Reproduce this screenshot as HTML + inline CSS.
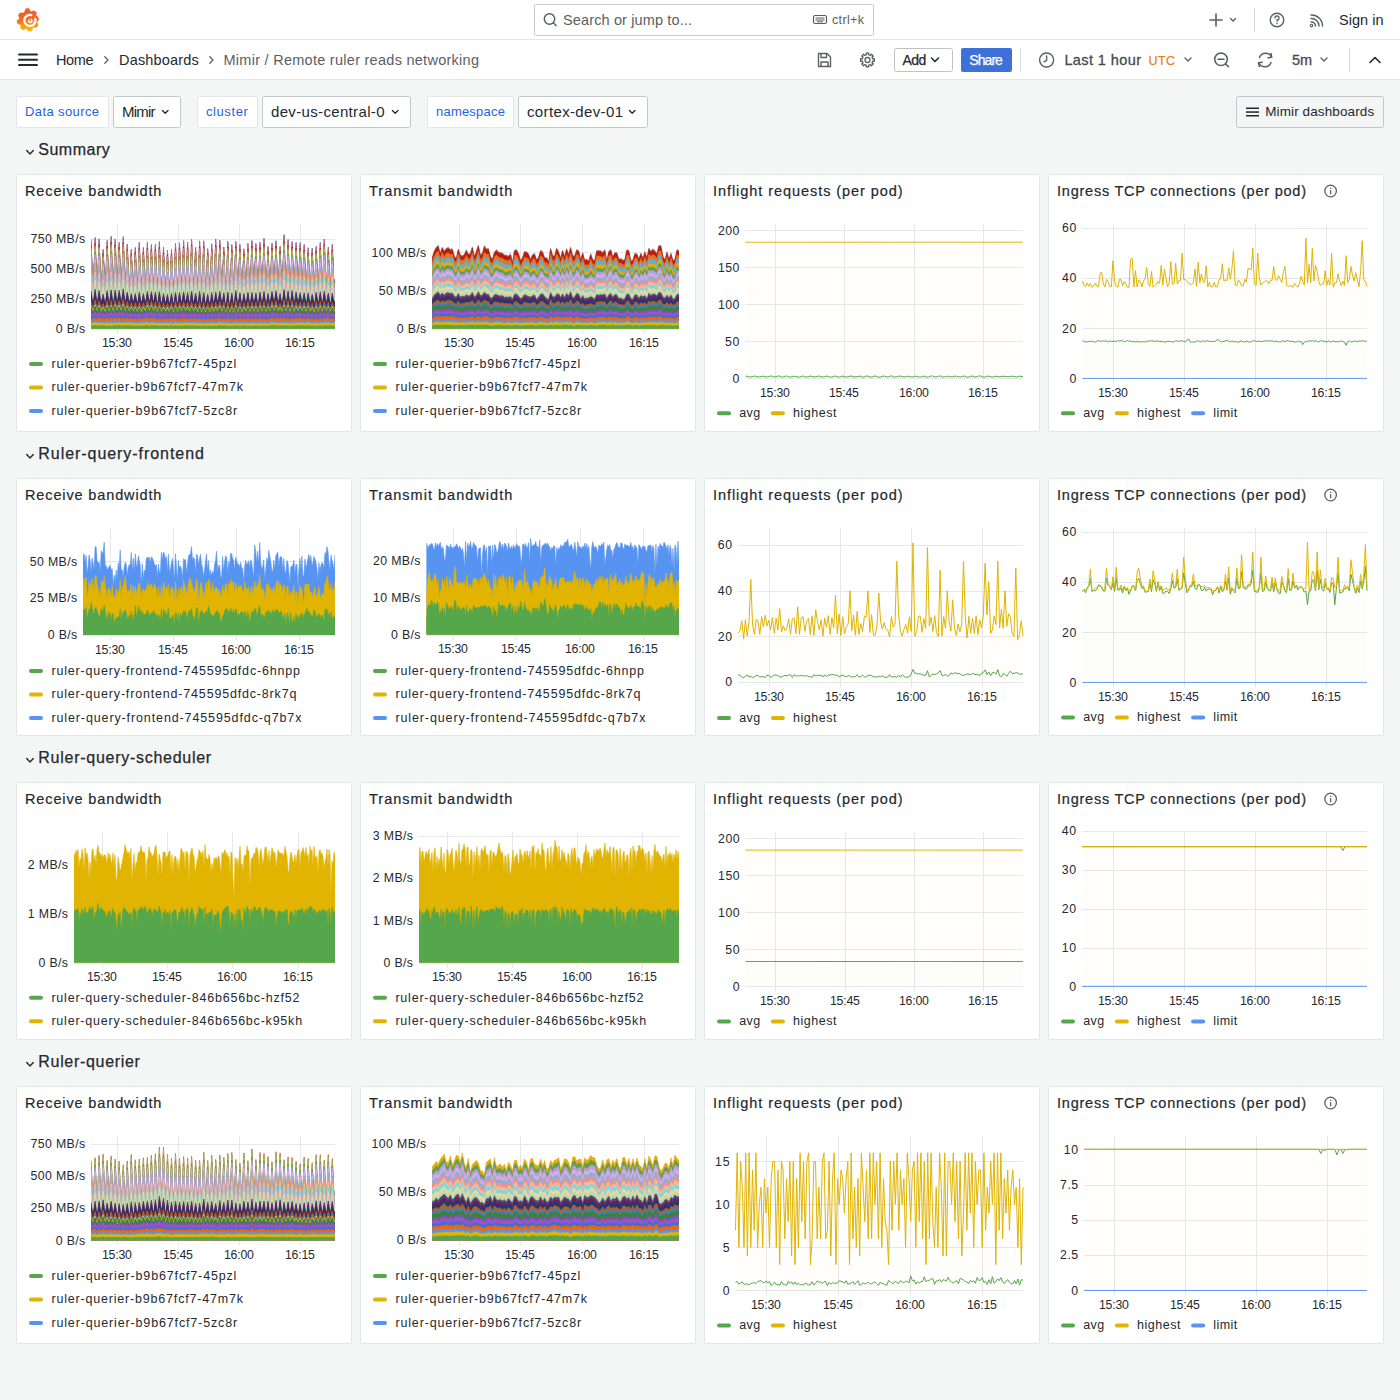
<!DOCTYPE html>
<html><head><meta charset="utf-8"><title>Mimir / Remote ruler reads networking - Dashboards - Grafana</title>
<style>html,body{margin:0;padding:0;width:1400px;height:1400px;overflow:hidden;background:#f4f5f5}
body{position:relative;font-family:"Liberation Sans",sans-serif}
svg text{font-family:"Liberation Sans",sans-serif}</style></head><body>
<svg width="1400" height="1400" viewBox="0 0 1400 1400" style="position:absolute;left:0;top:0">
<rect x="0" y="0" width="1400" height="1400" fill="#f4f5f5"/>
<rect x="0" y="0" width="1400" height="40" fill="#ffffff"/>
<rect x="0" y="39" width="1400" height="1" fill="#e4e6e7"/>
<rect x="0" y="40" width="1400" height="39" fill="#ffffff"/>
<rect x="0" y="79" width="1400" height="1" fill="#e4e6e7"/>
<defs><linearGradient id="lg" x1="0" y1="0" x2="0" y2="1"><stop offset="0" stop-color="#f05a28"/><stop offset="0.5" stop-color="#f26b21"/><stop offset="1" stop-color="#fbca0a"/></linearGradient></defs>
<path fill="url(#lg)" d="M24.21,11.98 L25.65,8.50 L28.92,8.22 L30.93,11.39 L31.08,11.44 L34.29,10.42 L36.70,12.44 L36.25,15.77 L36.09,15.50 L38.49,17.08 L38.90,20.00 L37.03,22.18 L37.07,22.02 L38.37,25.13 L36.56,27.71 L33.20,27.55 L33.07,27.63 L31.95,31.22 L28.71,31.79 L26.43,28.80 L26.28,28.77 L23.03,30.34 L20.39,28.48 L20.75,24.90 L20.84,25.03 L17.40,23.97 L16.73,20.81 L19.44,18.44 L19.44,18.44 L18.07,15.44 L19.72,12.80 L23.01,12.72 Z"/>
<path d="M35.21,18.98 L35.35,19.68 L35.40,20.40 L35.35,21.12 L35.21,21.82 L34.98,22.50 L34.66,23.15 L34.26,23.75 L33.79,24.29 L33.25,24.76 L32.65,25.16 L32.00,25.48 L31.32,25.71 L30.62,25.85 L29.90,25.90 L29.18,25.85 L28.48,25.71 L27.80,25.48 L27.15,25.16 L26.55,24.76 L26.01,24.29 L25.54,23.75 L25.14,23.15 L24.82,22.50 L24.59,21.82 L24.45,21.12 L24.40,20.40 L24.45,19.68 L24.59,18.98 L24.82,18.30 L25.14,17.65 L25.54,17.05 L26.01,16.51 L26.55,16.04 L27.15,15.64 L27.80,15.32 L28.48,15.09 L29.18,14.95 L29.90,14.90 L30.62,14.95 L31.32,15.09" fill="none" stroke="#ffffff" stroke-width="2.3" stroke-linecap="round"/>
<path d="M31.10,19.41 L31.25,19.51 L31.39,19.63 L31.52,19.76 L31.63,19.91 L31.72,20.06 L31.79,20.23 L31.85,20.40 L31.88,20.58 L31.90,20.76 L31.89,20.94 L31.87,21.12 L31.82,21.29 L31.76,21.46 L31.67,21.62 L31.57,21.77 L31.45,21.91 L31.32,22.03 L31.17,22.14 L31.01,22.23 L30.85,22.30 L30.67,22.36 L30.49,22.39 L30.31,22.40 L30.13,22.39 L29.95,22.36 L29.78,22.31 L29.61,22.24 L29.45,22.16 L29.30,22.05 L29.17,21.93 L29.05,21.80 L28.94,21.65 L28.86,21.49 L28.79,21.32 L28.74,21.15 L28.71,20.97 L28.70,20.79 L28.71,20.61 L28.74,20.43 L28.80,20.25" fill="none" stroke="#ffffff" stroke-width="1.6" stroke-linecap="round"/>
<rect x="534.5" y="4.5" width="339" height="31" fill="#ffffff" stroke="#c9cccf" stroke-width="1" rx="2"/>
<g fill="none" stroke="#5b5f63" stroke-width="1.5"><circle cx="549.5" cy="19" r="5.2"/><line x1="553.3" y1="22.8" x2="556.5" y2="26"/></g>
<text x="563.00" y="25.20" font-size="14.5" fill="#5b5f63" textLength="129.0" lengthAdjust="spacing">Search or jump to...</text>
<g fill="none" stroke="#5b5f63" stroke-width="1.2"><rect x="813.5" y="15.5" width="13" height="8" rx="1.5"/></g>
<g fill="#5b5f63"><rect x="815.5" y="17.5" width="9" height="1"/><rect x="815.5" y="19.5" width="9" height="1"/><rect x="817" y="21.3" width="6" height="1"/></g>
<text x="832.00" y="24.20" font-size="12.5" fill="#5b5f63" textLength="32.0" lengthAdjust="spacing">ctrl+k</text>
<g fill="none" stroke="#5b5f63" stroke-width="1.6" stroke-linecap="round"><line x1="1210" y1="20" x2="1222" y2="20"/><line x1="1216" y1="14" x2="1216" y2="26"/></g>
<path d="M1230.5,18.5 L1233,21 L1235.5,18.5" fill="none" stroke="#5b5f63" stroke-width="1.4" stroke-linecap="round" stroke-linejoin="round"/>
<rect x="1254" y="8" width="1" height="24" fill="#d5d7d9"/>
<g fill="none" stroke="#5b5f63" stroke-width="1.4"><circle cx="1277" cy="20" r="6.8"/></g>
<path d="M1275,18 A2,2 0 1 1 1277,20 L1277,21.3" fill="none" stroke="#5b5f63" stroke-width="1.3" stroke-linecap="round"/><circle cx="1277" cy="23.6" r="0.8" fill="#5b5f63"/>
<g fill="none" stroke="#5b5f63" stroke-width="1.4" stroke-linecap="round"><path d="M1311,15 A11,11 0 0 1 1322.5,26"/><path d="M1311,18.5 A7.5,7.5 0 0 1 1319,26"/><path d="M1311,22 A4,4 0 0 1 1315.5,26"/></g><circle cx="1311.5" cy="25.5" r="1.3" fill="none" stroke="#5b5f63" stroke-width="1.1"/>
<text x="1339.00" y="24.80" font-size="14.5" fill="#24292e" textLength="44.5" lengthAdjust="spacing">Sign in</text>
<g fill="#24292e"><rect x="18" y="53.5" width="20" height="2" rx="1"/><rect x="18" y="58.8" width="20" height="2" rx="1"/><rect x="18" y="64" width="20" height="2" rx="1"/></g>
<text x="56.00" y="64.80" font-size="14.5" fill="#24292e" textLength="37.5" lengthAdjust="spacing">Home</text>
<path d="M104.8,56.8 L108,60 L104.8,63.2" fill="none" stroke="#5b5f63" stroke-width="1.3" stroke-linecap="round" stroke-linejoin="round"/>
<text x="119.00" y="64.80" font-size="14.5" fill="#24292e" textLength="79.8" lengthAdjust="spacing">Dashboards</text>
<path d="M209.8,56.8 L213,60 L209.8,63.2" fill="none" stroke="#5b5f63" stroke-width="1.3" stroke-linecap="round" stroke-linejoin="round"/>
<text x="223.50" y="64.80" font-size="14.5" fill="#5b5f63" textLength="255.5" lengthAdjust="spacing">Mimir / Remote ruler reads networking</text>
<g fill="none" stroke="#5b5f63" stroke-width="1.4" stroke-linejoin="round"><path d="M818.5,53.5 L827,53.5 L830.5,57 L830.5,66.5 L818.5,66.5 Z"/><path d="M821,53.5 L821,57.5 L826.5,57.5 L826.5,53.5"/><path d="M821,66.5 L821,62 L828,62 L828,66.5"/></g>
<path d="M874.37,58.63 L874.37,61.37 L872.80,61.05 L871.99,63.00 L873.32,63.89 L871.39,65.82 L870.50,64.49 L868.55,65.30 L868.87,66.87 L866.13,66.87 L866.45,65.30 L864.50,64.49 L863.61,65.82 L861.68,63.89 L863.01,63.00 L862.20,61.05 L860.63,61.37 L860.63,58.63 L862.20,58.95 L863.01,57.00 L861.68,56.11 L863.61,54.18 L864.50,55.51 L866.45,54.70 L866.13,53.13 L868.87,53.13 L868.55,54.70 L870.50,55.51 L871.39,54.18 L873.32,56.11 L871.99,57.00 L872.80,58.95 Z" fill="none" stroke="#5b5f63" stroke-width="1.3" stroke-linejoin="round"/>
<circle cx="867.5" cy="60" r="2.5" fill="none" stroke="#5b5f63" stroke-width="1.3"/>
<rect x="894.5" y="48.5" width="58" height="23" fill="#ffffff" stroke="#bfc2c5" stroke-width="1" rx="2"/>
<text x="902.40" y="64.80" font-size="14" fill="#24292e" textLength="24.0" lengthAdjust="spacing" stroke="#24292e" stroke-width="0.25">Add</text>
<path d="M931.5,58 L935,61.5 L938.5,58" fill="none" stroke="#24292e" stroke-width="1.5" stroke-linecap="round" stroke-linejoin="round"/>
<rect x="961" y="48" width="51" height="24" fill="#3d71d9" rx="2"/>
<text x="969.30" y="64.80" font-size="14" fill="#ffffff" textLength="33.6" lengthAdjust="spacing" stroke="#ffffff" stroke-width="0.25">Share</text>
<rect x="1020" y="48" width="1" height="24" fill="#d5d7d9"/>
<g fill="none" stroke="#5b5f63" stroke-width="1.4" stroke-linecap="round"><circle cx="1046.6" cy="60" r="7"/><path d="M1046.6,56 L1046.6,60.3 L1044,61.8"/></g>
<text x="1064.40" y="65.20" font-size="14.5" fill="#464a50" textLength="76.6" lengthAdjust="spacing" stroke="#464a50" stroke-width="0.3">Last 1 hour</text>
<text x="1148.40" y="64.80" font-size="12.5" fill="#eb7b18" textLength="26.6" lengthAdjust="spacing" stroke="#eb7b18" stroke-width="0.2">UTC</text>
<path d="M1185,58 L1188,61 L1191,58" fill="none" stroke="#5b5f63" stroke-width="1.4" stroke-linecap="round" stroke-linejoin="round"/>
<g fill="none" stroke="#5b5f63" stroke-width="1.5" stroke-linecap="round"><circle cx="1221" cy="59.3" r="6.3"/><line x1="1218" y1="59.3" x2="1224" y2="59.3"/><line x1="1225.6" y1="63.9" x2="1228.5" y2="66.8"/></g>
<g fill="none" stroke="#5b5f63" stroke-width="1.5" stroke-linecap="round" stroke-linejoin="round"><path d="M1259.5,57.5 A6.5,6.5 0 0 1 1271.5,57"/><path d="M1271,53.5 L1271.7,57.3 L1268,57.8"/><path d="M1271,62.5 A6.5,6.5 0 0 1 1259,63"/><path d="M1259.3,66.5 L1258.5,62.7 L1262.2,62.2"/></g>
<text x="1292.00" y="65.20" font-size="14.5" fill="#464a50" textLength="20.0" lengthAdjust="spacing" stroke="#464a50" stroke-width="0.3">5m</text>
<path d="M1321,58 L1324,61 L1327,58" fill="none" stroke="#5b5f63" stroke-width="1.4" stroke-linecap="round" stroke-linejoin="round"/>
<rect x="1349" y="48" width="1" height="24" fill="#d5d7d9"/>
<path d="M1370,62.5 L1375,57.5 L1380,62.5" fill="none" stroke="#24292e" stroke-width="1.6" stroke-linecap="round" stroke-linejoin="round"/>
<rect x="16.5" y="96.5" width="92" height="31" fill="#ffffff" stroke="#e4e6e7" stroke-width="1" rx="2"/>
<text x="25.00" y="116.00" font-size="13" fill="#1f62e0" textLength="74.0" lengthAdjust="spacing">Data source</text>
<rect x="113.5" y="96.5" width="67" height="31" fill="#ffffff" stroke="#c4c7ca" stroke-width="1" rx="2"/>
<text x="122.00" y="117.00" font-size="15" fill="#24292e" textLength="33.4" lengthAdjust="spacing">Mimir</text>
<path d="M162.4,110.5 L165.2,113.3 L168.0,110.5" fill="none" stroke="#24292e" stroke-width="1.3" stroke-linecap="round" stroke-linejoin="round"/>
<rect x="197.5" y="96.5" width="60" height="31" fill="#ffffff" stroke="#e4e6e7" stroke-width="1" rx="2"/>
<text x="206.00" y="116.00" font-size="13" fill="#1f62e0" textLength="41.8" lengthAdjust="spacing">cluster</text>
<rect x="262.5" y="96.5" width="148" height="31" fill="#ffffff" stroke="#c4c7ca" stroke-width="1" rx="2"/>
<text x="271.00" y="117.00" font-size="15" fill="#24292e" textLength="113.5" lengthAdjust="spacing">dev-us-central-0</text>
<path d="M392.4,110.5 L395.2,113.3 L398.0,110.5" fill="none" stroke="#24292e" stroke-width="1.3" stroke-linecap="round" stroke-linejoin="round"/>
<rect x="427.5" y="96.5" width="86" height="31" fill="#ffffff" stroke="#e4e6e7" stroke-width="1" rx="2"/>
<text x="436.00" y="116.00" font-size="13" fill="#1f62e0" textLength="68.9" lengthAdjust="spacing">namespace</text>
<rect x="518.5" y="96.5" width="129" height="31" fill="#ffffff" stroke="#c4c7ca" stroke-width="1" rx="2"/>
<text x="527.00" y="117.00" font-size="15" fill="#24292e" textLength="96.0" lengthAdjust="spacing">cortex-dev-01</text>
<path d="M629.4,110.5 L632.2,113.3 L635.0,110.5" fill="none" stroke="#24292e" stroke-width="1.3" stroke-linecap="round" stroke-linejoin="round"/>
<rect x="1236.5" y="96.5" width="147" height="31" fill="none" stroke="#c4c7ca" stroke-width="1" rx="2"/>
<g fill="#24292e"><rect x="1246" y="107.5" width="13" height="1.5"/><rect x="1246" y="111.3" width="13" height="1.5"/><rect x="1246" y="115" width="13" height="1.5"/></g>
<text x="1265.20" y="116.20" font-size="13.5" fill="#24292e" textLength="109.0" lengthAdjust="spacing">Mimir dashboards</text>
<path d="M26.7,150.6 L30,153.9 L33.3,150.6" fill="none" stroke="#24292e" stroke-width="1.4" stroke-linecap="round" stroke-linejoin="round"/>
<text x="38.30" y="155.40" font-size="16" fill="#24292e" textLength="71.4" lengthAdjust="spacing" stroke="#24292e" stroke-width="0.25">Summary</text>
<path d="M26.7,454.6 L30,457.9 L33.3,454.6" fill="none" stroke="#24292e" stroke-width="1.4" stroke-linecap="round" stroke-linejoin="round"/>
<text x="38.30" y="459.40" font-size="16" fill="#24292e" textLength="165.6" lengthAdjust="spacing" stroke="#24292e" stroke-width="0.25">Ruler-query-frontend</text>
<path d="M26.7,758.6 L30,761.9 L33.3,758.6" fill="none" stroke="#24292e" stroke-width="1.4" stroke-linecap="round" stroke-linejoin="round"/>
<text x="38.30" y="763.40" font-size="16" fill="#24292e" textLength="172.9" lengthAdjust="spacing" stroke="#24292e" stroke-width="0.25">Ruler-query-scheduler</text>
<path d="M26.7,1062.6 L30,1065.9 L33.3,1062.6" fill="none" stroke="#24292e" stroke-width="1.4" stroke-linecap="round" stroke-linejoin="round"/>
<text x="38.30" y="1067.40" font-size="16" fill="#24292e" textLength="101.6" lengthAdjust="spacing" stroke="#24292e" stroke-width="0.25">Ruler-querier</text>
<rect x="16.5" y="174.5" width="335" height="257" fill="#ffffff" stroke="#e4e6e7" stroke-width="1" rx="2"/>
<text x="25.00" y="195.70" font-size="14.5" fill="#24292e" textLength="136.4" lengthAdjust="spacing" stroke="#24292e" stroke-width="0.2">Receive bandwidth</text>
<line x1="117.5" y1="223.6" x2="117.5" y2="333.7" stroke="#e6e7e8" stroke-width="1"/>
<text x="116.90" y="347.40" font-size="12.3" fill="#24292e" textLength="30.0" lengthAdjust="spacing" text-anchor="middle">15:30</text>
<line x1="178.5" y1="223.6" x2="178.5" y2="333.7" stroke="#e6e7e8" stroke-width="1"/>
<text x="177.90" y="347.40" font-size="12.3" fill="#24292e" textLength="30.0" lengthAdjust="spacing" text-anchor="middle">15:45</text>
<line x1="239.5" y1="223.6" x2="239.5" y2="333.7" stroke="#e6e7e8" stroke-width="1"/>
<text x="238.90" y="347.40" font-size="12.3" fill="#24292e" textLength="30.0" lengthAdjust="spacing" text-anchor="middle">16:00</text>
<line x1="300.5" y1="223.6" x2="300.5" y2="333.7" stroke="#e6e7e8" stroke-width="1"/>
<text x="299.90" y="347.40" font-size="12.3" fill="#24292e" textLength="30.0" lengthAdjust="spacing" text-anchor="middle">16:15</text>
<line x1="91.1" y1="239.5" x2="335" y2="239.5" stroke="#e6e7e8" stroke-width="1"/>
<text x="85.10" y="243.40" font-size="12.3" fill="#24292e" textLength="54.6" lengthAdjust="spacing" text-anchor="end">750 MB/s</text>
<line x1="91.1" y1="269.5" x2="335" y2="269.5" stroke="#e6e7e8" stroke-width="1"/>
<text x="85.10" y="273.23" font-size="12.3" fill="#24292e" textLength="54.6" lengthAdjust="spacing" text-anchor="end">500 MB/s</text>
<line x1="91.1" y1="299.5" x2="335" y2="299.5" stroke="#e6e7e8" stroke-width="1"/>
<text x="85.10" y="303.07" font-size="12.3" fill="#24292e" textLength="54.6" lengthAdjust="spacing" text-anchor="end">250 MB/s</text>
<line x1="91.1" y1="329.5" x2="335" y2="329.5" stroke="#e6e7e8" stroke-width="1"/>
<text x="85.10" y="332.90" font-size="12.3" fill="#24292e" textLength="29.4" lengthAdjust="spacing" text-anchor="end">0 B/s</text>
<clipPath id="c1"><rect x="91.1" y="178.7" width="243.9" height="150.0"/></clipPath><g clip-path="url(#c1)">
<path d="M91.1,239.3l1.3,40.7l1.4-2.6l1.3-40l1.4,40.4l1.3,0.5l1.3-39.5l1.4,39.7l1.3,1.5l1.4-30.7l1.3,30.4l1.3-0.1l1.4-39.3l1.3,38.2l1.4,3.5l1.3-45.8l1.3,43.6l1.4-0.2l1.3-40.6l1.4,38.5l1.3-1.9l1.3-33.4l1.4,35l1.3,0.8l1.4-41.4l1.3,42.2l1.3-0.6l1.4-34.2l1.3,36l1.4,1.4l1.3-32.1l1.3,31.8l1.4-1.2l1.3-32.5l1.4,32.8l1.3,0.6l1.3-38.5l1.4,38.3l1.3,1.1l1.4-34.3l1.3,30.8l1.3,0.5l1.4-36.3l1.3,36.6l1.4,0.2l1.3-34.7l1.3,32.8l1.4,3.4l1.3-36.5l1.4,38.1l1.3-0.2l1.3-40.5l1.4,40.7l1.3,0.5l1.4-35.5l1.3,32.8l1.3,2.2l1.4-32.3l1.3,33.6l1.4-2.3l1.3-31.9l1.3,33.2l1.4-0.4l1.3-38.9l1.4,39.6l1.3-1l1.3-39.1l1.4,38l1.3-1.6l1.4-38.6l1.3,40.1l1.3,1l1.4-39.6l1.3,38.9l1.4,0.1l1.3-41.7l1.3,41.8l1.4-2.2l1.3-31.7l1.4,34.5l1.3,2.4l1.3-43.4l1.4,42l1.3,1.1l1.4-43.1l1.3,43.7l1.3-1l1.4-35l1.3,33.2l1.4,2.7l1.3-40.7l1.3,37.1l1.4,0.3l1.3-42.1l1.4,40.5l1.3-0.3l1.4-39.1l1.3,39.2l1.3,3.7l1.4-36l1.3,38.5l1.4,0.4l1.3-44.7l1.3,44.3l1.4-0.8l1.3-40.3l1.4,40.7l1.3-3.4l1.3-40.5l1.4,40.3l1.3,1.2l1.4-38.7l1.3,39.4l1.3-0.3l1.4-34.4l1.3,30.8l1.4,2.5l1.3-38.7l1.3,38.1l1.4,0.3l1.3-41.3l1.4,39.9l1.3-0.2l1.3-36.8l1.4,39.3l1.3-1l1.4-39.5l1.3,38.9l1.3,0.8l1.4-43.7l1.3,42.9l1.4,1.3l1.3-36l1.3,35.2l1.4-3.9l1.3-34.7l1.4,35.2l1.3,0.3l1.3-37.7l1.4,38.5l1.3,1.9l1.4-35l1.3,36.2l1.3-3.4l1.4-44.4l1.3,45.3l1.4,1.7l1.3-42l1.3,40.2l1.4,4.3l1.3-42.6l1.4,39.5l1.3-0.7l1.3-37.9l1.4,35.5l1.3-0.6l1.4-34.6l1.3,36.7l1.3,0.2l1.4-35.1l1.3,36.1l1.4-0.9l1.3-31.9l1.3,32.5l1.4,2.7l1.3-34.9l1.4,33.3l1.3,1.7l1.3-36.7l1.4,34l1.3,1.3l1.4-39.3l1.3,40.4l1.3-1.9l1.4-41.8l1.3,39.7l1.4,1.6l1.3-33.2l1.3,34.7l1.4,1.8l1.3-39.5l1.4,36.9l1.3-2.1L337.0,278.9L337.0,331.7L89.1,331.7L89.1,239.3Z" fill="#8C6A9C" stroke="#8C6A9C" stroke-width="1.0"/>
<path d="M91.1,241.2l1.3,39.6l1.4-2.4l1.3-39l1.4,39.3l1.3,0.4l1.3-38.3l1.4,38.6l1.3,1.8l1.4-30.3l1.3,29.7l1.3-0.3l1.4-37.9l1.3,37l1.4,3.5l1.3-44.5l1.3,42.2l1.4,0l1.3-39.6l1.4,37.5l1.3-1.8l1.3-32.3l1.4,33.7l1.3,0.8l1.4-40.3l1.3,41.1l1.3-0.7l1.4-33.1l1.3,35l1.4,1.1l1.3-31.1l1.3,30.9l1.4-1l1.3-31.7l1.4,31.8l1.3,0.7l1.3-37.3l1.4,37.2l1.3,0.9l1.4-33l1.3,29.6l1.3,0.5l1.4-35.1l1.3,35.5l1.4,0.2l1.3-33.7l1.3,31.7l1.4,3.5l1.3-35.7l1.4,37.1l1.3,0l1.3-39.5l1.4,39.6l1.3,0.5l1.4-34.4l1.3,31.7l1.3,2.3l1.4-31.3l1.3,32.6l1.4-2.2l1.3-31.2l1.3,32.4l1.4-0.5l1.3-37.8l1.4,38.4l1.3-0.9l1.3-38.1l1.4,37.1l1.3-1.8l1.4-37.3l1.3,38.8l1.3,1l1.4-38.3l1.3,37.7l1.4,0.1l1.3-40.6l1.3,41l1.4-2.5l1.3-30.6l1.4,33.3l1.3,2.5l1.3-42.2l1.4,40.9l1.3,1.2l1.4-42.1l1.3,42.4l1.3-0.9l1.4-34.1l1.3,32.2l1.4,3.1l1.3-39.8l1.3,36.1l1.4,0.1l1.3-40.6l1.4,38.9l1.3,0l1.4-38.1l1.3,37.9l1.3,3.8l1.4-34.8l1.3,37.3l1.4,0.4l1.3-43.5l1.3,42.9l1.4-0.7l1.3-39l1.4,39.4l1.3-3.4l1.3-39.4l1.4,39.5l1.3,0.9l1.4-37.4l1.3,38.2l1.3-0.3l1.4-33.3l1.3,29.9l1.4,2.3l1.3-37.5l1.3,37.1l1.4,0.3l1.3-40.2l1.4,38.6l1.3-0.2l1.3-35.6l1.4,38l1.3-0.9l1.4-38.2l1.3,37.7l1.3,0.7l1.4-42.5l1.3,41.8l1.4,1.2l1.3-34.8l1.3,34l1.4-3.7l1.3-33.9l1.4,34.4l1.3,0.2l1.3-36.6l1.4,37.3l1.3,2l1.4-34l1.3,35l1.3-3.3l1.4-42.9l1.3,44.1l1.4,1.3l1.3-40.6l1.3,39l1.4,4.2l1.3-41.5l1.4,38.2l1.3-0.5l1.3-36.7l1.4,34.5l1.3-0.6l1.4-33.6l1.3,35.5l1.3,0.4l1.4-34.3l1.3,35.4l1.4-1l1.3-31l1.3,31.5l1.4,2.6l1.3-33.7l1.4,32l1.3,1.9l1.3-35.7l1.4,32.9l1.3,1.3l1.4-38.3l1.3,39.6l1.3-2.1l1.4-40.8l1.3,38.8l1.4,1.4l1.3-32.1l1.3,33.8l1.4,1.8l1.3-38.5l1.4,35.7l1.3-1.8L337.0,279.9L337.0,331.7L89.1,331.7L89.1,241.2Z" fill="#A0769A" stroke="#A0769A" stroke-width="1.0"/>
<path d="M91.1,245.4l1.3,36.9l1.4-2l1.3-36.6l1.4,36.8l1.3,0.5l1.3-36.3l1.4,36.5l1.3,1.7l1.4-28.9l1.3,28.2l1.3-0.3l1.4-35.7l1.3,35l1.4,3l1.3-41.8l1.3,39.4l1.4,0.2l1.3-37.1l1.4,35.1l1.3-1.3l1.3-31.1l1.4,32.3l1.3,0.6l1.4-37.8l1.3,38.7l1.3-0.7l1.4-31.3l1.3,33.1l1.4,0.9l1.3-29.1l1.3,29l1.4-0.9l1.3-29.9l1.4,30l1.3,0.8l1.3-35.4l1.4,35.1l1.3,1.2l1.4-31.4l1.3,27.8l1.3,0.7l1.4-33.1l1.3,33.2l1.4-0.3l1.3-31.3l1.3,30.3l1.4,2.9l1.3-33.4l1.4,34.9l1.3,0.1l1.3-37.2l1.4,37.1l1.3,0.2l1.4-31.9l1.3,29.3l1.3,2.7l1.4-29.6l1.3,30.6l1.4-2.1l1.3-29.6l1.3,30.4l1.4,0.5l1.3-35.9l1.4,36.1l1.3-1.1l1.3-36.1l1.4,34.9l1.3-1.4l1.4-34.8l1.3,36.3l1.3,1.1l1.4-36.4l1.3,35.6l1.4-0.1l1.3-38.4l1.3,39.1l1.4-2.6l1.3-28.8l1.4,31.2l1.3,2.7l1.3-39.7l1.4,38.7l1.3,1l1.4-39.9l1.3,40.2l1.3-1.1l1.4-32.3l1.3,30.9l1.4,2.6l1.3-37.6l1.3,34.2l1.4,0.2l1.3-37.9l1.4,35.7l1.3,0.3l1.4-36.1l1.3,35.8l1.3,3.5l1.4-32.5l1.3,35.3l1.4,0.4l1.3-41.2l1.3,40.4l1.4-0.5l1.3-36.6l1.4,37l1.3-3.3l1.3-37.2l1.4,37.1l1.3,1.1l1.4-35.5l1.3,36.3l1.3-0.2l1.4-31.5l1.3,28.1l1.4,2.2l1.3-35.3l1.3,35l1.4,0.5l1.3-38.4l1.4,36.4l1.3,0l1.3-33.9l1.4,36.5l1.3-0.8l1.4-36.7l1.3,36l1.3,0.3l1.4-39.5l1.3,39.3l1.4,1.1l1.3-32.8l1.3,31.8l1.4-3.5l1.3-32.1l1.4,32.5l1.3,0.4l1.3-34.8l1.4,35.2l1.3,1.8l1.4-31.7l1.3,33l1.3-3.4l1.4-40l1.3,41.4l1.4,0.6l1.3-37.7l1.3,36.7l1.4,4l1.3-39.1l1.4,36.1l1.3-0.3l1.3-34.7l1.4,32.2l1.3-0.5l1.4-31.6l1.3,33.4l1.3,0.6l1.4-32.2l1.3,32.9l1.4-1.3l1.3-28.5l1.3,29.4l1.4,2.7l1.3-32.1l1.4,30.1l1.3,2l1.3-33.9l1.4,31.2l1.3,1.2l1.4-35.8l1.3,37.1l1.3-1.9l1.4-38.8l1.3,36.9l1.4,1.1l1.3-29.9l1.3,31.6l1.4,2l1.3-36.5l1.4,33.3l1.3-1.4L337.0,281.5L337.0,331.7L89.1,331.7L89.1,245.4Z" fill="#BF1B00" stroke="#BF1B00" stroke-width="1.0"/>
<path d="M91.1,246.7l1.3,36.1l1.4-1.9l1.3-35.8l1.4,36l1.3,0.6l1.3-35.7l1.4,35.7l1.3,1.9l1.4-28.4l1.3,27.5l1.3-0.2l1.4-34.8l1.3,34.1l1.4,3.1l1.3-41l1.3,38.4l1.4,0.2l1.3-36.2l1.4,34.3l1.3-1.2l1.3-30.5l1.4,31.6l1.3,0.7l1.4-37.1l1.3,37.9l1.3-0.7l1.4-30.7l1.3,32.4l1.4,1.1l1.3-28.7l1.3,28.5l1.4-1l1.3-29l1.4,29.1l1.3,0.8l1.3-34.6l1.4,34.4l1.3,1l1.4-30.6l1.3,27.2l1.3,0.7l1.4-32.4l1.3,32.6l1.4-0.4l1.3-30.7l1.3,29.8l1.4,2.9l1.3-32.8l1.4,34.2l1.3,0.1l1.3-36.4l1.4,36.4l1.3-0.1l1.4-31.1l1.3,28.6l1.3,2.6l1.4-28.9l1.3,30l1.4-2.1l1.3-29.1l1.3,30l1.4,0.4l1.3-35.2l1.4,35.4l1.3-1l1.3-35.3l1.4,34l1.3-1.3l1.4-34l1.3,35.4l1.3,1.2l1.4-35.6l1.3,34.9l1.4-0.4l1.3-37.4l1.3,38.2l1.4-2.4l1.3-28.3l1.4,30.5l1.3,2.5l1.3-38.5l1.4,37.7l1.3,1l1.4-39.2l1.3,39.6l1.3-1.2l1.4-31.5l1.3,30.1l1.4,2.7l1.3-36.9l1.3,33.4l1.4,0.2l1.3-37.1l1.4,35l1.3,0.3l1.4-35.3l1.3,35.1l1.3,3.3l1.4-31.6l1.3,34.4l1.4,0.5l1.3-40.4l1.3,39.4l1.4-0.3l1.3-35.9l1.4,36.2l1.3-3.2l1.3-36.5l1.4,36.4l1.3,1l1.4-34.6l1.3,35.4l1.3-0.2l1.4-30.8l1.3,27.6l1.4,1.9l1.3-34.4l1.3,34.1l1.4,0.7l1.3-37.5l1.4,35.5l1.3-0.2l1.3-32.9l1.4,35.6l1.3-0.8l1.4-35.8l1.3,35.1l1.3,0.3l1.4-38.5l1.3,38.4l1.4,1.1l1.3-32l1.3,31l1.4-3.5l1.3-31.5l1.4,32l1.3,0.3l1.3-34l1.4,34.5l1.3,1.7l1.4-31.1l1.3,32.5l1.3-3.6l1.4-39l1.3,40.5l1.4,0.6l1.3-37l1.3,36.1l1.4,3.9l1.3-38.4l1.4,35.5l1.3-0.5l1.3-33.9l1.4,31.5l1.3-0.5l1.4-30.7l1.3,32.4l1.3,0.7l1.4-31.6l1.3,32.3l1.4-1.3l1.3-28l1.3,28.8l1.4,2.7l1.3-31.3l1.4,29.3l1.3,2.2l1.3-33.3l1.4,30.5l1.3,1.3l1.4-35.2l1.3,36.4l1.3-1.9l1.4-38.1l1.3,36.3l1.4,0.9l1.3-29.1l1.3,30.8l1.4,2l1.3-35.8l1.4,32.7l1.3-1.3L337.0,282.2L337.0,331.7L89.1,331.7L89.1,246.7Z" fill="#E0752D" stroke="#E0752D" stroke-width="1.0"/>
<path d="M91.1,248.7l1.3,35.1l1.4-1.9l1.3-34.7l1.4,34.9l1.3,0.4l1.3-34.5l1.4,34.7l1.3,1.7l1.4-27.5l1.3,26.8l1.3-0.4l1.4-33.7l1.3,33.1l1.4,3l1.3-39.5l1.3,37l1.4,0.3l1.3-35.2l1.4,33.3l1.3-1.4l1.3-29.4l1.4,30.6l1.3,0.8l1.4-35.8l1.3,36.5l1.3-0.8l1.4-29.4l1.3,31.2l1.4,0.9l1.3-27.6l1.3,27.3l1.4-0.6l1.3-28.1l1.4,28l1.3,0.9l1.3-33.5l1.4,33.1l1.3,1.2l1.4-29.8l1.3,26.5l1.3,0.4l1.4-31.1l1.3,31.7l1.4-0.7l1.3-29.8l1.3,28.9l1.4,2.9l1.3-31.9l1.4,33.4l1.3,0.1l1.3-35.2l1.4,35.2l1.3-0.1l1.4-30l1.3,27.4l1.3,2.8l1.4-28.2l1.3,28.9l1.4-2l1.3-28.1l1.3,29.1l1.4,0.3l1.3-34.1l1.4,34.5l1.3-1.1l1.3-33.9l1.4,32.9l1.3-1.7l1.4-32.4l1.3,34l1.3,1.2l1.4-34.4l1.3,33.6l1.4-0.4l1.3-36.1l1.3,37.1l1.4-2.7l1.3-27.2l1.4,29.4l1.3,2.6l1.3-37.2l1.4,36.2l1.3,1.1l1.4-38l1.3,38.3l1.3-0.9l1.4-30.5l1.3,29l1.4,2.5l1.3-35.6l1.3,32.4l1.4,0.4l1.3-36.1l1.4,33.9l1.3-0.2l1.4-33.6l1.3,33.8l1.3,3.3l1.4-30.7l1.3,33.3l1.4,0.5l1.3-39l1.3,38.2l1.4-0.5l1.3-34.7l1.4,35l1.3-3l1.3-35.4l1.4,35.2l1.3,1l1.4-33.6l1.3,34.4l1.3-0.1l1.4-30l1.3,26.8l1.4,1.8l1.3-33.2l1.3,33.3l1.4,0.3l1.3-36.2l1.4,34.2l1.3,0l1.3-32l1.4,34.5l1.3-0.8l1.4-34.5l1.3,33.7l1.3,0.4l1.4-37.3l1.3,37.2l1.4,1l1.3-30.9l1.3,30l1.4-3.4l1.3-30.4l1.4,30.9l1.3,0.2l1.3-32.7l1.4,33.2l1.3,1.7l1.4-29.9l1.3,31.2l1.3-3.6l1.4-37.6l1.3,39.4l1.4,0.5l1.3-35.8l1.3,34.9l1.4,3.8l1.3-37.4l1.4,34.6l1.3-0.5l1.3-33l1.4,30.6l1.3-0.7l1.4-29.3l1.3,31l1.3,0.9l1.4-30.4l1.3,31.1l1.4-1.4l1.3-27.1l1.3,27.8l1.4,2.8l1.3-30.2l1.4,28.2l1.3,2.2l1.3-32.4l1.4,29.8l1.3,1.3l1.4-34.2l1.3,35l1.3-1.7l1.4-36.7l1.3,35.1l1.4,0.7l1.3-28.1l1.3,29.9l1.4,1.8l1.3-34.4l1.4,31.2l1.3-1L337.0,283.1L337.0,331.7L89.1,331.7L89.1,248.7Z" fill="#64B0C8" stroke="#64B0C8" stroke-width="1.0"/>
<path d="M91.1,250.9l1.3,33.8l1.4-2.1l1.3-33.6l1.4,34.2l1.3,0.1l1.3-33.2l1.4,33.6l1.3,1.8l1.4-26.9l1.3,26.1l1.3-0.6l1.4-32.4l1.3,31.7l1.4,3l1.3-38l1.3,35.8l1.4,0.1l1.3-33.9l1.4,32.1l1.3-1.2l1.3-28.7l1.4,29.5l1.3,1l1.4-34.6l1.3,35.3l1.3-0.9l1.4-28.5l1.3,30.6l1.4,0.6l1.3-26.8l1.3,26.6l1.4-0.5l1.3-27.3l1.4,27l1.3,1.1l1.3-32.6l1.4,31.9l1.3,1.2l1.4-28.8l1.3,25.7l1.3,0.5l1.4-30.3l1.3,30.9l1.4-0.8l1.3-29.1l1.3,28.3l1.4,2.7l1.3-30.8l1.4,32.2l1.3,0l1.3-33.8l1.4,34.2l1.3-0.5l1.4-28.7l1.3,26.4l1.3,2.6l1.4-27.3l1.3,28.2l1.4-1.9l1.3-27.3l1.3,28l1.4,0.5l1.3-32.9l1.4,33.1l1.3-1l1.3-32.6l1.4,31.6l1.3-1.5l1.4-31.6l1.3,33.1l1.3,1.2l1.4-33.4l1.3,32.5l1.4-0.4l1.3-34.7l1.3,35.7l1.4-2.4l1.3-26.6l1.4,28.7l1.3,2.6l1.3-36.1l1.4,35.1l1.3,0.9l1.4-36.7l1.3,36.9l1.3-0.9l1.4-29.5l1.3,28.3l1.4,2.4l1.3-34.7l1.3,31.4l1.4,0.5l1.3-34.9l1.4,32.7l1.3,0l1.4-32.6l1.3,32.6l1.3,3.1l1.4-29.5l1.3,32.2l1.4,0.3l1.3-37.6l1.3,37.1l1.4-0.7l1.3-33.3l1.4,33.7l1.3-3l1.3-34.3l1.4,34.1l1.3,0.9l1.4-32.3l1.3,33.1l1.3-0.1l1.4-29.1l1.3,26l1.4,1.8l1.3-32.1l1.3,32.3l1.4,0.3l1.3-34.9l1.4,32.8l1.3,0.2l1.3-31.2l1.4,33.5l1.3-0.9l1.4-33.2l1.3,32.5l1.3,0.6l1.4-36.2l1.3,35.9l1.4,0.9l1.3-29.8l1.3,29l1.4-3.4l1.3-29.4l1.4,29.9l1.3,0.1l1.3-31.3l1.4,32.1l1.3,1.5l1.4-28.5l1.3,29.7l1.3-3.5l1.4-36l1.3,37.8l1.4,0.6l1.3-34.7l1.3,33.8l1.4,3.8l1.3-36.2l1.4,33.4l1.3-0.7l1.3-31.6l1.4,29.5l1.3-0.8l1.4-28.2l1.3,30l1.3,0.7l1.4-29.4l1.3,30.1l1.4-1.3l1.3-26.3l1.3,27l1.4,2.6l1.3-29l1.4,27l1.3,2.3l1.3-31.5l1.4,28.9l1.3,1.4l1.4-33.4l1.3,34.1l1.3-1.8l1.4-35.4l1.3,33.9l1.4,0.7l1.3-27.2l1.3,28.9l1.4,1.9l1.3-33.2l1.4,30.2l1.3-1.4L337.0,283.7L337.0,331.7L89.1,331.7L89.1,250.9Z" fill="#E5AC0E" stroke="#E5AC0E" stroke-width="1.0"/>
<path d="M91.1,253.6l1.3,32.4l1.4-2.1l1.3-32.2l1.4,32.6l1.3,0.1l1.3-31.4l1.4,31.9l1.3,1.5l1.4-25.3l1.3,24.8l1.3-0.6l1.4-31l1.3,30.4l1.4,2.7l1.3-35.9l1.3,34.1l1.4-0.1l1.3-32.4l1.4,30.9l1.3-1.7l1.3-27.2l1.4,28.4l1.3,0.8l1.4-33.1l1.3,33.7l1.3-0.7l1.4-27.2l1.3,28.9l1.4,0.9l1.3-25.6l1.3,25.1l1.4-0.4l1.3-25.9l1.4,25.8l1.3,1.2l1.3-31.3l1.4,30.3l1.3,1.2l1.4-27.5l1.3,24.6l1.3,0.6l1.4-28.8l1.3,29.2l1.4-0.8l1.3-27.5l1.3,26.7l1.4,2.8l1.3-29.6l1.4,30.8l1.3,0.1l1.3-32.4l1.4,32.7l1.3-0.1l1.4-27.7l1.3,25.3l1.3,2.1l1.4-25.6l1.3,26.5l1.4-1.5l1.3-26l1.3,26.6l1.4,0.5l1.3-31.2l1.4,31.2l1.3-0.8l1.3-30.9l1.4,29.7l1.3-1.3l1.4-29.7l1.3,31.1l1.3,1.3l1.4-31.7l1.3,31l1.4-0.5l1.3-33.3l1.3,34.1l1.4-2.4l1.3-25.1l1.4,27.3l1.3,2.4l1.3-34.3l1.4,33.7l1.3,0.6l1.4-34.9l1.3,35l1.3-0.7l1.4-28.2l1.3,27l1.4,2.1l1.3-33l1.3,29.9l1.4,0.8l1.3-33.5l1.4,31.3l1.3,0l1.4-31l1.3,30.6l1.3,3.2l1.4-28.1l1.3,30.9l1.4-0.1l1.3-35.7l1.3,35.4l1.4-0.5l1.3-31.9l1.4,32.2l1.3-2.9l1.3-32.7l1.4,32.3l1.3,0.9l1.4-30.5l1.3,31.3l1.3,0.2l1.4-28.1l1.3,25l1.4,1.9l1.3-30.4l1.3,30.3l1.4,0.3l1.3-33.3l1.4,31.3l1.3,0.3l1.3-29.9l1.4,32.2l1.3-1.1l1.4-31.7l1.3,30.9l1.3,0.6l1.4-34.1l1.3,34l1.4,1l1.3-28.4l1.3,27.6l1.4-3.5l1.3-27.8l1.4,28.3l1.3,0.1l1.3-29.5l1.4,30.3l1.3,1.8l1.4-27.5l1.3,28.3l1.3-3.2l1.4-34.3l1.3,36.1l1.4,0.3l1.3-33l1.3,32.8l1.4,3l1.3-34.5l1.4,31.8l1.3-0.6l1.3-30.2l1.4,28.3l1.3-1l1.4-26.6l1.3,28.4l1.3,0.7l1.4-27.8l1.3,28.6l1.4-1.1l1.3-25.3l1.3,25.6l1.4,2.5l1.3-27.3l1.4,25.7l1.3,2.3l1.3-30.3l1.4,27.6l1.3,1.3l1.4-31.8l1.3,32.6l1.3-2l1.4-33.6l1.3,32.3l1.4,0.7l1.3-25.5l1.3,27l1.4,2l1.3-31.7l1.4,28.8l1.3-1.2L337.0,285.1L337.0,331.7L89.1,331.7L89.1,253.6Z" fill="#629E51" stroke="#629E51" stroke-width="1.0"/>
<path d="M91.1,256.4l1.3,30.5l1.4-1.7l1.3-30.8l1.4,31.2l1.3,0.1l1.3-29.8l1.4,30.3l1.3,1.4l1.4-24l1.3,23.6l1.3-0.7l1.4-29.5l1.3,28.8l1.4,2.4l1.3-33.9l1.3,32.3l1.4,0.2l1.3-30.9l1.4,29.3l1.3-1.5l1.3-26.2l1.4,27.2l1.3,0.7l1.4-31.7l1.3,32.4l1.3-0.7l1.4-25.8l1.3,27.2l1.4,0.9l1.3-24.1l1.3,23.9l1.4-0.6l1.3-24.4l1.4,24.3l1.3,1.3l1.3-29.6l1.4,28.7l1.3,0.9l1.4-26l1.3,23.4l1.3,0.6l1.4-27.5l1.3,28.1l1.4-1.1l1.3-26l1.3,25.5l1.4,2.6l1.3-28.1l1.4,29.2l1.3,0.2l1.3-30.9l1.4,31l1.3-0.1l1.4-26.1l1.3,23.6l1.3,2.1l1.4-24.3l1.3,25.4l1.4-1.6l1.3-24.7l1.3,25.4l1.4,0.4l1.3-29.7l1.4,29.7l1.3-0.9l1.3-28.8l1.4,27.9l1.3-1.3l1.4-28.1l1.3,29.4l1.3,1.3l1.4-30l1.3,29l1.4,0l1.3-31.7l1.3,32.5l1.4-2.5l1.3-23.7l1.4,25.9l1.3,2.1l1.3-32.4l1.4,31.8l1.3,0.5l1.4-33.1l1.3,33.5l1.3-0.7l1.4-26.6l1.3,25.3l1.4,2.3l1.3-31.6l1.3,28.5l1.4,0.8l1.3-32l1.4,29.8l1.3-0.2l1.4-29.3l1.3,29l1.3,3l1.4-26.4l1.3,29.4l1.4-0.1l1.3-34.1l1.3,33.8l1.4-0.6l1.3-30.2l1.4,30.5l1.3-2.9l1.3-31l1.4,30.8l1.3,0.8l1.4-28.7l1.3,29.3l1.3,0.1l1.4-26.4l1.3,23.7l1.4,1.7l1.3-28.6l1.3,28.8l1.4-0.1l1.3-31.4l1.4,29.7l1.3,0.3l1.3-28.4l1.4,30.6l1.3-1.1l1.4-30.2l1.3,29.4l1.3,0.7l1.4-32.5l1.3,32.3l1.4,1.1l1.3-27l1.3,26.1l1.4-3.5l1.3-26.3l1.4,27l1.3,0.4l1.3-28.4l1.4,28.5l1.3,1.7l1.4-25.5l1.3,26.9l1.3-3.5l1.4-32.5l1.3,34.4l1.4,0.1l1.3-31.2l1.3,31.4l1.4,2.3l1.3-32.5l1.4,30.1l1.3-0.2l1.3-28.9l1.4,26.8l1.3-1l1.4-24.9l1.3,26.7l1.3,0.7l1.4-26.7l1.3,27.8l1.4-1.4l1.3-24.2l1.3,24.7l1.4,2l1.3-25.7l1.4,23.9l1.3,2.6l1.3-28.7l1.4,26l1.3,1.6l1.4-30.6l1.3,31.2l1.3-1.9l1.4-31.9l1.3,30.6l1.4,0.9l1.3-24.5l1.3,25.7l1.4,1.8l1.3-29.8l1.4,27.2l1.3-1.2L337.0,286.3L337.0,331.7L89.1,331.7L89.1,256.4Z" fill="#AEA2E0" stroke="#AEA2E0" stroke-width="1.0"/>
<path d="M91.1,260.8l1.3,28l1.4-2.2l1.3-27.6l1.4,28.3l1.3,0.6l1.3-27.4l1.4,27.1l1.3,1.7l1.4-22.2l1.3,21.6l1.3-0.4l1.4-27l1.3,26.6l1.4,2.2l1.3-31.4l1.3,30.2l1.4,0.1l1.3-28.8l1.4,26.9l1.3-1.4l1.3-24l1.4,24.9l1.3,0.4l1.4-29l1.3,29.8l1.3-0.4l1.4-23.6l1.3,25l1.4,0.4l1.3-21.6l1.3,21.7l1.4-0.7l1.3-22.4l1.4,22.5l1.3,1.4l1.3-27.5l1.4,26.4l1.3,1l1.4-23.7l1.3,21l1.3,0.7l1.4-25.2l1.3,25.5l1.4-0.8l1.3-24l1.3,23.7l1.4,2.1l1.3-25.4l1.4,27l1.3-0.2l1.3-28.4l1.4,28.5l1.3-0.2l1.4-23.5l1.3,21.6l1.3,1.9l1.4-22.4l1.3,23.3l1.4-1.5l1.3-22.7l1.3,23.3l1.4,0.3l1.3-27.1l1.4,27.3l1.3-1.2l1.3-26.3l1.4,25.6l1.3-1.1l1.4-25.8l1.3,26.8l1.3,1.2l1.4-27.6l1.3,26.9l1.4-0.6l1.3-28.5l1.3,29.9l1.4-2.8l1.3-21.7l1.4,23.8l1.3,2l1.3-29.5l1.4,29.4l1.3,0.3l1.4-30.6l1.3,30.8l1.3-0.6l1.4-24l1.3,22.4l1.4,3l1.3-29.1l1.3,25.7l1.4,0.8l1.3-29.5l1.4,27.5l1.3-0.4l1.4-26.6l1.3,26.4l1.3,2.9l1.4-24.5l1.3,27.5l1.4-0.2l1.3-30.9l1.3,30.7l1.4-0.9l1.3-27.4l1.4,27.8l1.3-2.7l1.3-28.9l1.4,28.5l1.3,1.3l1.4-26.7l1.3,27.1l1.3-0.1l1.4-24.2l1.3,21.7l1.4,1.5l1.3-26.4l1.3,26.8l1.4-0.6l1.3-28.6l1.4,27.3l1.3,0l1.3-25.8l1.4,28l1.3-0.6l1.4-28l1.3,26.9l1.3,0.6l1.4-30.1l1.3,30.1l1.4,1.1l1.3-24.6l1.3,23.5l1.4-3.1l1.3-24.3l1.4,24.6l1.3,0.9l1.3-26.2l1.4,26l1.3,1.6l1.4-23.2l1.3,24.5l1.3-2.9l1.4-29.8l1.3,31.5l1.4-0.2l1.3-28.7l1.3,28.9l1.4,2.2l1.3-30.1l1.4,27.4l1.3,0.3l1.3-26.3l1.4,24.2l1.3-0.7l1.4-23.2l1.3,25.1l1.3-0.3l1.4-23.6l1.3,25.4l1.4-1.3l1.3-21.9l1.3,22.5l1.4,1.5l1.3-23.7l1.4,22.2l1.3,2.4l1.3-26.7l1.4,24.5l1.3,0.9l1.4-27.5l1.3,28.7l1.3-2.3l1.4-28.9l1.3,27.8l1.4,0.7l1.3-22.4l1.3,24.1l1.4,1.5l1.3-28.1l1.4,25.6l1.3-1.1L337.0,288.3L337.0,331.7L89.1,331.7L89.1,260.8Z" fill="#E5A8E2" stroke="#E5A8E2" stroke-width="1.0"/>
<path d="M91.1,264.8l1.3,25.8l1.4-1.8l1.3-25.3l1.4,26l1.3,0.1l1.3-24.9l1.4,24.7l1.3,1.6l1.4-20l1.3,19.6l1.3-0.1l1.4-25.1l1.3,24.3l1.4,1.8l1.3-28.5l1.3,27.6l1.4,0.1l1.3-26l1.4,24.3l1.3-1.6l1.3-21.6l1.4,22.8l1.3,0.5l1.4-26.6l1.3,27.3l1.3-0.2l1.4-21.8l1.3,22.7l1.4,0.4l1.3-19.4l1.3,19.5l1.4-1.1l1.3-19.8l1.4,20.3l1.3,1.3l1.3-24.8l1.4,23.5l1.3,1.3l1.4-21.4l1.3,18.7l1.3,0.5l1.4-22.7l1.3,23.3l1.4-0.7l1.3-22.1l1.3,21.9l1.4,1.6l1.3-23l1.4,24.8l1.3-0.5l1.3-25.3l1.4,25.8l1.3-0.3l1.4-21.6l1.3,19.9l1.3,1.6l1.4-20.2l1.3,21.5l1.4-1.6l1.3-20.7l1.3,20.8l1.4,0.7l1.3-24.5l1.4,24.6l1.3-1.2l1.3-24l1.4,23.8l1.3-1.4l1.4-23.4l1.3,24.2l1.3,0.9l1.4-24.7l1.3,24.4l1.4-0.2l1.3-26.9l1.3,28l1.4-3.1l1.3-19.1l1.4,21.5l1.3,1.4l1.3-26.8l1.4,27.1l1.3,0l1.4-27.6l1.3,28l1.3-0.8l1.4-21.6l1.3,20.3l1.4,2.7l1.3-26.3l1.3,23.1l1.4,1.3l1.3-27.4l1.4,25.1l1.3-0.3l1.4-24.4l1.3,23.9l1.3,3.3l1.4-22.7l1.3,25.2l1.4-0.5l1.3-27.7l1.3,28.1l1.4-1.3l1.3-24.6l1.4,25.2l1.3-2.4l1.3-26.7l1.4,25.8l1.3,1.6l1.4-24.2l1.3,24.6l1.3-0.5l1.4-21.5l1.3,19.2l1.4,2l1.3-24.2l1.3,24.1l1.4-0.3l1.3-26l1.4,24.5l1.3,0.4l1.3-23.7l1.4,25.7l1.3-0.7l1.4-25.8l1.3,24.6l1.3,0.7l1.4-27.3l1.3,27.1l1.4,1.2l1.3-22.4l1.3,21.6l1.4-3l1.3-22l1.4,22l1.3,1.3l1.3-24.1l1.4,23.5l1.3,1.5l1.4-21l1.3,22.4l1.3-3l1.4-27.1l1.3,28.8l1.4,0l1.3-26.4l1.3,27.1l1.4,1.2l1.3-27.2l1.4,24.8l1.3,0.4l1.3-23.5l1.4,21.6l1.3-0.7l1.4-20.7l1.3,22.7l1.3-0.9l1.4-20.6l1.3,22.9l1.4-1.6l1.3-19.8l1.3,20.7l1.4,1.4l1.3-21.5l1.4,20.1l1.3,2.1l1.3-23.9l1.4,21.9l1.3,0.7l1.4-24.8l1.3,25.6l1.3-1.6l1.4-26.3l1.3,25.2l1.4,0.5l1.3-20.4l1.3,22.3l1.4,1.2l1.3-25.6l1.4,23.1l1.3-0.8L337.0,290.2L337.0,331.7L89.1,331.7L89.1,264.8Z" fill="#82B5D8" stroke="#82B5D8" stroke-width="1.0"/>
<path d="M91.1,269.1l1.3,23l1.4-1.6l1.3-22.6l1.4,23.6l1.3-0.3l1.3-22.2l1.4,22.6l1.3,1.1l1.4-17.4l1.3,17.3l1.3-0.5l1.4-22.5l1.3,22l1.4,1.4l1.3-25.3l1.3,24.5l1.4,0.3l1.3-23.3l1.4,21.5l1.3-1.3l1.3-19.6l1.4,20.6l1.3,0.6l1.4-24l1.3,25l1.3-0.5l1.4-19.8l1.3,20.3l1.4,0.9l1.3-17.8l1.3,17.5l1.4-1l1.3-17.5l1.4,18l1.3,1.5l1.3-22.6l1.4,21.5l1.3,0.9l1.4-19l1.3,16.7l1.3,0.3l1.4-20.3l1.3,20.7l1.4-0.4l1.3-20.3l1.3,20l1.4,1.4l1.3-20.7l1.4,22.7l1.3-0.9l1.3-22.6l1.4,23l1.3,0.4l1.4-19.9l1.3,17.7l1.3,1.3l1.4-17.2l1.3,18.5l1.4-1.5l1.3-18.2l1.3,18.8l1.4,0.6l1.3-22.3l1.4,22.5l1.3-1.1l1.3-21.8l1.4,21.6l1.3-1.6l1.4-21.3l1.3,22.1l1.3,0.8l1.4-22.2l1.3,21.9l1.4-0.3l1.3-24.3l1.3,25.4l1.4-2.7l1.3-17.4l1.4,19.5l1.3,1.5l1.3-24.1l1.4,24.2l1.3,0.1l1.4-24.8l1.3,24.8l1.3-0.9l1.4-18.8l1.3,18.1l1.4,2.5l1.3-24.1l1.3,20.9l1.4,1.1l1.3-24.4l1.4,22.5l1.3-0.2l1.4-21.7l1.3,21.2l1.3,3.2l1.4-20.6l1.3,22.9l1.4-1l1.3-24.6l1.3,25.5l1.4-1.2l1.3-22.2l1.4,22.7l1.3-2.2l1.3-24.1l1.4,23l1.3,2l1.4-22.4l1.3,22.5l1.3-0.6l1.4-19.3l1.3,17.3l1.4,1.6l1.3-21.6l1.3,21.7l1.4-0.6l1.3-23l1.4,22l1.3,0.4l1.3-21l1.4,22.6l1.3-0.2l1.4-23.6l1.3,22.1l1.3,0.5l1.4-24.5l1.3,24.6l1.4,1l1.3-20.2l1.3,19.5l1.4-2.9l1.3-19.8l1.4,20l1.3,1.2l1.3-22.1l1.4,21.4l1.3,1.8l1.4-19.3l1.3,20.3l1.3-2.9l1.4-24.3l1.3,26.1l1.4-0.2l1.3-23.3l1.3,23.9l1.4,0.8l1.3-24.4l1.4,22.2l1.3,0.7l1.3-20.9l1.4,19.3l1.3-1.1l1.4-18.4l1.3,20.6l1.3-1l1.4-18.4l1.3,20.6l1.4-1.6l1.3-17.6l1.3,18.6l1.4,1.3l1.3-19.1l1.4,18.1l1.3,1.9l1.3-21.6l1.4,19.8l1.3,0.4l1.4-22.5l1.3,22.9l1.3-1l1.4-23.9l1.3,22.4l1.4,0.9l1.3-18.2l1.3,19.9l1.4,1l1.3-22.7l1.4,20.4l1.3-1.2L337.0,291.5L337.0,331.7L89.1,331.7L89.1,269.1Z" fill="#F29191" stroke="#F29191" stroke-width="1.0"/>
<path d="M91.1,273.5l1.3,20.6l1.4-1.7l1.3-20.3l1.4,21.2l1.3-0.5l1.3-19.4l1.4,19.2l1.3,1.5l1.4-14.4l1.3,14.4l1.3-0.1l1.4-20.1l1.3,19.6l1.4,1.2l1.3-22.6l1.3,21.9l1.4,0.3l1.3-21l1.4,19.2l1.3-1.1l1.3-17.2l1.4,18l1.3,0.7l1.4-21.7l1.3,22l1.3,0l1.4-17.7l1.3,17.9l1.4,1.2l1.3-15.5l1.3,15l1.4-0.7l1.3-15.1l1.4,15.7l1.3,1.5l1.3-20.4l1.4,19.1l1.3,0.7l1.4-16.7l1.3,14.9l1.3,0.1l1.4-17.8l1.3,17.8l1.4-0.3l1.3-17.7l1.3,17.5l1.4,1.6l1.3-18.4l1.4,20.6l1.3-1l1.3-20.3l1.4,20.4l1.3,0.7l1.4-18.1l1.3,15.9l1.3,1.2l1.4-15.2l1.3,16l1.4-1.1l1.3-15.9l1.3,16.8l1.4,0.3l1.3-19.7l1.4,19.8l1.3-0.7l1.3-19.9l1.4,19.6l1.3-2.1l1.4-18.2l1.3,19.2l1.3,0.9l1.4-19.7l1.3,19.4l1.4-0.3l1.3-21.1l1.3,21.9l1.4-2.2l1.3-15.2l1.4,17.4l1.3,1.2l1.3-21.4l1.4,21.5l1.3,0.1l1.4-21.8l1.3,21.3l1.3-0.5l1.4-16.6l1.3,16l1.4,2.2l1.3-21.1l1.3,18.3l1.4,1.1l1.3-21.7l1.4,19.8l1.3-0.6l1.4-18.7l1.3,18.9l1.3,2.9l1.4-18.8l1.3,20.7l1.4-0.9l1.3-21.8l1.3,22.7l1.4-1.4l1.3-19.5l1.4,20.1l1.3-1.9l1.3-21.9l1.4,20.7l1.3,1.8l1.4-19.5l1.3,19.4l1.3-0.2l1.4-16.8l1.3,14.9l1.4,1.7l1.3-19.6l1.3,19.5l1.4-0.5l1.3-20.1l1.4,19.4l1.3,0.1l1.3-18.3l1.4,19.7l1.3-0.1l1.4-21.2l1.3,19.9l1.3,0.4l1.4-21.4l1.3,21.7l1.4,0.7l1.3-18l1.3,17.7l1.4-3.3l1.3-17.2l1.4,17.7l1.3,0.8l1.3-19.2l1.4,18.5l1.3,2.2l1.4-17.3l1.3,17.9l1.3-2.5l1.4-21.8l1.3,23.9l1.4-0.9l1.3-20.3l1.3,21l1.4,0.9l1.3-21.7l1.4,19.6l1.3,0.1l1.3-17.8l1.4,17.1l1.3-1l1.4-16.1l1.3,17.9l1.3-1l1.4-16.1l1.3,18.4l1.4-1.8l1.3-15.6l1.3,17.2l1.4,0.5l1.3-17l1.4,16.3l1.3,1.7l1.3-19.4l1.4,17.8l1.3,0.3l1.4-20l1.3,20.5l1.3-1.3l1.4-21.2l1.3,19.8l1.4,1l1.3-16l1.3,17.4l1.4,1.1l1.3-20.1l1.4,17.8l1.3-0.5L337.0,293.7L337.0,331.7L89.1,331.7L89.1,273.5Z" fill="#F9BA8F" stroke="#F9BA8F" stroke-width="1.0"/>
<path d="M91.1,278.2l1.3,18l1.4-2.2l1.3-17.6l1.4,18.8l1.3-0.7l1.3-16.5l1.4,16.6l1.3,1l1.4-12.5l1.3,12.7l1.3-0.3l1.4-17.6l1.3,17.2l1.4,1.2l1.3-19.6l1.3,19.2l1.4-0.3l1.3-17.8l1.4,16.8l1.3-1.3l1.3-15.3l1.4,16l1.3,0.7l1.4-19l1.3,19.4l1.3-0.1l1.4-15.5l1.3,15.8l1.4,1.1l1.3-13.4l1.3,13l1.4-0.7l1.3-13l1.4,13.8l1.3,0.9l1.3-17.9l1.4,16.5l1.3,1.1l1.4-14.6l1.3,13l1.3-0.2l1.4-15.5l1.3,15.7l1.4-0.6l1.3-15.1l1.3,15.1l1.4,1.2l1.3-16l1.4,18.5l1.3-0.8l1.3-18.3l1.4,18.3l1.3,0.5l1.4-15.9l1.3,14.4l1.3,0.4l1.4-13.6l1.3,14.6l1.4-1.3l1.3-13.8l1.3,14.9l1.4,0.4l1.3-17.7l1.4,17.4l1.3-0.7l1.3-17.4l1.4,17.1l1.3-1.6l1.4-16l1.3,16.6l1.3,0.9l1.4-16.9l1.3,16.7l1.4-0.2l1.3-18.6l1.3,19.1l1.4-2.4l1.3-12.3l1.4,14.9l1.3,1.2l1.3-18.9l1.4,19.1l1.3,0.3l1.4-19.2l1.3,18.6l1.3-0.3l1.4-14.7l1.3,14l1.4,2l1.3-18.8l1.3,16l1.4,1.1l1.3-18.5l1.4,16.7l1.3-0.9l1.4-15.8l1.3,16.2l1.3,2.9l1.4-16.8l1.3,18.8l1.4-1l1.3-19.3l1.3,19.8l1.4-1.2l1.3-17.3l1.4,17.9l1.3-1.9l1.3-19.4l1.4,18.6l1.3,1.5l1.4-17l1.3,17.2l1.3-0.4l1.4-14.8l1.3,12.9l1.4,1.6l1.3-17.1l1.3,17.2l1.4-0.5l1.3-17.3l1.4,16.3l1.3,0.5l1.3-16.2l1.4,17.7l1.3-0.8l1.4-18.2l1.3,17.4l1.3,0.2l1.4-18.2l1.3,18.7l1.4,0.5l1.3-15.5l1.3,15.3l1.4-3.4l1.3-14.9l1.4,15.5l1.3,1.1l1.3-17.1l1.4,16.4l1.3,1.8l1.4-15.2l1.3,16.1l1.3-2.8l1.4-18.8l1.3,20.6l1.4-0.7l1.3-17.5l1.3,18.3l1.4,1l1.3-19.3l1.4,17.7l1.3-0.2l1.3-15.6l1.4,14.9l1.3-0.9l1.4-13.8l1.3,15.5l1.3-1.1l1.4-13.9l1.3,16.2l1.4-1.6l1.3-13.8l1.3,14.6l1.4,0.9l1.3-14.8l1.4,13.9l1.3,1.6l1.3-17.1l1.4,15.8l1.3,0.3l1.4-17.7l1.3,18.5l1.3-1.1l1.4-18.7l1.3,16.9l1.4,1.1l1.3-14.4l1.3,15.7l1.4,1l1.3-17.2l1.4,15.1l1.3-0.4L337.0,295.6L337.0,331.7L89.1,331.7L89.1,278.2Z" fill="#70DBED" stroke="#70DBED" stroke-width="1.0"/>
<path d="M91.1,282.6l1.3,15.5l1.4-2l1.3-15.5l1.4,16.6l1.3-0.7l1.3-14l1.4,14.1l1.3,0.6l1.4-10.5l1.3,11.1l1.3-0.4l1.4-15.1l1.3,14.7l1.4,1.2l1.3-17.2l1.3,16.8l1.4-0.5l1.3-15.6l1.4,15l1.3-1.2l1.3-13.4l1.4,13.5l1.3,0.9l1.4-16.1l1.3,16.5l1.3,0l1.4-13.3l1.3,13.3l1.4,1.3l1.3-11.6l1.3,11.2l1.4-0.7l1.3-11.2l1.4,12.1l1.3,0.8l1.3-15l1.4,13.4l1.3,1.4l1.4-12.7l1.3,11.1l1.3-0.3l1.4-13.3l1.3,13l1.4,0l1.3-13.1l1.3,13.1l1.4,1.2l1.3-13.8l1.4,15.9l1.3-0.8l1.3-15.5l1.4,15.7l1.3,0.4l1.4-13.4l1.3,12.2l1.3,0l1.4-11.6l1.3,12.7l1.4-1.3l1.3-11.8l1.3,13.1l1.4,0.2l1.3-15.2l1.4,15.2l1.3-1.2l1.3-14.4l1.4,14.2l1.3-1l1.4-14l1.3,14.4l1.3,0.4l1.4-13.9l1.3,14.3l1.4,0l1.3-16.3l1.3,15.7l1.4-1.6l1.3-10.5l1.4,13.1l1.3,1.3l1.3-17.1l1.4,17l1.3-0.2l1.4-16l1.3,15.6l1.3-0.1l1.4-12.6l1.3,11.7l1.4,1.8l1.3-16.1l1.3,13.8l1.4,1.1l1.3-15.9l1.4,14.1l1.3-0.8l1.4-13.6l1.3,14.2l1.3,2.6l1.4-15.1l1.3,16.7l1.4-0.7l1.3-16.3l1.3,16.8l1.4-1.4l1.3-14.7l1.4,15.7l1.3-1.8l1.3-17l1.4,16.1l1.3,1.5l1.4-14.6l1.3,14.9l1.3-0.3l1.4-13.4l1.3,11l1.4,1.7l1.3-14.6l1.3,14.8l1.4-0.1l1.3-15.3l1.4,13.8l1.3,0.6l1.3-13.9l1.4,15.5l1.3-0.6l1.4-15.8l1.3,14.3l1.3,0.5l1.4-15.4l1.3,16.3l1.4,0.4l1.3-13.9l1.3,13.8l1.4-3.4l1.3-12.7l1.4,13.3l1.3,0.9l1.3-14.5l1.4,13.4l1.3,2.1l1.4-12.9l1.3,13.7l1.3-2.7l1.4-16.3l1.3,17.9l1.4-0.6l1.3-14.9l1.3,15.8l1.4,0.9l1.3-16.7l1.4,15.1l1.3,0.2l1.3-13.7l1.4,12.9l1.3-1.1l1.4-11.1l1.3,12.9l1.3-1.1l1.4-11.4l1.3,13.6l1.4-1.3l1.3-11.7l1.3,12.4l1.4,0.7l1.3-12.5l1.4,11.6l1.3,1.5l1.3-14.8l1.4,13.5l1.3,0.2l1.4-14.8l1.3,16l1.3-1.7l1.4-15.4l1.3,14l1.4,1.4l1.3-12.7l1.3,13.5l1.4,1l1.3-14.8l1.4,13.1l1.3-0.5L337.0,297.4L337.0,331.7L89.1,331.7L89.1,282.6Z" fill="#F4D598" stroke="#F4D598" stroke-width="1.0"/>
<path d="M91.1,286.5l1.3,13.4l1.4-1.9l1.3-12.8l1.4,13.7l1.3-0.5l1.3-11.7l1.4,11.6l1.3,0.8l1.4-8.4l1.3,9l1.3-0.2l1.4-12.9l1.3,12.5l1.4,0.6l1.3-14.4l1.3,14l1.4,0.2l1.3-13.6l1.4,12.9l1.3-1.3l1.3-11l1.4,11l1.3,0.6l1.4-13.6l1.3,14.1l1.3,0l1.4-10.6l1.3,10.7l1.4,0.8l1.3-9.6l1.3,9.2l1.4-0.5l1.3-8.8l1.4,9.4l1.3,1l1.3-12.1l1.4,10.8l1.3,1.4l1.4-10.6l1.3,9.3l1.3-0.2l1.4-11.3l1.3,10.8l1.4,0.3l1.3-11.2l1.3,10.9l1.4,1l1.3-11.5l1.4,13.4l1.3-0.8l1.3-12.6l1.4,12.7l1.3,0.8l1.4-11.3l1.3,9.9l1.3,0.1l1.4-9.2l1.3,10.2l1.4-1.1l1.3-9.9l1.3,10.8l1.4,0.6l1.3-13l1.4,13.1l1.3-1.3l1.3-12l1.4,11.6l1.3-0.5l1.4-11.8l1.3,11.5l1.3,0.4l1.4-11.2l1.3,11.9l1.4,0l1.3-13.4l1.3,13.1l1.4-1.4l1.3-9.4l1.4,11.6l1.3,0.9l1.3-14.5l1.4,14.6l1.3-0.3l1.4-13.4l1.3,13.4l1.3-0.4l1.4-10.5l1.3,10.4l1.4,1l1.3-13.6l1.3,11.3l1.4,1.1l1.3-13l1.4,11.5l1.3-1l1.4-11l1.3,11.4l1.3,2.3l1.4-12l1.3,14l1.4-0.6l1.3-13.9l1.3,14.3l1.4-1.5l1.3-12.1l1.4,13.2l1.3-1.3l1.3-14.6l1.4,13.5l1.3,1.6l1.4-12.5l1.3,12.5l1.3-0.3l1.4-11.4l1.3,9.5l1.4,1l1.3-12.2l1.3,12.7l1.4,0.2l1.3-13l1.4,11.4l1.3,0.4l1.3-11.3l1.4,12.7l1.3-0.3l1.4-13.2l1.3,11.5l1.3,0.4l1.4-12.5l1.3,13.3l1.4,0.4l1.3-11.3l1.3,11.4l1.4-3.1l1.3-10.5l1.4,10.8l1.3,1.1l1.3-12.4l1.4,11.2l1.3,2l1.4-10.2l1.3,10.9l1.3-2.2l1.4-13.9l1.3,15.3l1.4-0.7l1.3-12.1l1.3,13l1.4,0.4l1.3-14.2l1.4,13.1l1.3,0.3l1.3-11.4l1.4,10.7l1.3-1l1.4-9.1l1.3,10.4l1.3-0.7l1.4-9.2l1.3,11.1l1.4-1.1l1.3-10l1.3,10.6l1.4,0.6l1.3-10.5l1.4,9.3l1.3,2.1l1.3-12.9l1.4,11.4l1.3,0.5l1.4-12.7l1.3,13.2l1.3-1.4l1.4-12.6l1.3,11.8l1.4,0.7l1.3-10.2l1.3,10.9l1.4,1.4l1.3-12.5l1.4,10.7l1.3-0.6L337.0,299.1L337.0,331.7L89.1,331.7L89.1,286.5Z" fill="#B7DBAB" stroke="#B7DBAB" stroke-width="1.0"/>
<path d="M91.1,291.2l1.3,10.3l1.4-1.7l1.3-10.3l1.4,11.2l1.3-0.3l1.3-9.8l1.4,9.8l1.3,0.2l1.4-6.3l1.3,7.4l1.3-0.4l1.4-10.5l1.3,9.9l1.4,0.8l1.3-11.6l1.3,11.4l1.4,0l1.3-11.3l1.4,10.6l1.3-1.3l1.3-8.8l1.4,9.3l1.3,0.3l1.4-11.2l1.3,11.8l1.3-0.3l1.4-8.3l1.3,8.5l1.4,0.7l1.3-7.7l1.3,7.4l1.4-0.3l1.3-7.1l1.4,7.8l1.3,0.6l1.3-9.8l1.4,8.7l1.3,1.1l1.4-8.4l1.3,7.5l1.3-0.3l1.4-9.4l1.3,8.7l1.4,0.2l1.3-8.7l1.3,8.2l1.4,1.2l1.3-9l1.4,10.6l1.3-0.6l1.3-10.3l1.4,10.3l1.3,1.1l1.4-9.5l1.3,7.8l1.3,0.5l1.4-7.7l1.3,8.8l1.4-1.3l1.3-8.2l1.3,8.8l1.4,0.8l1.3-10.6l1.4,10.4l1.3-1l1.3-9.3l1.4,8.9l1.3-0.5l1.4-9.2l1.3,8.9l1.3,0.2l1.4-8.4l1.3,9.1l1.4,0.3l1.3-10.8l1.3,10.5l1.4-1.1l1.3-7.4l1.4,8.9l1.3,1.1l1.3-11.7l1.4,11.8l1.3-0.6l1.4-10l1.3,10.4l1.3-0.5l1.4-8.3l1.3,8l1.4,1.3l1.3-10.9l1.3,8.8l1.4,1l1.3-10.5l1.4,8.9l1.3-0.9l1.4-8.5l1.3,8.8l1.3,2.2l1.4-9.5l1.3,11.2l1.4-0.3l1.3-11.7l1.3,11.7l1.4-0.6l1.3-10.3l1.4,11.1l1.3-1.6l1.3-11.9l1.4,11.3l1.3,1.1l1.4-10.1l1.3,9.8l1.3,0.7l1.4-9.8l1.3,7.5l1.4,1.1l1.3-9.8l1.3,10.1l1.4-0.2l1.3-9.8l1.4,8.8l1.3,0.3l1.3-8.6l1.4,10.1l1.3-0.6l1.4-10.2l1.3,9l1.3,0.4l1.4-10.2l1.3,10.3l1.4,0.8l1.3-9.1l1.3,8.9l1.4-2.8l1.3-8l1.4,8.3l1.3,1l1.3-9.9l1.4,8.8l1.3,2.1l1.4-8.2l1.3,8.9l1.3-1.8l1.4-11.1l1.3,11.9l1.4-0.5l1.3-10l1.3,10.9l1.4,0l1.3-11.3l1.4,10.7l1.3,0.3l1.3-9.6l1.4,8.8l1.3-1.1l1.4-6.9l1.3,8.1l1.3-0.1l1.4-7.9l1.3,8.9l1.4-0.5l1.3-8.4l1.3,8.5l1.4,0.5l1.3-7.7l1.4,7.3l1.3,1.8l1.3-11l1.4,8.9l1.3,0.9l1.4-10.3l1.3,10.5l1.3-1l1.4-10.2l1.3,9.3l1.4,0.9l1.3-8.3l1.3,8.8l1.4,1.5l1.3-10.1l1.4,8.4l1.3-0.8L337.0,300.8L337.0,331.7L89.1,331.7L89.1,291.2Z" fill="#584477" stroke="#584477" stroke-width="1.0"/>
<path d="M91.1,293.4l1.3,9.5l1.4-1.5l1.3-9.4l1.4,10.1l1.3-0.4l1.3-8.8l1.4,8.9l1.3,0.2l1.4-5.5l1.3,6.4l1.3-0.1l1.4-9.7l1.3,8.9l1.4,0.9l1.3-10.5l1.3,10.4l1.4-0.1l1.3-10.1l1.4,9.7l1.3-1.5l1.3-7.9l1.4,8.2l1.3,0.4l1.4-10l1.3,10.9l1.3-0.5l1.4-7.6l1.3,7.7l1.4,0.5l1.3-6.6l1.3,6.4l1.4-0.2l1.3-6.4l1.4,7.2l1.3,0.6l1.3-8.9l1.4,7.8l1.3,0.8l1.4-7.4l1.3,6.6l1.3-0.2l1.4-8.5l1.3,7.7l1.4,0.3l1.3-7.7l1.3,7.3l1.4,1.4l1.3-8.1l1.4,9.1l1.3-0.5l1.3-8.8l1.4,8.8l1.3,1.1l1.4-8.6l1.3,7.1l1.3,0.2l1.4-6.4l1.3,7.8l1.4-1.6l1.3-7l1.3,7.8l1.4,0.6l1.3-9.6l1.4,9.4l1.3-0.7l1.3-8.4l1.4,8l1.3-0.6l1.4-7.9l1.3,7.9l1.3-0.1l1.4-7.1l1.3,7.7l1.4,0.5l1.3-9.8l1.3,9.6l1.4-1.4l1.3-6.1l1.4,7.7l1.3,1l1.3-10.5l1.4,10.7l1.3-0.6l1.4-9l1.3,9.3l1.3-0.2l1.4-7.8l1.3,7.2l1.4,1.2l1.3-9.7l1.3,7.9l1.4,1.1l1.3-9.5l1.4,7.9l1.3-0.9l1.4-7.5l1.3,7.7l1.3,2.3l1.4-8.8l1.3,10.2l1.4-0.1l1.3-10.7l1.3,10.4l1.4-0.4l1.3-9.1l1.4,9.5l1.3-1.1l1.3-10.7l1.4,10.1l1.3,0.7l1.4-8.7l1.3,8.8l1.3,0.7l1.4-9l1.3,6.9l1.4,0.7l1.3-8.8l1.3,9.2l1.4-0.3l1.3-8.5l1.4,7.5l1.3,0.2l1.3-7.4l1.4,9l1.3-0.6l1.4-9l1.3,7.9l1.3,0.6l1.4-9.2l1.3,9l1.4,0.8l1.3-7.9l1.3,7.9l1.4-2.7l1.3-7.2l1.4,7.5l1.3,1l1.3-9l1.4,7.5l1.3,2.5l1.4-7.4l1.3,7.9l1.3-1.7l1.4-9.8l1.3,10.6l1.4-0.5l1.3-9.2l1.3,9.9l1.4,0l1.3-10l1.4,9.5l1.3,0.4l1.3-8.6l1.4,7.7l1.3-1.1l1.4-6.1l1.3,7.5l1.3-0.1l1.4-7.1l1.3,8.2l1.4-0.8l1.3-7.6l1.3,7.6l1.4,0.6l1.3-7l1.4,6.7l1.3,1.7l1.3-9.8l1.4,7.9l1.3,0.7l1.4-9l1.3,9.2l1.3-0.7l1.4-9l1.3,7.9l1.4,1.1l1.3-7.6l1.3,7.8l1.4,1.2l1.3-8.7l1.4,7.3l1.3-0.8L337.0,302.1L337.0,331.7L89.1,331.7L89.1,293.4Z" fill="#6D1F62" stroke="#6D1F62" stroke-width="1.0"/>
<path d="M91.1,296.7l1.3,8.3l1.4-1.7l1.3-7.6l1.4,8.1l1.3-0.1l1.3-7.2l1.4,7.5l1.3,0l1.4-4.5l1.3,5.2l1.3-0.1l1.4-8l1.3,7.4l1.4,0.9l1.3-8.8l1.3,8.3l1.4,0l1.3-8.4l1.4,8.2l1.3-1.4l1.3-6.6l1.4,6.5l1.3,0.9l1.4-8.8l1.3,9.3l1.3-0.1l1.4-6.7l1.3,6.7l1.4,0.5l1.3-5.5l1.3,5.2l1.4-0.1l1.3-5.3l1.4,6.2l1.3,0.5l1.3-7.4l1.4,6.4l1.3,0.6l1.4-6.3l1.3,5.7l1.3-0.2l1.4-7.3l1.3,6l1.4,0.4l1.3-6.4l1.3,6.4l1.4,0.9l1.3-6.4l1.4,7.6l1.3-0.5l1.3-7.6l1.4,7.6l1.3,1l1.4-7.3l1.3,5.9l1.3,0.1l1.4-5.2l1.3,6.5l1.4-1.4l1.3-5.6l1.3,6.6l1.4,0.2l1.3-8.6l1.4,8.6l1.3-0.9l1.3-6.9l1.4,6.8l1.3-0.6l1.4-6.6l1.3,6.7l1.3-0.4l1.4-5.6l1.3,6.4l1.4,0l1.3-7.2l1.3,7.7l1.4-1.5l1.3-4.8l1.4,6.4l1.3,0.8l1.3-8.9l1.4,8.8l1.3-0.2l1.4-7.6l1.3,7.5l1.3,0l1.4-6.3l1.3,5.9l1.4,1l1.3-7.8l1.3,6.1l1.4,1l1.3-7.8l1.4,6.7l1.3-0.9l1.4-6.3l1.3,6.2l1.3,2.1l1.4-7.5l1.3,8.7l1.4,0.2l1.3-8.9l1.3,8.6l1.4-0.6l1.3-7.4l1.4,8l1.3-1.2l1.3-8.9l1.4,8.5l1.3,0.1l1.4-6.8l1.3,7.4l1.3,0.5l1.4-7.3l1.3,5.6l1.4,0.3l1.3-7.1l1.3,7.9l1.4-0.5l1.3-7l1.4,6l1.3,0.7l1.3-6.7l1.4,7.7l1.3-0.6l1.4-7.5l1.3,6.1l1.3,1.1l1.4-7.7l1.3,7.3l1.4,0.9l1.3-7l1.3,6.9l1.4-2.4l1.3-6.1l1.4,6.2l1.3,1.1l1.3-7.4l1.4,6.2l1.3,2.1l1.4-6.2l1.3,6.5l1.3-1.3l1.4-8.3l1.3,8.7l1.4-0.2l1.3-7.6l1.3,8.4l1.4,0.1l1.3-9.2l1.4,8.5l1.3,0.2l1.3-6.9l1.4,6.4l1.3-0.8l1.4-5.3l1.3,6.1l1.3-0.1l1.4-6l1.3,6.9l1.4-0.7l1.3-6.6l1.3,6.6l1.4,0.8l1.3-5.8l1.4,5.3l1.3,1.7l1.3-8.6l1.4,7l1.3,0.4l1.4-7.6l1.3,7.7l1.3-0.2l1.4-7.7l1.3,6.1l1.4,1.4l1.3-6.6l1.3,6.6l1.4,1.1l1.3-7.1l1.4,6l1.3-0.7L337.0,304.1L337.0,331.7L89.1,331.7L89.1,296.7Z" fill="#0A437C" stroke="#0A437C" stroke-width="1.0"/>
<path d="M91.1,300l1.3,6.7l1.4-1.3l1.3-6.7l1.4,6.6l1.3,0.2l1.3-5.8l1.4,6.1l1.3-0.2l1.4-3.4l1.3,4.2l1.3,0l1.4-6.6l1.3,6.1l1.4,0.6l1.3-7.2l1.3,7.2l1.4-0.3l1.3-6.9l1.4,6.4l1.3-1.3l1.3-5l1.4,5.2l1.3,0.5l1.4-6.9l1.3,7.7l1.3,0.1l1.4-5.7l1.3,5.6l1.4,0.4l1.3-4.6l1.3,4.1l1.4,0.5l1.3-4.7l1.4,5.1l1.3,0.5l1.3-6l1.4,4.9l1.3,1l1.4-5.7l1.3,4.3l1.3,0.2l1.4-6.2l1.3,4.9l1.4,0.8l1.3-5.6l1.3,5.3l1.4,0.7l1.3-5.1l1.4,6.4l1.3-0.5l1.3-5.7l1.4,5.8l1.3,0.8l1.4-5.9l1.3,4.8l1.3,0.1l1.4-4.2l1.3,5.2l1.4-1.5l1.3-4.3l1.3,5.5l1.4,0l1.3-7.1l1.4,7.3l1.3-0.9l1.3-5.6l1.4,5.6l1.3-0.6l1.4-5.2l1.3,5.4l1.3-0.4l1.4-4.6l1.3,5.3l1.4-0.3l1.3-5.5l1.3,6.2l1.4-1.4l1.3-3.8l1.4,5.4l1.3,0.7l1.3-7.1l1.4,7.1l1.3-0.3l1.4-6.2l1.3,6.4l1.3-0.2l1.4-5.6l1.3,4.9l1.4,1.3l1.3-6.6l1.3,4.8l1.4,1.1l1.3-6.3l1.4,5.3l1.3-1.1l1.4-4.8l1.3,4.9l1.3,2.1l1.4-6.6l1.3,7.6l1.4-0.1l1.3-7.3l1.3,7l1.4-0.2l1.3-6l1.4,6.6l1.3-1.2l1.3-7.5l1.4,7.4l1.3-0.2l1.4-5.7l1.3,6.1l1.3,0.2l1.4-5.8l1.3,4.8l1.4,0.3l1.3-6l1.3,6.4l1.4-0.4l1.3-5.9l1.4,5.2l1.3,0.5l1.3-5.5l1.4,6.7l1.3-0.8l1.4-6.5l1.3,5.2l1.3,0.9l1.4-6.5l1.3,6.5l1.4,0.6l1.3-5.9l1.3,6.1l1.4-2.6l1.3-4.9l1.4,4.9l1.3,0.8l1.3-6l1.4,5.3l1.3,1.7l1.4-4.4l1.3,4.4l1.3-0.7l1.4-7.1l1.3,7.6l1.4-0.5l1.3-6.4l1.3,7.4l1.4,0.2l1.3-7.9l1.4,7.3l1.3,0l1.3-5.8l1.4,5.4l1.3-1l1.4-4.1l1.3,4.7l1.3,0.3l1.4-4.9l1.3,5.6l1.4-0.8l1.3-5.2l1.3,5.4l1.4,1l1.3-4.9l1.4,4.2l1.3,1.5l1.3-7.4l1.4,5.9l1.3,0.5l1.4-6.6l1.3,6.7l1.3-0.1l1.4-6.6l1.3,5.1l1.4,1.2l1.3-5.6l1.3,5.6l1.4,0.8l1.3-6l1.4,5.2l1.3-0.9L337.0,305.7L337.0,331.7L89.1,331.7L89.1,300.0Z" fill="#890F02" stroke="#890F02" stroke-width="1.0"/>
<path d="M91.1,301l1.3,6.5l1.4-1.2l1.3-6.5l1.4,6.3l1.3,0.2l1.3-5.5l1.4,5.7l1.3-0.2l1.4-2.9l1.3,3.8l1.3-0.1l1.4-6.3l1.3,5.9l1.4,0.6l1.3-6.8l1.3,6.8l1.4-0.3l1.3-6.6l1.4,6.1l1.3-1.3l1.3-4.6l1.4,4.9l1.3,0.4l1.4-6.5l1.3,7.3l1.3,0.3l1.4-5.6l1.3,5.3l1.4,0.4l1.3-4.5l1.3,4l1.4,0.6l1.3-4.5l1.4,4.8l1.3,0.5l1.3-5.8l1.4,4.5l1.3,1.1l1.4-5.2l1.3,3.9l1.3,0.3l1.4-6l1.3,4.6l1.4,0.9l1.3-5.5l1.3,5l1.4,0.7l1.3-4.7l1.4,6.2l1.3-0.7l1.3-5.4l1.4,5.6l1.3,0.8l1.4-5.7l1.3,4.6l1.3,0.1l1.4-4.1l1.3,5l1.4-1.5l1.3-4.1l1.3,5.5l1.4-0.1l1.3-6.7l1.4,6.9l1.3-1l1.3-5.3l1.4,5.4l1.3-0.7l1.4-4.9l1.3,5.2l1.3-0.4l1.4-4.3l1.3,4.8l1.4-0.2l1.3-5.2l1.3,6l1.4-1.4l1.3-3.4l1.4,4.9l1.3,0.7l1.3-6.8l1.4,6.9l1.3-0.4l1.4-5.9l1.3,6.1l1.3-0.2l1.4-5.2l1.3,4.6l1.4,1.2l1.3-6.3l1.3,4.6l1.4,1l1.3-6l1.4,5l1.3-0.9l1.4-4.7l1.3,4.7l1.3,2.1l1.4-6.4l1.3,7.3l1.4-0.1l1.3-6.9l1.3,6.7l1.4-0.4l1.3-5.6l1.4,6.3l1.3-1l1.3-7.3l1.4,7l1.3-0.2l1.4-5.4l1.3,5.7l1.3,0.4l1.4-5.7l1.3,4.7l1.4,0.1l1.3-5.6l1.3,6l1.4-0.3l1.3-5.5l1.4,4.8l1.3,0.7l1.3-5.4l1.4,6.6l1.3-0.9l1.4-6.3l1.3,4.9l1.3,1.1l1.4-6.1l1.3,6l1.4,0.5l1.3-5.6l1.3,5.7l1.4-2.5l1.3-4.5l1.4,4.5l1.3,0.9l1.3-5.6l1.4,4.9l1.3,1.7l1.4-4.2l1.3,4.2l1.3-0.5l1.4-7l1.3,7.2l1.4-0.5l1.3-5.8l1.3,6.7l1.4,0.3l1.3-7.3l1.4,6.9l1.3-0.1l1.3-5.5l1.4,5l1.3-0.9l1.4-3.8l1.3,4.4l1.3,0.3l1.4-4.7l1.3,5.4l1.4-0.9l1.3-4.9l1.3,5.2l1.4,0.7l1.3-4.4l1.4,4l1.3,1.4l1.3-7.1l1.4,5.7l1.3,0.4l1.4-6.2l1.3,6.3l1.3-0.1l1.4-6.2l1.3,4.9l1.4,1.1l1.3-5.4l1.3,5.4l1.4,0.7l1.3-5.6l1.4,4.8l1.3-0.7L337.0,306.6L337.0,331.7L89.1,331.7L89.1,301.0Z" fill="#C15C17" stroke="#C15C17" stroke-width="1.0"/>
<path d="M91.1,303.5l1.3,5.7l1.4-1.2l1.3-5.6l1.4,5.5l1.3,0.6l1.3-5.4l1.4,5.1l1.3,0.3l1.4-3.2l1.3,3.3l1.3,0.2l1.4-5.7l1.3,5.4l1.4,0.7l1.3-6.3l1.3,6.2l1.4-0.2l1.3-6.3l1.4,5.4l1.3-0.9l1.3-4.1l1.4,4.4l1.3,0.3l1.4-5.9l1.3,6.8l1.3,0.2l1.4-4.9l1.3,4.6l1.4-0.1l1.3-3.6l1.3,3.4l1.4,0.6l1.3-3.9l1.4,4.5l1.3-0.1l1.3-4.6l1.4,3.9l1.3,1l1.4-4.8l1.3,3.2l1.3,0.4l1.4-5.3l1.3,4.5l1.4,0.4l1.3-4.9l1.3,4.7l1.4,0.6l1.3-4.3l1.4,5.7l1.3-0.6l1.3-4.8l1.4,4.8l1.3,0.6l1.4-5l1.3,4l1.3,0l1.4-3.5l1.3,4.8l1.4-1.8l1.3-3.6l1.3,4.9l1.4,0.2l1.3-6l1.4,6.2l1.3-0.8l1.3-5l1.4,4.9l1.3-0.7l1.4-4.3l1.3,4.7l1.3-0.6l1.4-3.5l1.3,3.9l1.4,0.1l1.3-4.6l1.3,5.1l1.4-1.4l1.3-3l1.4,4.6l1.3,0.6l1.3-6l1.4,6.1l1.3-0.2l1.4-5.3l1.3,5.3l1.3-0.1l1.4-4.8l1.3,4.3l1.4,1.4l1.3-5.8l1.3,3.9l1.4,0.8l1.3-5.2l1.4,4.3l1.3-0.8l1.4-4l1.3,4l1.3,2.1l1.4-5.8l1.3,6.3l1.4,0l1.3-6l1.3,5.9l1.4-0.4l1.3-4.8l1.4,5.3l1.3-0.9l1.3-6.4l1.4,6.1l1.3,0l1.4-4.9l1.3,5.4l1.3,0l1.4-4.8l1.3,4.1l1.4-0.1l1.3-5.1l1.3,5.7l1.4-0.5l1.3-4.7l1.4,4.5l1.3,0l1.3-4.4l1.4,5.8l1.3-0.9l1.4-5.7l1.3,4.4l1.3,1.4l1.4-5.4l1.3,5l1.4,0.4l1.3-5.1l1.3,5.3l1.4-2.5l1.3-3.7l1.4,3.6l1.3,1.2l1.3-5l1.4,4.2l1.3,1.6l1.4-3.8l1.3,3.9l1.3-0.5l1.4-6.1l1.3,6.3l1.4-0.5l1.3-5.1l1.3,5.9l1.4,0.4l1.3-6.8l1.4,6.1l1.3,0l1.3-4.7l1.4,4.3l1.3-1l1.4-3.1l1.3,4l1.3-0.1l1.4-3.9l1.3,4.8l1.4-0.9l1.3-4.5l1.3,4.4l1.4,1l1.3-3.5l1.4,3.4l1.3,1.1l1.3-6.2l1.4,5l1.3,0.3l1.4-5.7l1.3,5.7l1.3-0.1l1.4-5.4l1.3,4l1.4,1l1.3-4.6l1.3,4.7l1.4,0.9l1.3-5.1l1.4,4.5l1.3-0.6L337.0,308.6L337.0,331.7L89.1,331.7L89.1,303.5Z" fill="#447EBC" stroke="#447EBC" stroke-width="1.0"/>
<path d="M91.1,305.9l1.3,4.7l1.4-0.9l1.3-4.8l1.4,4.9l1.3,0.6l1.3-4.7l1.4,4.2l1.3,0.4l1.4-2.6l1.3,2.8l1.3,0.1l1.4-5.1l1.3,4.8l1.4,0.4l1.3-5.4l1.3,5.3l1.4,0l1.3-5.9l1.4,5.1l1.3-0.7l1.3-3.6l1.4,3.9l1.3,0.2l1.4-5.2l1.3,5.6l1.3,0.6l1.4-4.4l1.3,3.9l1.4,0.3l1.3-3.5l1.3,3.3l1.4,0.6l1.3-3.7l1.4,3.8l1.3,0l1.3-3.9l1.4,3.3l1.3,1.4l1.4-4.7l1.3,3l1.3,0.2l1.4-4.7l1.3,4l1.4,0.4l1.3-4.4l1.3,4l1.4,0.6l1.3-3.6l1.4,5.1l1.3-0.7l1.3-4.3l1.4,4.2l1.3,0.5l1.4-4.2l1.3,3.5l1.3-0.1l1.4-2.9l1.3,4.1l1.4-1.5l1.3-3.4l1.3,4.6l1.4,0l1.3-5.4l1.4,5.4l1.3-0.3l1.3-4.7l1.4,4.3l1.3-0.8l1.4-3.4l1.3,3.9l1.3-0.2l1.4-3.1l1.3,3.6l1.4,0l1.3-4.5l1.3,4.8l1.4-1.2l1.3-2.5l1.4,3.8l1.3,0.6l1.3-5.1l1.4,5.2l1.3,0l1.4-4.6l1.3,4.7l1.3-0.4l1.4-4.2l1.3,3.6l1.4,1.3l1.3-5.2l1.3,3.4l1.4,1.1l1.3-4.8l1.4,3.8l1.3-0.8l1.4-3.5l1.3,3.4l1.3,1.9l1.4-5.2l1.3,5.8l1.4,0l1.3-5.5l1.3,5.4l1.4-0.7l1.3-4.1l1.4,4.9l1.3-0.7l1.3-5.6l1.4,5.4l1.3-0.1l1.4-4.1l1.3,4.5l1.3-0.1l1.4-4l1.3,3.4l1.4-0.2l1.3-4.2l1.3,5.1l1.4-0.8l1.3-4l1.4,4l1.3,0.1l1.3-4.1l1.4,5.2l1.3-0.8l1.4-5l1.3,4l1.3,1.3l1.4-5.3l1.3,4.9l1.4,0.1l1.3-4.3l1.3,4.4l1.4-2l1.3-3.6l1.4,3.5l1.3,1.3l1.3-4.7l1.4,3.7l1.3,1.4l1.4-3.2l1.3,3.2l1.3-0.4l1.4-5.2l1.3,5.3l1.4-0.1l1.3-4.9l1.3,5.4l1.4,0.3l1.3-6l1.4,5.4l1.3,0.4l1.3-4.4l1.4,3.6l1.3-0.8l1.4-2.7l1.3,3.3l1.3,0.4l1.4-3.7l1.3,4.4l1.4-0.8l1.3-3.9l1.3,3.7l1.4,0.8l1.3-3.2l1.4,3.2l1.3,0.8l1.3-5.2l1.4,4.2l1.3,0.2l1.4-5l1.3,5.1l1.3-0.1l1.4-4.6l1.3,3.5l1.4,0.8l1.3-3.9l1.3,4l1.4,0.5l1.3-4.3l1.4,4l1.3-0.6L337.0,310.3L337.0,331.7L89.1,331.7L89.1,305.9Z" fill="#F2CC0C" stroke="#F2CC0C" stroke-width="1.0"/>
<path d="M91.1,307.3l1.3,4.3l1.4-0.8l1.3-4.5l1.4,4.6l1.3,0.4l1.3-4.2l1.4,3.8l1.3,0.5l1.4-2.6l1.3,2.7l1.3,0.2l1.4-4.7l1.3,4.4l1.4,0.2l1.3-5l1.3,4.9l1.4,0l1.3-5.5l1.4,5l1.3-0.9l1.3-3.2l1.4,3.6l1.3,0.2l1.4-4.9l1.3,5.3l1.3,0.4l1.4-4l1.3,3.6l1.4,0.2l1.3-3.3l1.3,3l1.4,0.8l1.3-3.4l1.4,3.6l1.3-0.1l1.3-3.6l1.4,3.1l1.3,1.2l1.4-4.2l1.3,2.7l1.3,0.2l1.4-4.4l1.3,3.8l1.4,0.4l1.3-4.4l1.3,4l1.4,0.5l1.3-3.4l1.4,4.8l1.3-0.8l1.3-4.2l1.4,4l1.3,0.6l1.4-3.9l1.3,3.2l1.3-0.1l1.4-2.4l1.3,3.7l1.4-1.6l1.3-2.9l1.3,4.1l1.4,0.1l1.3-5.1l1.4,5.1l1.3-0.4l1.3-4.2l1.4,4l1.3-0.9l1.4-3.3l1.3,3.6l1.3-0.1l1.4-2.6l1.3,3.1l1.4,0.1l1.3-4.2l1.3,4.2l1.4-0.7l1.3-2.5l1.4,3.7l1.3,0.4l1.3-4.6l1.4,4.7l1.3-0.1l1.4-4.1l1.3,4.2l1.3-0.4l1.4-3.9l1.3,3.3l1.4,1.6l1.3-4.9l1.3,3l1.4,1l1.3-4.2l1.4,3.4l1.3-0.9l1.4-3.1l1.3,3.2l1.3,1.7l1.4-4.9l1.3,5.3l1.4-0.1l1.3-5l1.3,5.1l1.4-0.7l1.3-3.6l1.4,4.5l1.3-0.6l1.3-5.4l1.4,4.9l1.3,0l1.4-3.7l1.3,4.1l1.3-0.1l1.4-3.7l1.3,3.1l1.4-0.2l1.3-3.9l1.3,5l1.4-1l1.3-3.5l1.4,3.6l1.3,0l1.3-3.7l1.4,4.9l1.3-1l1.4-4.4l1.3,3.5l1.3,1.4l1.4-5l1.3,4.6l1.4,0l1.3-3.9l1.3,4.1l1.4-2.1l1.3-3.2l1.4,3.3l1.3,1.1l1.3-4.1l1.4,3.1l1.3,1.3l1.4-2.7l1.3,2.9l1.3-0.4l1.4-4.9l1.3,5l1.4,0l1.3-4.6l1.3,5l1.4,0.1l1.3-5.4l1.4,5.1l1.3,0.2l1.3-3.9l1.4,3.3l1.3-0.9l1.4-2.5l1.3,3.1l1.3,0.3l1.4-3.3l1.3,4.2l1.4-0.9l1.3-3.8l1.3,3.5l1.4,0.8l1.3-3l1.4,3.1l1.3,1l1.3-5.1l1.4,3.9l1.3,0.3l1.4-4.6l1.3,4.4l1.3,0.2l1.4-4.4l1.3,3.2l1.4,0.7l1.3-3.6l1.3,3.5l1.4,0.7l1.3-3.9l1.4,3.5l1.3-0.6L337.0,311.1L337.0,331.7L89.1,331.7L89.1,307.3Z" fill="#37872D" stroke="#37872D" stroke-width="1.0"/>
<path d="M91.1,310.4l1.3,3.3l1.4-0.7l1.3-3.4l1.4,3.5l1.3,0.7l1.3-3.9l1.4,3.3l1.3,0.2l1.4-1.7l1.3,1.9l1.3,0.3l1.4-3.9l1.3,3.5l1.4,0l1.3-4l1.3,4l1.4,0.2l1.3-4.6l1.4,4.2l1.3-1l1.3-2.2l1.4,2.7l1.3,0.5l1.4-4.5l1.3,4.5l1.3,0l1.4-2.7l1.3,2.9l1.4-0.1l1.3-2.5l1.3,2.2l1.4,0.7l1.3-2.7l1.4,3l1.3,0.3l1.3-3.4l1.4,2.5l1.3,1l1.4-3.3l1.3,2l1.3,0.2l1.4-3.4l1.3,3l1.4,0.3l1.3-3.4l1.3,2.7l1.4,0.9l1.3-3l1.4,4.3l1.3-1l1.3-3.3l1.4,3.6l1.3,0.1l1.4-3.2l1.3,2.8l1.3-0.2l1.4-2.2l1.3,3.2l1.4-1.5l1.3-2.2l1.3,3.4l1.4,0l1.3-4.4l1.4,4.8l1.3-0.8l1.3-2.8l1.4,2.8l1.3-0.8l1.4-2.8l1.3,3.3l1.3-0.3l1.4-2.1l1.3,2.6l1.4,0.5l1.3-3.9l1.3,3.7l1.4-0.8l1.3-2.3l1.4,3.4l1.3,0l1.3-3.4l1.4,3.7l1.3,0l1.4-3.5l1.3,3.8l1.3-0.6l1.4-3.2l1.3,2.7l1.4,1.2l1.3-4l1.3,2.3l1.4,1.2l1.3-3.3l1.4,2.7l1.3-1.2l1.4-2.1l1.3,2.2l1.3,1.4l1.4-3.8l1.3,4.4l1.4-0.2l1.3-4l1.3,3.9l1.4-0.2l1.3-2.9l1.4,3.4l1.3-0.1l1.3-4.6l1.4,3.8l1.3,0l1.4-3l1.3,3.5l1.3-0.2l1.4-2.9l1.3,2.3l1.4-0.2l1.3-3l1.3,4.2l1.4-0.9l1.3-3l1.4,3.3l1.3-0.5l1.3-2.7l1.4,3.8l1.3-0.9l1.4-3.6l1.3,3.1l1.3,0.7l1.4-3.5l1.3,3.5l1.4,0.4l1.3-3.4l1.3,3.5l1.4-2.2l1.3-2.7l1.4,2.8l1.3,1.2l1.3-3.3l1.4,2.1l1.3,1.3l1.4-2.2l1.3,2.2l1.3-0.3l1.4-3.3l1.3,3.5l1.4-0.3l1.3-3.4l1.3,4.1l1.4,0.5l1.3-4.8l1.4,4.2l1.3,0.2l1.3-3.2l1.4,2.5l1.3-1l1.4-1.7l1.3,2.5l1.3,0.5l1.4-2.4l1.3,3.1l1.4-1.3l1.3-2.5l1.3,2.8l1.4,0.4l1.3-2.1l1.4,2l1.3,1.2l1.3-4.1l1.4,3.2l1.3-0.2l1.4-3.7l1.3,4.1l1.3-0.3l1.4-3.7l1.3,3.1l1.4,0.3l1.3-3.1l1.3,3.1l1.4,0.3l1.3-2.9l1.4,3l1.3-0.4L337.0,313.6L337.0,331.7L89.1,331.7L89.1,310.4Z" fill="#705DA0" stroke="#705DA0" stroke-width="1.0"/>
<path d="M91.1,312.8l1.3,2.4l1.4-0.6l1.3-2.6l1.4,2.8l1.3,0.7l1.3-3.2l1.4,2.8l1.3,0.1l1.4-1.3l1.3,1.6l1.3,0.1l1.4-3l1.3,2.7l1.4-0.1l1.3-3l1.3,3.3l1.4-0.1l1.3-3.8l1.4,3.8l1.3-0.9l1.3-2.1l1.4,2.1l1.3,0.8l1.4-3.5l1.3,3.2l1.3-0.1l1.4-2l1.3,2.4l1.4-0.2l1.3-1.9l1.3,1.5l1.4,0.8l1.3-2l1.4,2.2l1.3,0.2l1.3-2.4l1.4,1.8l1.3,0.9l1.4-2.7l1.3,1.4l1.3,0.1l1.4-2.6l1.3,2.5l1.4,0.1l1.3-2.6l1.3,1.8l1.4,0.7l1.3-2l1.4,3.4l1.3-0.6l1.3-3l1.4,2.9l1.3,0.4l1.4-2.6l1.3,2.1l1.3,0l1.4-1.7l1.3,2.4l1.4-1.5l1.3-1.8l1.3,3.1l1.4,0.2l1.3-3.7l1.4,4.1l1.3-1l1.3-1.9l1.4,1.8l1.3-0.5l1.4-2.2l1.3,2.4l1.3-0.2l1.4-1.4l1.3,2l1.4,0.4l1.3-3.2l1.3,3.2l1.4-1l1.3-2l1.4,2.9l1.3,0.4l1.3-2.8l1.4,2.9l1.3-0.2l1.4-2.8l1.3,3.1l1.3-0.3l1.4-2.9l1.3,2.5l1.4,0.6l1.3-3.3l1.3,2.5l1.4,0.7l1.3-2.8l1.4,2.4l1.3-1.5l1.4-1.4l1.3,1.7l1.3,1.3l1.4-3.4l1.3,3.9l1.4-0.3l1.3-3.3l1.3,3.4l1.4-0.3l1.3-2.3l1.4,3l1.3-0.5l1.3-3.5l1.4,3.1l1.3,0l1.4-2.6l1.3,2.8l1.3,0l1.4-2.5l1.3,2.1l1.4-0.6l1.3-2.2l1.3,3.5l1.4-0.8l1.3-2.3l1.4,2.9l1.3-1l1.3-1.9l1.4,3.2l1.3-1l1.4-2.7l1.3,2.3l1.3,0.7l1.4-2.7l1.3,2.6l1.4,0.4l1.3-2.7l1.3,2.8l1.4-2l1.3-1.9l1.4,2.2l1.3,1l1.3-2.4l1.4,1.2l1.3,1.4l1.4-1.7l1.3,1.6l1.3-0.5l1.4-2.3l1.3,2.4l1.4,0l1.3-2.5l1.3,3.4l1.4,0.4l1.3-4l1.4,3.1l1.3,0.3l1.3-2.8l1.4,2l1.3-0.7l1.4-1.3l1.3,2.1l1.3,0.4l1.4-1.8l1.3,2.2l1.4-1l1.3-2.1l1.3,2.3l1.4,0.4l1.3-1.4l1.4,1.4l1.3,1.3l1.3-3.7l1.4,2.7l1.3-0.3l1.4-3.2l1.3,3.7l1.3-0.4l1.4-2.9l1.3,2.5l1.4,0l1.3-2.7l1.3,2.8l1.4,0.5l1.3-2.7l1.4,2.4l1.3-0.2L337.0,315.3L337.0,331.7L89.1,331.7L89.1,312.8Z" fill="#A352CC" stroke="#A352CC" stroke-width="1.0"/>
<path d="M91.1,316.2l1.3,1.7l1.4-0.7l1.3-1.9l1.4,2.1l1.3,0.4l1.3-2.5l1.4,2.3l1.3-0.2l1.4-0.4l1.3,0.6l1.3,0.2l1.4-2.1l1.3,1.9l1.4,0.3l1.3-2.6l1.3,2.7l1.4-0.3l1.3-2.7l1.4,2.6l1.3-0.6l1.3-1.4l1.4,1.5l1.3,0.7l1.4-2.4l1.3,2.2l1.3-0.3l1.4-1.5l1.3,1.8l1.4-0.2l1.3-1.1l1.3,1.3l1.4,0.5l1.3-1.5l1.4,1.6l1.3-0.3l1.3-1.3l1.4,0.8l1.3,1.2l1.4-2.4l1.3,1.1l1.3-0.5l1.4-0.8l1.3,1.7l1.4-0.5l1.3-1.5l1.3,0.9l1.4,1.1l1.3-1.5l1.4,2.5l1.3-0.8l1.3-1.9l1.4,1.7l1.3,0.8l1.4-2l1.3,1l1.3,0.2l1.4-1.1l1.3,1.7l1.4-0.9l1.3-1.5l1.3,2.5l1.4-0.1l1.3-2.4l1.4,2.9l1.3-0.7l1.3-1.6l1.4,1.2l1.3-0.3l1.4-1.3l1.3,1.5l1.3-0.2l1.4-0.6l1.3,1.1l1.4,0.3l1.3-2.2l1.3,2.2l1.4-0.6l1.3-1.4l1.4,2l1.3,0.4l1.3-2.1l1.4,2.2l1.3-0.3l1.4-1.6l1.3,1.8l1.3,0l1.4-2.3l1.3,1.5l1.4,1l1.3-2.5l1.3,1.7l1.4,0.3l1.3-2l1.4,1.9l1.3-1.3l1.4-1l1.3,1.7l1.3,0.8l1.4-2.6l1.3,2.6l1.4,0.1l1.3-2.4l1.3,2.6l1.4-0.2l1.3-2l1.4,2.2l1.3-0.4l1.3-2.6l1.4,2.3l1.3,0.2l1.4-2.2l1.3,1.9l1.3,0.4l1.4-1.9l1.3,1.7l1.4-0.7l1.3-1.1l1.3,2.1l1.4-0.7l1.3-0.9l1.4,1.7l1.3-1.4l1.3-0.7l1.4,1.9l1.3-0.9l1.4-1.4l1.3,1.5l1.3,0.9l1.4-2.1l1.3,1.5l1.4,0.8l1.3-1.9l1.3,1.7l1.4-1.8l1.3-1.3l1.4,1.8l1.3,0.7l1.3-1.5l1.4,0.7l1.3,0.5l1.4-0.9l1.3,1.4l1.3-1l1.4-1.6l1.3,2l1.4,0.3l1.3-1.7l1.3,2.3l1.4,0.2l1.3-2.9l1.4,2.1l1.3,0l1.3-1.6l1.4,1.3l1.3-0.5l1.4-0.7l1.3,1.2l1.3,0.2l1.4-0.9l1.3,1.4l1.4-0.8l1.3-1.4l1.3,1.2l1.4,0.6l1.3-0.8l1.4,1.2l1.3,0.8l1.3-2.7l1.4,2l1.3-0.3l1.4-2.4l1.3,2.5l1.3,0.2l1.4-2.3l1.3,1.5l1.4,0.2l1.3-1.9l1.3,2l1.4,0.1l1.3-1.5l1.4,1.4l1.3,0.1L337.0,317.8L337.0,331.7L89.1,331.7L89.1,316.2Z" fill="#3274D9" stroke="#3274D9" stroke-width="1.0"/>
<path d="M91.1,318.4l1.3,1l1.4-0.6l1.3-1.2l1.4,1.5l1.3,0.2l1.3-1.8l1.4,1.5l1.3-0.1l1.4-0.1l1.3,0.3l1.3,0.5l1.4-1.7l1.3,1.2l1.4,0.4l1.3-2l1.3,2.1l1.4-0.5l1.3-1.9l1.4,1.9l1.3-0.4l1.3-0.9l1.4,0.9l1.3,0.6l1.4-1.4l1.3,1.2l1.3-0.2l1.4-1l1.3,1.2l1.4-0.3l1.3-0.4l1.3,0.8l1.4,0.5l1.3-1.4l1.4,1.3l1.3-0.1l1.3-0.9l1.4,0.2l1.3,1.2l1.4-1.8l1.3,0.7l1.3-0.4l1.4-0.6l1.3,1.2l1.4-0.1l1.3-1.1l1.3,0.3l1.4,0.9l1.3-0.8l1.4,1.7l1.3-0.3l1.3-1.5l1.4,1.1l1.3,0.7l1.4-1.3l1.3,0.4l1.3,0.1l1.4-0.7l1.3,1.2l1.4-0.8l1.3-0.8l1.3,1.7l1.4-0.1l1.3-1.9l1.4,2.3l1.3-0.3l1.3-1.5l1.4,0.9l1.3-0.2l1.4-0.7l1.3,0.7l1.3-0.1l1.4-0.2l1.3,0.6l1.4,0.1l1.3-1.2l1.3,1.4l1.4-0.6l1.3-0.9l1.4,1.5l1.3,0.4l1.3-1.4l1.4,1.8l1.3-0.7l1.4-0.9l1.3,1.2l1.3,0.2l1.4-1.9l1.3,1.2l1.4,0.9l1.3-2l1.3,1.2l1.4,0.3l1.3-1.5l1.4,1.3l1.3-1.5l1.4,0l1.3,0.9l1.3,0.9l1.4-2l1.3,1.7l1.4,0.3l1.3-1.9l1.3,1.7l1.4,0.2l1.3-1.6l1.4,2l1.3-0.6l1.3-1.8l1.4,1.5l1.3,0.3l1.4-1.7l1.3,1l1.3,0.8l1.4-1.7l1.3,1.3l1.4-0.5l1.3-0.8l1.3,1.6l1.4-0.6l1.3-0.4l1.4,1.1l1.3-1.1l1.3-0.3l1.4,1.4l1.3-0.8l1.4-0.9l1.3,1.2l1.3,0.4l1.4-1.1l1.3,0.8l1.4,0.5l1.3-1.2l1.3,0.9l1.4-1.3l1.3-0.9l1.4,1.2l1.3,0.7l1.3-1l1.4,0.3l1.3,0.4l1.4-0.5l1.3,0.5l1.3-0.4l1.4-1l1.3,1.5l1.4,0.1l1.3-1.3l1.3,1.8l1.4,0.1l1.3-1.9l1.4,1.3l1.3-0.1l1.3-1.2l1.4,1.1l1.3-0.6l1.4-0.6l1.3,1l1.3,0.4l1.4-0.7l1.3,1l1.4-0.7l1.3-0.9l1.3,0.9l1.4,0.5l1.3-0.5l1.4,0.9l1.3,0.7l1.3-2.2l1.4,1.7l1.3-0.5l1.4-1.8l1.3,2l1.3,0l1.4-1.6l1.3,0.7l1.4,0.3l1.3-1.4l1.3,1.6l1.4,0.2l1.3-1l1.4,0.7l1.3,0.2L337.0,319.4L337.0,331.7L89.1,331.7L89.1,318.4Z" fill="#FA6400" stroke="#FA6400" stroke-width="1.0"/>
<path d="M91.1,321.1l1.3,0.5l1.4-0.5l1.3-0.7l1.4,0.9l1.3,0.3l1.3-1l1.4,0.8l1.3-0.2l1.4,0l1.3,0.3l1.3,0.3l1.4-1.2l1.3,0.9l1.4,0.1l1.3-1.4l1.3,1.6l1.4-0.3l1.3-1.6l1.4,1.5l1.3,0l1.3-1l1.4,0.4l1.3,0.8l1.4-0.9l1.3,0.9l1.3-0.3l1.4-0.7l1.3,0.7l1.4,0.1l1.3-0.6l1.3,0.7l1.4,0.4l1.3-1l1.4,1.2l1.3-0.4l1.3-0.5l1.4,0.1l1.3,0.9l1.4-1.8l1.3,0.8l1.3-0.4l1.4-0.3l1.3,1.1l1.4-0.1l1.3-0.5l1.3-0.2l1.4,0.7l1.3-0.6l1.4,0.9l1.3,0.2l1.3-1l1.4,0.5l1.3,0.7l1.4-0.8l1.3,0.3l1.3-0.1l1.4-0.4l1.3,0.6l1.4-0.4l1.3-0.7l1.3,1.3l1.4,0.3l1.3-1.9l1.4,1.9l1.3-0.4l1.3-1l1.4,0.8l1.3-0.4l1.4-0.1l1.3,0.2l1.3-0.2l1.4-0.1l1.3,0.9l1.4-0.3l1.3-0.8l1.3,0.8l1.4-0.2l1.3-0.6l1.4,1l1.3,0.1l1.3-1.1l1.4,1.4l1.3-0.6l1.4-0.4l1.3,0.9l1.3,0.3l1.4-1.8l1.3,1.1l1.4,0.7l1.3-1.6l1.3,1.1l1.4,0l1.3-0.9l1.4,1l1.3-1.4l1.4,0l1.3,0.8l1.3,0.1l1.4-0.8l1.3,0.8l1.4,0.2l1.3-1.1l1.3,1.4l1.4,0.3l1.3-1.3l1.4,1.4l1.3-0.4l1.3-1.3l1.4,1l1.3,0.2l1.4-1.1l1.3,0.7l1.3,0.4l1.4-1.2l1.3,1.2l1.4-0.4l1.3-0.3l1.3,0.5l1.4,0l1.3-0.4l1.4,0.4l1.3-0.5l1.3-0.1l1.4,1l1.3-0.8l1.4-0.5l1.3,0.7l1.3,0.6l1.4-1.1l1.3,0.9l1.4,0.4l1.3-0.9l1.3,0.5l1.4-1l1.3-0.6l1.4,0.9l1.3,0.5l1.3-0.8l1.4,0.2l1.3,0.4l1.4-0.1l1.3-0.2l1.3,0.1l1.4-1l1.3,1.1l1.4,0.1l1.3-0.8l1.3,1.3l1.4-0.1l1.3-1.6l1.4,1.5l1.3-0.4l1.3-0.6l1.4,0.5l1.3-0.4l1.4-0.3l1.3,0.6l1.3,0.2l1.4-0.5l1.3,1.1l1.4-1.3l1.3-0.3l1.3,1l1.4,0.2l1.3-0.3l1.4,0.6l1.3,0.5l1.3-1.2l1.4,0.8l1.3-0.2l1.4-1.3l1.3,1.5l1.3,0l1.4-1.4l1.3,0.5l1.4,0.1l1.3-0.9l1.3,0.9l1.4,0.4l1.3-0.5l1.4,0.4l1.3,0L337.0,321.6L337.0,331.7L89.1,331.7L89.1,321.1Z" fill="#5794F2" stroke="#5794F2" stroke-width="1.0"/>
<path d="M91.1,323.2l1.3,0.2l1.4-0.4l1.3-0.3l1.4,0.6l1.3,0.3l1.3-0.8l1.4,0.4l1.3,0l1.4,0.2l1.3,0.2l1.3,0.1l1.4-0.7l1.3,0.4l1.4,0.3l1.3-1.1l1.3,1.2l1.4-0.1l1.3-1.3l1.4,0.9l1.3,0.1l1.3-0.9l1.4,0.5l1.3,0.6l1.4-0.8l1.3,0.8l1.3-0.5l1.4,0l1.3,0.1l1.4,0.2l1.3-0.7l1.3,0.5l1.4,0.8l1.3-0.8l1.4,0.7l1.3-0.4l1.3-0.2l1.4,0l1.3,0.7l1.4-1.2l1.3,0.4l1.3-0.2l1.4-0.4l1.3,0.8l1.4,0l1.3-0.3l1.3-0.1l1.4,0.5l1.3-0.4l1.4,0.4l1.3,0.4l1.3-0.9l1.4,0.4l1.3,0.6l1.4-0.7l1.3,0.3l1.3,0l1.4-0.5l1.3,0.6l1.4-0.1l1.3-0.7l1.3,1.2l1.4,0l1.3-1.6l1.4,1.5l1.3-0.2l1.3-0.8l1.4,0.6l1.3-0.6l1.4,0.4l1.3-0.1l1.3-0.2l1.4,0.1l1.3,0.4l1.4-0.1l1.3-0.3l1.3,0.4l1.4-0.2l1.3-0.3l1.4,1l1.3-0.2l1.3-0.8l1.4,0.9l1.3-0.6l1.4,0.1l1.3,0.5l1.3,0.4l1.4-1.5l1.3,0.6l1.4,0.4l1.3-0.9l1.3,1l1.4-0.1l1.3-0.6l1.4,0.8l1.3-1.1l1.4-0.2l1.3,0.7l1.3,0.3l1.4-1l1.3,0.8l1.4,0.1l1.3-0.7l1.3,0.9l1.4,0.3l1.3-1.1l1.4,1.2l1.3-0.3l1.3-1.1l1.4,0.9l1.3,0.3l1.4-1.2l1.3,0.9l1.3,0.2l1.4-1.2l1.3,1.3l1.4-0.4l1.3-0.1l1.3,0.1l1.4,0.1l1.3-0.2l1.4,0.1l1.3-0.3l1.3,0l1.4,0.8l1.3-0.9l1.4,0l1.3,0.2l1.3,0.5l1.4-0.8l1.3,0.5l1.4,0.5l1.3-0.6l1.3,0.2l1.4-0.4l1.3-0.8l1.4,0.6l1.3,0.6l1.3-0.7l1.4,0.3l1.3,0l1.4,0l1.3-0.2l1.3,0.3l1.4-0.8l1.3,0.7l1.4,0.2l1.3-0.6l1.3,0.9l1.4-0.1l1.3-1l1.4,1l1.3-0.2l1.3-0.7l1.4,0.5l1.3-0.1l1.4-0.7l1.3,0.9l1.3,0l1.4-0.3l1.3,0.7l1.4-1l1.3-0.3l1.3,0.9l1.4,0.2l1.3-0.4l1.4,0.4l1.3,0.5l1.3-1l1.4,0.7l1.3-0.1l1.4-0.9l1.3,0.9l1.3-0.2l1.4-0.8l1.3,0.5l1.4,0.1l1.3-0.8l1.3,0.8l1.4,0.2l1.3-0.2l1.4,0.2l1.3-0.3L337.0,323.3L337.0,331.7L89.1,331.7L89.1,323.2Z" fill="#E0B400" stroke="#E0B400" stroke-width="1.0"/>
<path d="M91.1,325.9l1.3,0.1l1.4,0l1.3-0.4l1.4,0.3l1.3,0.4l1.3-0.7l1.4,0.3l1.3,0l1.4-0.1l1.3,0.3l1.3,0.1l1.4-0.1l1.3,0.1l1.4,0.1l1.3-0.3l1.3,0.1l1.4,0.2l1.3-0.8l1.4,0.4l1.3,0.1l1.3-0.5l1.4,0.2l1.3,0.5l1.4-0.2l1.3-0.1l1.3-0.1l1.4,0.1l1.3-0.2l1.4,0.6l1.3-0.6l1.3,0.2l1.4,0.2l1.3,0.1l1.4,0l1.3-0.3l1.3,0.1l1.4,0.2l1.3-0.1l1.4-0.2l1.3,0.3l1.3-0.4l1.4-0.2l1.3,0.7l1.4-0.3l1.3,0l1.3-0.3l1.4,0.3l1.3-0.1l1.4,0.2l1.3,0.2l1.3-0.2l1.4-0.2l1.3,0.4l1.4-0.2l1.3-0.1l1.3,0l1.4,0l1.3,0.5l1.4-0.6l1.3-0.2l1.3,0.9l1.4-0.2l1.3-0.9l1.4,0.9l1.3,0.2l1.3-0.8l1.4,0.4l1.3-0.2l1.4,0.3l1.3-0.4l1.3,0.1l1.4,0l1.3,0.3l1.4-0.4l1.3,0.1l1.3,0l1.4,0.2l1.3-0.4l1.4,0.7l1.3-0.1l1.3-0.1l1.4,0l1.3,0l1.4-0.3l1.3,0.3l1.3,0.4l1.4-0.7l1.3,0.1l1.4,0.4l1.3-0.5l1.3,0.7l1.4-0.3l1.3-0.3l1.4,0.3l1.3-0.6l1.4-0.1l1.3,0.4l1.3,0.2l1.4-0.6l1.3,0.4l1.4,0.1l1.3-0.1l1.3,0.3l1.4,0l1.3-0.4l1.4,0.5l1.3-0.3l1.3-0.4l1.4,0.3l1.3,0.3l1.4-0.5l1.3,0.5l1.3,0.1l1.4-1.1l1.3,0.8l1.4,0.1l1.3-0.1l1.3,0l1.4,0.1l1.3,0.1l1.4,0l1.3-0.5l1.3,0.2l1.4,0.4l1.3-0.5l1.4,0.3l1.3-0.6l1.3,0.7l1.4-0.4l1.3,0.3l1.4-0.1l1.3,0l1.3,0.1l1.4-0.4l1.3-0.3l1.4,0.1l1.3,0.1l1.3,0l1.4,0.2l1.3,0l1.4,0.1l1.3-0.1l1.3,0l1.4-0.2l1.3,0.3l1.4,0l1.3,0l1.3,0.3l1.4-0.3l1.3-0.3l1.4,0.6l1.3-0.4l1.3-0.2l1.4,0.3l1.3-0.2l1.4-0.2l1.3,0.3l1.3-0.1l1.4,0l1.3,0.5l1.4-0.4l1.3-0.2l1.3,0.3l1.4,0l1.3-0.1l1.4,0.3l1.3,0.2l1.3-0.4l1.4,0.2l1.3-0.3l1.4-0.5l1.3,1l1.3-0.2l1.4-0.6l1.3,0.2l1.4,0.3l1.3-0.3l1.3,0.2l1.4-0.2l1.3,0.2l1.4,0.3l1.3-0.5L337.0,325.9L337.0,331.7L89.1,331.7L89.1,325.9Z" fill="#56A64B" stroke="#56A64B" stroke-width="1.0"/>
</g>
<rect x="29" y="362.0" width="14" height="4" rx="2" fill="#56a64b"/>
<text x="51.40" y="367.70" font-size="12.5" fill="#24292e" textLength="185.0" lengthAdjust="spacing">ruler-querier-b9b67fcf7-45pzl</text>
<rect x="29" y="385.5" width="14" height="4" rx="2" fill="#e0b400"/>
<text x="51.40" y="391.20" font-size="12.5" fill="#24292e" textLength="191.6" lengthAdjust="spacing">ruler-querier-b9b67fcf7-47m7k</text>
<rect x="29" y="409.0" width="14" height="4" rx="2" fill="#5794f2"/>
<text x="51.40" y="414.70" font-size="12.5" fill="#24292e" textLength="185.7" lengthAdjust="spacing">ruler-querier-b9b67fcf7-5zc8r</text>
<rect x="360.5" y="174.5" width="335" height="257" fill="#ffffff" stroke="#e4e6e7" stroke-width="1" rx="2"/>
<text x="369.00" y="195.70" font-size="14.5" fill="#24292e" textLength="143.3" lengthAdjust="spacing" stroke="#24292e" stroke-width="0.2">Transmit bandwidth</text>
<line x1="459.5" y1="223.6" x2="459.5" y2="333.7" stroke="#e6e7e8" stroke-width="1"/>
<text x="458.90" y="347.40" font-size="12.3" fill="#24292e" textLength="30.0" lengthAdjust="spacing" text-anchor="middle">15:30</text>
<line x1="520.5" y1="223.6" x2="520.5" y2="333.7" stroke="#e6e7e8" stroke-width="1"/>
<text x="519.90" y="347.40" font-size="12.3" fill="#24292e" textLength="30.0" lengthAdjust="spacing" text-anchor="middle">15:45</text>
<line x1="582.5" y1="223.6" x2="582.5" y2="333.7" stroke="#e6e7e8" stroke-width="1"/>
<text x="581.90" y="347.40" font-size="12.3" fill="#24292e" textLength="30.0" lengthAdjust="spacing" text-anchor="middle">16:00</text>
<line x1="644.5" y1="223.6" x2="644.5" y2="333.7" stroke="#e6e7e8" stroke-width="1"/>
<text x="643.90" y="347.40" font-size="12.3" fill="#24292e" textLength="30.0" lengthAdjust="spacing" text-anchor="middle">16:15</text>
<line x1="432.2" y1="252.5" x2="679" y2="252.5" stroke="#e6e7e8" stroke-width="1"/>
<text x="426.20" y="256.50" font-size="12.3" fill="#24292e" textLength="54.6" lengthAdjust="spacing" text-anchor="end">100 MB/s</text>
<line x1="432.2" y1="290.5" x2="679" y2="290.5" stroke="#e6e7e8" stroke-width="1"/>
<text x="426.20" y="294.70" font-size="12.3" fill="#24292e" textLength="47.4" lengthAdjust="spacing" text-anchor="end">50 MB/s</text>
<line x1="432.2" y1="329.5" x2="679" y2="329.5" stroke="#e6e7e8" stroke-width="1"/>
<text x="426.20" y="332.90" font-size="12.3" fill="#24292e" textLength="29.4" lengthAdjust="spacing" text-anchor="end">0 B/s</text>
<clipPath id="c2"><rect x="432.2" y="178.7" width="246.8" height="150.0"/></clipPath><g clip-path="url(#c2)">
<path d="M432.2,257.3l2-6.1l2-4.1l2-1.9l2,8.1l2-6.2l2,3.8l2-2.7l2.1-0.9l2,1.9l2-0.6l2,7.2l2,2.4l2-9.4l2,5.9l2,0.9l2-1.1l2-4.9l2,4.4l2-0.5l2-6.7l2,9.5l2-4.8l2-6.4l2.1,9.5l2-1.3l2-7.7l2,3.1l2-0.4l2,8.1l2,2.7l2-7.2l2-2.3l2,2.2l2,0.6l2,0.4l2,2l2,0.1l2,1.1l2.1-2.3l2,8.6l2-12.2l2-0.6l2,3.8l2,6.9l2-2.8l2-6.1l2,0.4l2,1.9l2,5.8l2-4.9l2-1l2,5.9l2-2.1l2.1-7.1l2,1.4l2,5.9l2-0.1l2,4.4l2-13.6l2,7.1l2,0.8l2-8.3l2,3.8l2,6.7l2-8.2l2,6.6l2-8.1l2,6l2-7.6l2.1,8.6l2,0.1l2-6.3l2,1.2l2,8.9l2-6.9l2,7.5l2-1.3l2,2.3l2-7.5l2,5.9l2,0.8l2-9.8l2-0.2l2,0.3l2.1,1.6l2-2.8l2,11.6l2-10l2-1.6l2,7.7l2-4.7l2-0.1l2,6.8l2-0.8l2,1.6l2-0.3l2-10l2,0.6l2,10.6l2.1-0.9l2-6.8l2,0.6l2,5.3l2-6l2,5.3l2-6.8l2,6.2l2-9.7l2,3l2-2.2l2,1.6l2,3.1l2-8.3l2,0.3l2,10.7l2.1,3.4l2-7.8l2,7.3l2-6.1l2,7.3l2-1.3l2-9.6l2,1.2L681.0,250.6L681.0,331.7L430.2,331.7L430.2,257.3Z" fill="#A0769A" stroke="#A0769A" stroke-width="0.6"/>
<path d="M432.2,258.3l2-6.2l2-3.8l2-1.8l2,7.9l2-6l2,3.5l2-2.5l2.1-1l2,2l2-0.4l2,6.9l2,2.4l2-9.3l2,5.8l2,0.9l2-1.2l2-4.6l2,4.1l2-0.3l2-6.7l2,9.2l2-4.6l2-6.1l2.1,9.4l2-1.6l2-7.5l2,3.1l2-0.3l2,7.9l2,2.5l2-7l2-2.2l2,2l2,0.7l2,0.4l2,2l2,0.1l2,1.1l2.1-2.3l2,8.6l2-12.3l2-0.4l2,3.8l2,6.9l2-2.9l2-6.1l2,0.2l2,2.1l2,5.8l2-5l2-1l2,5.9l2-2.1l2.1-6.9l2,1.4l2,5.7l2-0.2l2,4.6l2-13.6l2,7.2l2,0.5l2-7.9l2,3.6l2,6.5l2-7.9l2,6.4l2-8.1l2,6l2-7.3l2.1,8.4l2,0.1l2-6.3l2,1.2l2,8.9l2-7l2,7.5l2-1.1l2,2.1l2-7.5l2,5.9l2,0.8l2-9.8l2,0.1l2,0.2l2.1,1.6l2-2.8l2,11.3l2-9.7l2-1.6l2,7.4l2-4.6l2,0.2l2,6.5l2-0.7l2,1.6l2-0.2l2-10.1l2,0.6l2,10.4l2.1-0.8l2-6.7l2,0.6l2,5.2l2-5.9l2,5.2l2-6.7l2,6.2l2-9.6l2,3.2l2-2.4l2,1.7l2,2.9l2-8.2l2,0.2l2,10.7l2.1,3.4l2-7.8l2,7.2l2-5.8l2,7.2l2-1.4l2-9.6l2,1.2L681.0,251.7L681.0,331.7L430.2,331.7L430.2,258.3Z" fill="#BF1B00" stroke="#BF1B00" stroke-width="0.6"/>
<path d="M432.2,262.6l2-6l2-3.7l2-1.8l2,7.2l2-5.9l2,4.3l2-3.1l2.1-0.9l2,2.1l2-0.9l2,6.6l2,2.2l2-8.6l2,5.7l2,0.6l2-1l2-4l2,3.4l2,0.1l2-6.2l2,8.6l2-3.8l2-6.6l2.1,9.2l2-1.6l2-6.4l2,2.3l2-0.5l2,8.2l2,1.5l2-6.6l2-2l2,1.8l2,1.2l2,0.3l2,1.5l2,0.5l2,0.6l2.1-1.8l2,8.5l2-12.1l2-0.2l2,3.7l2,6.9l2-3.8l2-4.9l2,0.7l2,0.9l2,5.4l2-4.6l2-1l2,5.7l2-1.7l2.1-6.6l2,1l2,5.6l2-0.2l2,3.7l2-12.2l2,6.3l2,0.8l2-7l2,2.9l2,5.8l2-6.7l2,5.4l2-6.9l2,5.3l2-6.7l2.1,8.1l2-0.4l2-6.6l2,1.7l2,8.4l2-6.6l2,7.3l2-0.3l2,0.7l2-6.2l2,4.9l2,1.1l2-9.4l2,0.2l2,0.4l2.1,1.4l2-2.8l2,10.4l2-9.2l2-1.2l2,7.1l2-4.3l2,0.3l2,5.3l2-0.3l2,1.8l2-0.5l2-9.2l2,0.3l2,10l2.1-1.2l2-6.2l2-0.2l2,6.1l2-5.7l2,4.6l2-6.1l2,5.9l2-8.5l2,2.1l2-1.7l2,1.1l2,3l2-7.6l2,0l2,10.1l2.1,2.9l2-7.4l2,7.5l2-6l2,6.7l2-0.8l2-9.3l2,1.3L681.0,256.1L681.0,331.7L430.2,331.7L430.2,262.6Z" fill="#E0752D" stroke="#E0752D" stroke-width="0.6"/>
<path d="M432.2,266.2l2-5.3l2-3.8l2-1.3l2,6.9l2-5.8l2,3.9l2-2.9l2.1-0.3l2,1.7l2-1.2l2,6.8l2,2l2-8.8l2,6.2l2,0.4l2-0.5l2-4.5l2,3.2l2,0.5l2-6.7l2,8.6l2-3.7l2-6.5l2.1,9.7l2-2.3l2-5.8l2,2.2l2-0.6l2,7.8l2,1.7l2-6.7l2-1.5l2,1.5l2,1.2l2,0.4l2,1.6l2,0.7l2,0l2.1-1.7l2,8.2l2-11.5l2-0.8l2,3.5l2,6.7l2-3.2l2-5l2,0.7l2,0.6l2,4.9l2-3.4l2-1.1l2,5.6l2-1.9l2.1-6.3l2,0.8l2,5.5l2,0.3l2,2.5l2-11l2,6.5l2,0.9l2-7.3l2,2.4l2,5.8l2-6.4l2,5.3l2-6.3l2,4.6l2-6.5l2.1,8l2-0.5l2-5.7l2,1.1l2,7.7l2-6.2l2,6.9l2-0.7l2,0.9l2-5.4l2,5.1l2,0.6l2-8.7l2-0.1l2,0.5l2.1,1.2l2-2.5l2,9.5l2-8.2l2-1.9l2,7l2-4.5l2,0.2l2,5.6l2,0.1l2,1.2l2-0.6l2-8.6l2,0l2,9.5l2.1-0.7l2-5.8l2-0.9l2,6.7l2-6l2,4.5l2-5.7l2,5.8l2-8.7l2,2.6l2-1l2,0.3l2,2.9l2-7.3l2-0.1l2,10l2.1,2.3l2-7.5l2,7.3l2-5.1l2,6.5l2-1.2l2-9.1l2,1.6L681.0,260.3L681.0,331.7L430.2,331.7L430.2,266.2Z" fill="#64B0C8" stroke="#64B0C8" stroke-width="0.6"/>
<path d="M432.2,270.1l2-5l2-3.2l2-1.3l2,6.3l2-5.1l2,3.4l2-3l2.1-0.2l2,1.5l2-0.7l2,5.8l2,1.8l2-8l2,6.2l2-0.2l2-0.1l2-3.6l2,2.5l2-0.1l2-5.9l2,8l2-3.1l2-6.4l2.1,8.7l2-1.4l2-5.6l2,1.4l2,0.7l2,6.6l2,1.3l2-6l2-1.5l2,1.5l2,1.5l2-0.4l2,2.3l2,0.5l2-0.6l2.1-1.4l2,7.3l2-9.8l2-1.1l2,3l2,6.2l2-3.1l2-4.6l2,1.5l2-0.2l2,4.7l2-3.3l2-0.5l2,5l2-1.7l2.1-5.7l2,0.3l2,5.6l2-0.1l2,2.6l2-10.7l2,6.3l2,0.7l2-6.9l2,2.3l2,5.8l2-6.5l2,5.4l2-6.3l2,5.3l2-7.2l2.1,8.4l2-1.6l2-5.4l2,1.2l2,7.7l2-6l2,6.5l2-0.5l2,0.4l2-4.7l2,4l2,1.1l2-8.2l2,0.6l2-0.5l2.1,2l2-2.5l2,8.6l2-7.5l2-2.6l2,7.2l2-4.4l2,0.2l2,5.6l2,0.4l2,1l2-0.7l2-7.8l2,0l2,8.6l2.1,0.1l2-6.2l2-0.7l2,6.8l2-6l2,3.9l2-5.2l2,5.2l2-7.6l2,1.7l2-0.8l2,0.7l2,3l2-7.3l2-0.4l2,9.8l2.1,2.1l2-7l2,6.3l2-4.7l2,6.1l2-0.8l2-8.7l2,1.7L681.0,264.7L681.0,331.7L430.2,331.7L430.2,270.1Z" fill="#E5AC0E" stroke="#E5AC0E" stroke-width="0.6"/>
<path d="M432.2,273.5l2-4.7l2-3.4l2-0.8l2,5.6l2-4.8l2,3.1l2-2.8l2.1-0.2l2,1.1l2-0.3l2,5.3l2,1.9l2-7.5l2,5.9l2-0.2l2,0.4l2-3.9l2,1.7l2,0.4l2-5.6l2,7.8l2-3l2-6.3l2.1,8.2l2-1l2-5.7l2,1.5l2,0.8l2,5.9l2,1.4l2-5.5l2-1.4l2,1.2l2,1.3l2-0.5l2,2.8l2,0l2-0.4l2.1-1.4l2,6.6l2-8.8l2-1.4l2,3.5l2,5.3l2-2.9l2-4.4l2,1.4l2,0.1l2,4.3l2-2.7l2-0.6l2,4.9l2-1.8l2.1-5.9l2,0.9l2,4.7l2-0.1l2,2.6l2-10.2l2,6.1l2,0.7l2-6.5l2,1.9l2,5.7l2-6l2,5.3l2-6.3l2,5.2l2-6.9l2.1,8.2l2-1.8l2-5l2,1.5l2,6.8l2-5.8l2,6.3l2-0.2l2-0.2l2-4.2l2,3.4l2,1.9l2-7.8l2,0.3l2,0l2.1,1.1l2-2.3l2,8.4l2-7.3l2-2.5l2,7.1l2-4.2l2,0.3l2,5.1l2,0.3l2,0.9l2-0.8l2-7.3l2,0.4l2,7.9l2.1,0.1l2-5.9l2-0.9l2,7l2-5.9l2,3.1l2-4.5l2,4.8l2-6.6l2,1.1l2-1l2,1.3l2,2.2l2-6.6l2,0l2,9.3l2.1,1.6l2-6.9l2,6.3l2-4.5l2,6.1l2-0.7l2-8.6l2,2L681.0,268.4L681.0,331.7L430.2,331.7L430.2,273.5Z" fill="#629E51" stroke="#629E51" stroke-width="0.6"/>
<path d="M432.2,276.8l2-4.7l2-3l2-1l2,5.7l2-4.4l2,2.5l2-2.6l2.1-0.4l2,1.1l2-0.1l2,5l2,1.9l2-7.2l2,5.6l2-0.6l2,0.6l2-3.7l2,1.5l2,0.6l2-5.3l2,7.3l2-2.7l2-6.4l2.1,7.6l2-0.7l2-5.3l2,1.7l2,0.7l2,5.5l2,1.3l2-4.9l2-1.9l2,1.6l2,1l2-0.3l2,2.7l2,0.3l2-0.6l2.1-1.6l2,6.2l2-8.5l2-0.8l2,3.1l2,4.4l2-2.8l2-3.7l2,1l2,0.4l2,4.4l2-2.9l2-0.7l2,4.5l2-1.3l2.1-5.6l2,0.7l2,4.8l2-0.2l2,2.7l2-9.9l2,5.7l2,1l2-6.6l2,1.4l2,5.8l2-5.4l2,5.2l2-6.5l2,5.3l2-7.3l2.1,8.5l2-1.4l2-5.2l2,1.5l2,6.5l2-5.2l2,5.7l2-0.3l2-0.1l2-3.5l2,2.6l2,1.8l2-7.4l2,0.6l2-0.1l2.1,0.8l2-2.4l2,8.3l2-6.9l2-3.1l2,7.2l2-3.3l2-0.3l2,5l2,0.3l2,0.8l2-1l2-7.1l2,0.8l2,7.4l2.1,0.1l2-5.4l2-1.2l2,6.3l2-5.3l2,3.1l2-4.1l2,4.6l2-6.9l2,1.6l2-1l2,1.4l2,1.9l2-6.2l2,0.4l2,8.3l2.1,1.5l2-5.9l2,5.3l2-4.1l2,6.1l2-1.2l2-7.3l2,1L681.0,271.5L681.0,331.7L430.2,331.7L430.2,276.8Z" fill="#AEA2E0" stroke="#AEA2E0" stroke-width="0.6"/>
<path d="M432.2,279.5l2-4.7l2-2.7l2-1.3l2,5.5l2-3.7l2,1.9l2-2.1l2.1-1.1l2,1.5l2,0.1l2,4.3l2,1.7l2-6.6l2,5.6l2-0.4l2,0.8l2-4.1l2,1.9l2,0.3l2-5.2l2,6.9l2-2.5l2-5.9l2.1,7.2l2-0.8l2-4.9l2,1.6l2,0.6l2,5.3l2,1l2-4.7l2-2l2,2l2,1.4l2-0.8l2,2.8l2,0.5l2-1.2l2.1-1.1l2,5.9l2-8.4l2-0.6l2,3.1l2,3.9l2-2.5l2-3.1l2,0.1l2,0.6l2,3.9l2-2.2l2-0.8l2,4.5l2-1.1l2.1-5.5l2,0.1l2,4.8l2,0l2,2.7l2-9.7l2,5.4l2,1l2-5.9l2,1.1l2,5.2l2-5.1l2,5l2-6.2l2,5.1l2-6.8l2.1,8.1l2-1.1l2-5.3l2,1.4l2,6.2l2-4.9l2,5.4l2-0.5l2-0.1l2-2.7l2,1.9l2,2.2l2-7.3l2,0.9l2-0.5l2.1,0.7l2-2.3l2,7.9l2-6.6l2-2.5l2,7.1l2-3.7l2-0.2l2,4.7l2,0.3l2,0.8l2-0.9l2-6.7l2,0.6l2,6.8l2.1,0.5l2-5.5l2-0.8l2,5.9l2-4.9l2,2.6l2-4.1l2,4.6l2-6.4l2,1.3l2-0.7l2,1.6l2,1.3l2-5.7l2,0.3l2,7.9l2.1,1.5l2-5.5l2,4.7l2-3.7l2,5.7l2-1.4l2-6.3l2,0.4L681.0,274.1L681.0,331.7L430.2,331.7L430.2,279.5Z" fill="#E5A8E2" stroke="#E5A8E2" stroke-width="0.6"/>
<path d="M432.2,281.8l2-3.7l2-3l2-1.4l2,5.4l2-3.5l2,1.8l2-1.9l2.1-1l2,1.2l2,0.3l2,4.1l2,1.3l2-6.3l2,5.6l2-0.5l2,0.7l2-3.8l2,1.7l2,0.5l2-5l2,6.5l2-2.3l2-5.4l2.1,6.4l2-1l2-4.3l2,2l2,0.5l2,4.7l2,0.9l2-4.3l2-1.7l2,2l2,0.5l2,0l2,2.6l2,0.1l2-1l2.1-1.3l2,5.2l2-7.6l2-0.5l2,2.7l2,4.1l2-2.6l2-2.7l2,0l2,0.3l2,4l2-2.1l2-1l2,4.7l2-1.3l2.1-4.8l2-0.1l2,3.9l2,0.8l2,2.2l2-9.2l2,5.1l2,1l2-5.4l2,0.7l2,5l2-4.7l2,4.9l2-6.2l2,5l2-6.4l2.1,8.1l2-1.7l2-4.9l2,1.5l2,5.8l2-4.3l2,4.9l2-0.5l2,0.1l2-2.7l2,1.7l2,2.2l2-6.9l2,0.5l2-0.3l2.1,1.1l2-2.5l2,7l2-5.7l2-2.8l2,6.7l2-3.4l2,0.1l2,4.2l2,0.8l2,0.3l2-0.8l2-6.2l2,0.1l2,6.7l2.1,0.4l2-5l2-0.6l2,5.2l2-4.2l2,1.9l2-3.6l2,4.5l2-6.1l2,1.3l2-0.9l2,2l2,0.8l2-5.2l2,0l2,7.2l2.1,1.4l2-4.7l2,4.1l2-3l2,5.3l2-2l2-6l2,0.8L681.0,276.9L681.0,331.7L430.2,331.7L430.2,281.8Z" fill="#82B5D8" stroke="#82B5D8" stroke-width="0.6"/>
<path d="M432.2,284.9l2-3.9l2-3.1l2-1l2,4.6l2-2.7l2,1.7l2-2.1l2.1-0.8l2,0.8l2,0.5l2,3.9l2,1.3l2-5.5l2,4.9l2-0.7l2,0.8l2-3.7l2,1.8l2,0l2-4.2l2,5.9l2-1.9l2-5l2.1,6l2-1.5l2-3.9l2,1.8l2,0.7l2,4.4l2,1.1l2-4.2l2-1.6l2,1.7l2,0.4l2,0.1l2,2.4l2,0.3l2-1.1l2.1-0.9l2,4.6l2-6.6l2-0.8l2,2.3l2,4l2-2.3l2-3.1l2,0.5l2,0.6l2,3.3l2-2.3l2-0.8l2,4.7l2-1.4l2.1-4.2l2-0.6l2,4l2,0.9l2,2.1l2-9.2l2,5.1l2,0.9l2-4.6l2,0.6l2,4.3l2-4.4l2,4.6l2-5.7l2,4.5l2-6.1l2.1,7.7l2-1.4l2-4.6l2,1.3l2,5.4l2-3.7l2,4.4l2-1.1l2,0.5l2-2.4l2,1.6l2,2.1l2-6.7l2,0.7l2-0.3l2.1,0.9l2-2.3l2,6.6l2-5.4l2-2l2,5.7l2-3.2l2-0.1l2,4l2,1l2,0.4l2-1l2-5.9l2,0l2,6.6l2.1,0.5l2-5.2l2-0.2l2,4.7l2-4l2,2l2-3.2l2,4.6l2-6.3l2,1.6l2-1.3l2,1.9l2,1l2-5.4l2,0.2l2,7l2.1,0.8l2-3.9l2,3.8l2-3.3l2,5.3l2-1.7l2-5.9l2,0.7L681.0,279.6L681.0,331.7L430.2,331.7L430.2,284.9Z" fill="#F29191" stroke="#F29191" stroke-width="0.6"/>
<path d="M432.2,287.7l2-3.9l2-2.6l2-1.4l2,4.5l2-2.9l2,1.9l2-2.1l2.1-0.6l2,1l2,0.1l2,4l2,1l2-4.7l2,4.2l2-0.6l2,0.1l2-2.7l2,1.3l2,0l2-3.7l2,5.6l2-1.6l2-4.8l2.1,5.2l2-1.5l2-3.1l2,1.5l2,0.7l2,4.4l2,0.6l2-3.7l2-1.6l2,1.5l2,0.7l2,0l2,2.4l2,0l2-1.1l2.1-0.7l2,3.9l2-5.9l2-0.9l2,2.3l2,3.6l2-1.8l2-3.2l2,0.8l2,0.6l2,2.7l2-2l2-0.8l2,4.4l2-1.3l2.1-3.9l2-0.8l2,3.9l2,1l2,2l2-8.9l2,4.9l2,0.9l2-4.1l2,0.1l2,4.1l2-3.9l2,4.4l2-5.6l2,4.2l2-6l2.1,7.5l2-1.2l2-4.3l2,0.9l2,5.5l2-3.9l2,4.5l2-1.1l2,0.3l2-2.4l2,1.6l2,2.1l2-6.3l2,0.8l2-0.5l2.1,0.7l2-1.8l2,6l2-4.7l2-2.4l2,5.8l2-3.5l2,0l2,4.1l2,0.4l2,0.7l2-0.6l2-5.8l2,0.4l2,5.8l2.1,0.9l2-5.3l2,0.1l2,4.1l2-3.5l2,1.8l2-2.7l2,3.8l2-6.2l2,1.5l2-0.8l2,1.8l2,1l2-4.7l2-0.1l2,6.4l2.1,1.1l2-3.9l2,2.8l2-2.3l2,4.9l2-1.8l2-5.8l2,0.9L681.0,282.4L681.0,331.7L430.2,331.7L430.2,287.7Z" fill="#F9BA8F" stroke="#F9BA8F" stroke-width="0.6"/>
<path d="M432.2,290.2l2-3.8l2-2.4l2-1.3l2,4.5l2-3.1l2,2l2-2.2l2.1-0.3l2,0.8l2,0.4l2,3.3l2,1.4l2-4.7l2,4.2l2-0.7l2-0.1l2-2.2l2,1.4l2-0.5l2-3.3l2,5.4l2-1.8l2-4.3l2.1,4.8l2-1.3l2-3.2l2,1.5l2,0.9l2,4.2l2,0.3l2-3.6l2-1.3l2,1.4l2,1l2-0.5l2,2.2l2,0l2-0.6l2.1-0.6l2,3.5l2-5.7l2-0.8l2,2.6l2,3l2-1.5l2-3.1l2,0.7l2,0.4l2,2.4l2-1.6l2-1.1l2,4.3l2-1.2l2.1-3.6l2-0.6l2,3.3l2,1.3l2,1.9l2-8.4l2,4.6l2,0.7l2-3.8l2,0l2,3.9l2-3.8l2,4.2l2-5.1l2,3.7l2-5.6l2.1,7.1l2-0.9l2-4.3l2,1l2,5.3l2-3.4l2,3.6l2-1.1l2,0.5l2-2.3l2,1.8l2,1.7l2-5.5l2,0.4l2-0.4l2.1,0.6l2-1.8l2,5.6l2-4.2l2-2.2l2,5.2l2-3.6l2,0.7l2,3.5l2,0.8l2,0.7l2-1.2l2-5.1l2,0l2,5.6l2.1,0.8l2-5l2,0.6l2,3.5l2-3.4l2,2l2-2.4l2,3.3l2-5.7l2,1.4l2-0.6l2,1l2,1.3l2-4.3l2-0.2l2,6.4l2.1,0.7l2-3.9l2,3.1l2-3l2,5.1l2-1.4l2-5.2l2,0.7L681.0,285.6L681.0,331.7L430.2,331.7L430.2,290.2Z" fill="#70DBED" stroke="#70DBED" stroke-width="0.6"/>
<path d="M432.2,292.7l2-3.3l2-2.3l2-1.6l2,4.3l2-3.2l2,2.6l2-2.6l2.1,0.5l2,0.2l2,0.3l2,3.2l2,1.4l2-4.3l2,3.7l2-0.8l2,0.1l2-2l2,1.2l2-0.3l2-3l2,5.1l2-1.9l2-3.8l2.1,4l2-1l2-2.9l2,1.8l2,0.8l2,3.4l2,0.8l2-3.9l2-0.8l2,1.1l2,1.1l2-0.7l2,2.1l2-0.2l2-0.1l2.1-0.8l2,3.3l2-5.7l2-0.3l2,2.4l2,2.6l2-1.4l2-2.9l2,0.8l2,0.7l2,1.5l2-1.6l2-0.7l2,3.9l2-0.8l2.1-3.7l2-0.9l2,3.6l2,1l2,1.8l2-7.7l2,4.5l2,0.5l2-3.2l2-0.4l2,3.9l2-4.2l2,4.5l2-5l2,3.5l2-5.1l2.1,6.7l2-0.9l2-4.1l2,1.1l2,4.7l2-3.4l2,3.7l2-1.4l2,0.7l2-2.1l2,1.7l2,1.8l2-5.3l2,0.4l2-0.2l2.1,0.4l2-2l2,5.6l2-4.1l2-1.9l2,5.2l2-3.8l2,0.9l2,3.4l2,0.4l2,0.6l2-0.7l2-5l2-0.4l2,5.7l2.1,0.6l2-4.8l2,0.3l2,3.4l2-2.8l2,1.3l2-1.7l2,3.2l2-5.8l2,2.1l2-0.9l2,0.6l2,1.4l2-3.8l2,0l2,5.3l2.1,1l2-3.8l2,3.2l2-3.1l2,4.9l2-1.5l2-4.4l2,0.1L681.0,288.3L681.0,331.7L430.2,331.7L430.2,292.7Z" fill="#F4D598" stroke="#F4D598" stroke-width="0.6"/>
<path d="M432.2,295.5l2-3l2-2.3l2-1.5l2,3.7l2-2.4l2,2.4l2-2.4l2.1,0l2,0.4l2-0.2l2,3.3l2,1.2l2-3.9l2,3.6l2-0.9l2,0.3l2-2.2l2,1.8l2-1l2-2.8l2,4.8l2-1.4l2-4.1l2.1,3.9l2-0.5l2-3.3l2,1.9l2,0.8l2,3.5l2,0.3l2-3.4l2-0.9l2,1.1l2,0.7l2-0.1l2,1.8l2-0.2l2,0l2.1-0.9l2,3.1l2-5.3l2-0.2l2,2l2,2.7l2-1.4l2-2.8l2,0.7l2,1.1l2,1l2-1.7l2-0.7l2,4.4l2-1.5l2.1-3.4l2-0.6l2,3.1l2,1.6l2,1.2l2-7.4l2,4.5l2,0.3l2-3l2-0.1l2,3.8l2-3.8l2,3.8l2-4.8l2,3.2l2-4.8l2.1,6.6l2-0.8l2-4l2,1.3l2,4.3l2-3.5l2,3.9l2-1.7l2,0.7l2-1.6l2,1.4l2,1.6l2-4.8l2,0.3l2-0.4l2.1,0.1l2-1.2l2,4.7l2-3.6l2-1.3l2,4.2l2-3.2l2,0.5l2,3.8l2-0.2l2,1.1l2-1l2-4.3l2-0.7l2,5.1l2.1,0.5l2-4.7l2,0.7l2,3.5l2-3l2,1.3l2-1.2l2,2.8l2-5.5l2,2.1l2-1.2l2,0.5l2,1.4l2-3.6l2,0.2l2,4.6l2.1,1.3l2-3.4l2,3l2-3.2l2,4.9l2-1.2l2-4.3l2-0.2L681.0,291.2L681.0,331.7L430.2,331.7L430.2,295.5Z" fill="#B7DBAB" stroke="#B7DBAB" stroke-width="0.6"/>
<path d="M432.2,297.7l2-2.5l2-2l2-1.3l2,3.4l2-2.2l2,2.2l2-2.4l2.1-0.1l2,0.6l2-0.3l2,3.1l2,1l2-3.7l2,3.7l2-1.1l2,0.6l2-1.9l2,1.1l2-0.3l2-3.2l2,4.4l2-1.3l2-3.8l2.1,3.8l2-0.2l2-3.1l2,2.1l2-0.1l2,3.9l2-0.3l2-3l2-0.2l2,1l2,0.3l2-0.4l2,1.8l2-0.3l2,0.2l2.1-0.7l2,2.8l2-5l2-0.3l2,2.1l2,2.5l2-1.1l2-2.9l2,0.8l2,1.1l2,0.6l2-1.4l2-0.7l2,4.2l2-1.9l2.1-3l2-0.6l2,2.9l2,1.6l2,1.6l2-7.3l2,4.3l2,0.3l2-2.7l2-0.6l2,3.8l2-3.7l2,3.8l2-4.2l2,2.6l2-4.3l2.1,6.3l2-1.2l2-3.5l2,0.8l2,4.5l2-3.2l2,3.5l2-1.1l2,0.1l2-1.5l2,1.1l2,1.7l2-4.8l2,0.8l2-0.7l2.1,0.3l2-1l2,4.5l2-3.7l2-1.2l2,3.9l2-2.9l2,0.4l2,3.6l2-0.4l2,1.3l2-0.6l2-4.5l2-0.3l2,4.5l2.1,0.8l2-4.5l2,0.1l2,3.4l2-2.9l2,1.4l2-1.2l2,3.1l2-5.5l2,2.2l2-1.4l2,0.2l2,1.6l2-3.3l2,0.3l2,4.3l2.1,0.9l2-2.8l2,2.5l2-2.6l2,4.2l2-0.9l2-3.8l2-0.3L681.0,294.3L681.0,331.7L430.2,331.7L430.2,297.7Z" fill="#584477" stroke="#584477" stroke-width="0.6"/>
<path d="M432.2,299.8l2-2.2l2-1.9l2-1.2l2,3.1l2-1.9l2,2.2l2-2.1l2.1-0.3l2,0.4l2-0.1l2,2.8l2,0.9l2-3.6l2,3.3l2-0.6l2,0.1l2-1.6l2,1.1l2-0.5l2-2.7l2,4.1l2-1.2l2-3.3l2.1,3.3l2-0.4l2-3l2,2.2l2-0.2l2,3.8l2,0l2-3.2l2-0.1l2,0.6l2,1l2-0.9l2,2l2-0.7l2,0.6l2.1-0.7l2,2.3l2-4.3l2-0.2l2,1.8l2,2.1l2-0.9l2-2.8l2,1l2,0.9l2,0.3l2-1.1l2-0.4l2,3.4l2-1.4l2.1-2.8l2-0.6l2,2.7l2,1.5l2,1.2l2-6.6l2,3.6l2,0.8l2-2.6l2-0.6l2,3.7l2-3.6l2,3.5l2-3.6l2,2.3l2-4.1l2.1,5.8l2-1l2-3.2l2,0.7l2,4.1l2-2.7l2,3.1l2-1l2-0.1l2-1.3l2,1l2,1.5l2-4.5l2,0.6l2-0.5l2.1,0.2l2-0.7l2,4.3l2-3.7l2-1l2,3.8l2-3.3l2,1l2,2.8l2-0.3l2,1.4l2-0.7l2-4.3l2,0l2,4.3l2.1,0.8l2-4.2l2,0.1l2,3l2-2.7l2,1.5l2-1.3l2,3.2l2-5.4l2,1.8l2-1.2l2,0.2l2,1.6l2-3l2,0.3l2,4.1l2.1,0.9l2-3.1l2,2.6l2-2.2l2,3.6l2-0.6l2-3.6l2-0.6L681.0,296.5L681.0,331.7L430.2,331.7L430.2,299.8Z" fill="#6D1F62" stroke="#6D1F62" stroke-width="0.6"/>
<path d="M432.2,301.8l2-1.9l2-1.6l2-1l2,2.7l2-1.7l2,1.7l2-2l2.1-0.2l2,0.2l2,0.4l2,2.2l2,1.5l2-4l2,3.5l2-0.8l2,0.2l2-1.3l2,0.7l2-0.4l2-2.2l2,3.5l2-0.5l2-3.9l2.1,3.4l2-0.5l2-2.7l2,2.1l2-0.3l2,3.7l2-0.3l2-2.9l2,0.3l2,0l2,1.3l2-1.1l2,1.7l2-0.7l2,0.8l2.1-0.4l2,2.2l2-4.2l2,0.1l2,1.5l2,1.9l2-0.9l2-2.4l2,0.5l2,0.8l2,0.7l2-1.2l2-0.3l2,3.3l2-1.5l2.1-2.6l2-0.3l2,2.3l2,1.3l2,1.3l2-6.5l2,3.6l2,0.6l2-2.2l2-0.8l2,3.5l2-3.2l2,3.2l2-3.1l2,1.7l2-3.7l2.1,5.5l2-0.8l2-3.2l2,0.8l2,3.5l2-2.3l2,3.2l2-1.2l2-0.1l2-1l2,0.7l2,1.3l2-4.1l2,0.5l2-0.4l2.1,0.2l2-0.5l2,4.1l2-3.4l2-1.4l2,3.7l2-2.9l2,0.7l2,2.6l2,0l2,1.3l2-0.7l2-4.3l2,0.3l2,4l2.1,0.7l2-4l2,0.2l2,2.6l2-2.5l2,1.6l2-1.4l2,2.9l2-4.7l2,1.9l2-1.7l2,0.4l2,1.4l2-2.9l2,0.3l2,4l2.1,0.5l2-2.5l2,2.8l2-2l2,2.5l2-0.2l2-3.5l2-0.4L681.0,299.0L681.0,331.7L430.2,331.7L430.2,301.8Z" fill="#0A437C" stroke="#0A437C" stroke-width="0.6"/>
<path d="M432.2,303.9l2-1.6l2-1.5l2-0.9l2,2.5l2-1.9l2,1.6l2-1.4l2.1-0.3l2-0.1l2,0.9l2,1.7l2,1.4l2-3.5l2,3.3l2-0.8l2,0.1l2-1.3l2,0.6l2-0.5l2-1.8l2,3.3l2-0.6l2-3.4l2.1,2.7l2-0.1l2-2.6l2,1.6l2,0.1l2,3.6l2-0.5l2-2.9l2,0.7l2-0.1l2,1.2l2-0.9l2,1.3l2-0.5l2,0.7l2.1-0.8l2,2.4l2-3.9l2-0.1l2,1.6l2,1.9l2-1.1l2-2l2,0.4l2,0.9l2,0.4l2-1.3l2-0.2l2,3l2-1.2l2.1-2.3l2-0.4l2,1.9l2,1.7l2,0.9l2-6.2l2,3.6l2,0.5l2-1.8l2-1l2,3.1l2-2.4l2,2.6l2-2.7l2,1.5l2-3.4l2.1,4.6l2-0.4l2-2.9l2,0.8l2,3.2l2-1.8l2,2.3l2-0.8l2,0l2-1l2,0.8l2,1.2l2-3.8l2,0.1l2-0.5l2.1,0.5l2-0.5l2,3.8l2-2.9l2-1.7l2,3.3l2-2.1l2,0.5l2,2.1l2,0.1l2,0.6l2-0.1l2-3.9l2,0.3l2,3.7l2.1,0.6l2-3.8l2,0.1l2,2.9l2-2.2l2,1.2l2-1.4l2,2.4l2-3.9l2,1.5l2-1.5l2,0.5l2,1.5l2-3.1l2,0.4l2,3.9l2.1,0.4l2-2.5l2,2.7l2-1.8l2,2.1l2-0.4l2-3l2,0L681.0,301.7L681.0,331.7L430.2,331.7L430.2,303.9Z" fill="#C15C17" stroke="#C15C17" stroke-width="0.6"/>
<path d="M432.2,306.2l2-1.8l2-1l2-1l2,2.4l2-1.9l2,1.4l2-1.4l2.1-0.1l2,0.2l2,0.5l2,1.7l2,1.3l2-3.5l2,3.3l2-0.8l2,0.3l2-1.5l2,0.9l2-0.7l2-1.4l2,2.9l2-0.7l2-3.1l2.1,2.5l2,0.1l2-2.7l2,1.6l2,0l2,3.5l2-0.5l2-2.4l2,0.4l2-0.1l2,1.2l2-0.7l2,1l2-0.6l2,0.8l2.1-0.8l2,2.2l2-3.6l2-0.1l2,1.7l2,1.5l2-1.2l2-1.5l2,0.6l2,0.6l2,0.1l2-1l2-0.2l2,2.6l2-0.8l2.1-2l2-0.8l2,1.7l2,1.9l2,0.9l2-6l2,3.6l2,0l2-1.5l2-0.8l2,2.9l2-2.4l2,2.1l2-1.9l2,1.3l2-3.2l2.1,4.2l2-0.2l2-2.5l2,0.3l2,3l2-1.8l2,2.1l2-0.3l2-0.3l2-1.2l2,0.8l2,1.7l2-3.7l2,0.2l2-0.4l2.1,0.1l2-0.4l2,3.5l2-2.8l2-1.3l2,2.9l2-2.1l2,0.4l2,2.1l2,0.1l2,0.5l2,0.2l2-3.7l2,0.2l2,3.6l2.1,0.4l2-3.6l2,0.5l2,2.2l2-1.8l2,1.1l2-1.3l2,2.2l2-3.6l2,1.6l2-1.6l2,0.4l2,1.1l2-2.6l2,0.3l2,3.6l2.1,0.3l2-2.3l2,2.5l2-1.4l2,1.6l2-0.4l2-2.2l2-0.2L681.0,304.2L681.0,331.7L430.2,331.7L430.2,306.2Z" fill="#447EBC" stroke="#447EBC" stroke-width="0.6"/>
<path d="M432.2,308.5l2-1.9l2-0.7l2-0.9l2,2.4l2-2l2,1.3l2-1.4l2.1-0.3l2,0.6l2,0.3l2,1.4l2,1.2l2-2.8l2,3.1l2-0.9l2,0.1l2-1.5l2,0.6l2-0.5l2-1.1l2,3l2-0.9l2-3.1l2.1,2.7l2,0l2-2.6l2,1.7l2,0l2,3l2-0.6l2-2l2,0.5l2-0.1l2,0.8l2-0.7l2,1.2l2-0.7l2,0.9l2.1-0.5l2,1.4l2-3.1l2-0.2l2,1.8l2,1.7l2-1.4l2-1.1l2,0.1l2,0.8l2,0.1l2-1.2l2-0.2l2,2.2l2-0.3l2.1-2l2-0.4l2,1.2l2,1.8l2,1.1l2-5.9l2,3.7l2-0.3l2-1.4l2-0.7l2,2.6l2-2.1l2,2l2-1.7l2,1l2-2.6l2.1,3.4l2-0.1l2-2.1l2,0.4l2,2.7l2-1.6l2,2l2-0.5l2-0.5l2-0.7l2,0.7l2,1.3l2-3.4l2,0.3l2-0.4l2.1,0.2l2-0.3l2,2.7l2-2.3l2-1.5l2,3.1l2-1.9l2,0.4l2,1.8l2,0l2,0.6l2,0l2-3.3l2,0.3l2,3.1l2.1,0.6l2-3.2l2,0.5l2,2.1l2-1.4l2,0l2-0.7l2,1.9l2-3.1l2,1.7l2-2.1l2,0.8l2,0.9l2-2.3l2,0.2l2,3.1l2.1,0.4l2-2.2l2,2.3l2-1.2l2,1.5l2-0.3l2-2.1l2,0L681.0,306.8L681.0,331.7L430.2,331.7L430.2,308.5Z" fill="#37872D" stroke="#37872D" stroke-width="0.6"/>
<path d="M432.2,311.6l2-2.3l2-0.4l2-0.6l2,2l2-2l2,1.3l2-1.3l2.1-0.1l2,0.6l2-0.3l2,1.5l2,0.9l2-2.2l2,2.7l2-0.7l2-0.3l2-0.8l2,0.4l2-0.4l2-0.8l2,2.5l2-1l2-2.4l2.1,2.2l2-0.2l2-2.2l2,1.3l2,0.1l2,2.7l2-0.8l2-1.1l2-0.2l2,0.3l2,0.7l2-0.8l2,1.3l2-0.9l2,0.7l2.1-0.4l2,1.6l2-3.1l2,0l2,1.9l2,1.3l2-1.6l2-0.5l2,0.2l2,0.3l2,0.2l2-1l2,0l2,1.7l2-0.4l2.1-1.8l2-0.1l2,0.9l2,1.8l2,0.9l2-5.2l2,3.4l2-0.3l2-1.5l2-0.5l2,2.5l2-2.3l2,1.8l2-1.2l2,0.3l2-1.9l2.1,3.1l2-0.4l2-1.5l2,0.3l2,2.6l2-1.5l2,1.5l2-0.3l2-0.5l2-0.9l2,0.8l2,1.5l2-3.1l2,0.2l2-0.7l2.1,0.4l2-0.1l2,2.3l2-2l2-1.1l2,2.8l2-2.1l2,0.2l2,1.8l2,0.3l2,0l2,0.1l2-3.1l2,0.8l2,2.4l2.1,0.7l2-2.5l2,0.3l2,1.6l2-1.4l2,0.3l2-0.7l2,1.7l2-2.7l2,1.5l2-1.9l2,0.7l2,0.5l2-1.7l2,0.3l2,3l2.1,0.1l2-1.6l2,1.7l2-1.2l2,1.3l2-0.3l2-2l2,0.2L681.0,309.7L681.0,331.7L430.2,331.7L430.2,311.6Z" fill="#705DA0" stroke="#705DA0" stroke-width="0.6"/>
<path d="M432.2,313.7l2-2l2-0.4l2-0.5l2,1.7l2-1.5l2,0.9l2-1.1l2.1-0.1l2,0.5l2-0.5l2,1.7l2,0.5l2-1.8l2,2.6l2-0.8l2-0.3l2-0.6l2,0.2l2-0.4l2-0.7l2,2.2l2-0.9l2-2l2.1,1.9l2-0.1l2-1.8l2,1l2-0.2l2,2.8l2-0.5l2-1.8l2,0.3l2,0.1l2,0.7l2-0.5l2,1.2l2-0.9l2,0.4l2.1-0.2l2,1.3l2-2.3l2-0.3l2,1.4l2,1.5l2-1.3l2-0.6l2,0.2l2,0.3l2,0.1l2-0.8l2-0.2l2,1.6l2-0.3l2.1-1.8l2,0.1l2,0.8l2,1.6l2,0.7l2-4.3l2,2.8l2-0.3l2-1.8l2,0.2l2,2.3l2-2.3l2,1.5l2-1l2,0.5l2-1.7l2.1,3l2-0.4l2-2l2,0.7l2,1.8l2-0.7l2,1.1l2-0.3l2-0.3l2-0.9l2,0.6l2,1.5l2-2.6l2,0.1l2-0.6l2.1,0.3l2-0.3l2,2l2-1.5l2-1.3l2,2.5l2-1.6l2,0.1l2,1.5l2,0.3l2,0l2,0.4l2-3.1l2,0.7l2,2l2.1,0.8l2-2.4l2,0.6l2,1.4l2-1.2l2,0l2-0.4l2,1.6l2-2.6l2,1.2l2-1.2l2,0.5l2,0.3l2-1.4l2,0l2,2.8l2.1,0l2-1.1l2,1.2l2-1.1l2,1.3l2,0.2l2-2.3l2,0.3L681.0,312.2L681.0,331.7L430.2,331.7L430.2,313.7Z" fill="#A352CC" stroke="#A352CC" stroke-width="0.6"/>
<path d="M432.2,316.1l2-1.7l2-0.2l2-0.3l2,1.2l2-1.3l2,0.9l2-0.7l2.1-0.1l2,0.5l2-0.7l2,1.2l2,0.9l2-1.3l2,1.8l2-0.8l2,0.1l2-0.5l2-0.1l2,0l2-0.9l2,1.8l2-0.8l2-1.5l2.1,1.5l2,0.1l2-1.6l2,0.7l2,0l2,2.3l2-0.2l2-1.5l2-0.1l2,0.3l2,0.2l2,0l2,1l2-0.8l2,0l2.1-0.1l2,1l2-1.9l2,0.1l2,0.9l2,1l2-1l2,0l2,0.2l2-0.1l2,0.2l2-0.7l2,0l2,1.1l2,0l2.1-1.9l2,0.7l2,0.3l2,1.1l2,0.7l2-3.5l2,2.1l2-0.1l2-1.4l2,0l2,2.1l2-2.4l2,1.5l2-0.4l2,0.5l2-1.6l2.1,2.5l2-0.4l2-1.5l2,0.6l2,1.1l2-0.7l2,1.2l2-0.2l2,0l2-1.2l2,0.7l2,0.9l2-1.7l2-0.3l2-0.3l2.1,0.3l2-0.3l2,1.6l2-1.4l2-0.9l2,1.9l2-1.2l2,0l2,1.4l2,0.2l2,0l2,0.4l2-2.5l2,0.4l2,1.7l2.1,0.3l2-1.4l2,0l2,1.5l2-1.3l2,0.6l2-0.9l2,1.7l2-2.5l2,1.1l2-1.3l2,1.2l2,0.4l2-1.7l2,0.2l2,2.2l2.1-0.3l2-0.1l2,0.7l2-1.3l2,1.3l2,0.2l2-2.1l2,0.3L681.0,315.0L681.0,331.7L430.2,331.7L430.2,316.1Z" fill="#3274D9" stroke="#3274D9" stroke-width="0.6"/>
<path d="M432.2,318.4l2-1.5l2-0.2l2-0.5l2,1.1l2-1.1l2,0.9l2-0.5l2.1-0.3l2,0.6l2-0.5l2,0.7l2,1l2-1.1l2,1.3l2-0.5l2,0.1l2-0.4l2,0.2l2-0.5l2-0.9l2,1.9l2-0.8l2-1.2l2.1,1.6l2-0.3l2-1.2l2,0.4l2,0l2,2l2-0.2l2-1.3l2,0l2,0.2l2,0.1l2,0l2,1.2l2-1.1l2,0.3l2.1,0.1l2,0.3l2-1.2l2,0l2,0.3l2,1.3l2-0.9l2,0l2,0.6l2-0.8l2,0.5l2-0.6l2-0.3l2,1.1l2-0.2l2.1-1.3l2,0.8l2,0.2l2,1l2,0.3l2-2.9l2,1.6l2-0.4l2-0.6l2,0l2,1.8l2-2l2,0.9l2-0.4l2,0.5l2-1.3l2.1,2.4l2-0.5l2-1.6l2,0.7l2,1l2-0.2l2,0.6l2-0.3l2,0.1l2-0.7l2,0.5l2,0.5l2-1.1l2-0.2l2-0.4l2.1,0l2,0.1l2,1.1l2-1.2l2-0.4l2,1.3l2-1l2,0.2l2,1.3l2-0.1l2-0.1l2,0.5l2-2.4l2,0.4l2,1.5l2.1,0l2-1l2-0.2l2,1.6l2-0.9l2,0.3l2-0.7l2,1.4l2-2.1l2,0.8l2-0.9l2,0.8l2,0.4l2-1l2-0.1l2,1.7l2.1-0.2l2-0.1l2,0.5l2-1.1l2,1l2,0.5l2-1.7l2,0L681.0,317.3L681.0,331.7L430.2,331.7L430.2,318.4Z" fill="#FA6400" stroke="#FA6400" stroke-width="0.6"/>
<path d="M432.2,321.1l2-1.5l2,0l2-0.4l2,1l2-0.8l2,0.5l2-0.2l2.1-0.3l2,0.7l2-0.7l2,0.4l2,0.8l2-0.6l2,1l2-0.8l2,0.3l2-0.5l2,0.6l2-0.4l2-0.9l2,1.7l2-0.8l2-0.9l2.1,1.6l2-0.8l2-0.7l2,0.3l2,0.4l2,1l2,0l2-1.3l2,0.1l2,0.2l2,0.4l2-0.4l2,1.2l2-0.9l2,0.1l2.1,0l2,0.7l2-1.5l2,0.1l2,0.7l2,0.8l2-0.7l2-0.3l2,0.8l2-0.5l2,0.1l2-0.4l2,0l2,0.7l2-0.2l2.1-1l2,0.5l2,0.1l2,1.2l2-0.1l2-2.3l2,1.5l2-0.3l2-1l2,0.8l2,0.7l2-1.3l2,1.1l2-1l2,1.1l2-1.4l2.1,2.3l2-0.5l2-1.7l2,0.5l2,0.7l2,0l2,0.3l2,0.1l2-0.3l2-0.2l2,0.3l2,0.5l2-1l2-0.3l2,0l2.1-0.3l2,0.1l2,0.9l2-0.7l2-0.1l2,1l2-1l2,0.2l2,1l2-0.3l2-0.1l2,0.2l2-1.7l2,0.2l2,1.4l2.1,0.5l2-1.1l2-0.1l2,1.3l2-1.1l2,0.2l2-0.6l2,1.3l2-1.6l2,0.8l2-0.8l2,0.5l2,0.1l2-0.4l2-0.1l2,0.8l2.1,0.2l2-0.1l2,0.3l2-0.7l2,0.6l2,0.6l2-1.3l2-0.3L681.0,319.9L681.0,331.7L430.2,331.7L430.2,321.1Z" fill="#5794F2" stroke="#5794F2" stroke-width="0.6"/>
<path d="M432.2,323.3l2-0.9l2-0.3l2-0.3l2,0.8l2-0.6l2,0.7l2-0.6l2.1-0.3l2,0.6l2-0.2l2,0l2,0.7l2-0.4l2,0.4l2-0.3l2,0.3l2-0.4l2,0.5l2-0.6l2-0.6l2,1.4l2-0.7l2-0.5l2.1,0.8l2-0.2l2-0.5l2-0.1l2,0.6l2,0.7l2-0.1l2-0.7l2-0.2l2,0.1l2,0.2l2,0.2l2,0.8l2-0.9l2,0l2.1,0.5l2,0l2-0.8l2,0l2,0.6l2,0.6l2-0.6l2-0.3l2,0.4l2-0.6l2,0.5l2-0.7l2,0.6l2,0.8l2-1.1l2.1-0.3l2,0.5l2-0.3l2,0.9l2,0.2l2-1.6l2,0.9l2-0.2l2-0.9l2,0.8l2,0.6l2-0.8l2,0.3l2-0.8l2,1.2l2-1.2l2.1,2l2-0.7l2-1.2l2,0.4l2,0.5l2,0.2l2-0.3l2,0.6l2-0.5l2-0.3l2,0.3l2,0.7l2-0.8l2-0.4l2,0.2l2.1-0.5l2,0.1l2,0.8l2-0.5l2-0.2l2,0.9l2-0.8l2,0.4l2,0.7l2-0.4l2-0.1l2,0l2-1.2l2,0l2,1.3l2.1,0.5l2-0.9l2-0.2l2,1.2l2-0.6l2-0.1l2-0.7l2,0.7l2-0.7l2,0.4l2-0.6l2,0.6l2,0.1l2-0.4l2-0.1l2,0.5l2.1,0.2l2-0.1l2,0.4l2-0.6l2,0.6l2,0.3l2-0.9l2-0.3L681.0,322.4L681.0,331.7L430.2,331.7L430.2,323.3Z" fill="#E0B400" stroke="#E0B400" stroke-width="0.6"/>
<path d="M432.2,325.9l2-0.6l2-0.2l2-0.2l2,0.5l2-0.4l2,0.5l2-0.5l2.1,0l2,0.3l2,0.1l2-0.2l2,0.7l2-0.9l2,0.6l2,0l2-0.1l2-0.2l2,0.1l2-0.4l2-0.2l2,0.7l2-0.2l2-0.4l2.1,0.7l2-0.6l2,0.1l2-0.1l2,0.5l2,0.4l2,0.1l2-0.5l2-0.4l2,0.3l2-0.2l2,0.3l2,0.2l2-0.3l2,0.2l2.1,0.3l2-0.1l2-0.7l2,0.3l2,0.3l2,0.2l2,0.1l2-0.6l2,0.2l2-0.2l2,0.3l2-0.6l2,0.6l2,0.6l2-1l2.1,0l2,0.1l2,0.1l2,0.4l2-0.1l2-0.7l2,0.5l2-0.1l2-0.3l2,0.1l2,0.4l2-0.6l2,0.2l2-0.4l2,0.9l2-0.8l2.1,1.1l2-0.2l2-0.7l2,0l2,0.2l2,0.4l2-0.4l2,0.3l2,0.1l2-0.5l2,0.1l2,0.5l2-0.1l2-0.3l2-0.1l2.1-0.4l2,0.2l2,0.6l2-0.3l2-0.1l2,0l2,0.4l2-0.3l2,0.4l2-0.5l2,0.2l2,0.2l2-0.6l2-0.3l2,0.6l2.1,0.6l2-0.6l2-0.3l2,1l2-0.5l2,0.1l2-0.6l2,0.6l2-0.6l2,0.1l2-0.1l2,0.4l2,0.4l2-0.3l2-0.6l2,0.2l2.1,0.2l2,0.2l2,0.4l2-0.6l2,0.4l2,0.2l2-0.6l2,0L681.0,325.5L681.0,331.7L430.2,331.7L430.2,325.9Z" fill="#56A64B" stroke="#56A64B" stroke-width="0.6"/>
</g>
<rect x="373" y="362.0" width="14" height="4" rx="2" fill="#56a64b"/>
<text x="395.40" y="367.70" font-size="12.5" fill="#24292e" textLength="185.0" lengthAdjust="spacing">ruler-querier-b9b67fcf7-45pzl</text>
<rect x="373" y="385.5" width="14" height="4" rx="2" fill="#e0b400"/>
<text x="395.40" y="391.20" font-size="12.5" fill="#24292e" textLength="191.6" lengthAdjust="spacing">ruler-querier-b9b67fcf7-47m7k</text>
<rect x="373" y="409.0" width="14" height="4" rx="2" fill="#5794f2"/>
<text x="395.40" y="414.70" font-size="12.5" fill="#24292e" textLength="185.7" lengthAdjust="spacing">ruler-querier-b9b67fcf7-5zc8r</text>
<rect x="704.5" y="174.5" width="335" height="257" fill="#ffffff" stroke="#e4e6e7" stroke-width="1" rx="2"/>
<text x="713.00" y="195.70" font-size="14.5" fill="#24292e" textLength="189.7" lengthAdjust="spacing" stroke="#24292e" stroke-width="0.2">Inflight requests (per pod)</text>
<line x1="775.5" y1="223.6" x2="775.5" y2="383.4" stroke="#e6e7e8" stroke-width="1"/>
<text x="774.90" y="397.10" font-size="12.3" fill="#24292e" textLength="30.0" lengthAdjust="spacing" text-anchor="middle">15:30</text>
<line x1="844.5" y1="223.6" x2="844.5" y2="383.4" stroke="#e6e7e8" stroke-width="1"/>
<text x="843.90" y="397.10" font-size="12.3" fill="#24292e" textLength="30.0" lengthAdjust="spacing" text-anchor="middle">15:45</text>
<line x1="914.5" y1="223.6" x2="914.5" y2="383.4" stroke="#e6e7e8" stroke-width="1"/>
<text x="913.90" y="397.10" font-size="12.3" fill="#24292e" textLength="30.0" lengthAdjust="spacing" text-anchor="middle">16:00</text>
<line x1="983.5" y1="223.6" x2="983.5" y2="383.4" stroke="#e6e7e8" stroke-width="1"/>
<text x="982.90" y="397.10" font-size="12.3" fill="#24292e" textLength="30.0" lengthAdjust="spacing" text-anchor="middle">16:15</text>
<line x1="745.4" y1="230.5" x2="1023" y2="230.5" stroke="#e6e7e8" stroke-width="1"/>
<text x="739.40" y="234.60" font-size="12.3" fill="#24292e" textLength="21.5" lengthAdjust="spacing" text-anchor="end">200</text>
<line x1="745.4" y1="267.5" x2="1023" y2="267.5" stroke="#e6e7e8" stroke-width="1"/>
<text x="739.40" y="271.60" font-size="12.3" fill="#24292e" textLength="21.5" lengthAdjust="spacing" text-anchor="end">150</text>
<line x1="745.4" y1="304.5" x2="1023" y2="304.5" stroke="#e6e7e8" stroke-width="1"/>
<text x="739.40" y="308.60" font-size="12.3" fill="#24292e" textLength="21.5" lengthAdjust="spacing" text-anchor="end">100</text>
<line x1="745.4" y1="341.5" x2="1023" y2="341.5" stroke="#e6e7e8" stroke-width="1"/>
<text x="739.40" y="345.60" font-size="12.3" fill="#24292e" textLength="14.4" lengthAdjust="spacing" text-anchor="end">50</text>
<line x1="745.4" y1="378.5" x2="1023" y2="378.5" stroke="#e6e7e8" stroke-width="1"/>
<text x="739.40" y="382.60" font-size="12.3" fill="#24292e" textLength="7.2" lengthAdjust="spacing" text-anchor="end">0</text>
<path d="M745.4,242.2l2,0l2,0l2,0l2,0l2.1,0l2,0l2,0l2,0l2,0l2,0l2,0l2,0l2.1,0l2,0l2,0l2,0l2,0l2,0l2,0l2,0l2,0l2.1,0l2,0l2,0l2,0l2,0l2,0l2,0l2,0l2,0l2.1,0l2,0l2,0l2,0l2,0l2,0l2,0l2,0l2.1,0l2,0l2,0l2,0l2,0l2,0l2,0l2,0l2,0l2.1,0l2,0l2,0l2,0l2,0l2,0l2,0l2,0l2,0l2.1,0l2,0l2,0l2,0l2,0l2,0l2,0l2,0l2.1,0l2,0l2,0l2,0l2,0l2,0l2,0l2,0l2,0l2.1,0l2,0l2,0l2,0l2,0l2,0l2,0l2,0l2.1,0l2,0l2,0l2,0l2,0l2,0l2,0l2,0l2,0l2.1,0l2,0l2,0l2,0l2,0l2,0l2,0l2,0l2,0l2.1,0l2,0l2,0l2,0l2,0l2,0l2,0l2,0l2.1,0l2,0l2,0l2,0l2,0l2,0l2,0l2,0l2,0l2.1,0l2,0l2,0l2,0l2,0l2,0l2,0l2,0l2,0l2.1,0l2,0l2,0l2,0l2,0l2,0l2,0l2,0l2.1,0l2,0l2,0l2,0l2,0 L1023.0,378.4 L745.4,378.4 Z" fill="#e0b400" fill-opacity="0.01"/>
<path d="M745.4,242.2l2,0l2,0l2,0l2,0l2.1,0l2,0l2,0l2,0l2,0l2,0l2,0l2,0l2.1,0l2,0l2,0l2,0l2,0l2,0l2,0l2,0l2,0l2.1,0l2,0l2,0l2,0l2,0l2,0l2,0l2,0l2,0l2.1,0l2,0l2,0l2,0l2,0l2,0l2,0l2,0l2.1,0l2,0l2,0l2,0l2,0l2,0l2,0l2,0l2,0l2.1,0l2,0l2,0l2,0l2,0l2,0l2,0l2,0l2,0l2.1,0l2,0l2,0l2,0l2,0l2,0l2,0l2,0l2.1,0l2,0l2,0l2,0l2,0l2,0l2,0l2,0l2,0l2.1,0l2,0l2,0l2,0l2,0l2,0l2,0l2,0l2.1,0l2,0l2,0l2,0l2,0l2,0l2,0l2,0l2,0l2.1,0l2,0l2,0l2,0l2,0l2,0l2,0l2,0l2,0l2.1,0l2,0l2,0l2,0l2,0l2,0l2,0l2,0l2.1,0l2,0l2,0l2,0l2,0l2,0l2,0l2,0l2,0l2.1,0l2,0l2,0l2,0l2,0l2,0l2,0l2,0l2,0l2.1,0l2,0l2,0l2,0l2,0l2,0l2,0l2,0l2.1,0l2,0l2,0l2,0l2,0" fill="none" stroke="#e0b400" stroke-width="1" stroke-linejoin="round"/>
<path d="M745.4,376.2l2,0.1l2,0.7l2-0.2l2-0.6l2.1,0l2,0.6l2,0.1l2-0.5l2-0.2l2,0.6l2,0l2-0.6l2.1-0.2l2,0.8l2,0l2-0.7l2-0.1l2,1l2-0.1l2-0.9l2,0.4l2.1,0.7l2-0.3l2-0.5l2,0l2,0.6l2,0.2l2-0.8l2-0.2l2,0.9l2.1-0.1l2-0.8l2,0.2l2,0.5l2,0l2-0.7l2,0.1l2,0.7l2.1,0.1l2-0.8l2,0l2,0.9l2-0.1l2-0.7l2-0.2l2,0.8l2,0.2l2.1-1l2,0.2l2,0.8l2-0.3l2-0.6l2-0.1l2,0.7l2,0.1l2-0.5l2.1-0.3l2,0.9l2,0l2-1l2,0.2l2,0.8l2,0l2-0.9l2.1,0.1l2,0.9l2,0l2-0.9l2-0.1l2,0.7l2,0.2l2-0.9l2-0.1l2.1,1.1l2-0.3l2-0.6l2-0.1l2,0.6l2,0.2l2-0.6l2,0l2.1,0.5l2,0.2l2-0.7l2,0l2,0.6l2,0.2l2-0.8l2-0.1l2,0.8l2.1,0.1l2-1.1l2,0l2,0.8l2,0.1l2-0.7l2-0.2l2,1.1l2-0.3l2.1-0.5l2,0l2,0.5l2,0.1l2-0.8l2,0.2l2,0.4l2,0.2l2.1-0.7l2-0.1l2,1l2-0.1l2-0.8l2-0.1l2,0.9l2-0.3l2-0.7l2.1,0l2,1.1l2,0l2-0.9l2,0l2,0.6l2,0.2l2-0.7l2,0l2.1,0.5l2,0l2-0.6l2,0.2l2,0.3l2,0.1l2-0.5l2-0.1l2.1,0.5l2,0.4l2-1l2,0.2l2,0.5 L1023.0,378.4 L745.4,378.4 Z" fill="#56a64b" fill-opacity="0.01"/>
<path d="M745.4,376.2l2,0.1l2,0.7l2-0.2l2-0.6l2.1,0l2,0.6l2,0.1l2-0.5l2-0.2l2,0.6l2,0l2-0.6l2.1-0.2l2,0.8l2,0l2-0.7l2-0.1l2,1l2-0.1l2-0.9l2,0.4l2.1,0.7l2-0.3l2-0.5l2,0l2,0.6l2,0.2l2-0.8l2-0.2l2,0.9l2.1-0.1l2-0.8l2,0.2l2,0.5l2,0l2-0.7l2,0.1l2,0.7l2.1,0.1l2-0.8l2,0l2,0.9l2-0.1l2-0.7l2-0.2l2,0.8l2,0.2l2.1-1l2,0.2l2,0.8l2-0.3l2-0.6l2-0.1l2,0.7l2,0.1l2-0.5l2.1-0.3l2,0.9l2,0l2-1l2,0.2l2,0.8l2,0l2-0.9l2.1,0.1l2,0.9l2,0l2-0.9l2-0.1l2,0.7l2,0.2l2-0.9l2-0.1l2.1,1.1l2-0.3l2-0.6l2-0.1l2,0.6l2,0.2l2-0.6l2,0l2.1,0.5l2,0.2l2-0.7l2,0l2,0.6l2,0.2l2-0.8l2-0.1l2,0.8l2.1,0.1l2-1.1l2,0l2,0.8l2,0.1l2-0.7l2-0.2l2,1.1l2-0.3l2.1-0.5l2,0l2,0.5l2,0.1l2-0.8l2,0.2l2,0.4l2,0.2l2.1-0.7l2-0.1l2,1l2-0.1l2-0.8l2-0.1l2,0.9l2-0.3l2-0.7l2.1,0l2,1.1l2,0l2-0.9l2,0l2,0.6l2,0.2l2-0.7l2,0l2.1,0.5l2,0l2-0.6l2,0.2l2,0.3l2,0.1l2-0.5l2-0.1l2.1,0.5l2,0.4l2-1l2,0.2l2,0.5" fill="none" stroke="#56a64b" stroke-width="1" stroke-linejoin="round"/>
<rect x="717.0" y="411.3" width="14" height="4" rx="2" fill="#56a64b"/>
<text x="739.20" y="417.00" font-size="12.5" fill="#24292e" textLength="21.0" lengthAdjust="spacing">avg</text>
<rect x="770.9" y="411.3" width="14" height="4" rx="2" fill="#e0b400"/>
<text x="793.10" y="417.00" font-size="12.5" fill="#24292e" textLength="43.3" lengthAdjust="spacing">highest</text>
<rect x="1048.5" y="174.5" width="335" height="257" fill="#ffffff" stroke="#e4e6e7" stroke-width="1" rx="2"/>
<text x="1057.00" y="195.70" font-size="14.5" fill="#24292e" textLength="249.0" lengthAdjust="spacing" stroke="#24292e" stroke-width="0.2">Ingress TCP connections (per pod)</text>
<circle cx="1330.6" cy="191" r="5.8" fill="none" stroke="#5b5f63" stroke-width="1.3"/>
<rect x="1329.9499999999998" y="190.2" width="1.3" height="4" fill="#5b5f63"/><circle cx="1330.6" cy="188.2" r="0.8" fill="#5b5f63"/>
<line x1="1113.5" y1="223.6" x2="1113.5" y2="383.4" stroke="#e6e7e8" stroke-width="1"/>
<text x="1112.90" y="397.10" font-size="12.3" fill="#24292e" textLength="30.0" lengthAdjust="spacing" text-anchor="middle">15:30</text>
<line x1="1184.5" y1="223.6" x2="1184.5" y2="383.4" stroke="#e6e7e8" stroke-width="1"/>
<text x="1183.90" y="397.10" font-size="12.3" fill="#24292e" textLength="30.0" lengthAdjust="spacing" text-anchor="middle">15:45</text>
<line x1="1255.5" y1="223.6" x2="1255.5" y2="383.4" stroke="#e6e7e8" stroke-width="1"/>
<text x="1254.90" y="397.10" font-size="12.3" fill="#24292e" textLength="30.0" lengthAdjust="spacing" text-anchor="middle">16:00</text>
<line x1="1326.5" y1="223.6" x2="1326.5" y2="383.4" stroke="#e6e7e8" stroke-width="1"/>
<text x="1325.90" y="397.10" font-size="12.3" fill="#24292e" textLength="30.0" lengthAdjust="spacing" text-anchor="middle">16:15</text>
<line x1="1082.4" y1="228.5" x2="1367" y2="228.5" stroke="#e6e7e8" stroke-width="1"/>
<text x="1076.40" y="232.39" font-size="12.3" fill="#24292e" textLength="14.4" lengthAdjust="spacing" text-anchor="end">60</text>
<line x1="1082.4" y1="278.5" x2="1367" y2="278.5" stroke="#e6e7e8" stroke-width="1"/>
<text x="1076.40" y="282.46" font-size="12.3" fill="#24292e" textLength="14.4" lengthAdjust="spacing" text-anchor="end">40</text>
<line x1="1082.4" y1="328.5" x2="1367" y2="328.5" stroke="#e6e7e8" stroke-width="1"/>
<text x="1076.40" y="332.53" font-size="12.3" fill="#24292e" textLength="14.4" lengthAdjust="spacing" text-anchor="end">20</text>
<line x1="1082.4" y1="378.5" x2="1367" y2="378.5" stroke="#e6e7e8" stroke-width="1"/>
<text x="1076.40" y="382.60" font-size="12.3" fill="#24292e" textLength="7.2" lengthAdjust="spacing" text-anchor="end">0</text>
<path d="M1082.4,340.7l1.6,0.6l1.6,0.8l1.6-0.4l1.6-0.3l1.6,0.1l1.6-0.5l1.7,0.8l1.6,0.3l1.6-1l1.6-0.5l1.6,0.8l1.6-0.3l1.6-0.1l1.6,0.1l1.6-0.2l1.6,1.2l1.6-1.1l1.6,0.4l1.7,0.1l1.6-0.6l1.6,1l1.6-1.2l1.6,0.2l1.6-0.1l1.6-0.1l1.6,1.1l1.6-0.6l1.6-0.5l1.6,0.6l1.6-0.2l1.6,0.8l1.7-0.8l1.6,1l1.6-0.8l1.6,0.8l1.6-0.5l1.6,0.3l1.6-0.2l1.6,0.2l1.6-0.8l1.6,0.2l1.6-0.4l1.6,0l1.6,0.1l1.7,0.2l1.6,0.1l1.6-0.4l1.6,0.6l1.6,0l1.6,0l1.6,0.6l1.6-0.3l1.6-0.6l1.6,0.3l1.6,0l1.6,0.5l1.7-0.1l1.6-1.1l1.6,0.1l1.6,0.7l1.6-0.9l1.6,0.5l1.6-0.2l1.6,0.9l1.6-1.2l1.6-1.9l1.6,3.1l1.6,0.1l1.6,0l1.7,0.1l1.6-1.2l1.6,0l1.6,0.8l1.6,0l1.6-1l1.6,1.1l1.6-1.1l1.6,0.2l1.6,0.6l1.6-0.1l1.6,0.1l1.6,0.1l1.7-0.6l1.6-1.7l1.6,1.3l1.6,1.3l1.6-0.3l1.6-0.3l1.6-0.4l1.6-0.3l1.6,0.3l1.6,1.1l1.6-1l1.6,0.8l1.7-0.3l1.6,0.5l1.6,0.1l1.6-0.6l1.6-0.7l1.6,0.9l1.6,0.4l1.6-1l1.6,0.6l1.6,0.3l1.6-0.2l1.6-1l1.6-0.1l1.7,0.7l1.6,0l1.6-0.3l1.6,0.5l1.6-0.1l1.6-0.6l1.6,0.2l1.6-0.3l1.6,0.4l1.6-0.3l1.6-0.1l1.6,0.9l1.6-0.6l1.7,0.2l1.6,0.6l1.6-0.1l1.6-0.3l1.6-0.8l1.6,1.3l1.6-1.3l1.6,0l1.6,0.8l1.6-0.3l1.6,0.4l1.6,0.4l1.7,0.1l1.6-1.1l1.6,0.8l1.6-0.5l1.6,3.3l1.6-2.5l1.6-0.6l1.6-0.1l1.6-0.7l1.6,0.6l1.6-0.7l1.6,0.9l1.6-0.7l1.7,0.5l1.6,0.8l1.6-1.4l1.6,0.4l1.6,0.1l1.6,0.2l1.6,0.7l1.6-1.3l1.6,1.2l1.6-0.1l1.6-1l1.6,0.8l1.6-0.1l1.7,0.1l1.6-0.3l1.6-0.5l1.6,0.7l1.6,0.3l1.6,3.5l1.6-3.8l1.6-0.8l1.6,1.2l1.6-0.5l1.6,0l1.6-0.6l1.7,0.9l1.6-0.9l1.6,0.4l1.6-0.4l1.6,0l1.6,0.4l1.6-0.3 L1367.0,378.4 L1082.4,378.4 Z" fill="#56a64b" fill-opacity="0.01"/>
<path d="M1082.4,340.7l1.6,0.6l1.6,0.8l1.6-0.4l1.6-0.3l1.6,0.1l1.6-0.5l1.7,0.8l1.6,0.3l1.6-1l1.6-0.5l1.6,0.8l1.6-0.3l1.6-0.1l1.6,0.1l1.6-0.2l1.6,1.2l1.6-1.1l1.6,0.4l1.7,0.1l1.6-0.6l1.6,1l1.6-1.2l1.6,0.2l1.6-0.1l1.6-0.1l1.6,1.1l1.6-0.6l1.6-0.5l1.6,0.6l1.6-0.2l1.6,0.8l1.7-0.8l1.6,1l1.6-0.8l1.6,0.8l1.6-0.5l1.6,0.3l1.6-0.2l1.6,0.2l1.6-0.8l1.6,0.2l1.6-0.4l1.6,0l1.6,0.1l1.7,0.2l1.6,0.1l1.6-0.4l1.6,0.6l1.6,0l1.6,0l1.6,0.6l1.6-0.3l1.6-0.6l1.6,0.3l1.6,0l1.6,0.5l1.7-0.1l1.6-1.1l1.6,0.1l1.6,0.7l1.6-0.9l1.6,0.5l1.6-0.2l1.6,0.9l1.6-1.2l1.6-1.9l1.6,3.1l1.6,0.1l1.6,0l1.7,0.1l1.6-1.2l1.6,0l1.6,0.8l1.6,0l1.6-1l1.6,1.1l1.6-1.1l1.6,0.2l1.6,0.6l1.6-0.1l1.6,0.1l1.6,0.1l1.7-0.6l1.6-1.7l1.6,1.3l1.6,1.3l1.6-0.3l1.6-0.3l1.6-0.4l1.6-0.3l1.6,0.3l1.6,1.1l1.6-1l1.6,0.8l1.7-0.3l1.6,0.5l1.6,0.1l1.6-0.6l1.6-0.7l1.6,0.9l1.6,0.4l1.6-1l1.6,0.6l1.6,0.3l1.6-0.2l1.6-1l1.6-0.1l1.7,0.7l1.6,0l1.6-0.3l1.6,0.5l1.6-0.1l1.6-0.6l1.6,0.2l1.6-0.3l1.6,0.4l1.6-0.3l1.6-0.1l1.6,0.9l1.6-0.6l1.7,0.2l1.6,0.6l1.6-0.1l1.6-0.3l1.6-0.8l1.6,1.3l1.6-1.3l1.6,0l1.6,0.8l1.6-0.3l1.6,0.4l1.6,0.4l1.7,0.1l1.6-1.1l1.6,0.8l1.6-0.5l1.6,3.3l1.6-2.5l1.6-0.6l1.6-0.1l1.6-0.7l1.6,0.6l1.6-0.7l1.6,0.9l1.6-0.7l1.7,0.5l1.6,0.8l1.6-1.4l1.6,0.4l1.6,0.1l1.6,0.2l1.6,0.7l1.6-1.3l1.6,1.2l1.6-0.1l1.6-1l1.6,0.8l1.6-0.1l1.7,0.1l1.6-0.3l1.6-0.5l1.6,0.7l1.6,0.3l1.6,3.5l1.6-3.8l1.6-0.8l1.6,1.2l1.6-0.5l1.6,0l1.6-0.6l1.7,0.9l1.6-0.9l1.6,0.4l1.6-0.4l1.6,0l1.6,0.4l1.6-0.3" fill="none" stroke="#56a64b" stroke-width="1" stroke-linejoin="round"/>
<path d="M1082.4,280.9l1.6,4.6l1.6,1.1l1.6-3.7l1.6,3.4l1.6-2.9l1.6,3.9l1.7-1.2l1.6-2.8l1.6,2.7l1.6,0.8l1.6-13.6l1.6-0.9l1.6,11.6l1.6,3l1.6-7.5l1.6,2l1.6,5.3l1.6,0.2l1.7-26.2l1.6,20.4l1.6,5.4l1.6,0.6l1.6-7.6l1.6,0.2l1.6,6l1.6-4.3l1.6,2.9l1.6,2.9l1.6,0l1.6-27.7l1.6-1.3l1.7,28.9l1.6-16.5l1.6,16.2l1.6-6.8l1.6,1.3l1.6,5.7l1.6-5.8l1.6-2.5l1.6-11.2l1.6,16.1l1.6,2.8l1.6-14.8l1.6,15.7l1.7-1.7l1.6-1.2l1.6-2.8l1.6,1.9l1.6-18.2l1.6,19.8l1.6-16.2l1.6,8.8l1.6,9.1l1.6-3.5l1.6-21.6l1.6,22.6l1.7-0.8l1.6-20.2l1.6,20.7l1.6-3.6l1.6,0l1.6-27.2l1.6,26.3l1.6-0.2l1.6,2l1.6,1.9l1.6,1l1.6,0.2l1.6-1.5l1.7-13.9l1.6,17.3l1.6-24.1l1.6,20.5l1.6-8.6l1.6,7.5l1.6,0.6l1.6-16.6l1.6,21.4l1.6-4.6l1.6,4.4l1.6,0.1l1.6-4.5l1.7,4.7l1.6-0.8l1.6-6.9l1.6-0.4l1.6-15.3l1.6,17.2l1.6-1.1l1.6,0.9l1.6-13.1l1.6,11.7l1.6-11.2l1.6-17.4l1.7,34.2l1.6,1.1l1.6-6.2l1.6,2.3l1.6,3.8l1.6-0.1l1.6-6.5l1.6,2.7l1.6-13.6l1.6,0.7l1.6,0.7l1.6-21.6l1.6,35.6l1.7,1.7l1.6-32.3l1.6,24.4l1.6,7.5l1.6-1.9l1.6-1.4l1.6-0.9l1.6,0l1.6,2.7l1.6-3.5l1.6,0.3l1.6-14l1.6,13.3l1.7,0.6l1.6-4.6l1.6,3.8l1.6,3.1l1.6-11.1l1.6-5.2l1.6,18.8l1.6,1.7l1.6-1.4l1.6,0.7l1.6,1.2l1.6-4l1.7,2.6l1.6,1.3l1.6-3.7l1.6-7.4l1.6,5.4l1.6,3.7l1.6-47l1.6,45l1.6-18.7l1.6,18.3l1.6-34.6l1.6,32.8l1.6-15.6l1.7,5.9l1.6,10.4l1.6,3.8l1.6-1.7l1.6,0.3l1.6-13.4l1.6,14.5l1.6-5.6l1.6,5.2l1.6-31.6l1.6,34l1.6-4.3l1.6-0.3l1.7-8.7l1.6,7.5l1.6,4.2l1.6-4.5l1.6,4.5l1.6-29.9l1.6,26.9l1.6-2.9l1.6-13.3l1.6,8.6l1.6,5.9l1.6-8.3l1.7,7.2l1.6,6.9l1.6-15.2l1.6-30.8l1.6,39.1l1.6,1.5l1.6,5.3 L1367.0,378.4 L1082.4,378.4 Z" fill="#e0b400" fill-opacity="0.01"/>
<path d="M1082.4,280.9l1.6,4.6l1.6,1.1l1.6-3.7l1.6,3.4l1.6-2.9l1.6,3.9l1.7-1.2l1.6-2.8l1.6,2.7l1.6,0.8l1.6-13.6l1.6-0.9l1.6,11.6l1.6,3l1.6-7.5l1.6,2l1.6,5.3l1.6,0.2l1.7-26.2l1.6,20.4l1.6,5.4l1.6,0.6l1.6-7.6l1.6,0.2l1.6,6l1.6-4.3l1.6,2.9l1.6,2.9l1.6,0l1.6-27.7l1.6-1.3l1.7,28.9l1.6-16.5l1.6,16.2l1.6-6.8l1.6,1.3l1.6,5.7l1.6-5.8l1.6-2.5l1.6-11.2l1.6,16.1l1.6,2.8l1.6-14.8l1.6,15.7l1.7-1.7l1.6-1.2l1.6-2.8l1.6,1.9l1.6-18.2l1.6,19.8l1.6-16.2l1.6,8.8l1.6,9.1l1.6-3.5l1.6-21.6l1.6,22.6l1.7-0.8l1.6-20.2l1.6,20.7l1.6-3.6l1.6,0l1.6-27.2l1.6,26.3l1.6-0.2l1.6,2l1.6,1.9l1.6,1l1.6,0.2l1.6-1.5l1.7-13.9l1.6,17.3l1.6-24.1l1.6,20.5l1.6-8.6l1.6,7.5l1.6,0.6l1.6-16.6l1.6,21.4l1.6-4.6l1.6,4.4l1.6,0.1l1.6-4.5l1.7,4.7l1.6-0.8l1.6-6.9l1.6-0.4l1.6-15.3l1.6,17.2l1.6-1.1l1.6,0.9l1.6-13.1l1.6,11.7l1.6-11.2l1.6-17.4l1.7,34.2l1.6,1.1l1.6-6.2l1.6,2.3l1.6,3.8l1.6-0.1l1.6-6.5l1.6,2.7l1.6-13.6l1.6,0.7l1.6,0.7l1.6-21.6l1.6,35.6l1.7,1.7l1.6-32.3l1.6,24.4l1.6,7.5l1.6-1.9l1.6-1.4l1.6-0.9l1.6,0l1.6,2.7l1.6-3.5l1.6,0.3l1.6-14l1.6,13.3l1.7,0.6l1.6-4.6l1.6,3.8l1.6,3.1l1.6-11.1l1.6-5.2l1.6,18.8l1.6,1.7l1.6-1.4l1.6,0.7l1.6,1.2l1.6-4l1.7,2.6l1.6,1.3l1.6-3.7l1.6-7.4l1.6,5.4l1.6,3.7l1.6-47l1.6,45l1.6-18.7l1.6,18.3l1.6-34.6l1.6,32.8l1.6-15.6l1.7,5.9l1.6,10.4l1.6,3.8l1.6-1.7l1.6,0.3l1.6-13.4l1.6,14.5l1.6-5.6l1.6,5.2l1.6-31.6l1.6,34l1.6-4.3l1.6-0.3l1.7-8.7l1.6,7.5l1.6,4.2l1.6-4.5l1.6,4.5l1.6-29.9l1.6,26.9l1.6-2.9l1.6-13.3l1.6,8.6l1.6,5.9l1.6-8.3l1.7,7.2l1.6,6.9l1.6-15.2l1.6-30.8l1.6,39.1l1.6,1.5l1.6,5.3" fill="none" stroke="#e0b400" stroke-width="1" stroke-linejoin="round"/>
<path d="M1082.4,378.4l1.6,0l1.6,0l1.6,0l1.6,0l1.6,0l1.6,0l1.7,0l1.6,0l1.6,0l1.6,0l1.6,0l1.6,0l1.6,0l1.6,0l1.6,0l1.6,0l1.6,0l1.6,0l1.7,0l1.6,0l1.6,0l1.6,0l1.6,0l1.6,0l1.6,0l1.6,0l1.6,0l1.6,0l1.6,0l1.6,0l1.6,0l1.7,0l1.6,0l1.6,0l1.6,0l1.6,0l1.6,0l1.6,0l1.6,0l1.6,0l1.6,0l1.6,0l1.6,0l1.6,0l1.7,0l1.6,0l1.6,0l1.6,0l1.6,0l1.6,0l1.6,0l1.6,0l1.6,0l1.6,0l1.6,0l1.6,0l1.7,0l1.6,0l1.6,0l1.6,0l1.6,0l1.6,0l1.6,0l1.6,0l1.6,0l1.6,0l1.6,0l1.6,0l1.6,0l1.7,0l1.6,0l1.6,0l1.6,0l1.6,0l1.6,0l1.6,0l1.6,0l1.6,0l1.6,0l1.6,0l1.6,0l1.6,0l1.7,0l1.6,0l1.6,0l1.6,0l1.6,0l1.6,0l1.6,0l1.6,0l1.6,0l1.6,0l1.6,0l1.6,0l1.7,0l1.6,0l1.6,0l1.6,0l1.6,0l1.6,0l1.6,0l1.6,0l1.6,0l1.6,0l1.6,0l1.6,0l1.6,0l1.7,0l1.6,0l1.6,0l1.6,0l1.6,0l1.6,0l1.6,0l1.6,0l1.6,0l1.6,0l1.6,0l1.6,0l1.6,0l1.7,0l1.6,0l1.6,0l1.6,0l1.6,0l1.6,0l1.6,0l1.6,0l1.6,0l1.6,0l1.6,0l1.6,0l1.7,0l1.6,0l1.6,0l1.6,0l1.6,0l1.6,0l1.6,0l1.6,0l1.6,0l1.6,0l1.6,0l1.6,0l1.6,0l1.7,0l1.6,0l1.6,0l1.6,0l1.6,0l1.6,0l1.6,0l1.6,0l1.6,0l1.6,0l1.6,0l1.6,0l1.6,0l1.7,0l1.6,0l1.6,0l1.6,0l1.6,0l1.6,0l1.6,0l1.6,0l1.6,0l1.6,0l1.6,0l1.6,0l1.7,0l1.6,0l1.6,0l1.6,0l1.6,0l1.6,0l1.6,0" fill="none" stroke="#5794f2" stroke-width="1" stroke-linejoin="round"/>
<rect x="1061.0" y="411.3" width="14" height="4" rx="2" fill="#56a64b"/>
<text x="1083.20" y="417.00" font-size="12.5" fill="#24292e" textLength="21.0" lengthAdjust="spacing">avg</text>
<rect x="1114.9" y="411.3" width="14" height="4" rx="2" fill="#e0b400"/>
<text x="1137.10" y="417.00" font-size="12.5" fill="#24292e" textLength="43.3" lengthAdjust="spacing">highest</text>
<rect x="1191.1" y="411.3" width="14" height="4" rx="2" fill="#5794f2"/>
<text x="1213.30" y="417.00" font-size="12.5" fill="#24292e" textLength="23.9" lengthAdjust="spacing">limit</text>
<rect x="16.5" y="478.5" width="335" height="257" fill="#ffffff" stroke="#e4e6e7" stroke-width="1" rx="2"/>
<text x="25.00" y="499.70" font-size="14.5" fill="#24292e" textLength="136.4" lengthAdjust="spacing" stroke="#24292e" stroke-width="0.2">Receive bandwidth</text>
<line x1="110.5" y1="527.6" x2="110.5" y2="639.9" stroke="#e6e7e8" stroke-width="1"/>
<text x="109.90" y="653.60" font-size="12.3" fill="#24292e" textLength="30.0" lengthAdjust="spacing" text-anchor="middle">15:30</text>
<line x1="173.5" y1="527.6" x2="173.5" y2="639.9" stroke="#e6e7e8" stroke-width="1"/>
<text x="172.90" y="653.60" font-size="12.3" fill="#24292e" textLength="30.0" lengthAdjust="spacing" text-anchor="middle">15:45</text>
<line x1="236.5" y1="527.6" x2="236.5" y2="639.9" stroke="#e6e7e8" stroke-width="1"/>
<text x="235.90" y="653.60" font-size="12.3" fill="#24292e" textLength="30.0" lengthAdjust="spacing" text-anchor="middle">16:00</text>
<line x1="299.5" y1="527.6" x2="299.5" y2="639.9" stroke="#e6e7e8" stroke-width="1"/>
<text x="298.90" y="653.60" font-size="12.3" fill="#24292e" textLength="30.0" lengthAdjust="spacing" text-anchor="middle">16:15</text>
<line x1="83.1" y1="561.5" x2="335" y2="561.5" stroke="#e6e7e8" stroke-width="1"/>
<text x="77.10" y="565.50" font-size="12.3" fill="#24292e" textLength="47.4" lengthAdjust="spacing" text-anchor="end">50 MB/s</text>
<line x1="83.1" y1="598.5" x2="335" y2="598.5" stroke="#e6e7e8" stroke-width="1"/>
<text x="77.10" y="602.30" font-size="12.3" fill="#24292e" textLength="47.4" lengthAdjust="spacing" text-anchor="end">25 MB/s</text>
<line x1="83.1" y1="635.5" x2="335" y2="635.5" stroke="#e6e7e8" stroke-width="1"/>
<text x="77.10" y="639.10" font-size="12.3" fill="#24292e" textLength="29.4" lengthAdjust="spacing" text-anchor="end">0 B/s</text>
<clipPath id="c3"><rect x="83.1" y="484.9" width="251.9" height="150.0"/></clipPath><g clip-path="url(#c3)">
<path d="M83.1,555.6l1-1.8l1,8.9l1-7.2l1,18.1l1-7.4l1-11.3l1,5.2l1,12.4l1-14.6l1,5.1l1,6.5l1-22.8l1,0.1l1.1,15l1,0.5l1,0.5l1,8.7l1-20.8l1,2.8l1-1.4l1-9.9l1,23.5l1,0.1l1,4.5l1-2.2l1-1.7l1-1l1,4.9l1-1.7l1,17.7l1-11.2l1,6.3l1-11.4l1,9l1-16.3l1,5.1l1-17.8l1,20.4l1-0.7l1,7.9l1-10.8l1.1-4.7l1,2.5l1,11.7l1-9.1l1-2.4l1,0.2l1-12.5l1,19.2l1-13.3l1,14.1l1-18.7l1,10.6l1,3.1l1-11.9l1,4.8l1,5.4l1,20.3l1-22.5l1,15.2l1-8.7l1,2l1-13.7l1-1.3l1,1.5l1-1.8l1,6.2l1-6l1,0.8l1.1,3.2l1,3.2l1,2l1-1.7l1,13.1l1-13.6l1,8.2l1-0.5l1-19.4l1,7.5l1-7.9l1,1.5l1,6l1-2.7l1,14.5l1-17.1l1,17.4l1-2.4l1-5.8l1-4.7l1,9.3l1,12.8l1-26.9l1,11.1l1,16.8l1-21.4l1,7.3l1-1.5l1.1,3.6l1,9.3l1-20.4l1,1.4l1-0.2l1,13l1-7.9l1-9.1l1-1.2l1-0.9l1-7.1l1,14l1-3.3l1,1.9l1,13.5l1-18.4l1,1.2l1,10l1-6.7l1-4.4l1,10.1l1,2.3l1,9.9l1-6.6l1-8.7l1-7.5l1,16.3l1-9.8l1.1,15.9l1-6.4l1,6.4l1-4.8l1,2.1l1-9.3l1-3.9l1-9.2l1,20.6l1-6.3l1-0.1l1,10.8l1,1.7l1-21.6l1,14.9l1-9.6l1-5.6l1,0.9l1,17l1-12.4l1,3.8l1-11.9l1,0.2l1,4.9l1,1.4l1,10.5l1-13.2l1,2.5l1.1,5.3l1-1.2l1,3.8l1-5.3l1,6.3l1-0.2l1,14.4l1-16.7l1-5.8l1,4.6l1-2l1-2.2l1,7.4l1-8.4l1,2.2l1,8.9l1,6.2l1-32.1l1,6.3l1,11.9l1-11.9l1,13.2l1-22l1,19.9l1,7l1-2.2l1-7.3l1,18.7l1.1-9l1-11.6l1,5.4l1-12.9l1,6l1,5.9l1,8.1l1,1.4l1-11.5l1,10l1-14.9l1-1.4l1-1.8l1,13.5l1-7.4l1-2l1,1l1,13.5l1-12.2l1,13.7l1,0.4l1-12.1l1,0.8l1,10.4l1,11l1-16l1,0l1-2.1l1.1-4.5l1,14.6l1-10.6l1,0.4l1,22.8l1-18.7l1-10.2l1,11.9l1-14.4l1,20.5l1-0.9l1-16.5l1,8.2l1-2.5l1-6l1-4.5l1,7.4l1-6l1,10.5l1-3.5l1-6.3l1,2.4l1,3.2l1,6l1,11.1l1-16.4l1,8.6l1-5.7l1.1-3.1l1,1.8l1,3.9l1-15.7l1,2.2l1-8l1,4.8l1,11.5l1,7.5l1-15.4l1,5l1,3.9l1,6.4l1-15.9L337.0,554.5L337.0,637.9L81.1,637.9L81.1,555.6Z" fill="#5794f2" stroke="#5794f2" stroke-width="0.6"/>
<path d="M83.1,584l1-6l1,5.5l1-6.5l1,21l1-6.1l1-10.4l1,2.1l1,5l1-10.2l1,6.6l1,6.7l1-15.5l1-0.7l1.1,9.9l1,3.4l1,3.7l1,6.7l1-18.1l1,1.8l1-0.2l1-6.2l1,9.8l1,4.1l1,8.1l1-10.6l1,0.5l1,2.6l1,5.9l1-11.5l1,10.1l1,1l1,1l1-9.4l1,8.7l1-6.5l1,3l1-13.6l1,18.3l1-11.6l1,1.2l1-6.9l1.1-4.4l1,10.3l1,7.5l1-3.9l1,1.8l1-2.5l1-5.7l1,15.6l1-13.7l1,9.2l1-8.5l1,6l1-1.2l1-7l1-1.7l1,5.7l1,10.3l1-9.2l1,0.2l1,1l1,0.8l1-3.7l1-0.8l1-4l1,5.7l1-3.9l1-0.1l1,4.6l1.1-1.3l1-4.2l1,3.7l1,1.9l1,13.5l1-15.7l1,7.6l1,2.4l1-11.2l1,13.1l1-16.9l1,3.3l1,6.4l1-4.7l1,1.4l1-3.9l1,15.1l1-8.7l1-4.5l1,2.8l1-0.3l1,14l1-21.3l1,9.6l1,13.1l1-15.7l1,7.1l1-6.6l1.1-2.9l1,10.3l1-16.2l1,5l1,2.4l1,6.4l1-2.9l1-7.1l1-6.8l1,2.6l1,2.6l1,4.6l1,5l1-2l1-2l1-9.7l1,5.1l1,18.4l1-8.6l1-10.7l1,1.4l1,6l1,4l1,3.2l1-11.6l1-3.9l1,8.3l1-10.6l1.1,1.8l1,9.5l1,2.2l1-10.4l1,8.1l1,1l1-4.4l1,0.2l1,1.5l1,3.8l1-2.7l1,6.5l1-2.1l1-9.3l1,7.5l1-1.7l1-6.5l1-0.8l1,13l1-12.6l1,1.6l1-5.8l1,4.4l1-2.6l1,1.3l1,11.1l1-11.5l1,4.7l1.1,4l1-6.2l1,1.6l1-1.7l1,3.2l1,2.1l1,3.6l1-11.5l1,5l1,2.8l1-1.5l1-2.2l1,12.2l1-7l1-5.4l1,9.2l1-5.1l1-8.8l1,5l1,2.4l1-6.2l1,2.5l1-10.2l1,11.3l1,4.6l1-2.3l1,1.9l1,8.4l1.1-6.8l1-8l1,2.5l1-3.5l1,9l1-3.9l1,1.8l1,1.2l1-5l1,9l1-9.1l1-5.2l1-0.3l1,7.5l1-5.6l1,3l1,0.9l1,7.7l1-10l1,3l1,12.6l1-12.9l1-0.7l1,6.8l1,7.1l1-8.9l1,3.2l1-2.2l1.1-6.8l1,15.4l1-9.3l1,0.3l1,13.4l1-12.5l1-7.4l1,5.5l1-2.4l1,11l1,2.2l1-16.5l1-1.1l1,0l1,0.8l1-0.4l1,8.6l1-0.7l1,0.5l1,4.2l1-5l1-5.4l1,10.6l1-1.5l1-2.6l1-6.7l1,8.8l1,4.1l1.1-5.6l1-0.2l1,3.3l1-14.7l1,2.2l1-8.6l1,4.4l1,7.6l1,3.7l1-7.8l1,8l1-1.6l1-2.6l1-5.1L337.0,582.2L337.0,637.9L81.1,637.9L81.1,584.0Z" fill="#e0b400" stroke="#e0b400" stroke-width="0.6"/>
<path d="M83.1,611.3l1-2.3l1,2.1l1-3.4l1,12.2l1-6.2l1-4.8l1,1l1-7.3l1,5l1,4.7l1,1.4l1-5.5l1-1.1l1.1,3.9l1,3.2l1,2.1l1-1.1l1-6.9l1,2.3l1,0.1l1-5.5l1,5.5l1,5.9l1,3.3l1-5.3l1-3l1,3.3l1,6.3l1-7.7l1,0.7l1,8.6l1-1.8l1-3.7l1,1.2l1-2l1,1.8l1-8.8l1,12.6l1-10.1l1,4.3l1-5.1l1.1-1.3l1,3.4l1,5.3l1-0.2l1-3.5l1,2.3l1-5.8l1,10l1-6.3l1,1.7l1-10.8l1,10.3l1-1.8l1-8.1l1,3l1,2.6l1-1.9l1,5.1l1-2.6l1,2.7l1-1.3l1,0.1l1-4.3l1,2.1l1,3.1l1,0.1l1-2.4l1,1.5l1.1-3.6l1,1.6l1,1.8l1,1l1,1l1-1.8l1,2.9l1,2.8l1-10.6l1,13.3l1-12.9l1,0.7l1,2.3l1,2.2l1-0.5l1-6.5l1,10.8l1-1.4l1,2.2l1-3.9l1-0.3l1,11.5l1-14.8l1,1.5l1,8.4l1-9.4l1,12.7l1-11.9l1.1,3.1l1-1.7l1-3.8l1,0.9l1-0.7l1,6l1,0.1l1-4.8l1-2.1l1,0.6l1-2.1l1,6.6l1,1.6l1,2.7l1-4.5l1-7.7l1,0.8l1,16l1-8.1l1-4.6l1-0.8l1,0.7l1,2.8l1-0.8l1-0.7l1-2l1,2.4l1-7l1.1,4.2l1,3.6l1,1.6l1-0.1l1,1.7l1-3.2l1-1.6l1-1.8l1,1.3l1,1.4l1,0.3l1,8.3l1-0.2l1-5.8l1-0.5l1-4.3l1-1.7l1-1l1,1.8l1,1.8l1,0.3l1-4.4l1,3.6l1,1.8l1-3.8l1,5.7l1-6.2l1,1.2l1.1,7.5l1-3.8l1,1.2l1-3l1,0l1,0.5l1,3.3l1-4.9l1,3.6l1,3.2l1-6.3l1,3l1,9.2l1-6.4l1-5.3l1,0.4l1-1.3l1-2.4l1,0.2l1,7.6l1-3.1l1-4.9l1-3l1,9.9l1-0.3l1-0.8l1,3.3l1,0.3l1.1-6.4l1,3l1-4.4l1,2.5l1-1.4l1,3.5l1-2.4l1-2.4l1,2.1l1,0.6l1-3.6l1,2.5l1-1.8l1,4.3l1-1.9l1-0.5l1,0.7l1,5.8l1-0.6l1-4l1,12.6l1-10.8l1-2.8l1,5.3l1,7.3l1-12.6l1,9.8l1-1.4l1.1-4.6l1,9.4l1-11.9l1,2.9l1,0.6l1,0.2l1-2.8l1,2.1l1-4.1l1,7.1l1-5.3l1,0.1l1-4.1l1-2.3l1,4.3l1-1.2l1,2l1,2.2l1,0.3l1,0.7l1-6.3l1,0.7l1,7.3l1-2.9l1,2l1-3.8l1,2.8l1,1.2l1.1-2.9l1,3.5l1,4l1-13.5l1,2.8l1-2.4l1,5l1-0.4l1,5.5l1-7.1l1,5.2l1,1.5l1-2.2l1-1.7L337.0,614.8L337.0,637.9L81.1,637.9L81.1,611.3Z" fill="#56a64b" stroke="#56a64b" stroke-width="0.6"/>
</g>
<rect x="29" y="669.0" width="14" height="4" rx="2" fill="#56a64b"/>
<text x="51.40" y="674.70" font-size="12.5" fill="#24292e" textLength="248.6" lengthAdjust="spacing">ruler-query-frontend-745595dfdc-6hnpp</text>
<rect x="29" y="692.5" width="14" height="4" rx="2" fill="#e0b400"/>
<text x="51.40" y="698.20" font-size="12.5" fill="#24292e" textLength="245.0" lengthAdjust="spacing">ruler-query-frontend-745595dfdc-8rk7q</text>
<rect x="29" y="716.0" width="14" height="4" rx="2" fill="#5794f2"/>
<text x="51.40" y="721.70" font-size="12.5" fill="#24292e" textLength="250.0" lengthAdjust="spacing">ruler-query-frontend-745595dfdc-q7b7x</text>
<rect x="360.5" y="478.5" width="335" height="257" fill="#ffffff" stroke="#e4e6e7" stroke-width="1" rx="2"/>
<text x="369.00" y="499.70" font-size="14.5" fill="#24292e" textLength="143.3" lengthAdjust="spacing" stroke="#24292e" stroke-width="0.2">Transmit bandwidth</text>
<line x1="453.5" y1="527.6" x2="453.5" y2="639.7" stroke="#e6e7e8" stroke-width="1"/>
<text x="452.90" y="653.40" font-size="12.3" fill="#24292e" textLength="30.0" lengthAdjust="spacing" text-anchor="middle">15:30</text>
<line x1="516.5" y1="527.6" x2="516.5" y2="639.7" stroke="#e6e7e8" stroke-width="1"/>
<text x="515.90" y="653.40" font-size="12.3" fill="#24292e" textLength="30.0" lengthAdjust="spacing" text-anchor="middle">15:45</text>
<line x1="580.5" y1="527.6" x2="580.5" y2="639.7" stroke="#e6e7e8" stroke-width="1"/>
<text x="579.90" y="653.40" font-size="12.3" fill="#24292e" textLength="30.0" lengthAdjust="spacing" text-anchor="middle">16:00</text>
<line x1="643.5" y1="527.6" x2="643.5" y2="639.7" stroke="#e6e7e8" stroke-width="1"/>
<text x="642.90" y="653.40" font-size="12.3" fill="#24292e" textLength="30.0" lengthAdjust="spacing" text-anchor="middle">16:15</text>
<line x1="426.4" y1="561.5" x2="679" y2="561.5" stroke="#e6e7e8" stroke-width="1"/>
<text x="420.40" y="565.10" font-size="12.3" fill="#24292e" textLength="47.4" lengthAdjust="spacing" text-anchor="end">20 MB/s</text>
<line x1="426.4" y1="598.5" x2="679" y2="598.5" stroke="#e6e7e8" stroke-width="1"/>
<text x="420.40" y="602.00" font-size="12.3" fill="#24292e" textLength="47.4" lengthAdjust="spacing" text-anchor="end">10 MB/s</text>
<line x1="426.4" y1="635.5" x2="679" y2="635.5" stroke="#e6e7e8" stroke-width="1"/>
<text x="420.40" y="638.90" font-size="12.3" fill="#24292e" textLength="29.4" lengthAdjust="spacing" text-anchor="end">0 B/s</text>
<clipPath id="c4"><rect x="426.4" y="484.7" width="252.6" height="150.0"/></clipPath><g clip-path="url(#c4)">
<path d="M426.4,543.1l1,2.7l1,2.4l1-3.5l1,0.5l1-1.6l1,0.3l1,4.3l1,2.1l1-7.5l1,4.2l1-3.3l1,2.7l1-2.4l1-1.5l1,7.8l1-3.7l1,2.5l1,10.5l1,0.8l1-15.4l1,0.8l1.1,0.9l1,2.1l1-4.5l1,3.8l1-0.9l1,1.4l1-2.1l1,0.1l1-2.8l1,2.1l1,3.3l1-3.3l1,2l1,3.1l1-2.8l1,6.1l1,13.6l1-26.6l1,20.2l1-18.5l1,3.6l1-0.6l1-4.7l1,7.2l1-0.7l1-5.3l1,2l1,1.2l1,1l1,15.9l1-13.5l1-1.1l1-0.3l1,27.4l1-20.9l1-9.1l1-0.1l1,9.1l1-6.8l1,27.2l1-28.4l1.1,0.4l1-0.7l1,19l1-19.7l1,14.8l1-15.4l1,1.4l1,6.5l1-0.3l1-5.1l1-5.5l1,1.9l1,5.9l1-5.3l1,6.4l1-7.4l1,1.3l1,1.9l1,5.4l1-8.5l1,4.5l1,1.2l1-2.7l1,3.5l1-4.9l1,3.8l1-1.5l1-3.4l1,2.3l1,0.3l1,0.1l1,11l1,8.3l1-21.2l1-0.4l1,2.9l1-3.5l1,4.6l1-0.7l1-4.7l1,19.6l1-23.9l1,8.3l1.1-0.9l1-1l1,0.2l1-3.4l1,5.5l1-1.1l1,3.3l1-9.2l1,23.3l1-15.5l1-2.5l1-0.5l1-0.9l1-0.8l1,2.6l1-2.8l1,3.3l1,0.2l1,5l1-3.8l1,1.1l1-2.7l1,0l1,20.1l1-18.7l1,4.4l1-4.1l1,2l1-5l1,3.4l1-2.8l1,0.6l1-3.6l1,0.1l1-0.4l1-2.8l1,7.5l1,0l1-2l1,0.1l1,4.8l1.1-0.2l1-7.2l1,6.6l1,8.8l1-15.9l1,5.6l1-0.7l1,1l1,1.2l1-2.7l1,1.7l1-4.7l1,5.9l1-5.4l1,6.7l1-4.3l1,13l1,11.2l1-23.1l1-5.5l1,5.3l1,0.3l1-0.9l1,2.8l1,5.8l1-10l1,1.4l1,0.1l1-2.8l1,1.9l1-3.4l1,22.7l1-6.8l1-8.5l1-4.6l1,2.3l1-2.6l1,6.5l1-1l1,8.5l1-9.2l1-1.3l1-3.3l1.1-2.4l1,3.5l1,1.5l1,0.4l1-4.8l1-0.1l1,5.4l1,0.7l1-5.1l1,2.2l1-1.1l1,0.4l1,1.6l1-0.9l1-3.7l1,5.9l1-2.1l1,5.1l1-6.5l1,2.1l1,0.8l1,16.9l1-20l1,1.5l1,2.3l1,0.3l1-2.8l1,0.9l1-0.5l1,4.7l1,0.5l1-5.7l1,0l1-0.6l1,0l1,6.3l1-5.9l1,3.3l1,26.7l1-31.3l1,22.8l1.1-20.9l1,4l1-6.8l1,2.4l1,0l1,1.8l1-5.6l1,1.6l1,3.2l1,1.9l1-4l1,11.5l1-10.9l1,3.1l1,18l1-18.3l1,24l1-27.2l1,2.6l1,17.2l1-23.6l1,20.5L681.0,561.6L681.0,637.7L424.4,637.7L424.4,543.1Z" fill="#5794f2" stroke="#5794f2" stroke-width="0.6"/>
<path d="M426.4,592.6l1-9.4l1-7.3l1-3.9l1,8.1l1,1.8l1-2.5l1,5.6l1-10.5l1-0.7l1,6.1l1,8.5l1-7.9l1,19.3l1-9.9l1-0.5l1-11.4l1,7.8l1-6l1,14.8l1-18.7l1,3.4l1.1,12.9l1-14.1l1,1.3l1,4.4l1,1.5l1,1.6l1-19.4l1-0.4l1,16.7l1-1.3l1,1.4l1-2.4l1,0.5l1,2.8l1-2.1l1,0l1-1.3l1,10.4l1-17.3l1,7l1,5.4l1,0.5l1-3.8l1,5.8l1-3.7l1-7.7l1,1.1l1-1l1,1l1,6.8l1-6.4l1,8l1-10.5l1,5.3l1-3.2l1-4.1l1-1.3l1,4.1l1,1.3l1,6.9l1-5.6l1.1,5.3l1,2.6l1,1.6l1,7l1-23.5l1,15.4l1-13.4l1,9.7l1,5.6l1-13.2l1,2.7l1-4.4l1,5.9l1-4.6l1-3.1l1,8.2l1,1.8l1-7.2l1,21.2l1-18.6l1-4.1l1,2.3l1,11.4l1-12.2l1,10.8l1,6l1-10.5l1,5.5l1-7.2l1-0.5l1-0.8l1,0.2l1-0.1l1,8.6l1-5.5l1-13.5l1,13l1,0.3l1-2.6l1,5.6l1,2.5l1,1.8l1,6.2l1.1-11l1-5.5l1,3.4l1-2.4l1,1.1l1,1.3l1,4.7l1-3.8l1-7.6l1,1.7l1-2.3l1-0.9l1-7.4l1,12.6l1,4.7l1,0.5l1-4.7l1-5.7l1,5.1l1-0.7l1,11.6l1-6.4l1-1.4l1-4.8l1,7.7l1,4.3l1-4.7l1-6.8l1-1.2l1-0.6l1,1.1l1-0.9l1,4l1,2l1-1.5l1-1.2l1,0.5l1,2.1l1-2.9l1,1.6l1,0.9l1.1-7.4l1-4.7l1,10.9l1-4.1l1-0.4l1,10.1l1-9.2l1,0.5l1,7.7l1-9.1l1,3.2l1,8l1-7.7l1-2.2l1,6.3l1-3.3l1,3.1l1-0.7l1,8.2l1-4l1-4.4l1,1.1l1-2.9l1-3.6l1,7l1-5.9l1-2.5l1-0.1l1,5.8l1-7.2l1,9.6l1-6.5l1,1l1-1.1l1-0.8l1,16.3l1-13.8l1-6l1,8.5l1-2.6l1-2.1l1-1.3l1-3.2l1.1,11.6l1-2.3l1,0.2l1-4.5l1,8.4l1-5.2l1,2.8l1,1.4l1-3.2l1-6.7l1,5.2l1,2.6l1-1.5l1-2.5l1-6.2l1,4.3l1,5.9l1-3.2l1-0.3l1-4.8l1,3.9l1,1.3l1-1.9l1,2.2l1-5.2l1-3.8l1,0.8l1,1.1l1,34.7l1-25.3l1,11.5l1-10.6l1-8l1-2.7l1,12.3l1-8.5l1,3.2l1-2.9l1,9.3l1-0.6l1-0.2l1.1-3.1l1,1.2l1-5.2l1,5.1l1-1.9l1-1.2l1,1.5l1-3.2l1-6.5l1,7.2l1-0.7l1,8.1l1-11.4l1-3.2l1-1l1,14.3l1-4.1l1,13.2l1-14.9l1,2.8l1-3.1l1,3.3L681.0,583.4L681.0,637.7L424.4,637.7L424.4,592.6Z" fill="#e0b400" stroke="#e0b400" stroke-width="0.6"/>
<path d="M426.4,619.8l1-11.6l1-3.2l1-0.6l1,1.9l1-6l1,1.8l1,6.4l1-6.1l1,2.5l1,0.3l1-3.1l1,3.4l1,9.4l1-3.3l1-1.1l1-3.2l1,7.8l1-7.2l1,13l1-18.4l1,2.9l1.1,5.7l1-4.6l1,4l1-4.6l1,4.7l1-1l1-9.5l1,0.8l1,11l1-6.7l1,3.3l1-1.1l1,3.2l1-1.1l1-1.3l1-0.8l1,1.7l1,8.7l1-12.3l1,7.8l1-0.3l1-3.7l1-0.7l1,3l1,0.5l1-7.1l1,1.8l1,1.2l1,1.1l1-2.3l1,1.1l1-0.7l1-0.8l1-0.1l1,0.4l1-1.1l1,1.2l1-1.6l1,1.8l1,1.6l1-2.3l1.1,1l1,0.6l1,4.9l1,6.4l1-13.2l1,7l1-3.1l1,6.5l1,0l1-14.4l1,5.1l1-0.9l1-0.6l1-1l1,2.5l1-1.3l1,7.7l1-6.1l1,3.4l1-5l1-3l1,0.7l1,10.7l1-8.1l1,5.1l1,4.6l1-9.3l1,9l1-4.7l1-4.6l1,4.4l1-9l1,3.9l1,7l1-3.5l1-6.6l1,6.7l1-0.5l1,2.3l1-1.2l1,5.1l1-4l1,8.4l1.1-11.2l1-0.5l1,3l1-2.7l1,2.6l1-3.1l1,6.5l1-2.7l1-9.2l1,2.8l1,1.1l1,0.2l1-7.5l1,4.3l1,9.3l1,3.5l1-2.6l1-8.1l1,3.1l1,0.8l1,0.8l1,6.1l1-8.7l1-1.8l1,6.3l1,9.3l1-10.5l1-0.3l1-3.9l1,2.6l1-1.8l1-1.8l1,1.3l1,3.4l1-1.8l1-3.5l1,4.5l1,0.7l1-2l1,3l1-2.3l1.1-3.2l1-1.7l1,2.3l1-1.4l1-0.4l1,1.2l1,0.1l1-1.1l1,2.8l1-2.4l1,3.9l1,2l1-4.2l1,3.6l1-1.3l1,0.9l1,2.6l1-3.6l1,12.1l1-5.8l1-3.3l1,1.8l1-5.9l1,1.3l1-0.9l1-3.6l1-2.2l1,0.9l1,6.5l1-7.3l1,6.5l1-4l1,0.8l1,3l1-4.1l1,15.3l1-15.6l1,1.5l1,9.8l1-6.3l1-5.6l1,5.1l1-4.4l1.1,0.1l1,1.3l1,2.9l1-0.9l1,8.9l1-6.4l1,4.7l1,1.4l1-5.2l1-7.5l1,4.4l1-0.9l1,2.4l1-1.7l1-2.2l1,4.2l1,0.2l1-3.1l1,0.6l1-4.2l1,4l1-0.3l1-0.7l1,2.6l1-0.3l1-7.7l1,2.3l1,2.8l1,16.8l1-16l1,0.4l1,4.2l1-4.6l1-1.5l1,9.6l1-7.7l1,4.1l1-1l1,2.2l1-0.6l1-2.1l1.1-0.8l1,0.5l1-1.8l1-0.7l1,0.2l1,2.6l1-2.5l1,1.9l1-4.5l1,3.8l1-2.2l1,2.2l1-5.1l1-0.7l1,2.1l1,6.8l1-5l1,12.2l1-8.3l1-0.5l1-1.8l1,3.7L681.0,611.7L681.0,637.7L424.4,637.7L424.4,619.8Z" fill="#56a64b" stroke="#56a64b" stroke-width="0.6"/>
</g>
<rect x="373" y="669.0" width="14" height="4" rx="2" fill="#56a64b"/>
<text x="395.40" y="674.70" font-size="12.5" fill="#24292e" textLength="248.6" lengthAdjust="spacing">ruler-query-frontend-745595dfdc-6hnpp</text>
<rect x="373" y="692.5" width="14" height="4" rx="2" fill="#e0b400"/>
<text x="395.40" y="698.20" font-size="12.5" fill="#24292e" textLength="245.0" lengthAdjust="spacing">ruler-query-frontend-745595dfdc-8rk7q</text>
<rect x="373" y="716.0" width="14" height="4" rx="2" fill="#5794f2"/>
<text x="395.40" y="721.70" font-size="12.5" fill="#24292e" textLength="250.0" lengthAdjust="spacing">ruler-query-frontend-745595dfdc-q7b7x</text>
<rect x="704.5" y="478.5" width="335" height="257" fill="#ffffff" stroke="#e4e6e7" stroke-width="1" rx="2"/>
<text x="713.00" y="499.70" font-size="14.5" fill="#24292e" textLength="189.7" lengthAdjust="spacing" stroke="#24292e" stroke-width="0.2">Inflight requests (per pod)</text>
<line x1="769.5" y1="527.6" x2="769.5" y2="687.0" stroke="#e6e7e8" stroke-width="1"/>
<text x="768.90" y="700.70" font-size="12.3" fill="#24292e" textLength="30.0" lengthAdjust="spacing" text-anchor="middle">15:30</text>
<line x1="840.5" y1="527.6" x2="840.5" y2="687.0" stroke="#e6e7e8" stroke-width="1"/>
<text x="839.90" y="700.70" font-size="12.3" fill="#24292e" textLength="30.0" lengthAdjust="spacing" text-anchor="middle">15:45</text>
<line x1="911.5" y1="527.6" x2="911.5" y2="687.0" stroke="#e6e7e8" stroke-width="1"/>
<text x="910.90" y="700.70" font-size="12.3" fill="#24292e" textLength="30.0" lengthAdjust="spacing" text-anchor="middle">16:00</text>
<line x1="982.5" y1="527.6" x2="982.5" y2="687.0" stroke="#e6e7e8" stroke-width="1"/>
<text x="981.90" y="700.70" font-size="12.3" fill="#24292e" textLength="30.0" lengthAdjust="spacing" text-anchor="middle">16:15</text>
<line x1="738.2" y1="545.5" x2="1023" y2="545.5" stroke="#e6e7e8" stroke-width="1"/>
<text x="732.20" y="549.40" font-size="12.3" fill="#24292e" textLength="14.4" lengthAdjust="spacing" text-anchor="end">60</text>
<line x1="738.2" y1="591.5" x2="1023" y2="591.5" stroke="#e6e7e8" stroke-width="1"/>
<text x="732.20" y="595.00" font-size="12.3" fill="#24292e" textLength="14.4" lengthAdjust="spacing" text-anchor="end">40</text>
<line x1="738.2" y1="636.5" x2="1023" y2="636.5" stroke="#e6e7e8" stroke-width="1"/>
<text x="732.20" y="640.60" font-size="12.3" fill="#24292e" textLength="14.4" lengthAdjust="spacing" text-anchor="end">20</text>
<line x1="738.2" y1="682.5" x2="1023" y2="682.5" stroke="#e6e7e8" stroke-width="1"/>
<text x="732.20" y="686.20" font-size="12.3" fill="#24292e" textLength="7.2" lengthAdjust="spacing" text-anchor="end">0</text>
<path d="M738.2,674.8l1.8,0.5l1.8,1.7l1.8,0.7l1.8-1.4l1.8-1.4l1.8,2.2l1.8-0.9l1.8,1.5l1.8-1.2l1.8-0.6l1.8-0.7l1.8,1.8l1.8-0.4l1.8-0.1l1.8,1.1l1.8-2.4l1.8,0.1l1.8,2l1.8-0.9l1.9-1.6l1.8,0.2l1.8,0.5l1.8,1.5l1.8-0.1l1.8-0.9l1.8-0.6l1.8,0.6l1.8-0.9l1.8-0.4l1.8,2.8l1.8-2.8l1.8,1.3l1.8-0.2l1.8,0.1l1.8-0.5l1.8,0.6l1.8,0l1.8-0.5l1.8,1.1l1.8,0l1.8,0.9l1.8-2.9l1.8,1.2l1.8-0.6l1.8,0.3l1.8-0.1l1.8,1.6l1.8-2.3l1.8,2.2l1.8-2.1l1.8,0.2l1.8-0.4l1.8,0l1.8,0.9l1.8-0.7l1.8,2.2l1.8-1.2l1.8-0.7l1.8,1.1l1.9,0.6l1.8-1.2l1.8,0.4l1.8,1.1l1.8-0.4l1.8-0.1l1.8-2l1.8,2.5l1.8-0.3l1.8-1.7l1.8,1.7l1.8,0.3l1.8-2l1.8,0.3l1.8-0.2l1.8,2l1.8-0.8l1.8,0.9l1.8-1.3l1.8,0.8l1.8-0.9l1.8,1.2l1.8,0.3l1.8-0.4l1.8-2.4l1.8,2.4l1.8-0.1l1.8-0.4l1.8,0.9l1.8-2.3l1.8,2.1l1.8-2.5l1.8,1.7l1.8,1l1.8-0.4l1.8-0.3l1.8-2.9l1.8-4.3l1.8,3.7l1.9,0.3l1.8,0.4l1.8-0.1l1.8,0.9l1.8,0.4l1.8,0.3l1.8-4.8l1.8,6.4l1.8-1.6l1.8-1.4l1.8,0.6l1.8-0.8l1.8-1l1.8-2.2l1.8,4.6l1.8,0.6l1.8-1.4l1.8,1.7l1.8-0.5l1.8-2.8l1.8,1.4l1.8-1.4l1.8,0.4l1.8,0.6l1.8-0.4l1.8,2.1l1.8-0.3l1.8-0.4l1.8-0.9l1.8,0.3l1.8,0.5l1.8-1.3l1.8,0.7l1.8,0.6l1.8-0.2l1.8,1.3l1.8-2.5l1.8-0.8l1.8-2.6l1.8,4.6l1.9-2.6l1.8,3.9l1.8-3.1l1.8-0.3l1.8,1.8l1.8-4.7l1.8,6.3l1.8,0.8l1.8-2.9l1.8,0.7l1.8,1.9l1.8-3l1.8-2.2l1.8,2.1l1.8,0.4l1.8-0.9l1.8,0.2l1.8,1.2l1.8,0.1l1.8-0.5 L1023.0,682.0 L738.2,682.0 Z" fill="#56a64b" fill-opacity="0.01"/>
<path d="M738.2,674.8l1.8,0.5l1.8,1.7l1.8,0.7l1.8-1.4l1.8-1.4l1.8,2.2l1.8-0.9l1.8,1.5l1.8-1.2l1.8-0.6l1.8-0.7l1.8,1.8l1.8-0.4l1.8-0.1l1.8,1.1l1.8-2.4l1.8,0.1l1.8,2l1.8-0.9l1.9-1.6l1.8,0.2l1.8,0.5l1.8,1.5l1.8-0.1l1.8-0.9l1.8-0.6l1.8,0.6l1.8-0.9l1.8-0.4l1.8,2.8l1.8-2.8l1.8,1.3l1.8-0.2l1.8,0.1l1.8-0.5l1.8,0.6l1.8,0l1.8-0.5l1.8,1.1l1.8,0l1.8,0.9l1.8-2.9l1.8,1.2l1.8-0.6l1.8,0.3l1.8-0.1l1.8,1.6l1.8-2.3l1.8,2.2l1.8-2.1l1.8,0.2l1.8-0.4l1.8,0l1.8,0.9l1.8-0.7l1.8,2.2l1.8-1.2l1.8-0.7l1.8,1.1l1.9,0.6l1.8-1.2l1.8,0.4l1.8,1.1l1.8-0.4l1.8-0.1l1.8-2l1.8,2.5l1.8-0.3l1.8-1.7l1.8,1.7l1.8,0.3l1.8-2l1.8,0.3l1.8-0.2l1.8,2l1.8-0.8l1.8,0.9l1.8-1.3l1.8,0.8l1.8-0.9l1.8,1.2l1.8,0.3l1.8-0.4l1.8-2.4l1.8,2.4l1.8-0.1l1.8-0.4l1.8,0.9l1.8-2.3l1.8,2.1l1.8-2.5l1.8,1.7l1.8,1l1.8-0.4l1.8-0.3l1.8-2.9l1.8-4.3l1.8,3.7l1.9,0.3l1.8,0.4l1.8-0.1l1.8,0.9l1.8,0.4l1.8,0.3l1.8-4.8l1.8,6.4l1.8-1.6l1.8-1.4l1.8,0.6l1.8-0.8l1.8-1l1.8-2.2l1.8,4.6l1.8,0.6l1.8-1.4l1.8,1.7l1.8-0.5l1.8-2.8l1.8,1.4l1.8-1.4l1.8,0.4l1.8,0.6l1.8-0.4l1.8,2.1l1.8-0.3l1.8-0.4l1.8-0.9l1.8,0.3l1.8,0.5l1.8-1.3l1.8,0.7l1.8,0.6l1.8-0.2l1.8,1.3l1.8-2.5l1.8-0.8l1.8-2.6l1.8,4.6l1.9-2.6l1.8,3.9l1.8-3.1l1.8-0.3l1.8,1.8l1.8-4.7l1.8,6.3l1.8,0.8l1.8-2.9l1.8,0.7l1.8,1.9l1.8-3l1.8-2.2l1.8,2.1l1.8,0.4l1.8-0.9l1.8,0.2l1.8,1.2l1.8,0.1l1.8-0.5" fill="none" stroke="#56a64b" stroke-width="1" stroke-linejoin="round"/>
<path d="M738.2,633.3l1.8-2.8l1.8-9.7l1.8,18.4l1.8-19.6l1.8,16.3l1.8-14.1l1.8-42.4l1.8,45.7l1.8,9.2l1.8-15l1.8,1.7l1.8,13.3l1.8-17.7l1.8,10.5l1.8-11.8l1.8,10.6l1.8-5.4l1.8,9.6l1.8-12.6l1.9,15.5l1.8-15l1.8,12.1l1.8-21.5l1.8,23.5l1.8-6.3l1.8,4.9l1.8-2.7l1.8-9.1l1.8,15.4l1.8-15.4l1.8-1l1.8,15.6l1.8-26.7l1.8,27.5l1.8-16.8l1.8-0.9l1.8,14.6l1.8-9.9l1.8-2.8l1.8,16.2l1.8-18.8l1.8,19.5l1.8-25.7l1.8,11.9l1.8,8.2l1.8-10.1l1.8,16.4l1.8-18.1l1.8,9.2l1.8-11.5l1.8,18.7l1.8-16.8l1.8,10.4l1.8-32.6l1.8,38.3l1.8-19.7l1.8,21.5l1.8-18.7l1.8,16.9l1.9-6.9l1.8-3l1.8-33l1.8,39.8l1.8-15.5l1.8,20.1l1.8-23.8l1.8,23.2l1.8-11.1l1.8,8.4l1.8-15.9l1.8,1.1l1.8-26.3l1.8,41.8l1.8-18l1.8,20.6l1.8,0l1.8-9.7l1.8-32.4l1.8,28.4l1.8,7.7l1.8-6.5l1.8,6.1l1.8,1.5l1.8,6.4l1.8-20l1.8,10.6l1.8-3.1l1.8-63l1.8,52.9l1.8,17.1l1.8,5l1.8-6.8l1.8-4.9l1.8,8.7l1.8-16.5l1.8,14.8l1.8-88.6l1.8,93.3l1.9-4.6l1.8-15.5l1.8,0.2l1.8,16.1l1.8-14l1.8,10l1.8-80.9l1.8,78.5l1.8-9l1.8,14.6l1.8-16l1.8,16.9l1.8,3.9l1.8-66.1l1.8,65.4l1.8-19.1l1.8,11.5l1.8-37.3l1.8,30.7l1.8,9.6l1.8-31.2l1.8,28.2l1.8,7.4l1.8-11.6l1.8,8l1.8-7.8l1.8-62.9l1.8,56.3l1.8,20.5l1.8-21.7l1.8,17.1l1.8-15.2l1.8,15.2l1.8-17.6l1.8,18.8l1.8-14.8l1.8,8.2l1.8-11.9l1.8-52.7l1.8,51.5l1.9-33.2l1.8,51.8l1.8-3.6l1.8-14.1l1.8,8.8l1.8-63.4l1.8,66.9l1.8-18.9l1.8,19.2l1.8-37.6l1.8,35.5l1.8-12.6l1.8,3.4l1.8,16.6l1.8,2.6l1.8-68.3l1.8,71.8l1.8-5.1l1.8-14.1l1.8,15.1 L1023.0,682.0 L738.2,682.0 Z" fill="#e0b400" fill-opacity="0.01"/>
<path d="M738.2,633.3l1.8-2.8l1.8-9.7l1.8,18.4l1.8-19.6l1.8,16.3l1.8-14.1l1.8-42.4l1.8,45.7l1.8,9.2l1.8-15l1.8,1.7l1.8,13.3l1.8-17.7l1.8,10.5l1.8-11.8l1.8,10.6l1.8-5.4l1.8,9.6l1.8-12.6l1.9,15.5l1.8-15l1.8,12.1l1.8-21.5l1.8,23.5l1.8-6.3l1.8,4.9l1.8-2.7l1.8-9.1l1.8,15.4l1.8-15.4l1.8-1l1.8,15.6l1.8-26.7l1.8,27.5l1.8-16.8l1.8-0.9l1.8,14.6l1.8-9.9l1.8-2.8l1.8,16.2l1.8-18.8l1.8,19.5l1.8-25.7l1.8,11.9l1.8,8.2l1.8-10.1l1.8,16.4l1.8-18.1l1.8,9.2l1.8-11.5l1.8,18.7l1.8-16.8l1.8,10.4l1.8-32.6l1.8,38.3l1.8-19.7l1.8,21.5l1.8-18.7l1.8,16.9l1.9-6.9l1.8-3l1.8-33l1.8,39.8l1.8-15.5l1.8,20.1l1.8-23.8l1.8,23.2l1.8-11.1l1.8,8.4l1.8-15.9l1.8,1.1l1.8-26.3l1.8,41.8l1.8-18l1.8,20.6l1.8,0l1.8-9.7l1.8-32.4l1.8,28.4l1.8,7.7l1.8-6.5l1.8,6.1l1.8,1.5l1.8,6.4l1.8-20l1.8,10.6l1.8-3.1l1.8-63l1.8,52.9l1.8,17.1l1.8,5l1.8-6.8l1.8-4.9l1.8,8.7l1.8-16.5l1.8,14.8l1.8-88.6l1.8,93.3l1.9-4.6l1.8-15.5l1.8,0.2l1.8,16.1l1.8-14l1.8,10l1.8-80.9l1.8,78.5l1.8-9l1.8,14.6l1.8-16l1.8,16.9l1.8,3.9l1.8-66.1l1.8,65.4l1.8-19.1l1.8,11.5l1.8-37.3l1.8,30.7l1.8,9.6l1.8-31.2l1.8,28.2l1.8,7.4l1.8-11.6l1.8,8l1.8-7.8l1.8-62.9l1.8,56.3l1.8,20.5l1.8-21.7l1.8,17.1l1.8-15.2l1.8,15.2l1.8-17.6l1.8,18.8l1.8-14.8l1.8,8.2l1.8-11.9l1.8-52.7l1.8,51.5l1.9-33.2l1.8,51.8l1.8-3.6l1.8-14.1l1.8,8.8l1.8-63.4l1.8,66.9l1.8-18.9l1.8,19.2l1.8-37.6l1.8,35.5l1.8-12.6l1.8,3.4l1.8,16.6l1.8,2.6l1.8-68.3l1.8,71.8l1.8-5.1l1.8-14.1l1.8,15.1" fill="none" stroke="#e0b400" stroke-width="1" stroke-linejoin="round"/>
<rect x="717.0" y="716.0" width="14" height="4" rx="2" fill="#56a64b"/>
<text x="739.20" y="721.70" font-size="12.5" fill="#24292e" textLength="21.0" lengthAdjust="spacing">avg</text>
<rect x="770.9" y="716.0" width="14" height="4" rx="2" fill="#e0b400"/>
<text x="793.10" y="721.70" font-size="12.5" fill="#24292e" textLength="43.3" lengthAdjust="spacing">highest</text>
<rect x="1048.5" y="478.5" width="335" height="257" fill="#ffffff" stroke="#e4e6e7" stroke-width="1" rx="2"/>
<text x="1057.00" y="499.70" font-size="14.5" fill="#24292e" textLength="249.0" lengthAdjust="spacing" stroke="#24292e" stroke-width="0.2">Ingress TCP connections (per pod)</text>
<circle cx="1330.6" cy="495" r="5.8" fill="none" stroke="#5b5f63" stroke-width="1.3"/>
<rect x="1329.9499999999998" y="494.2" width="1.3" height="4" fill="#5b5f63"/><circle cx="1330.6" cy="492.2" r="0.8" fill="#5b5f63"/>
<line x1="1113.5" y1="527.6" x2="1113.5" y2="687.4" stroke="#e6e7e8" stroke-width="1"/>
<text x="1112.90" y="701.10" font-size="12.3" fill="#24292e" textLength="30.0" lengthAdjust="spacing" text-anchor="middle">15:30</text>
<line x1="1184.5" y1="527.6" x2="1184.5" y2="687.4" stroke="#e6e7e8" stroke-width="1"/>
<text x="1183.90" y="701.10" font-size="12.3" fill="#24292e" textLength="30.0" lengthAdjust="spacing" text-anchor="middle">15:45</text>
<line x1="1255.5" y1="527.6" x2="1255.5" y2="687.4" stroke="#e6e7e8" stroke-width="1"/>
<text x="1254.90" y="701.10" font-size="12.3" fill="#24292e" textLength="30.0" lengthAdjust="spacing" text-anchor="middle">16:00</text>
<line x1="1326.5" y1="527.6" x2="1326.5" y2="687.4" stroke="#e6e7e8" stroke-width="1"/>
<text x="1325.90" y="701.10" font-size="12.3" fill="#24292e" textLength="30.0" lengthAdjust="spacing" text-anchor="middle">16:15</text>
<line x1="1082.4" y1="532.5" x2="1367" y2="532.5" stroke="#e6e7e8" stroke-width="1"/>
<text x="1076.40" y="536.30" font-size="12.3" fill="#24292e" textLength="14.4" lengthAdjust="spacing" text-anchor="end">60</text>
<line x1="1082.4" y1="582.5" x2="1367" y2="582.5" stroke="#e6e7e8" stroke-width="1"/>
<text x="1076.40" y="586.40" font-size="12.3" fill="#24292e" textLength="14.4" lengthAdjust="spacing" text-anchor="end">40</text>
<line x1="1082.4" y1="632.5" x2="1367" y2="632.5" stroke="#e6e7e8" stroke-width="1"/>
<text x="1076.40" y="636.50" font-size="12.3" fill="#24292e" textLength="14.4" lengthAdjust="spacing" text-anchor="end">20</text>
<line x1="1082.4" y1="682.5" x2="1367" y2="682.5" stroke="#e6e7e8" stroke-width="1"/>
<text x="1076.40" y="686.60" font-size="12.3" fill="#24292e" textLength="7.2" lengthAdjust="spacing" text-anchor="end">0</text>
<path d="M1082.4,591.5l1.6-1.7l1.6,2.9l1.6-4.6l1.6-1.4l1.6-8l1.6,13l1.7-1.4l1.6,0.7l1.6-1.6l1.6-3.9l1.6,0.2l1.6,2.3l1.6,3.1l1.6,0.1l1.6-12.9l1.6,7l1.6,1l1.6,3.5l1.7-7.2l1.6,8.7l1.6-13.4l1.6,12.2l1.6-0.1l1.6-2.3l1.6,5.4l1.6-6.2l1.6,3.8l1.6-2.4l1.6,6l1.6-3.4l1.6-4.3l1.7-0.3l1.6,4.7l1.6-10.4l1.6-2.3l1.6,5.3l1.6,4.8l1.6-1.1l1.6,5l1.6-0.5l1.6-0.3l1.6-7.7l1.6,7.9l1.6-12.1l1.7,4.4l1.6,7.4l1.6-9.4l1.6,8.7l1.6-4.4l1.6,7l1.6,0l1.6-2.4l1.6,0.7l1.6,1.8l1.6-4.5l1.6-8.2l1.7,7.5l1.6-0.9l1.6-8.5l1.6,11.6l1.6-1.3l1.6-0.8l1.6-15.5l1.6,10.9l1.6,9l1.6-2.1l1.6-4.8l1.6,1l1.6-5.5l1.7,7l1.6,1.3l1.6-4.8l1.6,0.1l1.6,5.7l1.6-0.1l1.6-3l1.6,3.7l1.6-2.1l1.6,0.3l1.6-0.7l1.6,6l1.6-3.5l1.7-0.9l1.6-3.5l1.6,6.3l1.6-6.9l1.6,5.7l1.6-2.1l1.6-8.6l1.6,9l1.6-12.5l1.6,16.5l1.6-5.4l1.6,2.5l1.7,1.6l1.6-14.7l1.6,10.3l1.6-0.3l1.6-16.6l1.6,15.8l1.6,1.7l1.6,0l1.6-3.1l1.6,0l1.6-2.4l1.6-13.3l1.6,21.2l1.7,0.4l1.6,0.5l1.6-4.1l1.6-15.5l1.6,18.7l1.6-0.8l1.6-8.4l1.6,6.7l1.6,1.4l1.6,0.6l1.6-8.3l1.6,9.2l1.6-8.7l1.7,6.5l1.6,3.2l1.6,0.7l1.6-11.1l1.6,2.8l1.6,5.9l1.6,1.5l1.6-14.1l1.6,11.7l1.6-0.1l1.6-9.4l1.6,7.5l1.7-2.5l1.6,4.1l1.6-2.4l1.6-1.1l1.6,2.5l1.6,3.1l1.6-1.2l1.6,13.9l1.6-13.8l1.6,0l1.6-11.1l1.6,0.9l1.6,10.2l1.7-20.6l1.6,19.3l1.6-10.3l1.6,9.9l1.6,2l1.6-7.8l1.6,5.5l1.6,0.1l1.6,3.4l1.6-9.5l1.6,0.6l1.6,21.2l1.6-16.6l1.7-15.3l1.6,20.2l1.6-0.6l1.6-0.5l1.6-3.4l1.6,0.4l1.6-1.5l1.6,3.3l1.6-16.6l1.6,6.4l1.6,6.8l1.6,6l1.7-5.1l1.6,4.4l1.6-11.2l1.6,7.5l1.6-7.8l1.6-14.6l1.6,24.2 L1367.0,682.4 L1082.4,682.4 Z" fill="#56a64b" fill-opacity="0.01"/>
<path d="M1082.4,591.5l1.6-1.7l1.6,2.9l1.6-4.6l1.6-1.4l1.6-8l1.6,13l1.7-1.4l1.6,0.7l1.6-1.6l1.6-3.9l1.6,0.2l1.6,2.3l1.6,3.1l1.6,0.1l1.6-12.9l1.6,7l1.6,1l1.6,3.5l1.7-7.2l1.6,8.7l1.6-13.4l1.6,12.2l1.6-0.1l1.6-2.3l1.6,5.4l1.6-6.2l1.6,3.8l1.6-2.4l1.6,6l1.6-3.4l1.6-4.3l1.7-0.3l1.6,4.7l1.6-10.4l1.6-2.3l1.6,5.3l1.6,4.8l1.6-1.1l1.6,5l1.6-0.5l1.6-0.3l1.6-7.7l1.6,7.9l1.6-12.1l1.7,4.4l1.6,7.4l1.6-9.4l1.6,8.7l1.6-4.4l1.6,7l1.6,0l1.6-2.4l1.6,0.7l1.6,1.8l1.6-4.5l1.6-8.2l1.7,7.5l1.6-0.9l1.6-8.5l1.6,11.6l1.6-1.3l1.6-0.8l1.6-15.5l1.6,10.9l1.6,9l1.6-2.1l1.6-4.8l1.6,1l1.6-5.5l1.7,7l1.6,1.3l1.6-4.8l1.6,0.1l1.6,5.7l1.6-0.1l1.6-3l1.6,3.7l1.6-2.1l1.6,0.3l1.6-0.7l1.6,6l1.6-3.5l1.7-0.9l1.6-3.5l1.6,6.3l1.6-6.9l1.6,5.7l1.6-2.1l1.6-8.6l1.6,9l1.6-12.5l1.6,16.5l1.6-5.4l1.6,2.5l1.7,1.6l1.6-14.7l1.6,10.3l1.6-0.3l1.6-16.6l1.6,15.8l1.6,1.7l1.6,0l1.6-3.1l1.6,0l1.6-2.4l1.6-13.3l1.6,21.2l1.7,0.4l1.6,0.5l1.6-4.1l1.6-15.5l1.6,18.7l1.6-0.8l1.6-8.4l1.6,6.7l1.6,1.4l1.6,0.6l1.6-8.3l1.6,9.2l1.6-8.7l1.7,6.5l1.6,3.2l1.6,0.7l1.6-11.1l1.6,2.8l1.6,5.9l1.6,1.5l1.6-14.1l1.6,11.7l1.6-0.1l1.6-9.4l1.6,7.5l1.7-2.5l1.6,4.1l1.6-2.4l1.6-1.1l1.6,2.5l1.6,3.1l1.6-1.2l1.6,13.9l1.6-13.8l1.6,0l1.6-11.1l1.6,0.9l1.6,10.2l1.7-20.6l1.6,19.3l1.6-10.3l1.6,9.9l1.6,2l1.6-7.8l1.6,5.5l1.6,0.1l1.6,3.4l1.6-9.5l1.6,0.6l1.6,21.2l1.6-16.6l1.7-15.3l1.6,20.2l1.6-0.6l1.6-0.5l1.6-3.4l1.6,0.4l1.6-1.5l1.6,3.3l1.6-16.6l1.6,6.4l1.6,6.8l1.6,6l1.7-5.1l1.6,4.4l1.6-11.2l1.6,7.5l1.6-7.8l1.6-14.6l1.6,24.2" fill="none" stroke="#56a64b" stroke-width="1" stroke-linejoin="round"/>
<path d="M1082.4,591l1.6-1.3l1.6,0l1.6-2.2l1.6-2.5l1.6-16.1l1.6,22.1l1.7-0.7l1.6-2l1.6-0.5l1.6-3.2l1.6,0.7l1.6,1.3l1.6,3.4l1.6-1.9l1.6-20l1.6,16.6l1.6,1.2l1.6,3.4l1.7-12.6l1.6,11.9l1.6-21.3l1.6,21.2l1.6,0.4l1.6-3.9l1.6,5.2l1.6-4.4l1.6,3.7l1.6-2.1l1.6,3.8l1.6-1l1.6-4.8l1.7,0.4l1.6,4.9l1.6-18l1.6-4.6l1.6,10.6l1.6,7.8l1.6-0.8l1.6,5.3l1.6,0l1.6-0.2l1.6-11.7l1.6,10.5l1.6-18.8l1.7,8.8l1.6,10.9l1.6-8.9l1.6,7.1l1.6-3.1l1.6,4.7l1.6-0.7l1.6-2.1l1.6,2.4l1.6,0.8l1.6-4.1l1.6-13.7l1.7,14.9l1.6-2.2l1.6-16.4l1.6,19.4l1.6,0.3l1.6-1.7l1.6-30l1.6,21.7l1.6,10.5l1.6,0.5l1.6-4.5l1.6-0.2l1.6-11.1l1.7,11.3l1.6,0.7l1.6-1.5l1.6,0.1l1.6,1.8l1.6,0.2l1.6-1l1.6,1.8l1.6,0.2l1.6,0l1.6,0.6l1.6,2.9l1.6-0.7l1.7-0.9l1.6-2.9l1.6,4.2l1.6-5.5l1.6,3.8l1.6,0.2l1.6-15.4l1.6,15.3l1.6-22.4l1.6,24.4l1.6-3.8l1.6,1.7l1.7,1l1.6-22.3l1.6,18.1l1.6,1.6l1.6-33l1.6,30.1l1.6,3.2l1.6-1.3l1.6-2.1l1.6,0.4l1.6-6.1l1.6-26.7l1.6,37.7l1.7,1.6l1.6-1l1.6-3.3l1.6-29.9l1.6,32.7l1.6-1.5l1.6-12.3l1.6,10.5l1.6,3.8l1.6-0.6l1.6-12.8l1.6,12.2l1.6-11.2l1.7,10.6l1.6,2.8l1.6-2l1.6-12.9l1.6,8.1l1.6,4.7l1.6,0l1.6-20.6l1.6,19.7l1.6,0.9l1.6-16.1l1.6,14.2l1.7-2.2l1.6,1.3l1.6,1l1.6-1.1l1.6,2.2l1.6,0.3l1.6-0.7l1.6-46.1l1.6,48.2l1.6-1.1l1.6-18l1.6,1.8l1.6,16.5l1.7-37.4l1.6,36.1l1.6-18.1l1.6,17.2l1.6,0l1.6-9.1l1.6,10.6l1.6-1.3l1.6,3.9l1.6-14l1.6,1.2l1.6,8.7l1.6-0.4l1.7-29.7l1.6,33.9l1.6-1.4l1.6,1.5l1.6-6.5l1.6,4.1l1.6-2.9l1.6,1.9l1.6-28.1l1.6,12.8l1.6,14.2l1.6,4.4l1.7-6l1.6,5l1.6-15.8l1.6,13.7l1.6-14.2l1.6-29.2l1.6,42 L1367.0,682.4 L1082.4,682.4 Z" fill="#e0b400" fill-opacity="0.01"/>
<path d="M1082.4,591l1.6-1.3l1.6,0l1.6-2.2l1.6-2.5l1.6-16.1l1.6,22.1l1.7-0.7l1.6-2l1.6-0.5l1.6-3.2l1.6,0.7l1.6,1.3l1.6,3.4l1.6-1.9l1.6-20l1.6,16.6l1.6,1.2l1.6,3.4l1.7-12.6l1.6,11.9l1.6-21.3l1.6,21.2l1.6,0.4l1.6-3.9l1.6,5.2l1.6-4.4l1.6,3.7l1.6-2.1l1.6,3.8l1.6-1l1.6-4.8l1.7,0.4l1.6,4.9l1.6-18l1.6-4.6l1.6,10.6l1.6,7.8l1.6-0.8l1.6,5.3l1.6,0l1.6-0.2l1.6-11.7l1.6,10.5l1.6-18.8l1.7,8.8l1.6,10.9l1.6-8.9l1.6,7.1l1.6-3.1l1.6,4.7l1.6-0.7l1.6-2.1l1.6,2.4l1.6,0.8l1.6-4.1l1.6-13.7l1.7,14.9l1.6-2.2l1.6-16.4l1.6,19.4l1.6,0.3l1.6-1.7l1.6-30l1.6,21.7l1.6,10.5l1.6,0.5l1.6-4.5l1.6-0.2l1.6-11.1l1.7,11.3l1.6,0.7l1.6-1.5l1.6,0.1l1.6,1.8l1.6,0.2l1.6-1l1.6,1.8l1.6,0.2l1.6,0l1.6,0.6l1.6,2.9l1.6-0.7l1.7-0.9l1.6-2.9l1.6,4.2l1.6-5.5l1.6,3.8l1.6,0.2l1.6-15.4l1.6,15.3l1.6-22.4l1.6,24.4l1.6-3.8l1.6,1.7l1.7,1l1.6-22.3l1.6,18.1l1.6,1.6l1.6-33l1.6,30.1l1.6,3.2l1.6-1.3l1.6-2.1l1.6,0.4l1.6-6.1l1.6-26.7l1.6,37.7l1.7,1.6l1.6-1l1.6-3.3l1.6-29.9l1.6,32.7l1.6-1.5l1.6-12.3l1.6,10.5l1.6,3.8l1.6-0.6l1.6-12.8l1.6,12.2l1.6-11.2l1.7,10.6l1.6,2.8l1.6-2l1.6-12.9l1.6,8.1l1.6,4.7l1.6,0l1.6-20.6l1.6,19.7l1.6,0.9l1.6-16.1l1.6,14.2l1.7-2.2l1.6,1.3l1.6,1l1.6-1.1l1.6,2.2l1.6,0.3l1.6-0.7l1.6-46.1l1.6,48.2l1.6-1.1l1.6-18l1.6,1.8l1.6,16.5l1.7-37.4l1.6,36.1l1.6-18.1l1.6,17.2l1.6,0l1.6-9.1l1.6,10.6l1.6-1.3l1.6,3.9l1.6-14l1.6,1.2l1.6,8.7l1.6-0.4l1.7-29.7l1.6,33.9l1.6-1.4l1.6,1.5l1.6-6.5l1.6,4.1l1.6-2.9l1.6,1.9l1.6-28.1l1.6,12.8l1.6,14.2l1.6,4.4l1.7-6l1.6,5l1.6-15.8l1.6,13.7l1.6-14.2l1.6-29.2l1.6,42" fill="none" stroke="#e0b400" stroke-width="1" stroke-linejoin="round"/>
<path d="M1082.4,682.4l1.6,0l1.6,0l1.6,0l1.6,0l1.6,0l1.6,0l1.7,0l1.6,0l1.6,0l1.6,0l1.6,0l1.6,0l1.6,0l1.6,0l1.6,0l1.6,0l1.6,0l1.6,0l1.7,0l1.6,0l1.6,0l1.6,0l1.6,0l1.6,0l1.6,0l1.6,0l1.6,0l1.6,0l1.6,0l1.6,0l1.6,0l1.7,0l1.6,0l1.6,0l1.6,0l1.6,0l1.6,0l1.6,0l1.6,0l1.6,0l1.6,0l1.6,0l1.6,0l1.6,0l1.7,0l1.6,0l1.6,0l1.6,0l1.6,0l1.6,0l1.6,0l1.6,0l1.6,0l1.6,0l1.6,0l1.6,0l1.7,0l1.6,0l1.6,0l1.6,0l1.6,0l1.6,0l1.6,0l1.6,0l1.6,0l1.6,0l1.6,0l1.6,0l1.6,0l1.7,0l1.6,0l1.6,0l1.6,0l1.6,0l1.6,0l1.6,0l1.6,0l1.6,0l1.6,0l1.6,0l1.6,0l1.6,0l1.7,0l1.6,0l1.6,0l1.6,0l1.6,0l1.6,0l1.6,0l1.6,0l1.6,0l1.6,0l1.6,0l1.6,0l1.7,0l1.6,0l1.6,0l1.6,0l1.6,0l1.6,0l1.6,0l1.6,0l1.6,0l1.6,0l1.6,0l1.6,0l1.6,0l1.7,0l1.6,0l1.6,0l1.6,0l1.6,0l1.6,0l1.6,0l1.6,0l1.6,0l1.6,0l1.6,0l1.6,0l1.6,0l1.7,0l1.6,0l1.6,0l1.6,0l1.6,0l1.6,0l1.6,0l1.6,0l1.6,0l1.6,0l1.6,0l1.6,0l1.7,0l1.6,0l1.6,0l1.6,0l1.6,0l1.6,0l1.6,0l1.6,0l1.6,0l1.6,0l1.6,0l1.6,0l1.6,0l1.7,0l1.6,0l1.6,0l1.6,0l1.6,0l1.6,0l1.6,0l1.6,0l1.6,0l1.6,0l1.6,0l1.6,0l1.6,0l1.7,0l1.6,0l1.6,0l1.6,0l1.6,0l1.6,0l1.6,0l1.6,0l1.6,0l1.6,0l1.6,0l1.6,0l1.7,0l1.6,0l1.6,0l1.6,0l1.6,0l1.6,0l1.6,0" fill="none" stroke="#5794f2" stroke-width="1" stroke-linejoin="round"/>
<rect x="1061.0" y="715.6" width="14" height="4" rx="2" fill="#56a64b"/>
<text x="1083.20" y="721.30" font-size="12.5" fill="#24292e" textLength="21.0" lengthAdjust="spacing">avg</text>
<rect x="1114.9" y="715.6" width="14" height="4" rx="2" fill="#e0b400"/>
<text x="1137.10" y="721.30" font-size="12.5" fill="#24292e" textLength="43.3" lengthAdjust="spacing">highest</text>
<rect x="1191.1" y="715.6" width="14" height="4" rx="2" fill="#5794f2"/>
<text x="1213.30" y="721.30" font-size="12.5" fill="#24292e" textLength="23.9" lengthAdjust="spacing">limit</text>
<rect x="16.5" y="782.5" width="335" height="257" fill="#ffffff" stroke="#e4e6e7" stroke-width="1" rx="2"/>
<text x="25.00" y="803.70" font-size="14.5" fill="#24292e" textLength="136.4" lengthAdjust="spacing" stroke="#24292e" stroke-width="0.2">Receive bandwidth</text>
<line x1="102.5" y1="831.6" x2="102.5" y2="967.7" stroke="#e6e7e8" stroke-width="1"/>
<text x="101.90" y="981.40" font-size="12.3" fill="#24292e" textLength="30.0" lengthAdjust="spacing" text-anchor="middle">15:30</text>
<line x1="167.5" y1="831.6" x2="167.5" y2="967.7" stroke="#e6e7e8" stroke-width="1"/>
<text x="166.90" y="981.40" font-size="12.3" fill="#24292e" textLength="30.0" lengthAdjust="spacing" text-anchor="middle">15:45</text>
<line x1="232.5" y1="831.6" x2="232.5" y2="967.7" stroke="#e6e7e8" stroke-width="1"/>
<text x="231.90" y="981.40" font-size="12.3" fill="#24292e" textLength="30.0" lengthAdjust="spacing" text-anchor="middle">16:00</text>
<line x1="298.5" y1="831.6" x2="298.5" y2="967.7" stroke="#e6e7e8" stroke-width="1"/>
<text x="297.90" y="981.40" font-size="12.3" fill="#24292e" textLength="30.0" lengthAdjust="spacing" text-anchor="middle">16:15</text>
<line x1="74.0" y1="865.5" x2="335" y2="865.5" stroke="#e6e7e8" stroke-width="1"/>
<text x="68.00" y="869.40" font-size="12.3" fill="#24292e" textLength="40.2" lengthAdjust="spacing" text-anchor="end">2 MB/s</text>
<line x1="74.0" y1="914.5" x2="335" y2="914.5" stroke="#e6e7e8" stroke-width="1"/>
<text x="68.00" y="918.15" font-size="12.3" fill="#24292e" textLength="40.2" lengthAdjust="spacing" text-anchor="end">1 MB/s</text>
<line x1="74.0" y1="963.5" x2="335" y2="963.5" stroke="#e6e7e8" stroke-width="1"/>
<text x="68.00" y="966.90" font-size="12.3" fill="#24292e" textLength="29.4" lengthAdjust="spacing" text-anchor="end">0 B/s</text>
<clipPath id="c5"><rect x="74.0" y="812.7" width="261.0" height="150.0"/></clipPath><g clip-path="url(#c5)">
<path d="M74,853.1l1,3.7l1-6.5l1,3.3l1-4l1,18.9l1-10.9l1,3.6l1-12.3l1,6.6l1,16.2l1-23.9l1,8.8l1-3.8l1,6.2l1,20.9l1-17.9l1,11l1-23.6l1-0.5l1,12.5l1-6.2l1,10.4l1-16.3l1-4.1l1,7.6l1,0.3l1,4.2l1-3.1l1,3.8l1-2.7l1-0.7l1,3.4l1,6.5l1-11.8l1,7l1-5.8l1,7.5l1,1.7l1-10.1l1,14.9l1-12.8l1,25.9l1-3l1-21.1l1,6.6l1,7.3l1-2.4l1-5.5l1-5.3l1-5l1-8.1l1,3.9l1,3.2l1,2.8l1-3l1,7.5l1-10.6l1,33.6l1-15.1l1-13.2l1,19.2l1-10.1l1,0.1l1-9.4l1-1.1l1-0.5l1-5.9l1,5l1,1.7l1-0.6l1,1.9l1,27.5l1-21.5l1-2l1-11.1l1,5.1l1,1l1,3.6l1-0.9l1-1.8l1-6.8l1-1.8l1,12.3l1,19.8l1-23.4l1,4.4l1,4l1,13.2l1-22.9l1-0.4l1-0.3l1,6.2l1-1.7l1-1l1-4.1l1-0.1l1,23.2l1-19.5l1,19.7l1-15.6l1-2.8l1,0.8l1,12.3l1-9.9l1,13l1-13.1l1-11.1l1,1.9l1,4.9l1-3.4l1,20.2l1-19.4l1-0.9l1,2.9l1,28l1-26.6l1-4.7l1-3.3l1,6.7l1,1.9l1,15.6l1-4.2l1-7.2l1-2.6l1-8.3l1,2l1,1l1,4l1-6.1l1,17.1l1-23.1l1,12.8l1,1.2l1,1.9l1-6.1l1,3.7l1,16.7l1-11.2l1,7l1-12.6l1,3.1l1-4l1,3.9l1-4l1-1.2l1,9.5l1,8.7l1-21.5l1,2.8l1-3.3l1-2.4l1,7.1l1-4.1l1,5.7l1-2.2l1,20.2l1-24.5l1,1.9l1,27.2l1,17.7l1-41l1,6.2l1-5.7l1,10.6l1-9.7l1-12.8l1,18.1l1-0.1l1,9.1l1-16.5l1-2l1,1.9l1-10.8l1,4.8l1,0.2l1,37.5l1-28.2l1-2.4l1-0.7l1-4l1,1.4l1-7.3l1,1l1,3.8l1,16.6l1-16l1-3.9l1,9.2l1,7.8l1-8.6l1-9.8l1-0.4l1,6.9l1,8.6l1-11.9l1,14.7l1-9.9l1-7.6l1,3.3l1,2.4l1-1.1l1,16.4l1-9.9l1-8.8l1,2.1l1,1.2l1,0.1l1-0.4l1,3l1-1.8l1-7.7l1,5.1l1,4.7l1,13.9l1,2.8l1-15l1-6l1,4l1,6l1-1.1l1-6.2l1,9.7l1-9l1-5.3l1-0.7l1,19.4l1-16.2l1-0.8l1-4.3l1,3.9l1,5.7l1-9.7l1,9.5l1-3l1,11.9l1-19.7l1,5.4l1-1.8l1,17.6l1-20.8l1,9.9l1,2.2l1-2.5l1,17.8l1-21.4l1-3.1l1,3.5l1,0.7l1,3l1,13.2l1-7.7l1-4.7l1-8.4l1,16.4l1-16.1l1,5.6l1,38l1-32.2l1,3.8l1-12.3l1,2.5L337.0,854.7L337.0,965.7L72.0,965.7L72.0,853.1Z" fill="#e0b400" stroke="#e0b400" stroke-width="0.6"/>
<path d="M74,909.8l1,0.9l1-0.5l1-0.3l1-1.5l1,13.5l1-9.2l1,4.7l1-8.8l1,2.9l1,3.6l1-7.8l1,5.6l1,0.1l1-0.6l1-2.4l1-3.1l1,2.6l1,0.4l1-3.4l1,16.3l1-10.4l1,1.7l1-4.6l1-6.4l1,7.5l1-1.2l1-1.7l1,1.3l1,0.7l1,1.4l1,1l1,3.6l1,2.3l1-6.4l1,2.1l1-3l1,9l1-6.9l1-4.7l1,6.6l1-3l1,10.3l1,9.4l1-17.5l1,3.8l1-6l1,18.7l1-9.2l1-11.3l1-2.3l1,1.7l1,0.5l1,2.8l1-0.2l1,1.7l1,1.4l1-3l1,18.5l1-19.9l1-3.6l1,4.1l1-1.2l1,13.8l1-12.1l1-3.3l1,1.6l1-3.7l1,0.2l1,2.6l1-0.1l1-3l1,2.7l1,3.7l1,0.7l1-5.1l1,0.4l1,1l1,6.7l1-4.4l1-3.6l1,1.4l1,0.9l1,0.2l1,1.7l1-6.5l1,3.6l1,2.7l1,16.1l1-16.6l1,1.4l1-4.1l1,6.2l1-3l1,0.2l1,1.4l1-3.3l1,22.8l1-21.4l1,1l1-3.4l1,0.3l1,0.3l1,12.6l1-2.7l1-8.2l1,1.7l1-3.2l1-3.4l1,5.7l1-2l1,14.3l1-16.2l1,2.8l1-4.1l1,21.5l1-15.7l1-2.7l1-3.2l1,4.9l1,2.8l1,13.5l1-8.4l1-6.4l1,1l1-8.4l1,3.9l1-2.2l1,1.5l1-0.6l1,17.9l1-20.1l1,10.7l1-4.4l1,0.9l1-1.8l1-0.2l1-1l1-1.9l1,21.2l1-15.4l1-0.2l1,0.4l1-1.1l1-3.3l1,3.3l1,11.4l1,6.7l1-18.3l1-2.9l1-1.7l1-0.8l1-1.4l1-0.6l1-0.1l1,6.3l1,18.9l1-19.1l1-0.2l1,2.7l1,14.2l1-15.3l1,16.8l1-21l1,14.7l1-14.6l1-1l1,13.7l1-2.7l1,12.8l1-24.1l1,4.9l1-2l1-5.3l1,5.5l1-2.5l1,15.5l1-15.6l1,2.8l1-0.1l1-4.9l1,0l1,4.1l1-1.2l1,0.6l1-3l1,0.2l1,3.3l1,3l1,10l1-10.7l1-5.5l1-0.2l1,1.2l1,1.4l1,3.4l1-3.8l1,0.8l1-1.4l1,2.2l1,1.2l1-1.6l1,19l1-12.8l1-4.8l1-1.7l1,1.1l1,0.3l1,2.2l1-3.2l1,3.6l1-3.6l1-1l1-1.1l1,15.6l1,0.2l1-12.2l1-1.4l1,1l1,3.1l1,1.9l1-7.4l1,12.5l1-11.9l1,0.9l1-1.4l1,0.2l1,0.8l1-2.8l1,2.6l1,4l1-3.5l1-2.1l1,5.6l1-6.2l1,2.2l1-4.8l1,2.3l1-0.3l1,5.3l1-3.3l1,0.1l1,2.6l1,1.6l1-1.9l1-1.5l1-0.5l1,2.4l1-2l1-1.8l1,1.4l1,0.9l1,1.5l1-2.5l1,16.3l1-17.6l1,3.4l1,14.2l1-19.4l1,6.1l1-2.1l1,0.5L337.0,911.5L337.0,965.7L72.0,965.7L72.0,909.8Z" fill="#56a64b" stroke="#56a64b" stroke-width="0.6"/>
</g>
<rect x="29" y="995.8" width="14" height="4" rx="2" fill="#56a64b"/>
<text x="51.40" y="1001.50" font-size="12.5" fill="#24292e" textLength="248.0" lengthAdjust="spacing">ruler-query-scheduler-846b656bc-hzf52</text>
<rect x="29" y="1019.3" width="14" height="4" rx="2" fill="#e0b400"/>
<text x="51.40" y="1025.00" font-size="12.5" fill="#24292e" textLength="250.7" lengthAdjust="spacing">ruler-query-scheduler-846b656bc-k95kh</text>
<rect x="360.5" y="782.5" width="335" height="257" fill="#ffffff" stroke="#e4e6e7" stroke-width="1" rx="2"/>
<text x="369.00" y="803.70" font-size="14.5" fill="#24292e" textLength="143.3" lengthAdjust="spacing" stroke="#24292e" stroke-width="0.2">Transmit bandwidth</text>
<line x1="447.5" y1="831.6" x2="447.5" y2="967.7" stroke="#e6e7e8" stroke-width="1"/>
<text x="446.90" y="981.40" font-size="12.3" fill="#24292e" textLength="30.0" lengthAdjust="spacing" text-anchor="middle">15:30</text>
<line x1="512.5" y1="831.6" x2="512.5" y2="967.7" stroke="#e6e7e8" stroke-width="1"/>
<text x="511.90" y="981.40" font-size="12.3" fill="#24292e" textLength="30.0" lengthAdjust="spacing" text-anchor="middle">15:45</text>
<line x1="577.5" y1="831.6" x2="577.5" y2="967.7" stroke="#e6e7e8" stroke-width="1"/>
<text x="576.90" y="981.40" font-size="12.3" fill="#24292e" textLength="30.0" lengthAdjust="spacing" text-anchor="middle">16:00</text>
<line x1="642.5" y1="831.6" x2="642.5" y2="967.7" stroke="#e6e7e8" stroke-width="1"/>
<text x="641.90" y="981.40" font-size="12.3" fill="#24292e" textLength="30.0" lengthAdjust="spacing" text-anchor="middle">16:15</text>
<line x1="419.0" y1="836.5" x2="679" y2="836.5" stroke="#e6e7e8" stroke-width="1"/>
<text x="413.00" y="839.70" font-size="12.3" fill="#24292e" textLength="40.2" lengthAdjust="spacing" text-anchor="end">3 MB/s</text>
<line x1="419.0" y1="878.5" x2="679" y2="878.5" stroke="#e6e7e8" stroke-width="1"/>
<text x="413.00" y="882.10" font-size="12.3" fill="#24292e" textLength="40.2" lengthAdjust="spacing" text-anchor="end">2 MB/s</text>
<line x1="419.0" y1="920.5" x2="679" y2="920.5" stroke="#e6e7e8" stroke-width="1"/>
<text x="413.00" y="924.50" font-size="12.3" fill="#24292e" textLength="40.2" lengthAdjust="spacing" text-anchor="end">1 MB/s</text>
<line x1="419.0" y1="963.5" x2="679" y2="963.5" stroke="#e6e7e8" stroke-width="1"/>
<text x="413.00" y="966.90" font-size="12.3" fill="#24292e" textLength="29.4" lengthAdjust="spacing" text-anchor="end">0 B/s</text>
<clipPath id="c6"><rect x="419.0" y="812.7" width="260.0" height="150.0"/></clipPath><g clip-path="url(#c6)">
<path d="M419,855.6l1-8.2l1,17.3l1-13.5l1,0.4l1,11.2l1-6.1l1-5.3l1,2.9l1,0.2l1-5.3l1,14.7l1-5.2l1-6.2l1,22.2l1-22.2l1-4.7l1,23.7l1-15l1,11.1l1-9l1,6.2l1-17.9l1,11.4l1,13.1l1-18.4l1,20l1-1.5l1-21.9l1,1.5l1,13.9l1-10.3l1-1.9l1-4.4l1,13.8l1,11.4l1-13.7l1-9.9l1,4.2l1,10.8l1-21.8l1,18.5l1,3.3l1-15.8l1,0.3l1-5.6l1,3.9l1,20.3l1-20.6l1-0.5l1,20.7l1-5.3l1-13.1l1,1.8l1,28.3l1-27.5l1,15.8l1-12.9l1-8.2l1,18.2l1-9.6l1,17l1-21.6l1-2l1,4.1l1-2l1-4.9l1,7.4l1,3.5l1-2.4l1,19.6l1-22.8l1-0.8l1,16.6l1-15l1,0.8l1,3.3l1,0.9l1-2.9l1-5.5l1-5.5l1,6.2l1,5.8l1-3.4l1,3.9l1,16.3l1-16.4l1,0.8l1,18.9l1-21.5l1,5l1,16.8l1-3.8l1-10.5l1-11.1l1,17.3l1-10.9l1,0.1l1-3.1l1,9l1,2.9l1-16.5l1,5.8l1,0.2l1,9.2l1-10.3l1-2.7l1,9.8l1-10.2l1,5l1,3.6l1-8.1l1,20l1-24.9l1,3.4l1-4.1l1,27.6l1-21.2l1,3.2l1-6.7l1,7.1l1-1.4l1,6l1-17.3l1,7.9l1-0.5l1,16.1l1,5.7l1-18.9l1-5.2l1,16.6l1-3.2l1-14.5l1,24.2l1-17l1-3.3l1-10.6l1,6.1l1,1.1l1,16.6l1-18l1,15.7l1-1.9l1-10.1l1,7.9l1-5.2l1,5.3l1,3.5l1,4.8l1-12.7l1,2.5l1,14.8l1-16.6l1-5.6l1,14.4l1-14.8l1,0l1,12.9l1,3.4l1-7l1,1.5l1,3.4l1,14.1l1-11.4l1-2.3l1-9.6l1-0.4l1-8l1,13.2l1-6.2l1,1.4l1,14.4l1-8.8l1-2.2l1,10.8l1-17.7l1,7.2l1-4.3l1-3.6l1,2l1,0.5l1-3.2l1,3l1,6.5l1,0.4l1-8.7l1-6.3l1,14.3l1-7.7l1,3.7l1,0.3l1-7l1,9.9l1,15.6l1-24.6l1,0.2l1,29l1-27l1,0.8l1,2.5l1,19.8l1-24.3l1,8.9l1,14.2l1-17.8l1-2.8l1,12.3l1-2.1l1-6.5l1,1l1,20.5l1-23.4l1-4.2l1,25l1-27.6l1,6.1l1-1.7l1,14.3l1-13l1,0.5l1-7l1,1.2l1,5.4l1-2.6l1-0.6l1,4.9l1,7.7l1-8.2l1,21.2l1-22.4l1-0.2l1,8.5l1,15l1-19.4l1,15.9l1-20.7l1-6.3l1,11l1-4.4l1,0.9l1,2.3l1,1.8l1,0.3l1,7.2l1-6.7l1-2.9l1,15.3l1-22.9l1,18.7l1-11l1,2.5l1-4.2l1,5.7l1-4.6l1,10.6l1-9.9l1,4.2l1-8.5l1,10.9l1-9.6l1,7.8L681.0,859.0L681.0,965.7L417.0,965.7L417.0,855.6Z" fill="#e0b400" stroke="#e0b400" stroke-width="0.6"/>
<path d="M419,909.7l1,0.3l1,17.1l1-15.6l1,4.6l1-3.4l1,1.1l1-3.5l1-1.7l1,5.3l1-3.3l1,7.9l1,2.4l1-10.2l1,2l1-5.9l1,3.5l1,3.3l1-0.8l1-0.7l1,4.2l1,4.5l1-11.2l1,10l1-7.9l1,0l1,18.2l1-19.5l1-1.9l1,2.7l1,1.7l1,0.2l1,0.7l1-4.6l1,4.3l1-1.8l1,4.6l1-6.7l1,5.7l1-0.4l1-7.8l1,14.4l1,4.2l1-16.7l1,0.7l1-2.6l1,1.4l1,22.3l1-19.8l1-0.2l1,1.8l1,12.2l1-18.9l1,5.8l1,21.1l1-22.3l1,19.5l1-18.5l1-4.6l1,18l1-8l1-6.3l1-1.3l1,1.6l1,1.4l1-1l1,0l1-0.6l1-0.2l1-0.4l1,2.4l1-2.9l1-0.1l1,0l1-0.6l1,0.5l1,3.6l1-6.5l1,2l1-0.3l1,0.4l1,0.1l1,2l1-4.6l1,4l1,17.5l1-15.8l1-1.1l1,21.8l1-19.4l1,0.7l1,16.3l1-16.8l1-2l1,0.6l1,14.5l1-11.5l1-0.9l1,0.1l1,12.8l1-15.3l1-1.3l1,1.2l1-3.5l1,14.5l1-9.7l1,1.3l1-4.1l1,0l1,1.1l1,11l1-12.6l1,14.2l1-11.7l1-2.2l1,1l1,22.3l1-19.4l1-2.1l1-1.6l1,1.4l1-1.3l1,9.9l1-10.5l1,1.1l1,1.4l1-1.2l1-1.4l1,2.1l1-0.1l1,10.6l1-11.2l1-1.7l1,15.2l1-16.8l1,3.7l1-5.1l1,5.7l1-4l1,16.4l1-12.6l1,7.6l1,0.3l1-12.5l1,8.3l1-4.5l1,5.5l1,3.5l1-10.1l1,0.4l1,2l1,18.4l1-22.3l1,6.3l1-2.2l1-2.3l1-0.5l1,1.7l1,9.3l1-6.7l1,2.1l1-0.7l1,12.9l1-6.2l1,2.5l1-12.9l1-2.8l1,1.7l1,0.7l1-0.3l1,2.7l1-3.4l1,3.3l1-1.1l1-4.7l1,2.2l1,0.6l1-1.3l1,0.1l1,0.3l1,2l1-0.3l1,0l1,2.5l1-3.5l1-2l1,1.9l1,3.2l1-1.6l1,2.5l1-1.9l1-4.3l1,1.4l1,1.9l1-1.6l1,4l1,18.7l1-22.5l1-3.2l1,6.6l1-0.1l1-3.5l1,1.6l1,15.6l1-14.9l1,1.2l1,10.4l1-3.6l1-7.8l1,0.6l1-2.2l1,1.5l1-4.1l1,22l1-21l1,2.2l1-0.8l1,17l1-14.1l1-1.5l1-2.4l1,0.2l1,2.1l1-2.6l1,0.4l1,0.3l1,6.6l1-7.3l1,4.2l1-3l1,2.2l1-1.5l1,4.1l1-0.7l1-4.1l1,3.9l1-2.5l1,2.6l1-0.4l1-4.2l1,3l1-1.1l1,0.9l1,11.5l1-6.5l1-7.5l1,20.3l1-17.8l1-3.6l1,0.7l1,1.7l1-2.7l1,1.5l1,2.1l1-1.3l1-1.1l1,3.3l1-2.9l1,8l1-8.7l1,4.1L681.0,913.6L681.0,965.7L417.0,965.7L417.0,909.7Z" fill="#56a64b" stroke="#56a64b" stroke-width="0.6"/>
</g>
<rect x="373" y="995.8" width="14" height="4" rx="2" fill="#56a64b"/>
<text x="395.40" y="1001.50" font-size="12.5" fill="#24292e" textLength="248.0" lengthAdjust="spacing">ruler-query-scheduler-846b656bc-hzf52</text>
<rect x="373" y="1019.3" width="14" height="4" rx="2" fill="#e0b400"/>
<text x="395.40" y="1025.00" font-size="12.5" fill="#24292e" textLength="250.7" lengthAdjust="spacing">ruler-query-scheduler-846b656bc-k95kh</text>
<rect x="704.5" y="782.5" width="335" height="257" fill="#ffffff" stroke="#e4e6e7" stroke-width="1" rx="2"/>
<text x="713.00" y="803.70" font-size="14.5" fill="#24292e" textLength="189.7" lengthAdjust="spacing" stroke="#24292e" stroke-width="0.2">Inflight requests (per pod)</text>
<line x1="775.5" y1="831.6" x2="775.5" y2="991.3" stroke="#e6e7e8" stroke-width="1"/>
<text x="774.90" y="1005.00" font-size="12.3" fill="#24292e" textLength="30.0" lengthAdjust="spacing" text-anchor="middle">15:30</text>
<line x1="845.5" y1="831.6" x2="845.5" y2="991.3" stroke="#e6e7e8" stroke-width="1"/>
<text x="844.90" y="1005.00" font-size="12.3" fill="#24292e" textLength="30.0" lengthAdjust="spacing" text-anchor="middle">15:45</text>
<line x1="914.5" y1="831.6" x2="914.5" y2="991.3" stroke="#e6e7e8" stroke-width="1"/>
<text x="913.90" y="1005.00" font-size="12.3" fill="#24292e" textLength="30.0" lengthAdjust="spacing" text-anchor="middle">16:00</text>
<line x1="983.5" y1="831.6" x2="983.5" y2="991.3" stroke="#e6e7e8" stroke-width="1"/>
<text x="982.90" y="1005.00" font-size="12.3" fill="#24292e" textLength="30.0" lengthAdjust="spacing" text-anchor="middle">16:15</text>
<line x1="745.6" y1="838.5" x2="1023" y2="838.5" stroke="#e6e7e8" stroke-width="1"/>
<text x="739.60" y="842.50" font-size="12.3" fill="#24292e" textLength="21.5" lengthAdjust="spacing" text-anchor="end">200</text>
<line x1="745.6" y1="875.5" x2="1023" y2="875.5" stroke="#e6e7e8" stroke-width="1"/>
<text x="739.60" y="879.50" font-size="12.3" fill="#24292e" textLength="21.5" lengthAdjust="spacing" text-anchor="end">150</text>
<line x1="745.6" y1="912.5" x2="1023" y2="912.5" stroke="#e6e7e8" stroke-width="1"/>
<text x="739.60" y="916.50" font-size="12.3" fill="#24292e" textLength="21.5" lengthAdjust="spacing" text-anchor="end">100</text>
<line x1="745.6" y1="949.5" x2="1023" y2="949.5" stroke="#e6e7e8" stroke-width="1"/>
<text x="739.60" y="953.50" font-size="12.3" fill="#24292e" textLength="14.4" lengthAdjust="spacing" text-anchor="end">50</text>
<line x1="745.6" y1="986.5" x2="1023" y2="986.5" stroke="#e6e7e8" stroke-width="1"/>
<text x="739.60" y="990.50" font-size="12.3" fill="#24292e" textLength="7.2" lengthAdjust="spacing" text-anchor="end">0</text>
<path d="M745.6,850.1l4,0l4,0l4.1,0l4,0l4,0l4,0l4,0l4.1,0l4,0l4,0l4,0l4,0l4.1,0l4,0l4,0l4,0l4,0l4.1,0l4,0l4,0l4,0l4,0l4.1,0l4,0l4,0l4,0l4,0l4.1,0l4,0l4,0l4,0l4,0l4.1,0l4,0l4,0l4,0l4.1,0l4,0l4,0l4,0l4,0l4.1,0l4,0l4,0l4,0l4,0l4.1,0l4,0l4,0l4,0l4,0l4.1,0l4,0l4,0l4,0l4,0l4.1,0l4,0l4,0l4,0l4,0l4.1,0l4,0l4,0l4,0l4,0l4.1,0l4,0l4,0 L1023.0,986.3 L745.6,986.3 Z" fill="#e0b400" fill-opacity="0.01"/>
<path d="M745.6,850.1l4,0l4,0l4.1,0l4,0l4,0l4,0l4,0l4.1,0l4,0l4,0l4,0l4,0l4.1,0l4,0l4,0l4,0l4,0l4.1,0l4,0l4,0l4,0l4,0l4.1,0l4,0l4,0l4,0l4,0l4.1,0l4,0l4,0l4,0l4,0l4.1,0l4,0l4,0l4,0l4.1,0l4,0l4,0l4,0l4,0l4.1,0l4,0l4,0l4,0l4,0l4.1,0l4,0l4,0l4,0l4,0l4.1,0l4,0l4,0l4,0l4,0l4.1,0l4,0l4,0l4,0l4,0l4.1,0l4,0l4,0l4,0l4,0l4.1,0l4,0l4,0" fill="none" stroke="#e0b400" stroke-width="1" stroke-linejoin="round"/>
<path d="M745.6,961.5l4,0l4,0l4.1,0l4,0l4,0l4,0l4,0l4.1,0l4,0l4,0l4,0l4,0l4.1,0l4,0l4,0l4,0l4,0l4.1,0l4,0l4,0l4,0l4,0l4.1,0l4,0l4,0l4,0l4,0l4.1,0l4,0l4,0l4,0l4,0l4.1,0l4,0l4,0l4,0l4.1,0l4,0l4,0l4,0l4,0l4.1,0l4,0l4,0l4,0l4,0l4.1,0l4,0l4,0l4,0l4,0l4.1,0l4,0l4,0l4,0l4,0l4.1,0l4,0l4,0l4,0l4,0l4.1,0l4,0l4,0l4,0l4,0l4.1,0l4,0l4,0 L1023.0,986.3 L745.6,986.3 Z" fill="#56a64b" fill-opacity="0.01"/>
<path d="M745.6,961.5l4,0l4,0l4.1,0l4,0l4,0l4,0l4,0l4.1,0l4,0l4,0l4,0l4,0l4.1,0l4,0l4,0l4,0l4,0l4.1,0l4,0l4,0l4,0l4,0l4.1,0l4,0l4,0l4,0l4,0l4.1,0l4,0l4,0l4,0l4,0l4.1,0l4,0l4,0l4,0l4.1,0l4,0l4,0l4,0l4,0l4.1,0l4,0l4,0l4,0l4,0l4.1,0l4,0l4,0l4,0l4,0l4.1,0l4,0l4,0l4,0l4,0l4.1,0l4,0l4,0l4,0l4,0l4.1,0l4,0l4,0l4,0l4,0l4.1,0l4,0l4,0" fill="none" stroke="#56a64b" stroke-width="1" stroke-linejoin="round"/>
<rect x="717.0" y="1019.6" width="14" height="4" rx="2" fill="#56a64b"/>
<text x="739.20" y="1025.30" font-size="12.5" fill="#24292e" textLength="21.0" lengthAdjust="spacing">avg</text>
<rect x="770.9" y="1019.6" width="14" height="4" rx="2" fill="#e0b400"/>
<text x="793.10" y="1025.30" font-size="12.5" fill="#24292e" textLength="43.3" lengthAdjust="spacing">highest</text>
<rect x="1048.5" y="782.5" width="335" height="257" fill="#ffffff" stroke="#e4e6e7" stroke-width="1" rx="2"/>
<text x="1057.00" y="803.70" font-size="14.5" fill="#24292e" textLength="249.0" lengthAdjust="spacing" stroke="#24292e" stroke-width="0.2">Ingress TCP connections (per pod)</text>
<circle cx="1330.6" cy="799" r="5.8" fill="none" stroke="#5b5f63" stroke-width="1.3"/>
<rect x="1329.9499999999998" y="798.2" width="1.3" height="4" fill="#5b5f63"/><circle cx="1330.6" cy="796.2" r="0.8" fill="#5b5f63"/>
<line x1="1113.5" y1="831.2" x2="1113.5" y2="991.3" stroke="#e6e7e8" stroke-width="1"/>
<text x="1112.90" y="1005.00" font-size="12.3" fill="#24292e" textLength="30.0" lengthAdjust="spacing" text-anchor="middle">15:30</text>
<line x1="1184.5" y1="831.2" x2="1184.5" y2="991.3" stroke="#e6e7e8" stroke-width="1"/>
<text x="1183.90" y="1005.00" font-size="12.3" fill="#24292e" textLength="30.0" lengthAdjust="spacing" text-anchor="middle">15:45</text>
<line x1="1255.5" y1="831.2" x2="1255.5" y2="991.3" stroke="#e6e7e8" stroke-width="1"/>
<text x="1254.90" y="1005.00" font-size="12.3" fill="#24292e" textLength="30.0" lengthAdjust="spacing" text-anchor="middle">16:00</text>
<line x1="1326.5" y1="831.2" x2="1326.5" y2="991.3" stroke="#e6e7e8" stroke-width="1"/>
<text x="1325.90" y="1005.00" font-size="12.3" fill="#24292e" textLength="30.0" lengthAdjust="spacing" text-anchor="middle">16:15</text>
<line x1="1082.2" y1="831.5" x2="1367" y2="831.5" stroke="#e6e7e8" stroke-width="1"/>
<text x="1076.20" y="835.40" font-size="12.3" fill="#24292e" textLength="14.4" lengthAdjust="spacing" text-anchor="end">40</text>
<line x1="1082.2" y1="870.5" x2="1367" y2="870.5" stroke="#e6e7e8" stroke-width="1"/>
<text x="1076.20" y="874.18" font-size="12.3" fill="#24292e" textLength="14.4" lengthAdjust="spacing" text-anchor="end">30</text>
<line x1="1082.2" y1="909.5" x2="1367" y2="909.5" stroke="#e6e7e8" stroke-width="1"/>
<text x="1076.20" y="912.95" font-size="12.3" fill="#24292e" textLength="14.4" lengthAdjust="spacing" text-anchor="end">20</text>
<line x1="1082.2" y1="948.5" x2="1367" y2="948.5" stroke="#e6e7e8" stroke-width="1"/>
<text x="1076.20" y="951.73" font-size="12.3" fill="#24292e" textLength="14.4" lengthAdjust="spacing" text-anchor="end">10</text>
<line x1="1082.2" y1="986.5" x2="1367" y2="986.5" stroke="#e6e7e8" stroke-width="1"/>
<text x="1076.20" y="990.50" font-size="12.3" fill="#24292e" textLength="7.2" lengthAdjust="spacing" text-anchor="end">0</text>
<path d="M1082.2,846.7l2,0l2,0l2,0l2,0l2,0l2,0l2,0l2,0l2.1,0l2,0l2,0l2,0l2,0l2,0l2,0l2,0l2,0l2,0l2,0l2,0l2,0l2,0l2,0l2,0l2,0l2,0l2.1,0l2,0l2,0l2,0l2,0l2,0l2,0l2,0l2,0l2,0l2,0l2,0l2,0l2,0l2,0l2,0l2,0l2,0l2.1,0l2,0l2,0l2,0l2,0l2,0l2,0l2,0l2,0l2,0l2,0l2,0l2,0l2,0l2,0l2,0l2,0l2,0l2.1,0l2,0l2,0l2,0l2,0l2,0l2,0l2,0l2,0l2,0l2,0l2,0l2,0l2,0l2,0l2,0l2,0l2.1,0l2,0l2,0l2,0l2,0l2,0l2,0l2,0l2,0l2,0l2,0l2,0l2,0l2,0l2,0l2,0l2,0l2,0l2.1,0l2,0l2,0l2,0l2,0l2,0l2,0l2,0l2,0l2,0l2,0l2,0l2,0l2,0l2,0l2,0l2,0l2,0l2.1,0l2,0l2,0l2,0l2,0l2,0l2,0l2,0l2,0l2,0l2,0l2,0l2,0l2,0l2,3.9l2-3.9l2,0l2,0l2.1,0l2,0l2,0l2,0l2,0l2,0l2,0l2,0l2,0" fill="none" stroke="#56a64b" stroke-width="1" stroke-linejoin="round"/>
<path d="M1082.2,846.7l284.8,0 L1367.0,986.3 L1082.2,986.3 Z" fill="#e0b400" fill-opacity="0.01"/>
<path d="M1082.2,846.7l284.8,0" fill="none" stroke="#e0b400" stroke-width="1" stroke-linejoin="round"/>
<path d="M1082.2,986.3l284.8,0" fill="none" stroke="#5794f2" stroke-width="1" stroke-linejoin="round"/>
<rect x="1061.0" y="1019.6" width="14" height="4" rx="2" fill="#56a64b"/>
<text x="1083.20" y="1025.30" font-size="12.5" fill="#24292e" textLength="21.0" lengthAdjust="spacing">avg</text>
<rect x="1114.9" y="1019.6" width="14" height="4" rx="2" fill="#e0b400"/>
<text x="1137.10" y="1025.30" font-size="12.5" fill="#24292e" textLength="43.3" lengthAdjust="spacing">highest</text>
<rect x="1191.1" y="1019.6" width="14" height="4" rx="2" fill="#5794f2"/>
<text x="1213.30" y="1025.30" font-size="12.5" fill="#24292e" textLength="23.9" lengthAdjust="spacing">limit</text>
<rect x="16.5" y="1086.5" width="335" height="257" fill="#ffffff" stroke="#e4e6e7" stroke-width="1" rx="2"/>
<text x="25.00" y="1107.70" font-size="14.5" fill="#24292e" textLength="136.4" lengthAdjust="spacing" stroke="#24292e" stroke-width="0.2">Receive bandwidth</text>
<line x1="117.5" y1="1135.6" x2="117.5" y2="1245.3" stroke="#e6e7e8" stroke-width="1"/>
<text x="116.90" y="1259.00" font-size="12.3" fill="#24292e" textLength="30.0" lengthAdjust="spacing" text-anchor="middle">15:30</text>
<line x1="178.5" y1="1135.6" x2="178.5" y2="1245.3" stroke="#e6e7e8" stroke-width="1"/>
<text x="177.90" y="1259.00" font-size="12.3" fill="#24292e" textLength="30.0" lengthAdjust="spacing" text-anchor="middle">15:45</text>
<line x1="239.5" y1="1135.6" x2="239.5" y2="1245.3" stroke="#e6e7e8" stroke-width="1"/>
<text x="238.90" y="1259.00" font-size="12.3" fill="#24292e" textLength="30.0" lengthAdjust="spacing" text-anchor="middle">16:00</text>
<line x1="300.5" y1="1135.6" x2="300.5" y2="1245.3" stroke="#e6e7e8" stroke-width="1"/>
<text x="299.90" y="1259.00" font-size="12.3" fill="#24292e" textLength="30.0" lengthAdjust="spacing" text-anchor="middle">16:15</text>
<line x1="91.1" y1="1144.5" x2="335" y2="1144.5" stroke="#e6e7e8" stroke-width="1"/>
<text x="85.10" y="1148.10" font-size="12.3" fill="#24292e" textLength="54.6" lengthAdjust="spacing" text-anchor="end">750 MB/s</text>
<line x1="91.1" y1="1176.5" x2="335" y2="1176.5" stroke="#e6e7e8" stroke-width="1"/>
<text x="85.10" y="1180.23" font-size="12.3" fill="#24292e" textLength="54.6" lengthAdjust="spacing" text-anchor="end">500 MB/s</text>
<line x1="91.1" y1="1208.5" x2="335" y2="1208.5" stroke="#e6e7e8" stroke-width="1"/>
<text x="85.10" y="1212.37" font-size="12.3" fill="#24292e" textLength="54.6" lengthAdjust="spacing" text-anchor="end">250 MB/s</text>
<line x1="91.1" y1="1240.5" x2="335" y2="1240.5" stroke="#e6e7e8" stroke-width="1"/>
<text x="85.10" y="1244.50" font-size="12.3" fill="#24292e" textLength="29.4" lengthAdjust="spacing" text-anchor="end">0 B/s</text>
<clipPath id="c7"><rect x="91.1" y="1090.3" width="243.9" height="150.0"/></clipPath><g clip-path="url(#c7)">
<path d="M91.1,1160.5l1.3,34.8l1.4-3.7l1.3-33.9l1.4,37.4l1.3-1.3l1.3-38.5l1.4,37.4l1.3-0.4l1.4-38.1l1.3,37.8l1.3,0.1l1.4-31.7l1.3,32.7l1.4-2.8l1.3-34.4l1.3,36.4l1.4,0l1.3-33.2l1.4,36l1.3,2.4l1.3-36.5l1.4,37.4l1.3-2l1.4-31.5l1.3,32.8l1.3-2.8l1.4-34l1.3,35.1l1.4,2.2l1.3-43.9l1.3,41.3l1.4-0.2l1.3-35.6l1.4,34.4l1.3-1.8l1.3-33.4l1.4,30.6l1.3,1.9l1.4-33.7l1.3,31.9l1.3-0.5l1.4-31.7l1.3,31.7l1.4-0.8l1.3-33.4l1.3,35.2l1.4,0.1l1.3-36.6l1.4,36.5l1.3-2l1.3-41.2l1.4,40.2l1.3-0.6l1.4-39.4l1.3,43.5l1.3,0.4l1.4-36.7l1.3,37l1.4,2.3l1.3-35.4l1.3,35.5l1.4,0.6l1.3-41l1.4,38.3l1.3,0.9l1.3-34.2l1.4,32.6l1.3,0.7l1.4-35.2l1.3,37.5l1.3,1.6l1.4-37.5l1.3,35.5l1.4-2l1.3-35.3l1.3,36.9l1.4,1.3l1.3-34.4l1.4,35.3l1.3-1.5l1.3-33.5l1.4,34.5l1.3-1.6l1.4-41.4l1.3,38.7l1.3,1.6l1.4-31.7l1.3,32.7l1.4-1.1l1.3-36.9l1.3,35.8l1.4,0.9l1.3-32.4l1.4,34.1l1.3-0.6l1.4-38l1.3,38.6l1.3-1.5l1.4-34.8l1.3,35.8l1.4-2.6l1.3-37.2l1.3,37.9l1.4,2.8l1.3-41.6l1.4,40.7l1.3,3.2l1.3-36.8l1.4,34.2l1.3,2.5l1.4-33.2l1.3,30.4l1.3-1.4l1.4-39l1.3,37.9l1.4-0.1l1.3-30.2l1.3,30.2l1.4,4.3l1.3-46.2l1.4,44.3l1.3-1.3l1.3-32.4l1.4,33.3l1.3-3.3l1.4-37.1l1.3,38.5l1.3-1.6l1.4-35.8l1.3,37.6l1.4,2.1l1.3-36.7l1.3,37.1l1.4-1l1.3-30.9l1.4,31.8l1.3,0.7l1.3-42.4l1.4,43.1l1.3-4.6l1.4-37.4l1.3,38.4l1.3,1.9l1.4-33.5l1.3,31.3l1.4-0.9l1.3-33.3l1.3,35.1l1.4-1.1l1.3-33.4l1.4,33.9l1.3,1.2l1.3-31.2l1.4,32l1.3-1.9l1.4-27.6l1.3,31.4l1.3-1.9l1.4-36.3l1.3,37.8l1.4-0.2l1.3-36.3l1.3,36.2l1.4,0.7l1.3-32.5l1.4,27.4l1.3,1l1.3-36.4l1.4,37.6l1.3,1.7l1.4-39.2l1.3,36.4l1.3,1.3l1.4-32.4l1.3,32.7l1.4-0.4l1.3-37.8l1.3,36.8l1.4-0.2l1.3-32.6l1.4,32.7l1.3,0.2L337.0,1191.5L337.0,1243.3L89.1,1243.3L89.1,1160.5Z" fill="#E0752D" stroke="#E0752D" stroke-width="1.0"/>
<path d="M91.1,1162.3l1.3,34l1.4-3.9l1.3-32.6l1.4,36.1l1.3-1.3l1.3-37.2l1.4,36.6l1.3-0.9l1.4-36.9l1.3,36.8l1.3-0.1l1.4-30.5l1.3,31.4l1.4-2.5l1.3-33.3l1.3,35.2l1.4-0.3l1.3-31.7l1.4,34.8l1.3,2.6l1.3-35.8l1.4,36.3l1.3-1.9l1.4-30.4l1.3,31.7l1.3-2.6l1.4-32.9l1.3,33.8l1.4,2.1l1.3-42.5l1.3,40l1.4-0.2l1.3-34.7l1.4,33.7l1.3-1.9l1.3-32.4l1.4,29.3l1.3,2.2l1.4-32.6l1.3,30.8l1.3-0.3l1.4-30.8l1.3,30.8l1.4-1.1l1.3-31.8l1.3,33.8l1.4,0.1l1.3-35.5l1.4,35.3l1.3-1.8l1.3-40.2l1.4,39l1.3-0.6l1.4-38l1.3,42.1l1.3,0.5l1.4-35.7l1.3,36.1l1.4,2l1.3-34.2l1.3,34.4l1.4,0.5l1.3-39.5l1.4,36.9l1.3,0.9l1.3-33l1.4,31.4l1.3,0.8l1.4-34l1.3,36.1l1.3,1.6l1.4-36.1l1.3,34.1l1.4-1.8l1.3-34.2l1.3,35.8l1.4,1.1l1.3-33.1l1.4,34.2l1.3-1.7l1.3-32.4l1.4,33.4l1.3-1.4l1.4-40l1.3,37.2l1.3,1.6l1.4-30.9l1.3,31.9l1.4-1.2l1.3-35.5l1.3,34.5l1.4,0.7l1.3-31.1l1.4,32.8l1.3-0.5l1.4-36.6l1.3,37.2l1.3-1.6l1.4-33.3l1.3,34.3l1.4-2.4l1.3-35.7l1.3,36.7l1.4,2.5l1.3-40.3l1.4,39.3l1.3,3.1l1.3-35.4l1.4,33.1l1.3,2.4l1.4-32.2l1.3,29.3l1.3-1.3l1.4-37.8l1.3,36.5l1.4,0.2l1.3-29.3l1.3,29.2l1.4,4.3l1.3-44.7l1.4,42.7l1.3-0.9l1.3-31.8l1.4,32.6l1.3-3.4l1.4-35.8l1.3,36.9l1.3-1.6l1.4-34.3l1.3,36.3l1.4,2.1l1.3-35.7l1.3,36.1l1.4-0.9l1.3-29.9l1.4,30.7l1.3,0.6l1.3-40.9l1.4,41.5l1.3-4.4l1.4-36l1.3,37.1l1.3,2l1.4-32.5l1.3,30l1.4-0.8l1.3-31.9l1.3,33.8l1.4-1.3l1.3-32.2l1.4,32.7l1.3,1.3l1.3-30.2l1.4,30.8l1.3-1.6l1.4-26.5l1.3,30.3l1.3-2l1.4-35.3l1.3,36.9l1.4-0.4l1.3-35.1l1.3,35.2l1.4,0.6l1.3-31.4l1.4,26.3l1.3,1l1.3-35.2l1.4,36.2l1.3,1.9l1.4-38l1.3,35.2l1.3,1.2l1.4-31.2l1.3,31.6l1.4-0.3l1.3-36.5l1.3,35.3l1.4-0.1l1.3-31.4l1.4,31.4l1.3,0.4L337.0,1192.5L337.0,1243.3L89.1,1243.3L89.1,1162.3Z" fill="#64B0C8" stroke="#64B0C8" stroke-width="1.0"/>
<path d="M91.1,1164.3l1.3,32.9l1.4-4.1l1.3-31.1l1.4,34.8l1.3-1.1l1.3-36.1l1.4,35.2l1.3-0.9l1.4-35.6l1.3,35.7l1.3,0l1.4-29.7l1.3,30l1.4-2l1.3-32.3l1.3,34.1l1.4-0.2l1.3-30.6l1.4,33.5l1.3,2.5l1.3-34.4l1.4,35l1.3-2l1.4-29.4l1.3,30.8l1.3-2.8l1.4-31.5l1.3,32.6l1.4,2.1l1.3-41l1.3,38.5l1.4-0.4l1.3-33.4l1.4,32.7l1.3-2.1l1.3-31l1.4,28.1l1.3,2.4l1.4-31.7l1.3,29.8l1.3-0.3l1.4-30l1.3,29.9l1.4-1l1.3-30.7l1.3,32.7l1.4,0.2l1.3-34.4l1.4,34l1.3-1.7l1.3-39l1.4,37.7l1.3-0.5l1.4-36.9l1.3,40.9l1.3,0.5l1.4-34.3l1.3,34.8l1.4,2l1.3-32.9l1.3,33l1.4,0.6l1.3-38.3l1.4,35.7l1.3,0.9l1.3-31.8l1.4,30.3l1.3,0.6l1.4-32.8l1.3,34.7l1.3,1.8l1.4-35l1.3,33l1.4-1.6l1.3-33.2l1.3,34.4l1.4,1.2l1.3-31.8l1.4,32.9l1.3-1.4l1.3-31.5l1.4,32.3l1.3-1.5l1.4-38.5l1.3,35.9l1.3,1.5l1.4-29.8l1.3,30.8l1.4-1.1l1.3-34.2l1.3,32.9l1.4,0.8l1.3-30l1.4,31.6l1.3-0.4l1.4-35.3l1.3,36l1.3-1.7l1.4-32.1l1.3,33.3l1.4-2.5l1.3-34.5l1.3,35.5l1.4,2.7l1.3-39.2l1.4,37.9l1.3,3.2l1.3-34l1.4,31.8l1.3,2.3l1.4-31.2l1.3,28.1l1.3-1.1l1.4-36.4l1.3,35l1.4,0.4l1.3-28.4l1.3,28.3l1.4,4l1.3-43l1.4,41.3l1.3-1l1.3-30.8l1.4,31.4l1.3-3l1.4-34.7l1.3,35.5l1.3-1.7l1.4-32.9l1.3,35.1l1.4,2.2l1.3-34.4l1.3,34.9l1.4-1.2l1.3-28.6l1.4,29.3l1.3,0.5l1.3-39.1l1.4,39.8l1.3-4l1.4-34.9l1.3,35.9l1.3,1.9l1.4-31.6l1.3,29.1l1.4-0.8l1.3-30.7l1.3,32.6l1.4-1.3l1.3-31.1l1.4,31.7l1.3,1.3l1.3-29.2l1.4,29.7l1.3-1.7l1.4-25.4l1.3,29.2l1.3-2l1.4-34l1.3,35.7l1.4-0.5l1.3-33.6l1.3,33.8l1.4,0.6l1.3-30.4l1.4,25.5l1.3,1l1.3-34.1l1.4,34.9l1.3,1.9l1.4-36.8l1.3,34.2l1.3,0.9l1.4-30.2l1.3,30.7l1.4-0.3l1.3-35.3l1.3,34.1l1.4-0.2l1.3-30.1l1.4,30.3l1.3,0.3L337.0,1193.4L337.0,1243.3L89.1,1243.3L89.1,1164.3Z" fill="#E5AC0E" stroke="#E5AC0E" stroke-width="1.0"/>
<path d="M91.1,1166.8l1.3,31.2l1.4-3.8l1.3-29.3l1.4,32.8l1.3-0.7l1.3-34.4l1.4,33.2l1.3-0.7l1.4-34.1l1.3,34.2l1.3,0.2l1.4-28.7l1.3,28.8l1.4-2l1.3-30.5l1.3,32.1l1.4-0.1l1.3-29l1.4,31.8l1.3,2.5l1.3-32.8l1.4,33.3l1.3-1.8l1.4-27.8l1.3,29l1.3-2.6l1.4-30.1l1.3,31.2l1.4,2l1.3-39.2l1.3,36.5l1.4,0.1l1.3-32.1l1.4,31l1.3-1.7l1.3-29.5l1.4,26.6l1.3,2.1l1.4-30l1.3,28.3l1.3-0.1l1.4-28.6l1.3,28.2l1.4-0.8l1.3-29.3l1.3,31.3l1.4,0.2l1.3-33l1.4,32.5l1.3-1.4l1.3-37.3l1.4,35.7l1.3-0.5l1.4-34.9l1.3,38.8l1.3,0.6l1.4-32.5l1.3,33.2l1.4,1.8l1.3-31.5l1.3,31.4l1.4,0.8l1.3-36.6l1.4,33.9l1.3,1l1.3-30.2l1.4,28.8l1.3,0.5l1.4-31.1l1.3,32.9l1.3,2.1l1.4-33.6l1.3,31.2l1.4-1.2l1.3-31.6l1.3,32.6l1.4,1.1l1.3-30.4l1.4,31.7l1.3-1.7l1.3-29.9l1.4,30.7l1.3-1.2l1.4-37l1.3,34l1.3,1.8l1.4-28.5l1.3,29l1.4-0.4l1.3-32.6l1.3,31.3l1.4,0.6l1.3-28.5l1.4,30l1.3-0.2l1.4-33.7l1.3,34.4l1.3-1.8l1.4-30.5l1.3,31.6l1.4-2.3l1.3-33l1.3,33.9l1.4,2.5l1.3-37l1.4,35.9l1.3,2.8l1.3-32.3l1.4,30.2l1.3,2.6l1.4-29.8l1.3,26.4l1.3-0.6l1.4-34.8l1.3,33.1l1.4,0.8l1.3-27.2l1.3,27.1l1.4,3.6l1.3-40.9l1.4,39.3l1.3-1.1l1.3-29l1.4,29.6l1.3-3l1.4-32.6l1.3,33.3l1.3-1.6l1.4-31l1.3,33.3l1.4,2.2l1.3-32.9l1.3,33.3l1.4-1.1l1.3-27.4l1.4,28.1l1.3,0.3l1.3-36.9l1.4,37.9l1.3-3.9l1.4-33.5l1.3,34.4l1.3,2l1.4-30.4l1.3,27.5l1.4-0.7l1.3-29.2l1.3,31.4l1.4-1.8l1.3-29l1.4,29.9l1.3,1.3l1.3-27.7l1.4,28l1.3-1.5l1.4-24l1.3,27.9l1.3-2.1l1.4-32.3l1.3,33.9l1.4-0.3l1.3-32.2l1.3,32.6l1.4,0.8l1.3-29.6l1.4,24.4l1.3,1.1l1.3-32.8l1.4,33.3l1.3,2l1.4-35.2l1.3,32.4l1.3,0.9l1.4-28.5l1.3,29.1l1.4-0.5l1.3-33.5l1.3,32.4l1.4,0.2l1.3-28.9l1.4,28.7l1.3,0.3L337.0,1194.5L337.0,1243.3L89.1,1243.3L89.1,1166.8Z" fill="#629E51" stroke="#629E51" stroke-width="1.0"/>
<path d="M91.1,1169.5l1.3,29.6l1.4-3.4l1.3-28.2l1.4,31.5l1.3-0.7l1.3-32.7l1.4,31.4l1.3-0.5l1.4-32.7l1.3,32.6l1.3,0.4l1.4-27.4l1.3,27.2l1.4-2.1l1.3-28.7l1.3,30.7l1.4-0.6l1.3-27.3l1.4,30.2l1.3,2.3l1.3-30.8l1.4,31.6l1.3-1.8l1.4-26.6l1.3,28l1.3-3l1.4-28.3l1.3,29.6l1.4,2l1.3-37.4l1.3,34.8l1.4-0.1l1.3-30.4l1.4,29.5l1.3-1.7l1.3-28.1l1.4,25.2l1.3,1.8l1.4-28.3l1.3,26.8l1.3-0.1l1.4-26.9l1.3,26.9l1.4-1.1l1.3-27.5l1.3,29.9l1.4-0.2l1.3-31.3l1.4,30.8l1.3-1.2l1.3-35.8l1.4,34l1.3-0.3l1.4-33.2l1.3,36.9l1.3,0.8l1.4-31.2l1.3,32l1.4,1.4l1.3-29.6l1.3,29.7l1.4,0.7l1.3-34.8l1.4,32.2l1.3,1l1.3-28.8l1.4,27.1l1.3,0.9l1.4-29.6l1.3,31l1.3,2.2l1.4-32l1.3,29.8l1.4-1.1l1.3-30.4l1.3,31.3l1.4,1.1l1.3-29.3l1.4,30.5l1.3-1.6l1.3-28.6l1.4,29.4l1.3-1.5l1.4-34.9l1.3,32.2l1.3,1.8l1.4-27.3l1.3,27.6l1.4-0.4l1.3-31.1l1.3,30l1.4,0.6l1.3-27.2l1.4,28.5l1.3-0.2l1.4-32l1.3,32.7l1.3-1.7l1.4-29.1l1.3,30.1l1.4-2.1l1.3-31.8l1.3,32.6l1.4,2.4l1.3-35.1l1.4,33.8l1.3,3l1.3-30.7l1.4,28.8l1.3,2.3l1.4-28.2l1.3,25.1l1.3-0.8l1.4-33.1l1.3,31.6l1.4,0.9l1.3-25.8l1.3,25.6l1.4,3.6l1.3-39l1.4,37.5l1.3-1.3l1.3-27.3l1.4,27.9l1.3-3l1.4-30.7l1.3,31.5l1.3-1.5l1.4-29.6l1.3,31.7l1.4,2.1l1.3-31.3l1.3,31.9l1.4-1.1l1.3-26.3l1.4,26.9l1.3,0.3l1.3-35.1l1.4,36.1l1.3-4.2l1.4-31.5l1.3,32.8l1.3,1.9l1.4-29l1.3,26.1l1.4-0.6l1.3-27.6l1.3,29.9l1.4-2.1l1.3-27.3l1.4,28.4l1.3,1.3l1.3-26.1l1.4,26.1l1.3-1.1l1.4-22.9l1.3,26.2l1.3-1.6l1.4-30.7l1.3,32.1l1.4-0.4l1.3-30.3l1.3,30.7l1.4,0.6l1.3-27.6l1.4,22.9l1.3,0.8l1.3-31l1.4,31.6l1.3,1.9l1.4-33.5l1.3,30.7l1.3,1l1.4-26.9l1.3,27.5l1.4-0.4l1.3-32l1.3,31.2l1.4-0.1l1.3-27.7l1.4,27.4l1.3,0.6L337.0,1195.9L337.0,1243.3L89.1,1243.3L89.1,1169.5Z" fill="#AEA2E0" stroke="#AEA2E0" stroke-width="1.0"/>
<path d="M91.1,1173.4l1.3,27l1.4-2.5l1.3-26.2l1.4,28.9l1.3-0.8l1.3-29.7l1.4,28.8l1.3-0.5l1.4-30.2l1.3,30l1.3,0.6l1.4-25.2l1.3,25.1l1.4-2.4l1.3-25.7l1.3,27.7l1.4-0.6l1.3-24.9l1.4,27.7l1.3,1.8l1.3-27.7l1.4,28.9l1.3-1.5l1.4-24.7l1.3,25.5l1.3-2.7l1.4-25.9l1.3,27.7l1.4,0.9l1.3-33.7l1.3,31.9l1.4,0l1.3-28.3l1.4,27l1.3-1.2l1.3-26.1l1.4,22.8l1.3,2l1.4-26.3l1.3,24.8l1.3,0.3l1.4-25.3l1.3,25.1l1.4-1l1.3-25.1l1.3,27.3l1.4,0.2l1.3-28.8l1.4,27.8l1.3-0.7l1.3-33.2l1.4,31.3l1.3-0.7l1.4-29.7l1.3,33.5l1.3,0.9l1.4-29.3l1.3,30.2l1.4,0.9l1.3-27.1l1.3,27.5l1.4,0.5l1.3-32.1l1.4,29.8l1.3,0.6l1.3-26.4l1.4,25.1l1.3,0.9l1.4-27l1.3,28.2l1.3,2.3l1.4-29.8l1.3,27.4l1.4-0.9l1.3-28.2l1.3,29l1.4,1.1l1.3-26.9l1.4,28.1l1.3-1.2l1.3-26.6l1.4,26.9l1.3-1.4l1.4-32l1.3,29.4l1.3,1.5l1.4-24.8l1.3,25.3l1.4-0.4l1.3-27.7l1.3,26.8l1.4,0.6l1.3-24.6l1.4,25.8l1.3-0.5l1.4-29.4l1.3,30.3l1.3-1.9l1.4-26.2l1.3,27.3l1.4-1.9l1.3-29.1l1.3,29.7l1.4,2.3l1.3-31.9l1.4,31l1.3,2.9l1.3-28.1l1.4,26l1.3,2.1l1.4-25.9l1.3,23.4l1.3-1.2l1.4-29.7l1.3,28.7l1.4,0.5l1.3-23.9l1.3,23.7l1.4,3.5l1.3-35.8l1.4,34.3l1.3-1.3l1.3-25l1.4,25.9l1.3-3.1l1.4-27.7l1.3,28.6l1.3-1.3l1.4-27.5l1.3,29.5l1.4,1.8l1.3-28.7l1.3,29.5l1.4-0.8l1.3-24.6l1.4,24.9l1.3-0.2l1.3-32.1l1.4,33.6l1.3-3.8l1.4-29.4l1.3,29.9l1.3,2.2l1.4-26.6l1.3,23.7l1.4-0.2l1.3-25.5l1.3,27l1.4-1.7l1.3-24.7l1.4,25.9l1.3,0.5l1.3-23.2l1.4,23.6l1.3-0.8l1.4-20.8l1.3,23.6l1.3-1.1l1.4-28.5l1.3,29.7l1.4-0.1l1.3-28.5l1.3,28.9l1.4-0.3l1.3-24.6l1.4,20.7l1.3,0.7l1.3-28l1.4,28.6l1.3,1.8l1.4-30.4l1.3,27.8l1.3,1.2l1.4-25.2l1.3,25.7l1.4-1.1l1.3-29.1l1.3,29l1.4,0l1.3-25.8l1.4,25.1l1.3,0.5L337.0,1197.5L337.0,1243.3L89.1,1243.3L89.1,1173.4Z" fill="#E5A8E2" stroke="#E5A8E2" stroke-width="1.0"/>
<path d="M91.1,1177.4l1.3,24.6l1.4-2.4l1.3-24l1.4,26.7l1.3-0.8l1.3-27.1l1.4,26.2l1.3-0.2l1.4-27.8l1.3,27.5l1.3,0.4l1.4-22.8l1.3,22.9l1.4-2.7l1.3-22.9l1.3,25.1l1.4-0.7l1.3-22.3l1.4,25.3l1.3,1.2l1.3-24.6l1.4,26.3l1.3-1.5l1.4-22.6l1.3,23.1l1.3-2.6l1.4-23l1.3,24.8l1.4,0.6l1.3-30l1.3,28.5l1.4,0.3l1.3-26l1.4,24.5l1.3-1.1l1.3-23.8l1.4,21l1.3,1.6l1.4-24l1.3,22.5l1.3-0.1l1.4-22.6l1.3,22.7l1.4-0.9l1.3-22.3l1.3,24.6l1.4,0.3l1.3-26.1l1.4,25.1l1.3-1l1.3-30.1l1.4,28.2l1.3-0.3l1.4-26.5l1.3,30.2l1.3,1.1l1.4-27l1.3,27.6l1.4,0.4l1.3-24.3l1.3,25l1.4,0.4l1.3-29l1.4,26.9l1.3,0.6l1.3-24l1.4,22.5l1.3,1.4l1.4-25l1.3,25.7l1.3,2l1.4-26.8l1.3,24.6l1.4-0.9l1.3-25.3l1.3,26l1.4,1.4l1.3-24.5l1.4,25.3l1.3-0.9l1.3-24.3l1.4,24.4l1.3-1.1l1.4-29.6l1.3,27.3l1.3,1.5l1.4-22.5l1.3,22.8l1.4-0.6l1.3-25l1.3,24.4l1.4,0l1.3-21.2l1.4,23l1.3-0.6l1.4-26.9l1.3,27.9l1.3-2l1.4-23.9l1.3,25.2l1.4-1.8l1.3-26.3l1.3,27.1l1.4,1.5l1.3-28.9l1.4,28.3l1.3,2.3l1.3-25.3l1.4,23.5l1.3,2.3l1.4-23.8l1.3,21.2l1.3-0.6l1.4-26.9l1.3,25.8l1.4,0.3l1.3-21.8l1.3,21.4l1.4,3.4l1.3-32.4l1.4,30.8l1.3-1.2l1.3-22.3l1.4,23.5l1.3-2.9l1.4-25.4l1.3,26.2l1.3-1.1l1.4-25.1l1.3,26.7l1.4,1.9l1.3-26.4l1.3,27l1.4-0.9l1.3-22.2l1.4,22.5l1.3-0.3l1.3-28.9l1.4,30.3l1.3-3.4l1.4-26.6l1.3,27.2l1.3,1.9l1.4-24.3l1.3,21.9l1.4-0.7l1.3-22.9l1.3,25l1.4-2.3l1.3-21.9l1.4,23.4l1.3,0.6l1.3-21.1l1.4,21.6l1.3-1.1l1.4-18.3l1.3,20.9l1.3-1.2l1.4-25.4l1.3,26.9l1.4-0.3l1.3-26l1.3,26.6l1.4-0.4l1.3-22.7l1.4,19.2l1.3-0.1l1.3-24.7l1.4,26l1.3,1.8l1.4-27.5l1.3,24.5l1.3,1.3l1.4-22.5l1.3,22.8l1.4-0.3l1.3-27.1l1.3,26.9l1.4-0.3l1.3-23.6l1.4,22.7l1.3,0.8L337.0,1199.6L337.0,1243.3L89.1,1243.3L89.1,1177.4Z" fill="#82B5D8" stroke="#82B5D8" stroke-width="1.0"/>
<path d="M91.1,1181.4l1.3,22.6l1.4-2.6l1.3-21.6l1.4,24.1l1.3-0.6l1.3-24.6l1.4,23.7l1.3-0.1l1.4-25l1.3,24.3l1.3,0.9l1.4-20.8l1.3,20.5l1.4-2.3l1.3-20.4l1.3,22.8l1.4-1l1.3-20.1l1.4,23l1.3,0.9l1.3-21.5l1.4,23l1.3-1.4l1.4-20l1.3,20.3l1.3-2.4l1.4-20.4l1.3,22.8l1.4,0.2l1.3-27.3l1.3,25.8l1.4,0.7l1.3-23.7l1.4,21.8l1.3-0.4l1.3-21.7l1.4,18.7l1.3,1.6l1.4-21.5l1.3,20l1.3-0.7l1.4-19.9l1.3,20.2l1.4-0.5l1.3-20.1l1.3,22.2l1.4,0l1.3-23.6l1.4,23l1.3-0.5l1.3-27.9l1.4,25.8l1.3-0.6l1.4-23.4l1.3,27.1l1.3,1.1l1.4-24.2l1.3,24.5l1.4,0.6l1.3-22.2l1.3,22.5l1.4,0.7l1.3-26.1l1.4,23.9l1.3,0.9l1.3-21.5l1.4,19.9l1.3,1.9l1.4-22.9l1.3,22.9l1.3,1.9l1.4-24.3l1.3,22l1.4-0.6l1.3-22.5l1.3,23.2l1.4,1.4l1.3-21.7l1.4,22.6l1.3-1.1l1.3-21.7l1.4,21.8l1.3-1.2l1.4-26.6l1.3,25l1.3,1.3l1.4-20.3l1.3,20.1l1.4-0.1l1.3-22.4l1.3,21.4l1.4,0.3l1.3-18.6l1.4,20.4l1.3-0.8l1.4-23.4l1.3,24.5l1.3-2l1.4-21.3l1.3,22.7l1.4-2.2l1.3-23.5l1.3,24.7l1.4,1.1l1.3-26.1l1.4,26l1.3,2.1l1.3-22.5l1.4,20.4l1.3,2l1.4-21.2l1.3,19.2l1.3-0.7l1.4-24.1l1.3,22.8l1.4,0.6l1.3-19.6l1.3,19l1.4,3.2l1.3-29l1.4,28.1l1.3-1.4l1.3-20.3l1.4,21.4l1.3-2.4l1.4-23.1l1.3,23.3l1.3-1.4l1.4-21.8l1.3,23.6l1.4,1.8l1.3-23.4l1.3,24.4l1.4-1.3l1.3-19.8l1.4,20.7l1.3-0.9l1.3-25.6l1.4,27.3l1.3-3.3l1.4-23.9l1.3,24.3l1.3,2.1l1.4-22.3l1.3,19.6l1.4-0.3l1.3-20.8l1.3,22.7l1.4-2.3l1.3-19.5l1.4,20.9l1.3,0.7l1.3-18.5l1.4,19.6l1.3-1.9l1.4-16.4l1.3,19.2l1.3-0.9l1.4-23.3l1.3,24.5l1.4-0.5l1.3-23.5l1.3,24.4l1.4-0.9l1.3-20.2l1.4,16.9l1.3,0.4l1.3-22.3l1.4,23.6l1.3,1.4l1.4-24.7l1.3,22l1.3,1.1l1.4-20.6l1.3,20.7l1.4,0.1l1.3-24.8l1.3,24.2l1.4-0.4l1.3-21.1l1.4,20.4l1.3,1.4L337.0,1202.0L337.0,1243.3L89.1,1243.3L89.1,1181.4Z" fill="#F29191" stroke="#F29191" stroke-width="1.0"/>
<path d="M91.1,1185.7l1.3,20.1l1.4-2.1l1.3-19.3l1.4,21.3l1.3-0.5l1.3-22.2l1.4,21.3l1.3,0l1.4-22.7l1.3,22l1.3,0.8l1.4-18.4l1.3,17.7l1.4-1.8l1.3-18l1.3,20.1l1.4-0.9l1.3-17.2l1.4,20l1.3,1.1l1.3-19.6l1.4,20.5l1.3-0.9l1.4-18.4l1.3,18.7l1.3-2.3l1.4-17.6l1.3,19.3l1.4,0.7l1.3-23.8l1.3,22.1l1.4,0.8l1.3-21.3l1.4,19.6l1.3-0.5l1.3-19l1.4,16.2l1.3,1.7l1.4-19.4l1.3,18.1l1.3-0.5l1.4-17.9l1.3,17.9l1.4-0.4l1.3-18.1l1.3,19.9l1.4,0.3l1.3-21.1l1.4,20.6l1.3-0.7l1.3-25.1l1.4,22.6l1.3-0.4l1.4-20.4l1.3,24.2l1.3,1.4l1.4-22l1.3,22.4l1.4,0l1.3-19.6l1.3,19.6l1.4,1l1.3-23.2l1.4,21.1l1.3,0.8l1.3-19.2l1.4,17.8l1.3,1.7l1.4-20.3l1.3,20.1l1.3,1.8l1.4-21.4l1.3,19.1l1.4,0.1l1.3-20.4l1.3,20.9l1.4,1.4l1.3-19.4l1.4,20.1l1.3-1.3l1.3-19.1l1.4,19.1l1.3-1.2l1.4-23.5l1.3,22.4l1.3,0.9l1.4-17.8l1.3,17.6l1.4-0.1l1.3-19.7l1.3,19.5l1.4,0l1.3-16.3l1.4,18l1.3-1.2l1.4-20.6l1.3,21.8l1.3-1.9l1.4-18.7l1.3,19.9l1.4-1.6l1.3-21.1l1.3,22l1.4,0.7l1.3-22.8l1.4,22.8l1.3,2.4l1.3-20.1l1.4,18l1.3,2.1l1.4-18.9l1.3,16.5l1.3-0.3l1.4-21.6l1.3,20.6l1.4,0.2l1.3-17.6l1.3,17l1.4,2.9l1.3-25.9l1.4,25.6l1.3-1.8l1.3-17.6l1.4,18.8l1.3-2.4l1.4-20.1l1.3,20.6l1.3-1.3l1.4-19.1l1.3,20.5l1.4,1.9l1.3-21.4l1.3,21.9l1.4-0.9l1.3-17.9l1.4,18.6l1.3-0.8l1.3-22.5l1.4,24.1l1.3-2.8l1.4-22l1.3,22l1.3,2.3l1.4-20.2l1.3,17.7l1.4-0.4l1.3-18.5l1.3,20l1.4-2.1l1.3-17.2l1.4,18.5l1.3,0.6l1.3-15.8l1.4,17l1.3-1.7l1.4-14.8l1.3,17l1.3-0.3l1.4-20.6l1.3,21.3l1.4-0.3l1.3-20.5l1.3,21.4l1.4-0.7l1.3-17.9l1.4,14.5l1.3,0.8l1.3-19.7l1.4,20.9l1.3,0.9l1.4-22l1.3,19.7l1.3,1l1.4-18.3l1.3,17.9l1.4,0.5l1.3-22.1l1.3,21.7l1.4-0.3l1.3-18.8l1.4,17.8l1.3,1.1L337.0,1203.5L337.0,1243.3L89.1,1243.3L89.1,1185.7Z" fill="#F9BA8F" stroke="#F9BA8F" stroke-width="1.0"/>
<path d="M91.1,1190.2l1.3,16.9l1.4-1.7l1.3-16.8l1.4,19l1.3-0.6l1.3-19.7l1.4,18.8l1.3-0.1l1.4-19.4l1.3,18.7l1.3,0.8l1.4-15.7l1.3,15.2l1.4-2l1.3-15.3l1.3,17.3l1.4-0.4l1.3-15l1.4,17l1.3,1.5l1.3-17.2l1.4,18.2l1.3-1.5l1.4-15.6l1.3,16.2l1.3-2.4l1.4-14.9l1.3,17.1l1.4,0.3l1.3-20.9l1.3,19.6l1.4,1l1.3-18.9l1.4,16.9l1.3-0.6l1.3-16.6l1.4,14.3l1.3,1.3l1.4-17l1.3,16.2l1.3-0.9l1.4-15.3l1.3,15.7l1.4-0.7l1.3-16l1.3,18l1.4,0.6l1.3-19.4l1.4,18.4l1.3-0.8l1.3-22.1l1.4,19.7l1.3,0.1l1.4-17.9l1.3,20.9l1.3,1.8l1.4-19.5l1.3,19.2l1.4,0.3l1.3-16.9l1.3,17.3l1.4,1l1.3-20.5l1.4,17.8l1.3,1.2l1.3-17l1.4,16.1l1.3,1l1.4-18l1.3,18.1l1.3,1.6l1.4-18.9l1.3,16.5l1.4,0.2l1.3-18l1.3,18.7l1.4,0.8l1.3-16.7l1.4,17.3l1.3-0.7l1.3-16.9l1.4,16.6l1.3-0.7l1.4-21.5l1.3,20.5l1.3,1l1.4-16.1l1.3,16.1l1.4-0.5l1.3-17.5l1.3,16.6l1.4,0.3l1.3-14.2l1.4,16.1l1.3-1l1.4-18.2l1.3,19.2l1.3-1.9l1.4-16.1l1.3,17.6l1.4-1.9l1.3-18.2l1.3,18.6l1.4,1.3l1.3-20.1l1.4,20l1.3,2.3l1.3-17.5l1.4,15.2l1.3,1.9l1.4-16.8l1.3,15l1.3-0.5l1.4-18.7l1.3,17.5l1.4,0.8l1.3-15.7l1.3,14.9l1.4,2.2l1.3-22.5l1.4,22.3l1.3-1.6l1.3-14.9l1.4,16.6l1.3-2.6l1.4-17.3l1.3,17.6l1.3-0.8l1.4-16.5l1.3,17.4l1.4,2l1.3-18.9l1.3,19.3l1.4-0.5l1.3-16l1.4,16.8l1.3-1.2l1.3-19.8l1.4,21.1l1.3-2.4l1.4-19.4l1.3,19.3l1.3,1.8l1.4-17l1.3,15.3l1.4-0.4l1.3-15.7l1.3,17l1.4-2.1l1.3-14.7l1.4,15.8l1.3,0.4l1.3-13.4l1.4,14.5l1.3-1.5l1.4-12.8l1.3,15.2l1.3-0.2l1.4-18.2l1.3,18.7l1.4-0.5l1.3-17.7l1.3,18.5l1.4-0.1l1.3-15.9l1.4,12.5l1.3,0.8l1.3-17.2l1.4,18.1l1.3,1.1l1.4-19.3l1.3,16.9l1.3,1.4l1.4-16.3l1.3,15.5l1.4,0.7l1.3-19.1l1.3,19l1.4-1l1.3-16.3l1.4,16.4l1.3,0.2L337.0,1205.3L337.0,1243.3L89.1,1243.3L89.1,1190.2Z" fill="#70DBED" stroke="#70DBED" stroke-width="1.0"/>
<path d="M91.1,1194.5l1.3,14.7l1.4-1.9l1.3-14.3l1.4,16.2l1.3-0.3l1.3-17.5l1.4,16.5l1.3-0.3l1.4-16.6l1.3,16l1.3,0.8l1.4-13.1l1.3,12.8l1.4-1.8l1.3-12.9l1.3,14.5l1.4-0.4l1.3-12.4l1.4,14.5l1.3,1.7l1.3-15.5l1.4,16.2l1.3-1.4l1.4-13.6l1.3,14.1l1.3-2.3l1.4-12.7l1.3,14.8l1.4,0.2l1.3-17.9l1.3,16.3l1.4,1.7l1.3-16.6l1.4,14.4l1.3-0.4l1.3-14.2l1.4,12l1.3,0.9l1.4-14.4l1.3,13.9l1.3-1.1l1.4-12.7l1.3,13.2l1.4-0.6l1.3-13.6l1.3,15.1l1.4,0.9l1.3-16.6l1.4,15.4l1.3-0.6l1.3-18.7l1.4,16.9l1.3,0.6l1.4-15.5l1.3,17.3l1.3,2.1l1.4-17.2l1.3,16.9l1.4,0.2l1.3-14.7l1.3,15.2l1.4,0.7l1.3-17.5l1.4,15.2l1.3,1l1.3-14.6l1.4,13.4l1.3,1.4l1.4-15.5l1.3,16l1.3,0.7l1.4-15.7l1.3,13.8l1.4,0.2l1.3-15.4l1.3,15.5l1.4,0.8l1.3-13.6l1.4,14.6l1.3-0.8l1.3-14.1l1.4,13.9l1.3-0.7l1.4-18.5l1.3,17.3l1.3,0.9l1.4-13.9l1.3,14.6l1.4-1l1.3-14.9l1.3,14.2l1.4,0l1.3-11.2l1.4,13.2l1.3-1l1.4-15.8l1.3,17.1l1.3-2.3l1.4-13.1l1.3,15l1.4-2l1.3-15.6l1.3,16.1l1.4,1.1l1.3-17.3l1.4,17.2l1.3,2l1.3-15.4l1.4,13l1.3,1.7l1.4-13.5l1.3,12.3l1.3-0.6l1.4-16.1l1.3,15.1l1.4,0.7l1.3-13.4l1.3,12.7l1.4,2.2l1.3-19.5l1.4,19.3l1.3-1.9l1.3-12.6l1.4,14l1.3-1.8l1.4-14.5l1.3,14.8l1.3-1.2l1.4-13.5l1.3,14.3l1.4,2.1l1.3-16.3l1.3,16.7l1.4-0.7l1.3-13.5l1.4,14.7l1.3-1.4l1.3-16.7l1.4,18.1l1.3-2.1l1.4-17l1.3,16.7l1.3,1.9l1.4-14.9l1.3,12.9l1.4-0.4l1.3-13l1.3,14.6l1.4-2.2l1.3-12.3l1.4,13.4l1.3,0.2l1.3-11l1.4,12.2l1.3-1.2l1.4-10.8l1.3,13l1.3-0.1l1.4-15.3l1.3,15.9l1.4-0.8l1.3-15.1l1.3,15.9l1.4,0.1l1.3-14l1.4,10.8l1.3,0.4l1.3-14.6l1.4,15.5l1.3,1.3l1.4-17.3l1.3,14.5l1.3,1.4l1.4-13.4l1.3,12.7l1.4,1l1.3-16.3l1.3,16l1.4-1.2l1.3-13.4l1.4,14.2l1.3,0L337.0,1207.4L337.0,1243.3L89.1,1243.3L89.1,1194.5Z" fill="#F4D598" stroke="#F4D598" stroke-width="1.0"/>
<path d="M91.1,1198.4l1.3,12.7l1.4-2.4l1.3-11.2l1.4,13.4l1.3-0.3l1.3-14.2l1.4,13.1l1.3,0l1.4-14.1l1.3,13.6l1.3,0.3l1.4-10.4l1.3,10.9l1.4-1.7l1.3-11.3l1.3,12.3l1.4-0.2l1.3-10.2l1.4,12.1l1.3,1.9l1.3-13.2l1.4,13.5l1.3-1.3l1.4-11.3l1.3,11.6l1.3-1.6l1.4-10.9l1.3,12.6l1.4,0l1.3-15l1.3,13.5l1.4,1.5l1.3-13.5l1.4,11.6l1.3-0.3l1.3-11.5l1.4,9.5l1.3,0.7l1.4-11.9l1.3,11.5l1.3-1.6l1.4-9.8l1.3,10.5l1.4-0.3l1.3-11.1l1.3,12.6l1.4,0.5l1.3-13.8l1.4,13.3l1.3-0.7l1.3-16l1.4,13.9l1.3,0.8l1.4-12.6l1.3,14.4l1.3,1.9l1.4-14.6l1.3,14.7l1.4-0.2l1.3-12.2l1.3,12.6l1.4,0.4l1.3-14.4l1.4,12.2l1.3,1.3l1.3-12.2l1.4,10.9l1.3,1.6l1.4-13.2l1.3,13l1.3,1.1l1.4-13.2l1.3,11.3l1.4,0.4l1.3-12.8l1.3,12.8l1.4,0.6l1.3-10.8l1.4,12.2l1.3-0.6l1.3-12l1.4,11.1l1.3-0.3l1.4-15.8l1.3,14.6l1.3,0.7l1.4-11.3l1.3,12.4l1.4-1.4l1.3-12.4l1.3,11.9l1.4,0l1.3-9.4l1.4,11.5l1.3-0.9l1.4-13.7l1.3,14.9l1.3-2.5l1.4-10.3l1.3,12l1.4-1.8l1.3-12.8l1.3,13.6l1.4,0.9l1.3-14.7l1.4,14.5l1.3,1.8l1.3-12.9l1.4,10.9l1.3,1.6l1.4-11.6l1.3,10.2l1.3-0.5l1.4-13.1l1.3,12.2l1.4,1.2l1.3-12.1l1.3,11l1.4,2l1.3-16.8l1.4,16.7l1.3-1.4l1.3-11l1.4,11.9l1.3-1.9l1.4-11.7l1.3,12.3l1.3-1.3l1.4-10.7l1.3,11.4l1.4,2l1.3-13.5l1.3,13.8l1.4-0.5l1.3-11.1l1.4,12.2l1.3-1.3l1.3-13.9l1.4,15l1.3-1.8l1.4-14.2l1.3,14.1l1.3,1.9l1.4-12.8l1.3,10.6l1.4,0l1.3-11l1.3,12.2l1.4-1.8l1.3-10.8l1.4,11.2l1.3,0.8l1.3-9.3l1.4,10.6l1.3-1.5l1.4-9l1.3,11.2l1.3-0.6l1.4-12.2l1.3,12.7l1.4-0.3l1.3-12.8l1.3,13.5l1.4-0.3l1.3-11.6l1.4,8.6l1.3,0.5l1.3-12l1.4,13.3l1.3,0.8l1.4-14l1.3,11.9l1.3,0.9l1.4-11.4l1.3,10.6l1.4,1.1l1.3-13.4l1.3,12.8l1.4-0.8l1.3-11.3l1.4,12.6l1.3-0.2L337.0,1209.6L337.0,1243.3L89.1,1243.3L89.1,1198.4Z" fill="#B7DBAB" stroke="#B7DBAB" stroke-width="1.0"/>
<path d="M91.1,1202.4l1.3,10.3l1.4-2.1l1.3-9.2l1.4,11.4l1.3-0.7l1.3-11l1.4,10.4l1.3,0l1.4-11.7l1.3,11.1l1.3,0.3l1.4-8.1l1.3,8.6l1.4-2.1l1.3-8.3l1.3,10.1l1.4-0.3l1.3-7.9l1.4,9.6l1.3,1.7l1.3-10.8l1.4,10.7l1.3-1l1.4-9.1l1.3,9.5l1.3-1.7l1.4-8.7l1.3,10.2l1.4,0.3l1.3-12.1l1.3,10.3l1.4,1.7l1.3-11.1l1.4,9.5l1.3-0.5l1.3-9.3l1.4,7.3l1.3,1l1.4-9.6l1.3,9.1l1.3-1.2l1.4-8.1l1.3,8.5l1.4,0.1l1.3-9.3l1.3,10.5l1.4-0.1l1.3-10.9l1.4,10.9l1.3-1.3l1.3-12.9l1.4,11.3l1.3,0.8l1.4-10.1l1.3,11.7l1.3,2l1.4-11.9l1.3,11.7l1.4,0.2l1.3-9.9l1.3,10.2l1.4,0l1.3-11.4l1.4,9.7l1.3,0.9l1.3-9.5l1.4,8.5l1.3,0.9l1.4-10l1.3,10.4l1.3,1l1.4-10.7l1.3,8.8l1.4,0.1l1.3-10l1.3,10.6l1.4,0.6l1.3-8.9l1.4,9.6l1.3-0.1l1.3-9.7l1.4,9.1l1.3-0.3l1.4-12.8l1.3,11.6l1.3,0.4l1.4-9l1.3,10.2l1.4-1.5l1.3-9.4l1.3,9l1.4,0.1l1.3-7.1l1.4,8.9l1.3-0.8l1.4-11l1.3,12l1.3-2.5l1.4-7.6l1.3,9.5l1.4-1.6l1.3-10.3l1.3,11.2l1.4,0.6l1.3-11.9l1.4,12.1l1.3,1.4l1.3-10.6l1.4,8.3l1.3,1.8l1.4-9.2l1.3,7.6l1.3-0.1l1.4-10.1l1.3,9.2l1.4,1.2l1.3-9.5l1.3,8.3l1.4,2.2l1.3-13.7l1.4,13.2l1.3-0.9l1.3-8.8l1.4,9.4l1.3-1.7l1.4-9.1l1.3,9.8l1.3-1.5l1.4-8.2l1.3,9l1.4,1.7l1.3-10.6l1.3,10.7l1.4-0.3l1.3-8.8l1.4,10.1l1.3-1.4l1.3-10.9l1.4,11.7l1.3-1.2l1.4-11.5l1.3,11l1.3,2.1l1.4-10.3l1.3,8.4l1.4,0l1.3-8.9l1.3,9.6l1.4-1.9l1.3-8.2l1.4,9.1l1.3,0.4l1.3-7.4l1.4,8.6l1.3-0.9l1.4-7.5l1.3,9.4l1.3-0.6l1.4-9.6l1.3,9.8l1.4-0.3l1.3-10.3l1.3,10.9l1.4,0l1.3-9.3l1.4,5.7l1.3,1l1.3-9.6l1.4,11.4l1.3,0.3l1.4-11.3l1.3,9.5l1.3,0.8l1.4-8.9l1.3,8.3l1.4,0.8l1.3-10.7l1.3,10.2l1.4-0.6l1.3-9l1.4,10.2l1.3-0.3L337.0,1211.5L337.0,1243.3L89.1,1243.3L89.1,1202.4Z" fill="#584477" stroke="#584477" stroke-width="1.0"/>
<path d="M91.1,1204.8l1.3,9.3l1.4-2.3l1.3-7.9l1.4,10l1.3-0.7l1.3-9.5l1.4,9.4l1.3-0.3l1.4-10.4l1.3,10l1.3,0.5l1.4-7.5l1.3,7.6l1.4-2.1l1.3-7.2l1.3,9.1l1.4-0.2l1.3-7.1l1.4,8.7l1.3,1.8l1.3-10.1l1.4,9.6l1.3-0.7l1.4-8.2l1.3,8.4l1.3-1.7l1.4-7.6l1.3,9l1.4,0.5l1.3-10.9l1.3,9.3l1.4,1.8l1.3-10.2l1.4,8.2l1.3-0.3l1.3-8.2l1.4,6.3l1.3,0.7l1.4-8.3l1.3,8.1l1.3-1.1l1.4-7.1l1.3,7.5l1.4,0.1l1.3-8.2l1.3,9.3l1.4-0.3l1.3-9.4l1.4,9.6l1.3-1.4l1.3-11.5l1.4,10.2l1.3,0.8l1.4-8.9l1.3,10.2l1.3,1.9l1.4-10.8l1.3,11l1.4-0.2l1.3-8.9l1.3,9.2l1.4,0l1.3-10l1.4,8.4l1.3,0.9l1.3-8.6l1.4,7.7l1.3,1l1.4-9.4l1.3,9.4l1.3,0.9l1.4-9.6l1.3,8.1l1.4,0.3l1.3-9l1.3,9.6l1.4,0.3l1.3-8.2l1.4,8.8l1.3-0.1l1.3-8.5l1.4,7.8l1.3-0.3l1.4-11.6l1.3,10.7l1.3,0.3l1.4-7.9l1.3,9.2l1.4-1.5l1.3-8.4l1.3,8l1.4-0.1l1.3-6l1.4,7.9l1.3-0.6l1.4-10.1l1.3,10.9l1.3-2.3l1.4-7l1.3,8.7l1.4-1.5l1.3-9.1l1.3,9.9l1.4,0.6l1.3-10.8l1.4,10.8l1.3,1.2l1.3-9l1.4,7l1.3,1.9l1.4-8.3l1.3,6.6l1.3,0.2l1.4-9l1.3,7.9l1.4,1.2l1.3-8.5l1.3,7.4l1.4,2.1l1.3-12.2l1.4,11.5l1.3-0.6l1.3-7.6l1.4,8l1.3-1.5l1.4-7.9l1.3,8.5l1.3-1.3l1.4-7.2l1.3,7.9l1.4,1.7l1.3-9.4l1.3,9.4l1.4-0.2l1.3-7.9l1.4,9.1l1.3-1.3l1.3-9.8l1.4,10.5l1.3-1.1l1.4-10.5l1.3,10.3l1.3,1.8l1.4-9.3l1.3,7.4l1.4,0l1.3-7.9l1.3,8.4l1.4-1.6l1.3-7.6l1.4,8.4l1.3,0.4l1.3-6.6l1.4,7.9l1.3-1.1l1.4-6.7l1.3,8.2l1.3-0.2l1.4-8.4l1.3,8.4l1.4-0.2l1.3-8.8l1.3,9.8l1.4-0.6l1.3-8.1l1.4,5.2l1.3,0.6l1.3-8.1l1.4,9.7l1.3,0.6l1.4-10.4l1.3,8.7l1.3,0.9l1.4-8.1l1.3,7.2l1.4,0.7l1.3-9.4l1.3,8.6l1.4,0.1l1.3-8.5l1.4,9.3l1.3-0.3L337.0,1212.8L337.0,1243.3L89.1,1243.3L89.1,1204.8Z" fill="#6D1F62" stroke="#6D1F62" stroke-width="1.0"/>
<path d="M91.1,1207.9l1.3,8l1.4-2l1.3-6.6l1.4,8.6l1.3-0.5l1.3-7.8l1.4,7.8l1.3-0.8l1.4-8.8l1.3,8.8l1.3-0.1l1.4-5.8l1.3,6.5l1.4-2.1l1.3-5.7l1.3,7.4l1.4,0.1l1.3-6.2l1.4,7.4l1.3,1.6l1.3-8.7l1.4,8.4l1.3-0.9l1.4-6.8l1.3,7l1.3-1.9l1.4-5.7l1.3,7.2l1.4,0.6l1.3-9.1l1.3,7.6l1.4,1.5l1.3-8.1l1.4,6.6l1.3-0.1l1.3-7.1l1.4,5.3l1.3,0.5l1.4-7.3l1.3,7.1l1.3-1.2l1.4-6.2l1.3,6.5l1.4,0.3l1.3-7l1.3,7.9l1.4,0l1.3-7.9l1.4,8l1.3-1.8l1.3-9.2l1.4,8.6l1.3,0.7l1.4-7.5l1.3,8.6l1.3,1.7l1.4-9.4l1.3,9.7l1.4,0l1.3-7.7l1.3,7.9l1.4-0.1l1.3-8.1l1.4,6.8l1.3,0.7l1.3-7.2l1.4,5.9l1.3,1l1.4-7.3l1.3,7.7l1.3,0.7l1.4-8.1l1.3,7.1l1.4-0.2l1.3-7.2l1.3,7.6l1.4,0.7l1.3-7.1l1.4,7.2l1.3,0l1.3-6.7l1.4,6.5l1.3-0.9l1.4-9.8l1.3,9l1.3,0.6l1.4-6.4l1.3,7.6l1.4-1.4l1.3-7l1.3,7.1l1.4-0.8l1.3-4.7l1.4,6.9l1.3-0.7l1.4-8.6l1.3,9.3l1.3-2.2l1.4-5.7l1.3,7.4l1.4-1.2l1.3-7.5l1.3,7.6l1.4,0.9l1.3-9.1l1.4,9.6l1.3,0.3l1.3-7.4l1.4,5.7l1.3,2.2l1.4-7.2l1.3,5.9l1.3-0.6l1.4-7.2l1.3,6.3l1.4,1.4l1.3-7.5l1.3,6.5l1.4,1.8l1.3-10.4l1.4,9.5l1.3-0.7l1.3-5.9l1.4,6.8l1.3-1.6l1.4-6.1l1.3,6.5l1.3-1.3l1.4-5.4l1.3,6.6l1.4,1.1l1.3-7.9l1.3,8.3l1.4-0.5l1.3-6.5l1.4,7.6l1.3-0.9l1.3-8.1l1.4,8.7l1.3-1.4l1.4-8.4l1.3,8.5l1.3,1.8l1.4-7.9l1.3,5.7l1.4,0.4l1.3-6.6l1.3,6.5l1.4-0.6l1.3-6.6l1.4,6.5l1.3,1l1.3-5.4l1.4,6.6l1.3-1.4l1.4-5l1.3,6.5l1.3-0.4l1.4-7l1.3,7.7l1.4-0.6l1.3-7.4l1.3,8.3l1.4-0.7l1.3-6.6l1.4,4.3l1.3,0.4l1.3-6.9l1.4,8.2l1.3,0.8l1.4-9l1.3,7.3l1.3,1l1.4-6.6l1.3,5.9l1.4,0.5l1.3-8.3l1.3,7.3l1.4-0.1l1.3-6.9l1.4,7.7l1.3-0.2L337.0,1214.6L337.0,1243.3L89.1,1243.3L89.1,1207.9Z" fill="#0A437C" stroke="#0A437C" stroke-width="1.0"/>
<path d="M91.1,1211.1l1.3,6.7l1.4-2.5l1.3-4.8l1.4,7.5l1.3-1.1l1.3-6l1.4,6.1l1.3-0.6l1.4-7.2l1.3,7.1l1.3-0.3l1.4-4.3l1.3,5.2l1.4-1.9l1.3-4.3l1.3,6l1.4,0.1l1.3-5.3l1.4,6.4l1.3,1.6l1.3-7.8l1.4,7.2l1.3-0.6l1.4-5.8l1.3,5.6l1.3-1.4l1.4-4.4l1.3,5.6l1.4,0.5l1.3-7.6l1.3,6.5l1.4,1.3l1.3-6.7l1.4,5l1.3,0.3l1.3-5.8l1.4,3.9l1.3,0.7l1.4-6.2l1.3,5.6l1.3-1l1.4-4.9l1.3,5.4l1.4,0.3l1.3-5.9l1.3,6.8l1.4-0.2l1.3-6.4l1.4,6.7l1.3-1.9l1.3-7.2l1.4,7l1.3,0.4l1.4-6.2l1.3,7.2l1.3,1.8l1.4-8l1.3,8.1l1.4-0.2l1.3-6.4l1.3,6.8l1.4-0.4l1.3-6.5l1.4,5.5l1.3,0.4l1.3-5.6l1.4,4.3l1.3,1.6l1.4-6.4l1.3,6.4l1.3,0.7l1.4-6.7l1.3,5.4l1.4,0.4l1.3-6.2l1.3,6.2l1.4,1l1.3-5.9l1.4,5.8l1.3-0.1l1.3-5.5l1.4,5.8l1.3-0.9l1.4-8.4l1.3,7.4l1.3,0.8l1.4-5.8l1.3,6.5l1.4-1.2l1.3-5.6l1.3,6l1.4-1l1.3-3.8l1.4,5.7l1.3-0.5l1.4-7.1l1.3,7.6l1.3-2.3l1.4-4.3l1.3,6.1l1.4-0.7l1.3-6.4l1.3,6l1.4,1.3l1.3-8l1.4,8.4l1.3,0l1.3-6.2l1.4,4.8l1.3,2l1.4-6.1l1.3,5l1.3-0.8l1.4-5.7l1.3,4.9l1.4,1.4l1.3-6.4l1.3,5.1l1.4,1.9l1.3-8.7l1.4,8.1l1.3-0.6l1.3-5l1.4,5.6l1.3-1.8l1.4-4.5l1.3,5l1.3-1.1l1.4-3.9l1.3,5.4l1.4,0.8l1.3-6.5l1.3,7l1.4-0.4l1.3-5.5l1.4,6.6l1.3-0.9l1.3-7.1l1.4,7.4l1.3-1.3l1.4-6.7l1.3,7.1l1.3,1.5l1.4-6.4l1.3,4l1.4,0.7l1.3-5.6l1.3,5.2l1.4-0.8l1.3-4.7l1.4,4.8l1.3,1.3l1.3-4.4l1.4,5.6l1.3-1.5l1.4-3.9l1.3,5l1.3-0.1l1.4-5.8l1.3,6.5l1.4-0.3l1.3-6.3l1.3,6.7l1.4-0.5l1.3-5.4l1.4,3.2l1.3,0.8l1.3-5.9l1.4,6.5l1.3,1l1.4-7.5l1.3,6l1.3,1.1l1.4-5.4l1.3,4.6l1.4,0.3l1.3-6.6l1.3,5.6l1.4-0.2l1.3-5.5l1.4,6.6l1.3-0.2L337.0,1216.5L337.0,1243.3L89.1,1243.3L89.1,1211.1Z" fill="#890F02" stroke="#890F02" stroke-width="1.0"/>
<path d="M91.1,1212.1l1.3,6.4l1.4-2.3l1.3-4.6l1.4,7.4l1.3-1.2l1.3-5.7l1.4,5.7l1.3-0.6l1.4-6.9l1.3,7l1.3-0.2l1.4-4.4l1.3,5.1l1.4-1.9l1.3-4.1l1.3,5.7l1.4,0.2l1.3-5.1l1.4,6.1l1.3,1.6l1.3-7.6l1.4,6.9l1.3-0.4l1.4-5.6l1.3,5.2l1.3-1.5l1.4-3.9l1.3,5.1l1.4,0.8l1.3-7.5l1.3,6.3l1.4,1.1l1.3-6.3l1.4,4.8l1.3,0.3l1.3-5.4l1.4,3.5l1.3,0.7l1.4-5.9l1.3,5.4l1.3-1l1.4-4.7l1.3,5.2l1.4,0.3l1.3-5.5l1.3,6.3l1.4-0.1l1.3-6.2l1.4,6.4l1.3-1.7l1.3-7l1.4,6.6l1.3,0.6l1.4-6l1.3,6.9l1.3,1.7l1.4-7.6l1.3,7.7l1.4-0.3l1.3-6.1l1.3,6.6l1.4-0.4l1.3-6.4l1.4,5.6l1.3,0.2l1.3-5.3l1.4,4.1l1.3,1.5l1.4-6.1l1.3,6l1.3,1l1.4-6.6l1.3,5.1l1.4,0.3l1.3-5.8l1.3,5.9l1.4,0.9l1.3-5.6l1.4,5.6l1.3-0.1l1.3-5.3l1.4,5.7l1.3-0.9l1.4-8.2l1.3,7.2l1.3,0.8l1.4-5.7l1.3,6.3l1.4-1.2l1.3-5.2l1.3,5.5l1.4-1l1.3-3.4l1.4,5.5l1.3-0.6l1.4-6.8l1.3,7.3l1.3-2.3l1.4-4.1l1.3,5.9l1.4-0.8l1.3-5.9l1.3,5.6l1.4,1.4l1.3-7.8l1.4,8.2l1.3-0.1l1.3-5.8l1.4,4.6l1.3,1.7l1.4-5.8l1.3,4.7l1.3-0.7l1.4-5.3l1.3,4.6l1.4,1.3l1.3-6.2l1.3,5.1l1.4,1.7l1.3-8.3l1.4,7.7l1.3-0.6l1.3-4.8l1.4,5.3l1.3-1.7l1.4-4.1l1.3,4.5l1.3-0.9l1.4-3.7l1.3,5.2l1.4,0.7l1.3-6.1l1.3,6.5l1.4-0.3l1.3-5.2l1.4,6.3l1.3-1l1.3-6.5l1.4,6.9l1.3-1.2l1.4-6.6l1.3,6.9l1.3,1.3l1.4-5.9l1.3,3.9l1.4,0.4l1.3-5.2l1.3,5l1.4-0.8l1.3-4.5l1.4,4.5l1.3,1.1l1.3-3.9l1.4,5.4l1.3-1.5l1.4-3.7l1.3,4.8l1.3-0.3l1.4-5.4l1.3,6.2l1.4-0.1l1.3-6l1.3,6.2l1.4-0.5l1.3-5.2l1.4,3l1.3,0.9l1.3-5.6l1.4,6.1l1.3,1l1.4-7.2l1.3,5.8l1.3,1.1l1.4-5.2l1.3,4.2l1.4,0.5l1.3-6.4l1.3,5.4l1.4-0.2l1.3-5.3l1.4,6.3l1.3-0.2L337.0,1217.3L337.0,1243.3L89.1,1243.3L89.1,1212.1Z" fill="#C15C17" stroke="#C15C17" stroke-width="1.0"/>
<path d="M91.1,1214.6l1.3,5.5l1.4-1.9l1.3-4l1.4,6.9l1.3-1.6l1.3-4.9l1.4,4.7l1.3-0.1l1.4-6.6l1.3,6.4l1.3-0.2l1.4-3.4l1.3,4.2l1.4-1.5l1.3-3.7l1.3,5.4l1.4-0.4l1.3-4.5l1.4,5.8l1.3,1.2l1.3-6.8l1.4,5.9l1.3-0.4l1.4-4.8l1.3,4.5l1.3-1.1l1.4-3.4l1.3,4.5l1.4,0.9l1.3-7l1.3,5.8l1.4,1l1.3-5.9l1.4,4.3l1.3,0.4l1.3-4.6l1.4,2.9l1.3,0.6l1.4-5.4l1.3,4.9l1.3-0.8l1.4-4.1l1.3,4.4l1.4,0.2l1.3-5l1.3,5.7l1.4,0.3l1.3-5.9l1.4,5.6l1.3-1.5l1.3-6.3l1.4,6.1l1.3,0.7l1.4-5.3l1.3,5.8l1.3,1.9l1.4-6.6l1.3,6.4l1.4,0l1.3-5.6l1.3,6.1l1.4-0.5l1.3-5.6l1.4,4.7l1.3,0.5l1.3-5.1l1.4,4.1l1.3,1.2l1.4-5.4l1.3,5.3l1.3,1l1.4-5.8l1.3,4.2l1.4,0.4l1.3-5.1l1.3,5.2l1.4,0.9l1.3-5.3l1.4,5.1l1.3-0.3l1.3-4.2l1.4,4.9l1.3-1.3l1.4-6.9l1.3,6.5l1.3,0.4l1.4-5.1l1.3,6.3l1.4-1.6l1.3-4.7l1.3,5.1l1.4-1l1.3-2.9l1.4,5l1.3-0.5l1.4-6.3l1.3,6.6l1.3-2l1.4-3.7l1.3,5.1l1.4-0.3l1.3-5.6l1.3,4.9l1.4,1.2l1.3-6.5l1.4,7.2l1.3-0.2l1.3-5.3l1.4,3.8l1.3,1.8l1.4-4.8l1.3,3.8l1.3-0.8l1.4-4.4l1.3,4l1.4,1.4l1.3-5.8l1.3,4.6l1.4,1.6l1.3-7.4l1.4,6.8l1.3-0.3l1.3-4.3l1.4,4.7l1.3-1.9l1.4-3.8l1.3,4.3l1.3-0.8l1.4-2.9l1.3,4.6l1.4,0.4l1.3-5.4l1.3,5.5l1.4-0.1l1.3-4.4l1.4,5.4l1.3-1l1.3-5.6l1.4,6.1l1.3-1.3l1.4-5.7l1.3,6.2l1.3,1.4l1.4-5.5l1.3,3.4l1.4,0.4l1.3-4.9l1.3,4.7l1.4-0.4l1.3-4.3l1.4,4.2l1.3,0.6l1.3-3l1.4,4.5l1.3-1.4l1.4-3.1l1.3,3.9l1.3-0.4l1.4-4.5l1.3,5.8l1.4-0.3l1.3-5.4l1.3,5.9l1.4-0.5l1.3-4.9l1.4,2.4l1.3,1.1l1.3-5.3l1.4,5.6l1.3,1.1l1.4-6.7l1.3,5.3l1.3,1.1l1.4-4.8l1.3,3.8l1.4,0.5l1.3-5.9l1.3,4.7l1.4,0.3l1.3-4.6l1.4,5.6l1.3-0.3L337.0,1219.3L337.0,1243.3L89.1,1243.3L89.1,1214.6Z" fill="#447EBC" stroke="#447EBC" stroke-width="1.0"/>
<path d="M91.1,1217.5l1.3,4.2l1.4-1.6l1.3-3.8l1.4,6.4l1.3-1.4l1.3-3.9l1.4,3.8l1.3,0.1l1.4-6.1l1.3,5.9l1.3-0.5l1.4-2.7l1.3,3.7l1.4-1.3l1.3-3.3l1.3,4.6l1.4-0.3l1.3-4l1.4,5l1.3,1.3l1.3-6.2l1.4,5.4l1.3-0.4l1.4-4.1l1.3,3.9l1.3-1l1.4-3l1.3,4.2l1.4,0.5l1.3-6.1l1.3,4.9l1.4,1l1.3-5.2l1.4,3.6l1.3,0.2l1.3-3.8l1.4,2.4l1.3,0.6l1.4-4.6l1.3,4.1l1.3-0.4l1.4-3.6l1.3,3.6l1.4,0.3l1.3-4.4l1.3,5l1.4,0.4l1.3-5.5l1.4,5l1.3-1.2l1.3-5.5l1.4,4.9l1.3,1.2l1.4-5l1.3,5.4l1.3,1.9l1.4-6.1l1.3,5.6l1.4,0.1l1.3-5.1l1.3,5.6l1.4-0.6l1.3-5.1l1.4,4.5l1.3,0.4l1.3-4.3l1.4,3.3l1.3,1l1.4-4.9l1.3,4.7l1.3,1.1l1.4-5.3l1.3,3.5l1.4,0.6l1.3-4.3l1.3,4.2l1.4,0.9l1.3-4.4l1.4,4.5l1.3-0.3l1.3-3.7l1.4,4l1.3-1l1.4-6.4l1.3,6l1.3,0.5l1.4-4.6l1.3,5.5l1.4-1.4l1.3-4l1.3,4.5l1.4-1.4l1.3-2l1.4,4.2l1.3-0.2l1.4-5.8l1.3,6.1l1.3-1.9l1.4-3.3l1.3,4.6l1.4-0.1l1.3-5.1l1.3,4.2l1.4,1.4l1.3-6.2l1.4,6.4l1.3-0.3l1.3-4.5l1.4,3.2l1.3,1.6l1.4-4l1.3,3.3l1.3-0.5l1.4-3.8l1.3,3.2l1.4,1.4l1.3-5.1l1.3,4l1.4,1.3l1.3-6.7l1.4,6.3l1.3-0.4l1.3-3.6l1.4,4.2l1.3-2l1.4-2.8l1.3,3.5l1.3-0.8l1.4-2.6l1.3,4.1l1.4,0l1.3-4.5l1.3,4.9l1.4,0.2l1.3-4.1l1.4,4.7l1.3-1l1.3-5.1l1.4,5.9l1.3-1.6l1.4-5l1.3,5.6l1.3,1.3l1.4-5l1.3,3.2l1.4,0.2l1.3-4.4l1.3,4.3l1.4-0.6l1.3-3.6l1.4,3.4l1.3,1.1l1.3-2.5l1.4,3.5l1.3-1.1l1.4-2.9l1.3,3.6l1.3-0.2l1.4-3.9l1.3,4.9l1.4-0.1l1.3-4.8l1.3,5.5l1.4-0.9l1.3-4.4l1.4,2l1.3,1.3l1.3-4.7l1.4,4.9l1.3,0.8l1.4-5.7l1.3,4.6l1.3,0.9l1.4-3.9l1.3,3.1l1.4,0.6l1.3-5.1l1.3,3.5l1.4,0.7l1.3-4.1l1.4,4.9l1.3-0.4L337.0,1221.0L337.0,1243.3L89.1,1243.3L89.1,1217.5Z" fill="#F2CC0C" stroke="#F2CC0C" stroke-width="1.0"/>
<path d="M91.1,1218.8l1.3,3.8l1.4-1.5l1.3-3.3l1.4,5.8l1.3-1.2l1.3-3.8l1.4,3.6l1.3,0.2l1.4-5.6l1.3,5.4l1.3-0.5l1.4-2.4l1.3,3.6l1.4-1.6l1.3-3l1.3,4.5l1.4-0.5l1.3-3.8l1.4,4.9l1.3,1.3l1.3-5.9l1.4,5.1l1.3-0.7l1.4-3.4l1.3,3.2l1.3-1l1.4-2.5l1.3,3.8l1.4,0.6l1.3-5.9l1.3,4.7l1.4,0.8l1.3-4.5l1.4,3.1l1.3,0.2l1.3-3.4l1.4,2.1l1.3,0.5l1.4-4.2l1.3,3.7l1.3-0.4l1.4-3.2l1.3,3.2l1.4,0.5l1.3-4.4l1.3,4.8l1.4,0.4l1.3-5l1.4,4.5l1.3-1.2l1.3-5l1.4,4.5l1.3,1.4l1.4-4.7l1.3,5l1.3,1.7l1.4-5.7l1.3,5.2l1.4,0.1l1.3-4.8l1.3,5.4l1.4-0.8l1.3-4.5l1.4,4l1.3,0.4l1.3-3.9l1.4,3.1l1.3,0.7l1.4-4.4l1.3,4.2l1.3,1.1l1.4-4.7l1.3,3.1l1.4,0.7l1.3-4.1l1.3,3.7l1.4,0.8l1.3-3.9l1.4,4.1l1.3-0.3l1.3-3.4l1.4,3.8l1.3-0.9l1.4-6l1.3,5.6l1.3,0.5l1.4-4.5l1.3,5.2l1.4-1.5l1.3-3.3l1.3,4.1l1.4-1.5l1.3-1.6l1.4,3.8l1.3-0.2l1.4-5.4l1.3,5.6l1.3-1.5l1.4-3.1l1.3,4l1.4-0.3l1.3-4.3l1.3,3.8l1.4,1.6l1.3-6l1.4,5.9l1.3-0.3l1.3-4.3l1.4,3.1l1.3,1.5l1.4-4l1.3,3.2l1.3-0.4l1.4-3.3l1.3,2.9l1.4,1.2l1.3-4.7l1.3,3.8l1.4,1.1l1.3-6.2l1.4,5.9l1.3-0.5l1.3-3.2l1.4,3.9l1.3-2.3l1.4-2.1l1.3,3.1l1.3-0.8l1.4-2.2l1.3,3.7l1.4,0l1.3-4.2l1.3,4.6l1.4,0l1.3-3.7l1.4,4.4l1.3-1l1.3-4.7l1.4,5.5l1.3-1.6l1.4-4.5l1.3,5.2l1.3,1.4l1.4-5.2l1.3,3.2l1.4,0.2l1.3-3.9l1.3,3.9l1.4-0.8l1.3-3l1.4,2.8l1.3,1.2l1.3-2.1l1.4,3.1l1.3-1l1.4-2.6l1.3,3.2l1.3-0.3l1.4-3.4l1.3,4.5l1.4-0.1l1.3-4.5l1.3,5.3l1.4-0.9l1.3-4.2l1.4,1.9l1.3,1.3l1.3-4.5l1.4,4.5l1.3,0.8l1.4-5.4l1.3,4.3l1.3,0.9l1.4-3.7l1.3,2.9l1.4,0.6l1.3-4.8l1.3,3.3l1.4,0.4l1.3-3.6l1.4,4.7l1.3-0.4L337.0,1222.1L337.0,1243.3L89.1,1243.3L89.1,1218.8Z" fill="#37872D" stroke="#37872D" stroke-width="1.0"/>
<path d="M91.1,1221.5l1.3,3.4l1.4-1.3l1.3-2.8l1.4,4.6l1.3-0.4l1.3-3.2l1.4,2.7l1.3,0.3l1.4-4.8l1.3,4.6l1.3-0.5l1.4-1.5l1.3,2.5l1.4-1.4l1.3-2.3l1.3,3.6l1.4-0.4l1.3-3.3l1.4,4.1l1.3,1.2l1.3-4.6l1.4,3.9l1.3-0.6l1.4-3l1.3,3.1l1.3-0.7l1.4-2.2l1.3,3l1.4,0.1l1.3-4.6l1.3,4l1.4,0.9l1.3-3.8l1.4,2.5l1.3-0.2l1.3-2.3l1.4,1.3l1.3,0.3l1.4-3.6l1.3,3.4l1.3-0.7l1.4-2.6l1.3,3l1.4,0.4l1.3-3.4l1.3,3.9l1.4,0.4l1.3-4.6l1.4,3.8l1.3-0.9l1.3-4.3l1.4,3.6l1.3,1.5l1.4-3.9l1.3,3.9l1.3,1.7l1.4-4.8l1.3,4.2l1.4,0.4l1.3-3.9l1.3,4.4l1.4-0.9l1.3-3.7l1.4,3.2l1.3,0.6l1.3-3l1.4,2l1.3,0.9l1.4-3.6l1.3,3.4l1.3,0.9l1.4-4.3l1.3,2.8l1.4,0.7l1.3-3.3l1.3,2.5l1.4,1.1l1.3-3.6l1.4,3.7l1.3-0.1l1.3-2.9l1.4,3.3l1.3-1.2l1.4-4.3l1.3,4.3l1.3,0l1.4-3.6l1.3,4.8l1.4-1.8l1.3-2.1l1.3,3l1.4-0.9l1.3-1.5l1.4,3.3l1.3-0.5l1.4-4.4l1.3,4.5l1.3-1l1.4-2.7l1.3,3.4l1.4,0l1.3-3.7l1.3,2.8l1.4,1.8l1.3-5l1.4,4.7l1.3-0.7l1.3-3.3l1.4,2.6l1.3,1.2l1.4-2.9l1.3,2l1.3-0.2l1.4-2.4l1.3,2.1l1.4,1.3l1.3-4l1.3,3.3l1.4,0.8l1.3-5.2l1.4,5l1.3-0.5l1.3-2.5l1.4,2.8l1.3-1.6l1.4-1.6l1.3,2.4l1.3-0.6l1.4-1.8l1.3,3.3l1.4-0.5l1.3-3l1.3,3.3l1.4,0.3l1.3-3.4l1.4,4.1l1.3-0.8l1.3-4.1l1.4,4.6l1.3-1.6l1.4-3.6l1.3,4.6l1.3,1.1l1.4-4.4l1.3,2.6l1.4,0.2l1.3-3l1.3,2.8l1.4-0.6l1.3-2.3l1.4,2.3l1.3,1.1l1.3-1.8l1.4,2.5l1.3-1.1l1.4-2.1l1.3,2.6l1.3,0.2l1.4-2.9l1.3,3.6l1.4,0.2l1.3-3.9l1.3,4.3l1.4-0.6l1.3-3l1.4,0.6l1.3,1.4l1.3-3.4l1.4,3.4l1.3,0.5l1.4-4.6l1.3,3.7l1.3,1.3l1.4-3.5l1.3,2.5l1.4,0.5l1.3-3.9l1.3,2.8l1.4-0.2l1.3-2.1l1.4,3.4l1.3-0.5L337.0,1224.3L337.0,1243.3L89.1,1243.3L89.1,1221.5Z" fill="#705DA0" stroke="#705DA0" stroke-width="1.0"/>
<path d="M91.1,1223.8l1.3,3l1.4-1.3l1.3-1.8l1.4,3.6l1.3-0.4l1.3-2.9l1.4,2.1l1.3,0.6l1.4-4.2l1.3,3.9l1.3-0.6l1.4-0.7l1.3,1.9l1.4-1.2l1.3-2l1.3,3l1.4-0.5l1.3-2.5l1.4,3.5l1.3,0.7l1.3-3.3l1.4,3l1.3-0.7l1.4-2.4l1.3,2.3l1.3-0.4l1.4-1.6l1.3,2.5l1.4,0.1l1.3-4.3l1.3,3.5l1.4,0.9l1.3-3.3l1.4,2l1.3-0.2l1.3-1.7l1.4,0.9l1.3,0.7l1.4-3.3l1.3,2.8l1.3-0.9l1.4-1.8l1.3,2.4l1.4,0.4l1.3-2.7l1.3,2.9l1.4,0.6l1.3-4l1.4,3.3l1.3-0.8l1.3-3.8l1.4,3.3l1.3,1.1l1.4-3.3l1.3,3.3l1.3,2l1.4-4.6l1.3,3.6l1.4,0.3l1.3-3.1l1.3,3.5l1.4-0.9l1.3-2.8l1.4,2.7l1.3,0.6l1.3-2.6l1.4,1.5l1.3,0.8l1.4-2.8l1.3,2.5l1.3,0.6l1.4-3.1l1.3,2.1l1.4,0.5l1.3-2.8l1.3,2.1l1.4,1.3l1.3-3.4l1.4,3.3l1.3-0.1l1.3-2l1.4,2.4l1.3-1l1.4-3.3l1.3,3.1l1.3,0l1.4-2.9l1.3,4.2l1.4-1.7l1.3-1.9l1.3,2.4l1.4-0.5l1.3-1l1.4,2.9l1.3-0.7l1.4-3.8l1.3,3.8l1.3-1l1.4-2l1.3,2.9l1.4-0.4l1.3-2.6l1.3,2.1l1.4,1.6l1.3-4.1l1.4,3.8l1.3-0.5l1.3-3l1.4,2.2l1.3,1.2l1.4-2.7l1.3,1.5l1.3,0.1l1.4-2l1.3,2l1.4,0.8l1.3-3.2l1.3,2.9l1.4,0.9l1.3-4.7l1.4,4.1l1.3-0.5l1.3-1.7l1.4,2l1.3-1.5l1.4-1.3l1.3,2l1.3-0.6l1.4-1l1.3,2.4l1.4-0.1l1.3-2.6l1.3,2.6l1.4,0.2l1.3-2.8l1.4,3.6l1.3-0.8l1.3-3.4l1.4,4.1l1.3-1.5l1.4-2.8l1.3,3.6l1.3,0.8l1.4-3.6l1.3,1.9l1.4,0.4l1.3-2.1l1.3,2.1l1.4-0.8l1.3-1.7l1.4,1.7l1.3,1l1.3-1.2l1.4,1.6l1.3-0.9l1.4-1.3l1.3,1.8l1.3,0.6l1.4-2.5l1.3,2.9l1.4,0.4l1.3-3.7l1.3,4l1.4-0.9l1.3-2.2l1.4,0.3l1.3,1.2l1.3-2.9l1.4,2.6l1.3,0.5l1.4-3.4l1.3,2.8l1.3,1.2l1.4-2.8l1.3,1.9l1.4,0.4l1.3-3.3l1.3,2.4l1.4-0.3l1.3-1.3l1.4,2.5l1.3-0.6L337.0,1226.0L337.0,1243.3L89.1,1243.3L89.1,1223.8Z" fill="#A352CC" stroke="#A352CC" stroke-width="1.0"/>
<path d="M91.1,1227.2l1.3,2l1.4-1.4l1.3-0.9l1.4,3l1.3-0.8l1.3-2.1l1.4,1.4l1.3,0.7l1.4-3l1.3,2.8l1.3-0.4l1.4-0.6l1.3,1.1l1.4-0.5l1.3-1.7l1.3,2.5l1.4-0.8l1.3-1.4l1.4,2.4l1.3,0.6l1.3-2.6l1.4,2.5l1.3-0.5l1.4-2.1l1.3,2.2l1.3-1l1.4-0.4l1.3,1.4l1.4,0.3l1.3-3.2l1.3,2.3l1.4,0.8l1.3-1.9l1.4,0.6l1.3,0l1.3-1.1l1.4,1l1.3-0.2l1.4-1.8l1.3,2l1.3-1.4l1.4-1.2l1.3,2.1l1.4,0.5l1.3-2.1l1.3,2l1.4,0.4l1.3-3.1l1.4,2.3l1.3-0.5l1.3-2.5l1.4,2.5l1.3,0.7l1.4-2l1.3,2.1l1.3,1.5l1.4-3.3l1.3,2.8l1.4,0.3l1.3-2.2l1.3,2.3l1.4-0.8l1.3-2.2l1.4,2.1l1.3,0.3l1.3-1.5l1.4,1.1l1.3,0.4l1.4-2.1l1.3,1.8l1.3,0.5l1.4-2.2l1.3,1.1l1.4,1l1.3-2.4l1.3,1.5l1.4,1.1l1.3-2.5l1.4,2.6l1.3-0.4l1.3-1.1l1.4,1.8l1.3-1.2l1.4-2.2l1.3,2.3l1.3-0.2l1.4-2l1.3,3.1l1.4-1.1l1.3-1.6l1.3,1.5l1.4-0.3l1.3,0l1.4,1.9l1.3-1l1.4-2.5l1.3,3.1l1.3-1.1l1.4-1.2l1.3,1.7l1.4-0.2l1.3-1.8l1.3,1.2l1.4,1.2l1.3-2.9l1.4,2.7l1.3-0.2l1.3-2.4l1.4,1.9l1.3,0.7l1.4-1.7l1.3,0.9l1.3-0.3l1.4-0.7l1.3,1.3l1.4,0.2l1.3-2l1.3,2.1l1.4,0.8l1.3-3.9l1.4,3l1.3-0.1l1.3-0.8l1.4,0.7l1.3-0.7l1.4-1.1l1.3,1.6l1.3-1.1l1.4-0.1l1.3,1.9l1.4-0.6l1.3-1.7l1.3,2l1.4,0l1.3-1.6l1.4,2.2l1.3-0.7l1.3-1.7l1.4,2.3l1.3-1.1l1.4-1.8l1.3,2.3l1.3,0.4l1.4-1.9l1.3,0.6l1.4,0.6l1.3-1.2l1.3,1.5l1.4-0.7l1.3-1.2l1.4,1.2l1.3,0.7l1.3-0.7l1.4,0.6l1.3-0.5l1.4-0.8l1.3,1.1l1.3,1l1.4-1.9l1.3,1.9l1.4,0.4l1.3-2.7l1.3,2.9l1.4-0.7l1.3-1.3l1.4-0.4l1.3,1.1l1.3-2l1.4,1.7l1.3,0.8l1.4-2.7l1.3,1.9l1.3,1.1l1.4-2.3l1.3,1.5l1.4,0.3l1.3-2.4l1.3,1.9l1.4-0.5l1.3-1l1.4,2.1l1.3-0.6L337.0,1228.5L337.0,1243.3L89.1,1243.3L89.1,1227.2Z" fill="#3274D9" stroke="#3274D9" stroke-width="1.0"/>
<path d="M91.1,1229.4l1.3,1.3l1.4-1.4l1.3-0.1l1.4,2.3l1.3-0.6l1.3-1.6l1.4,0.9l1.3,0.6l1.4-2.5l1.3,2.4l1.3-0.7l1.4,0l1.3,0.5l1.4-0.5l1.3-0.8l1.3,2l1.4-1.1l1.3-0.8l1.4,1.7l1.3,0.2l1.3-1.5l1.4,1.5l1.3-0.3l1.4-1.5l1.3,1.9l1.3-0.9l1.4,0l1.3,0.6l1.4,0.4l1.3-2.3l1.3,1.5l1.4,0.8l1.3-1.5l1.4,0.4l1.3-0.3l1.3-0.1l1.4,0.1l1.3,0l1.4-1.2l1.3,1.3l1.3-1.5l1.4-0.5l1.3,1.7l1.4,0.3l1.3-1.4l1.3,1.2l1.4,0.3l1.3-2l1.4,1.4l1.3-0.4l1.3-1.6l1.4,1.6l1.3,0.5l1.4-1.3l1.3,1.7l1.3,1.1l1.4-2.4l1.3,1.8l1.4,0.4l1.3-1.4l1.3,1.5l1.4-0.8l1.3-1.3l1.4,1.4l1.3,0.1l1.3-0.7l1.4,0.6l1.3,0.4l1.4-1.6l1.3,1.3l1.3,0.2l1.4-1.3l1.3,0.4l1.4,0.8l1.3-1.8l1.3,1.3l1.4,0.7l1.3-1.6l1.4,2l1.3-0.7l1.3-0.7l1.4,1.3l1.3-1.1l1.4-1.5l1.3,2l1.3-0.4l1.4-1.5l1.3,2.5l1.4-0.9l1.3-1.1l1.3,1l1.4-0.3l1.3,0.4l1.4,1.2l1.3-1l1.4-1.6l1.3,2.3l1.3-1.3l1.4-0.3l1.3,1.1l1.4-0.2l1.3-1.2l1.3,0.5l1.4,1.2l1.3-1.9l1.4,1.8l1.3-0.1l1.3-1.8l1.4,1.1l1.3,0.4l1.4-0.8l1.3,0.4l1.3-0.2l1.4-0.3l1.3,0.7l1.4,0.3l1.3-1.5l1.3,1.5l1.4,0.7l1.3-3.1l1.4,2.4l1.3-0.4l1.3-0.1l1.4,0.6l1.3-1l1.4-0.4l1.3,0.7l1.3-0.6l1.4-0.1l1.3,1.5l1.4-0.6l1.3-0.8l1.3,1l1.4,0.4l1.3-1.3l1.4,1.4l1.3-0.3l1.3-1.4l1.4,1.6l1.3-0.9l1.4-1.2l1.3,1.9l1.3,0.2l1.4-1.3l1.3,0.2l1.4,0.6l1.3-0.8l1.3,0.9l1.4-0.5l1.3-0.9l1.4,1l1.3,0.7l1.3-0.5l1.4,0.6l1.3-0.8l1.4-0.3l1.3,0.4l1.3,1l1.4-1.2l1.3,1.3l1.4,0.3l1.3-2l1.3,2.1l1.4-0.6l1.3-1l1.4-0.4l1.3,1l1.3-1.4l1.4,1.1l1.3,0.6l1.4-1.9l1.3,1.3l1.3,1l1.4-1.7l1.3,0.9l1.4,0.2l1.3-1.6l1.3,1.3l1.4-0.3l1.3-0.6l1.4,1.2l1.3-0.3L337.0,1230.3L337.0,1243.3L89.1,1243.3L89.1,1229.4Z" fill="#FA6400" stroke="#FA6400" stroke-width="1.0"/>
<path d="M91.1,1232.2l1.3,0.6l1.4-0.6l1.3-0.1l1.4,1.8l1.3-1l1.3-0.9l1.4,0.9l1.3,0.2l1.4-1.8l1.3,1.2l1.3,0.2l1.4,0.1l1.3,0.1l1.4-0.5l1.3-0.4l1.3,1.4l1.4-0.9l1.3-0.6l1.4,1.1l1.3,0.1l1.3-0.7l1.4,1.1l1.3-0.1l1.4-1.2l1.3,1.6l1.3-1l1.4,0l1.3,0.4l1.4,0.7l1.3-1.8l1.3,0.9l1.4,0.7l1.3-1.1l1.4-0.1l1.3,0.2l1.3-0.2l1.4,0.5l1.3-0.6l1.4-0.8l1.3,1.3l1.3-1l1.4-1.2l1.3,1.6l1.4,0.7l1.3-1.1l1.3,0.6l1.4,0.3l1.3-1.6l1.4,1.2l1.3-0.4l1.3-1.2l1.4,1l1.3,0.4l1.4-0.5l1.3,1l1.3,0.9l1.4-2l1.3,1.2l1.4,0.6l1.3-1.1l1.3,1.4l1.4-1l1.3-0.6l1.4,0.4l1.3,0.3l1.3-0.3l1.4,0l1.3,0.4l1.4-0.6l1.3,0.7l1.3,0.3l1.4-1.2l1.3,0.1l1.4,0.8l1.3-1.1l1.3,0.6l1.4,0.4l1.3-0.7l1.4,1.3l1.3-0.4l1.3-1.1l1.4,1.2l1.3-0.8l1.4-0.8l1.3,1.6l1.3-0.6l1.4-1l1.3,1.8l1.4-0.9l1.3-0.6l1.3,0.5l1.4,0.2l1.3-0.3l1.4,1.4l1.3-0.7l1.4-1.3l1.3,1.8l1.3-1.1l1.4,0l1.3,0.5l1.4-0.4l1.3-0.6l1.3,0.3l1.4,1.1l1.3-1.4l1.4,1.4l1.3-0.2l1.3-1.5l1.4,0.8l1.3,0.1l1.4-0.3l1.3,0.4l1.3-0.2l1.4-0.3l1.3,0.5l1.4,0.2l1.3-1l1.3,1.1l1.4,0.5l1.3-2.1l1.4,1.3l1.3,0.3l1.3-0.3l1.4,0.3l1.3-0.7l1.4-0.1l1.3,0.3l1.3-0.6l1.4,0.1l1.3,1.2l1.4-0.2l1.3-0.7l1.3,0.7l1.4,0.1l1.3-0.9l1.4,1.2l1.3-0.3l1.3-1.2l1.4,1.1l1.3-0.2l1.4-0.8l1.3,1l1.3,0.3l1.4-1.1l1.3,0.1l1.4,0.5l1.3-0.5l1.3,0.6l1.4-0.1l1.3-0.8l1.4,0.7l1.3,0.1l1.3,0.2l1.4,0.5l1.3-0.7l1.4-0.7l1.3,0.7l1.3,0.7l1.4-0.7l1.3,0.9l1.4-0.1l1.3-1.5l1.3,1.5l1.4-0.3l1.3-0.9l1.4-0.3l1.3,0.9l1.3-0.9l1.4,1l1.3,0.2l1.4-1.5l1.3,1.2l1.3,0.5l1.4-1.3l1.3,0.9l1.4-0.2l1.3-0.7l1.3,0.7l1.4,0l1.3-0.8l1.4,0.9l1.3-0.2L337.0,1232.7L337.0,1243.3L89.1,1243.3L89.1,1232.2Z" fill="#5794F2" stroke="#5794F2" stroke-width="1.0"/>
<path d="M91.1,1234.4l1.3,0.5l1.4-0.4l1.3-0.3l1.4,1.5l1.3-0.7l1.3-0.5l1.4,0.3l1.3,0.5l1.4-1.6l1.3,1.2l1.3-0.1l1.4,0l1.3,0l1.4-0.3l1.3-0.4l1.3,1.3l1.4-1.1l1.3-0.1l1.4,1l1.3-0.5l1.3,0.1l1.4,0.7l1.3-0.3l1.4-0.8l1.3,1l1.3-0.5l1.4,0l1.3,0.4l1.4,0.2l1.3-1.3l1.3,1l1.4,0.2l1.3-0.6l1.4-0.3l1.3,0.1l1.3,0l1.4,0.2l1.3-0.5l1.4-0.3l1.3,1l1.3-1l1.4-0.5l1.3,1.1l1.4,0.5l1.3-0.7l1.3,0.4l1.4,0.1l1.3-1l1.4,0.5l1.3-0.2l1.3-0.8l1.4,0.6l1.3,0.3l1.4-0.1l1.3,0.6l1.3,0.6l1.4-1.6l1.3,0.9l1.4,0.6l1.3-0.8l1.3,0.9l1.4-0.7l1.3-0.5l1.4,0.3l1.3,0.4l1.3-0.3l1.4-0.1l1.3,0.5l1.4-0.5l1.3,0.5l1.3,0.2l1.4-0.8l1.3,0l1.4,0.6l1.3-0.7l1.3,0.4l1.4,0.3l1.3-0.5l1.4,0.6l1.3,0.1l1.3-1l1.4,0.7l1.3-0.2l1.4-0.8l1.3,1.3l1.3-0.8l1.4-0.4l1.3,1.1l1.4-0.3l1.3-0.9l1.3,0.7l1.4,0l1.3,0l1.4,0.8l1.3-0.3l1.4-1.3l1.3,1.7l1.3-1.1l1.4,0.1l1.3,0.5l1.4-0.4l1.3-0.4l1.3,0l1.4,1.1l1.3-0.9l1.4,0.9l1.3-0.3l1.3-1.3l1.4,1l1.3-0.1l1.4-0.4l1.3,0.6l1.3-0.3l1.4-0.2l1.3,0.3l1.4,0.1l1.3-0.8l1.3,0.9l1.4,0.7l1.3-1.5l1.4,0.5l1.3,0.4l1.3-0.3l1.4,0.4l1.3-0.6l1.4,0l1.3,0.2l1.3-0.6l1.4,0.2l1.3,0.9l1.4,0l1.3-0.8l1.3,0.4l1.4,0.4l1.3-0.8l1.4,0.7l1.3,0.1l1.3-1.1l1.4,0.8l1.3,0.2l1.4-0.9l1.3,0.9l1.3,0.2l1.4-0.7l1.3,0.1l1.4,0l1.3-0.1l1.3,0.1l1.4,0.1l1.3-0.3l1.4,0.3l1.3,0.3l1.3,0l1.4,0.2l1.3-0.2l1.4-0.8l1.3,0.5l1.3,0.4l1.4-0.2l1.3,0.3l1.4,0.2l1.3-1.3l1.3,1l1.4-0.1l1.3-0.2l1.4-0.5l1.3,0.5l1.3-0.4l1.4,0.7l1.3,0.2l1.4-1.1l1.3,0.7l1.3,0.4l1.4-1l1.3,0.5l1.4,0.2l1.3-0.5l1.3,0.3l1.4,0l1.3-0.4l1.4,0.5l1.3,0.3L337.0,1235.2L337.0,1243.3L89.1,1243.3L89.1,1234.4Z" fill="#E0B400" stroke="#E0B400" stroke-width="1.0"/>
<path d="M91.1,1237.3l1.3,0l1.4,0l1.3,0.3l1.4,0.2l1.3-0.1l1.3-0.3l1.4,0.3l1.3-0.3l1.4-0.5l1.3,0.8l1.3-0.3l1.4,0.2l1.3-0.4l1.4,0.4l1.3-0.4l1.3,0.4l1.4-0.5l1.3,0.1l1.4,0.4l1.3-0.1l1.3,0.2l1.4,0.2l1.3-0.1l1.4-0.7l1.3,0.4l1.3-0.2l1.4,0.5l1.3-0.2l1.4,0.4l1.3-0.8l1.3,0.6l1.4,0.1l1.3-0.3l1.4-0.2l1.3,0.3l1.3-0.3l1.4,0.1l1.3-0.2l1.4-0.1l1.3,0.5l1.3-0.4l1.4-0.5l1.3,1.1l1.4-0.3l1.3,0l1.3-0.5l1.4,0.5l1.3-0.3l1.4-0.1l1.3-0.2l1.3-0.2l1.4,0.2l1.3,0.3l1.4-0.1l1.3,0.3l1.3,0.2l1.4-0.9l1.3,0.5l1.4,0.1l1.3,0.1l1.3,0.4l1.4-0.2l1.3-0.4l1.4,0.1l1.3,0.5l1.3,0l1.4-0.4l1.3,0l1.4,0l1.3,0.2l1.3-0.2l1.4,0l1.3-0.1l1.4,0.1l1.3,0l1.3-0.1l1.4,0.4l1.3-0.5l1.4,0.3l1.3,0l1.3-0.3l1.4-0.1l1.3,0.3l1.4-0.4l1.3,0.6l1.3-0.4l1.4-0.2l1.3,0.9l1.4-0.6l1.3-0.6l1.3,0.5l1.4-0.1l1.3,0.1l1.4,0.4l1.3,0l1.4-0.5l1.3,0.8l1.3-0.5l1.4-0.2l1.3,0.6l1.4-0.5l1.3-0.1l1.3-0.1l1.4,0.5l1.3-0.3l1.4,0.4l1.3-0.3l1.3-0.4l1.4,0.6l1.3,0l1.4-0.5l1.3,0.6l1.3-0.7l1.4,0.4l1.3,0.2l1.4-0.3l1.3-0.2l1.3,0.6l1.4,0.1l1.3-0.4l1.4-0.2l1.3,0.2l1.3,0.3l1.4-0.3l1.3-0.2l1.4-0.2l1.3,0.4l1.3-0.3l1.4,0l1.3,0.5l1.4-0.1l1.3-0.4l1.3,0.2l1.4,0.4l1.3-0.5l1.4,0.4l1.3,0l1.3-0.5l1.4,0.6l1.3-0.1l1.4-0.6l1.3,0.7l1.3-0.2l1.4-0.3l1.3,0.1l1.4,0.7l1.3-0.7l1.3-0.1l1.4,0.5l1.3-0.5l1.4,0.3l1.3,0.2l1.3-0.2l1.4,0l1.3,0l1.4-0.7l1.3,0.6l1.3,0.2l1.4,0l1.3-0.3l1.4,0.4l1.3-0.6l1.3,0.6l1.4-0.1l1.3,0l1.4-0.4l1.3,0.2l1.3-0.1l1.4,0.2l1.3,0.1l1.4-0.4l1.3,0.3l1.3,0.1l1.4-0.3l1.3,0.2l1.4,0l1.3,0.3l1.3-0.3l1.4,0.1l1.3-0.3l1.4,0.4l1.3,0L337.0,1237.8L337.0,1243.3L89.1,1243.3L89.1,1237.3Z" fill="#56A64B" stroke="#56A64B" stroke-width="1.0"/>
</g>
<rect x="29" y="1274.0" width="14" height="4" rx="2" fill="#56a64b"/>
<text x="51.40" y="1279.70" font-size="12.5" fill="#24292e" textLength="185.0" lengthAdjust="spacing">ruler-querier-b9b67fcf7-45pzl</text>
<rect x="29" y="1297.5" width="14" height="4" rx="2" fill="#e0b400"/>
<text x="51.40" y="1303.20" font-size="12.5" fill="#24292e" textLength="191.6" lengthAdjust="spacing">ruler-querier-b9b67fcf7-47m7k</text>
<rect x="29" y="1321.0" width="14" height="4" rx="2" fill="#5794f2"/>
<text x="51.40" y="1326.70" font-size="12.5" fill="#24292e" textLength="185.7" lengthAdjust="spacing">ruler-querier-b9b67fcf7-5zc8r</text>
<rect x="360.5" y="1086.5" width="335" height="257" fill="#ffffff" stroke="#e4e6e7" stroke-width="1" rx="2"/>
<text x="369.00" y="1107.70" font-size="14.5" fill="#24292e" textLength="143.3" lengthAdjust="spacing" stroke="#24292e" stroke-width="0.2">Transmit bandwidth</text>
<line x1="459.5" y1="1135.6" x2="459.5" y2="1245.2" stroke="#e6e7e8" stroke-width="1"/>
<text x="458.90" y="1258.90" font-size="12.3" fill="#24292e" textLength="30.0" lengthAdjust="spacing" text-anchor="middle">15:30</text>
<line x1="520.5" y1="1135.6" x2="520.5" y2="1245.2" stroke="#e6e7e8" stroke-width="1"/>
<text x="519.90" y="1258.90" font-size="12.3" fill="#24292e" textLength="30.0" lengthAdjust="spacing" text-anchor="middle">15:45</text>
<line x1="582.5" y1="1135.6" x2="582.5" y2="1245.2" stroke="#e6e7e8" stroke-width="1"/>
<text x="581.90" y="1258.90" font-size="12.3" fill="#24292e" textLength="30.0" lengthAdjust="spacing" text-anchor="middle">16:00</text>
<line x1="644.5" y1="1135.6" x2="644.5" y2="1245.2" stroke="#e6e7e8" stroke-width="1"/>
<text x="643.90" y="1258.90" font-size="12.3" fill="#24292e" textLength="30.0" lengthAdjust="spacing" text-anchor="middle">16:15</text>
<line x1="432.2" y1="1144.5" x2="679" y2="1144.5" stroke="#e6e7e8" stroke-width="1"/>
<text x="426.20" y="1148.00" font-size="12.3" fill="#24292e" textLength="54.6" lengthAdjust="spacing" text-anchor="end">100 MB/s</text>
<line x1="432.2" y1="1192.5" x2="679" y2="1192.5" stroke="#e6e7e8" stroke-width="1"/>
<text x="426.20" y="1196.20" font-size="12.3" fill="#24292e" textLength="47.4" lengthAdjust="spacing" text-anchor="end">50 MB/s</text>
<line x1="432.2" y1="1240.5" x2="679" y2="1240.5" stroke="#e6e7e8" stroke-width="1"/>
<text x="426.20" y="1244.40" font-size="12.3" fill="#24292e" textLength="29.4" lengthAdjust="spacing" text-anchor="end">0 B/s</text>
<clipPath id="c8"><rect x="432.2" y="1090.2" width="246.8" height="150.0"/></clipPath><g clip-path="url(#c8)">
<path d="M432.2,1166.3l2-2l2-2.8l2,2.6l2-4.7l2-2.6l2-2.5l2,7.3l2.1,1.3l2-7.1l2,8.9l2-3.6l2-5.9l2,0.9l2,6.7l2-9.9l2,10.7l2,3.4l2-8.5l2,13.7l2-7.8l2-1.9l2-2.1l2,2.4l2.1,7.8l2,0.5l2,3.4l2-12l2-2.1l2-1.3l2,10.3l2-11.7l2,8.9l2-1.2l2-1.3l2,3.2l2-3.1l2,6.5l2-8.5l2.1,3.1l2,5.4l2-10.5l2-0.2l2,8.4l2-3.5l2,3.1l2-9l2,2.9l2,8.4l2-11l2-1.3l2,6.3l2,0.8l2,1l2.1-7.1l2,7.1l2-5.7l2,8.7l2-1.2l2-7.6l2,3.2l2-3.5l2-0.5l2-2.1l2,11.1l2-3.4l2-6.6l2,0.9l2,2.7l2,6.5l2.1-11.2l2-1.1l2,4.9l2-1.9l2-0.3l2,8.7l2-9.9l2,2.5l2-1.4l2-3.6l2,2.1l2,0l2,7.4l2,4.4l2-1.9l2.1-7.5l2,7.2l2-7l2-1.3l2,8.4l2-6.9l2,3.5l2-5.4l2,8.4l2,1.5l2-10.6l2-0.2l2,7.6l2-6.7l2,8.8l2.1-8.4l2,7.6l2-8.6l2,6.9l2,1.7l2,2.4l2-10l2,9.9l2-12.7l2,4l2,5.8l2-9.8l2,0.4l2,9.9l2,4.8l2-2.7l2.1-4.9l2,0.1l2,5l2-10.7l2,7.3l2-10.1l2,3.5l2,1.7L681.0,1160.2L681.0,1243.2L430.2,1243.2L430.2,1166.3Z" fill="#E5AC0E" stroke="#E5AC0E" stroke-width="0.6"/>
<path d="M432.2,1170.2l2-1.4l2-3l2,2.1l2-4.5l2-2.1l2-2.6l2,7.2l2.1,0.5l2-6.1l2,8.5l2-3.9l2-5.4l2,0.9l2,6.2l2-9.2l2,9.7l2,3.6l2-7.3l2,12.2l2-7.3l2-1.8l2-2l2,2.7l2.1,6.9l2,0.9l2,2.7l2-10.9l2-2.3l2-1.2l2,9.9l2-11l2,7.9l2-1.1l2-0.4l2,2.6l2-3.1l2,6.5l2-8.3l2.1,2.4l2,5.8l2-10.1l2-0.1l2,7.8l2-3.3l2,3.3l2-8.9l2,2.7l2,8.2l2-10.7l2-0.7l2,5.5l2,0.9l2,0.7l2.1-6.8l2,7.3l2-5.5l2,8.3l2-1.2l2-7.7l2,3.3l2-3.8l2,0.2l2-2.5l2,11l2-3.1l2-6.6l2,0.9l2,3l2,5.3l2.1-10l2-1.1l2,4.8l2-2.5l2,0.3l2,8.4l2-9.2l2,1.7l2-1.2l2-2.9l2,1.2l2,0.3l2,7.1l2,4.2l2-2.2l2.1-6.4l2,6.7l2-6.3l2-2.1l2,8.2l2-6l2,3.3l2-5.6l2,7.5l2,2l2-10l2-0.2l2,7.4l2-6.1l2,7.7l2.1-8.1l2,7l2-7.9l2,7l2,1.8l2,1.9l2-9.6l2,9.4l2-11.7l2,3.3l2,5.6l2-9.3l2,0.4l2,9.9l2,3.8l2-1.4l2.1-5.6l2,0l2,4.7l2-9.7l2,6.7l2-9.2l2,2.7l2,1.3L681.0,1163.9L681.0,1243.2L430.2,1243.2L430.2,1170.2Z" fill="#629E51" stroke="#629E51" stroke-width="0.6"/>
<path d="M432.2,1174.1l2-0.6l2-3.2l2,2.2l2-4.4l2-2.2l2-3.2l2,6.8l2.1,0.7l2-5.4l2,8l2-3.6l2-5.2l2,1l2,5.9l2-9.1l2,9.1l2,2.8l2-5.8l2,11.1l2-7l2-1.1l2-2l2,2.7l2.1,6.4l2,0.3l2,2.9l2-10.4l2-1.5l2-1.5l2,9.1l2-10.1l2,7.2l2-1.1l2-0.3l2,2.6l2-3.1l2,5.8l2-7.3l2.1,2.1l2,5.2l2-9.5l2,0.1l2,7.4l2-3l2,2.9l2-8.3l2,2.4l2,8.1l2-10.3l2-0.5l2,5.4l2,0.4l2,0.2l2.1-5.8l2,7l2-5.4l2,8.1l2-1.9l2-7l2,3.5l2-3.5l2-0.3l2-2.1l2,10.2l2-3.1l2-5.8l2,0.7l2,3.1l2,5.1l2.1-9.3l2-1.1l2,4l2-1.8l2-0.6l2,8.5l2-8.4l2,1.5l2-1.2l2-2.5l2,0.5l2,0.7l2,6.4l2,4.5l2-2.4l2.1-6l2,6.6l2-6.3l2-2.2l2,7.8l2-5.7l2,3.5l2-5.2l2,6.6l2,1.5l2-9.2l2,0.1l2,6.5l2-5.9l2,7.7l2.1-8.1l2,7.3l2-7.7l2,6.8l2,2l2,1.2l2-9.4l2,9.5l2-11l2,2.6l2,5.6l2-8.7l2,0.4l2,9.1l2,4.8l2-2.3l2.1-5.1l2-0.2l2,3.7l2-7.9l2,4.9l2-7.3l2,1.7l2,1.3L681.0,1167.8L681.0,1243.2L430.2,1243.2L430.2,1174.1Z" fill="#AEA2E0" stroke="#AEA2E0" stroke-width="0.6"/>
<path d="M432.2,1177.6l2-0.6l2-3l2,2l2-4.2l2-2.2l2-3.2l2,6.4l2.1,0.8l2-4.7l2,7.2l2-3.4l2-4.8l2,1l2,5.6l2-8.3l2,7.7l2,3.1l2-5.4l2,10.1l2-5.8l2-1.6l2-2.1l2,3.1l2.1,5.3l2,0.8l2,2.6l2-9.7l2-1.3l2-1.4l2,8.7l2-9.2l2,6.2l2-1.2l2,0.1l2,2.1l2-2.6l2,4.3l2-5.7l2.1,1.9l2,4.8l2-9.2l2,0.5l2,6.4l2-1.6l2,2.3l2-8.2l2,2.7l2,7.4l2-10.2l2,0.1l2,4.3l2,1.1l2,0.3l2.1-5.5l2,6l2-4.7l2,7.6l2-2l2-7l2,3.4l2-3l2,0.2l2-1.6l2,9.2l2-3.5l2-5.2l2,0.9l2,3l2,4.7l2.1-8.9l2-0.8l2,4l2-2.2l2-0.5l2,8.1l2-8.3l2,1.1l2-0.5l2-2.8l2,1.1l2,0.3l2,6.5l2,3.7l2-1.8l2.1-6.4l2,7l2-6.4l2-1.9l2,7.3l2-5.1l2,3.1l2-5l2,6.3l2,1.9l2-9.5l2,0.7l2,5.6l2-5.1l2,7.7l2.1-8.6l2,6.5l2-6.7l2,6.3l2,2l2,1.2l2-9.1l2,9.7l2-10.6l2,2.5l2,5.7l2-9.3l2-0.1l2,9.9l2,4.3l2-2.3l2.1-5.3l2-0.2l2,4.1l2-7.8l2,4.1l2-6.5l2,2.1l2,1.3L681.0,1171.8L681.0,1243.2L430.2,1243.2L430.2,1177.6Z" fill="#E5A8E2" stroke="#E5A8E2" stroke-width="0.6"/>
<path d="M432.2,1181l2-0.8l2-2.9l2,2.1l2-3.8l2-2.5l2-2.9l2,6.1l2.1,0.9l2-4.2l2,6.4l2-2.7l2-5.2l2,1.2l2,4.7l2-7.4l2,7.5l2,3.4l2-5.7l2,9.4l2-5l2-1.8l2-2.1l2,3.4l2.1,4.9l2,0l2,3.1l2-9.3l2-1.5l2-1.5l2,8.7l2-8.8l2,5.7l2-1l2,0l2,2.1l2-1.9l2,3.5l2-4.8l2.1,1.7l2,4.4l2-9.2l2,0.7l2,5.8l2-1.2l2,2.1l2-7.7l2,2.6l2,7.1l2-10l2,0l2,4.1l2,1.5l2,0.1l2.1-5.1l2,5.8l2-4.5l2,6.7l2-1.7l2-6.7l2,3.3l2-2.7l2,0.3l2-1.2l2,8.1l2-3.3l2-4.6l2,0.8l2,2.4l2,4.9l2.1-8.5l2-0.8l2,3.7l2-1.8l2-0.6l2,7.6l2-8l2,0.7l2,0l2-2.8l2,1.3l2-0.1l2,6.5l2,3.6l2-2.1l2.1-5.6l2,6.3l2-6.2l2-1.6l2,7l2-5.1l2,3.3l2-4.9l2,5.7l2,1.6l2-8.5l2,0.6l2,5.3l2-4.4l2,6.2l2.1-7.1l2,6.1l2-7l2,6.6l2,1.3l2,1.3l2-8.5l2,9.8l2-10.6l2,2.4l2,5.6l2-9.2l2,0.4l2,9.5l2,3.8l2-2.6l2.1-4.4l2-0.4l2,3.9l2-7.2l2,3.6l2-6.5l2,2.6l2,0.9L681.0,1175.5L681.0,1243.2L430.2,1243.2L430.2,1181.0Z" fill="#82B5D8" stroke="#82B5D8" stroke-width="0.6"/>
<path d="M432.2,1184.3l2-0.7l2-3l2,2.1l2-3.8l2-2.4l2-2.6l2,5.4l2.1,1.2l2-4l2,6l2-2.3l2-4.8l2,0.9l2,5.1l2-7.4l2,7.2l2,3l2-5.1l2,8.8l2-5.1l2-1.6l2-1.1l2,2.4l2.1,4.8l2-0.2l2,3.2l2-9.3l2-1.3l2-1l2,8.1l2-9l2,5.9l2-1l2,0.2l2,1.9l2-1.7l2,3.2l2-4.4l2.1,1.3l2,4.2l2-8.8l2,0.5l2,6.2l2-1.1l2,1.8l2-7.6l2,2.5l2,6.7l2-9l2-0.1l2,4.1l2,0.7l2,0.3l2.1-5l2,5.3l2-3.8l2,6.3l2-1.7l2-6.7l2,3.6l2-2.6l2,0.6l2-1.3l2,7.2l2-2.7l2-4.5l2,1.2l2,2l2,4.5l2.1-8.1l2-1l2,4.2l2-1.3l2-1.8l2,7.6l2-7.6l2,0.6l2,0.4l2-2.7l2,1l2,0.5l2,5.6l2,3.3l2-1.8l2.1-5.6l2,6.6l2-6.2l2-1.7l2,6.7l2-4.9l2,3.2l2-5l2,5.8l2,1.4l2-7.9l2,0.8l2,4.8l2-4.3l2,5.7l2.1-6.6l2,5.9l2-6.6l2,6l2,1.2l2,1.5l2-7.7l2,9.5l2-10.4l2,1.8l2,5.9l2-9.4l2,0.4l2,9.4l2,3.3l2-2l2.1-4.4l2-0.2l2,3.2l2-6.3l2,3.3l2-6.4l2,2.9l2-0.2L681.0,1178.4L681.0,1243.2L430.2,1243.2L430.2,1184.3Z" fill="#F29191" stroke="#F29191" stroke-width="0.6"/>
<path d="M432.2,1187.6l2-0.4l2-3.2l2,2.4l2-4l2-1.9l2-2.3l2,3.9l2.1,1.9l2-3.8l2,6.1l2-2.6l2-3.7l2-0.4l2,5.3l2-7.2l2,7l2,2.6l2-4.8l2,8l2-4.2l2-2.1l2-1l2,2.8l2.1,4.4l2,0l2,2.6l2-8.3l2-1.3l2-1.2l2,7.7l2-8.4l2,5.8l2-1.3l2,0.4l2,1.5l2-0.8l2,2.4l2-4.1l2.1,0.9l2,3.9l2-7.9l2,0.4l2,5.9l2-1.3l2,1.9l2-7.4l2,2.7l2,6.3l2-8.1l2-0.7l2,4.3l2,0.1l2,0.4l2.1-4.6l2,5.4l2-3.8l2,5.9l2-1.7l2-6.6l2,4l2-2.3l2,0.2l2-1.3l2,6.9l2-2.7l2-4.2l2,1l2,2l2,4.1l2.1-7.3l2-1.2l2,3.9l2-1.2l2-2l2,8l2-7.4l2,0.6l2,0.1l2-2.2l2,0.8l2,0.7l2,4.9l2,3.2l2-1.9l2.1-5.2l2,6.4l2-5.6l2-1.7l2,6.1l2-4.3l2,1.8l2-4.1l2,5.7l2,1.6l2-7.8l2,0.8l2,4.3l2-4l2,6.1l2.1-6.4l2,5.4l2-6.6l2,5.7l2,1.3l2,1.4l2-7.4l2,9.1l2-10l2,1.6l2,5.9l2-9.4l2,0.9l2,9l2,2.8l2-2.2l2.1-3.5l2-0.3l2,2.9l2-6.2l2,2.8l2-5l2,2.2l2,0L681.0,1182.2L681.0,1243.2L430.2,1243.2L430.2,1187.6Z" fill="#F9BA8F" stroke="#F9BA8F" stroke-width="0.6"/>
<path d="M432.2,1190.8l2-0.1l2-3.1l2,2l2-3.3l2-2.4l2-1.9l2,3.5l2.1,2.2l2-3.8l2,5.9l2-2.4l2-4.1l2-0.2l2,5.2l2-6.5l2,6.5l2,2.8l2-5l2,7.6l2-4.1l2-2l2-1.1l2,2.9l2.1,4.1l2-0.2l2,2.8l2-8.4l2-0.6l2-1.2l2,7.3l2-8.2l2,5.4l2-0.8l2,0.1l2,1.9l2-1.5l2,2.5l2-3.9l2.1,0.9l2,3.6l2-7.4l2,0.8l2,5l2-0.8l2,1.2l2-6.7l2,3.1l2,5.7l2-7.7l2-0.5l2,3.9l2,0.2l2,0.6l2.1-4.9l2,5.2l2-3.3l2,5.6l2-1.8l2-5.9l2,3.2l2-2.4l2,1l2-1.6l2,6.3l2-2.5l2-3.9l2,1.2l2,2l2,3.7l2.1-6.9l2-1.2l2,3.9l2-1.9l2-1.7l2,7.8l2-7l2,0.4l2,0.5l2-2.5l2,1.1l2,0.6l2,4.6l2,2.8l2-1.6l2.1-4.5l2,5.8l2-5.2l2-1.9l2,5.4l2-3.6l2,1.6l2-3.4l2,5.2l2,1.4l2-7.8l2,1.1l2,3.9l2-3.7l2,5.5l2.1-5.5l2,4.9l2-6.1l2,4.7l2,1.4l2,2.7l2-8.2l2,9l2-9.5l2,1.1l2,6.3l2-9.4l2,0.9l2,9l2,2l2-2.1l2.1-3.1l2-0.6l2,3.1l2-5.8l2,2.5l2-4.4l2,2.1l2-0.3L681.0,1185.9L681.0,1243.2L430.2,1243.2L430.2,1190.8Z" fill="#70DBED" stroke="#70DBED" stroke-width="0.6"/>
<path d="M432.2,1194.5l2-0.3l2-3.1l2,2.1l2-3.3l2-2l2-1.5l2,2.9l2.1,2.5l2-4.5l2,5.8l2-2.1l2-3.9l2-0.1l2,4.6l2-5.7l2,6l2,2.6l2-5.1l2,7.6l2-3.8l2-2l2-1.2l2,3.2l2.1,3.3l2-0.2l2,3l2-7.9l2-0.5l2-1.5l2,6.7l2-7.7l2,5.2l2-0.4l2,0l2,1.1l2-0.6l2,2.1l2-3.9l2.1,1.8l2,2.8l2-6.9l2,1.3l2,3.9l2-0.7l2,1.6l2-7.2l2,3.5l2,5.3l2-7l2-0.6l2,3.2l2,0.7l2,0.6l2.1-5l2,4.9l2-3l2,5.1l2-1.2l2-5.9l2,2.9l2-2.3l2,1.1l2-0.9l2,5.6l2-3l2-3.4l2,1.5l2,1.6l2,3.4l2.1-6.6l2-1.1l2,3.9l2-1.8l2-1.3l2,7l2-6.8l2,0.9l2,0.6l2-3l2,0.9l2,0.9l2,4l2,3.5l2-2.4l2.1-3.9l2,6l2-5l2-2.3l2,5.1l2-3.2l2,1.3l2-2.7l2,4.5l2,1.1l2-6.8l2,1l2,3.2l2-3l2,4.9l2.1-5.4l2,4.8l2-6l2,4.6l2,1.1l2,3.1l2-7.9l2,8.2l2-8.9l2,1.3l2,6.1l2-9.1l2,0.2l2,9.5l2,2.1l2-2l2.1-3.2l2-0.6l2,2.5l2-5.1l2,1.8l2-3.7l2,1.6l2,0.2L681.0,1189.7L681.0,1243.2L430.2,1243.2L430.2,1194.5Z" fill="#F4D598" stroke="#F4D598" stroke-width="0.6"/>
<path d="M432.2,1197.3l2,0.4l2-3l2,2.3l2-3.1l2-2.3l2-1.7l2,3.1l2.1,2.1l2-4.4l2,5.5l2-1.6l2-3.2l2-0.7l2,4.7l2-5.6l2,5.4l2,3.4l2-5.1l2,6.7l2-3.7l2-2.2l2-0.6l2,3l2.1,3.1l2-0.3l2,3l2-7.3l2-0.6l2-1.8l2,6.4l2-6.9l2,4.3l2,0.1l2,0l2,0.7l2-0.4l2,1.5l2-3.3l2.1,1.6l2,2.9l2-6.6l2,1.2l2,4l2-0.9l2,1.5l2-6.6l2,3.5l2,4.3l2-6l2-1.2l2,3.1l2,1.3l2,0.4l2.1-4.5l2,4.3l2-2.3l2,3.9l2-0.9l2-5.4l2,3.2l2-2.4l2,1.1l2-1.3l2,6l2-3.4l2-3.5l2,2.3l2,0.6l2,3.3l2.1-6.1l2-1.2l2,4.1l2-1.7l2-1.3l2,7l2-7.3l2,1.7l2-0.1l2-2.3l2,1.1l2,1l2,2.9l2,3.1l2-1.8l2.1-3.8l2,5.2l2-4.1l2-2.7l2,5.5l2-2.9l2,0.6l2-2.3l2,4l2,1.1l2-5.5l2,0l2,3.1l2-2.4l2,4.1l2.1-5.1l2,4.2l2-4.9l2,4.1l2,1l2,2.6l2-6.9l2,7.6l2-8.6l2,1l2,6.2l2-8.9l2,0.4l2,9l2,1.9l2-1.6l2.1-3.2l2-0.4l2,2.2l2-4.5l2,1l2-3.1l2,1.8l2-0.1L681.0,1193.4L681.0,1243.2L430.2,1243.2L430.2,1197.3Z" fill="#B7DBAB" stroke="#B7DBAB" stroke-width="0.6"/>
<path d="M432.2,1201.1l2,0.1l2-3.1l2,2.4l2-2.9l2-1.7l2-1.8l2,2.5l2.1,1.8l2-3.4l2,4.6l2-1.7l2-3l2-0.6l2,4.4l2-4.9l2,5l2,3.5l2-5.2l2,6.4l2-3l2-2.5l2-0.4l2,2.2l2.1,3l2-0.4l2,2.4l2-6.1l2-0.1l2-2.3l2,6.2l2-6.7l2,3.9l2,0.5l2-0.6l2,1.4l2-1.1l2,1.9l2-3.2l2.1,2.1l2,2.4l2-6.9l2,1l2,4.2l2-0.7l2,1.4l2-6.2l2,3.6l2,3.4l2-5.7l2-0.5l2,2.6l2,1.4l2,0.2l2.1-4l2,4.3l2-2.9l2,3.7l2-0.4l2-4.6l2,2.3l2-2.4l2,0.9l2-0.7l2,5.2l2-2.3l2-3.1l2,1.5l2,0.7l2,2.8l2.1-5.3l2-1.4l2,3.8l2-1.1l2-1.6l2,7l2-7.9l2,2l2-0.2l2-1.8l2,0.9l2,1.1l2,2.1l2,3.4l2-1.2l2.1-3.6l2,3.9l2-3.2l2-2.5l2,4.9l2-2.8l2,0.8l2-2.2l2,3.8l2,0.9l2-4.5l2-0.9l2,2.8l2-1.7l2,3.9l2.1-5.3l2,4.5l2-5.4l2,4.3l2,0.8l2,2.4l2-5.9l2,6.3l2-7.7l2,0.8l2,6.4l2-8.3l2,0.2l2,8.7l2,0.8l2-0.9l2.1-3.3l2-0.1l2,2.1l2-4.2l2,1.1l2-3.6l2,1.9l2-0.3L681.0,1196.6L681.0,1243.2L430.2,1243.2L430.2,1201.1Z" fill="#584477" stroke="#584477" stroke-width="0.6"/>
<path d="M432.2,1204l2-0.4l2-2.2l2,2.1l2-2.8l2-1.6l2-1.9l2,2.5l2.1,1.6l2-3l2,4.1l2-2.1l2-2.2l2-0.3l2,4.1l2-4.9l2,4.6l2,3.4l2-4.8l2,6.1l2-3.1l2-2.1l2-0.2l2,1.6l2.1,2.9l2-0.3l2,2.4l2-5.9l2-0.1l2-2.3l2,6.1l2-6.3l2,3.5l2,0.2l2-0.6l2,1.6l2-1.2l2,2l2-3.1l2.1,2.1l2,2.3l2-6.2l2,0.7l2,3.8l2-1l2,1.8l2-5.8l2,3.5l2,3.2l2-5.4l2-0.9l2,2.6l2,1.5l2,0.3l2.1-3.9l2,4l2-2.6l2,3.7l2-0.5l2-4.4l2,2l2-2.5l2,0.9l2-0.4l2,5l2-2.3l2-2.7l2,0.9l2,0.6l2,3.2l2.1-5.3l2-1.5l2,4.1l2-1.1l2-1l2,6.2l2-7.7l2,1.8l2-0.1l2-1.8l2,0.6l2,1.6l2,1.7l2,2.5l2-0.5l2.1-3.5l2,4.1l2-3.2l2-2.1l2,3.9l2-2.4l2,1l2-2.3l2,3.4l2,1l2-4.3l2-0.5l2,2.7l2-2.1l2,3.9l2.1-4.9l2,4.2l2-4.9l2,3.9l2,0.5l2,2.3l2-5.7l2,6.2l2-7.2l2,1l2,5.8l2-7.3l2-0.4l2,8.2l2,0.9l2-1.1l2.1-2.8l2-0.7l2,2.6l2-4l2,0.9l2-3.3l2,1.5l2-0.2L681.0,1199.5L681.0,1243.2L430.2,1243.2L430.2,1204.0Z" fill="#6D1F62" stroke="#6D1F62" stroke-width="0.6"/>
<path d="M432.2,1206.9l2-0.6l2-1.7l2,1.7l2-2.4l2-1.4l2-2.4l2,2.7l2.1,1.9l2-3.5l2,4.1l2-2.1l2-1.8l2-0.4l2,3.6l2-4.1l2,3.7l2,3.5l2-4.2l2,5.8l2-3.4l2-1.7l2-0.3l2,1.1l2.1,2.8l2-0.4l2,2.5l2-5.5l2,0.1l2-2l2,5.6l2-5.4l2,2.5l2,0.4l2-0.6l2,1.7l2-1.4l2,2l2-2.5l2.1,1.4l2,2.2l2-5.7l2,0.5l2,3.4l2-0.3l2,1.3l2-5.1l2,2.9l2,3l2-4.8l2-1.1l2,2.2l2,1.6l2,0.5l2.1-3.8l2,3.8l2-2.8l2,3.7l2-0.4l2-4.1l2,1.7l2-2.3l2,1.1l2-0.1l2,4l2-2l2-2.1l2,0.6l2,0.5l2,2.9l2.1-4.8l2-1.5l2,3.4l2-0.6l2-1.3l2,6.7l2-7.5l2,1.4l2,0.3l2-1.4l2-0.1l2,2l2,1.2l2,2.3l2-0.7l2.1-3.1l2,3.8l2-3.4l2-1.4l2,3.6l2-2l2,0.5l2-1.2l2,2l2,1.2l2-3.7l2-0.1l2,1.6l2-1.1l2,2.9l2.1-4l2,3.6l2-4.2l2,3.6l2-0.1l2,3.2l2-6.4l2,6.1l2-6.3l2,0.3l2,5.6l2-6.8l2-0.4l2,7.8l2,0.7l2-0.9l2.1-2.4l2-0.6l2,2.1l2-4l2,1l2-3.1l2,1.8l2-1L681.0,1202.1L681.0,1243.2L430.2,1243.2L430.2,1206.9Z" fill="#0A437C" stroke="#0A437C" stroke-width="0.6"/>
<path d="M432.2,1209.5l2-0.8l2-1.4l2,2l2-2.6l2-1.1l2-2.5l2,3.2l2.1,0.8l2-2.7l2,3.7l2-2l2-1.3l2-0.6l2,2.9l2-3.4l2,3.4l2,3.7l2-4.5l2,6l2-3.5l2-2.2l2,0.3l2,1l2.1,2.3l2,0l2,2.1l2-4.7l2-0.1l2-1.8l2,5.2l2-5l2,1.8l2,0.9l2-0.9l2,2.2l2-1.6l2,1.8l2-2.6l2.1,1.6l2,2l2-5.7l2,0.6l2,3.3l2-0.2l2,1.2l2-4.5l2,2.5l2,3l2-4.8l2-0.9l2,2l2,1l2,1l2.1-3.6l2,3.4l2-2.9l2,3.8l2-0.7l2-3.1l2,1.1l2-2.4l2,1.4l2,0.3l2,3.3l2-1.8l2-1.8l2,0.5l2,0.1l2,3.1l2.1-4.7l2-0.5l2,2.4l2-0.5l2-0.9l2,5.9l2-7l2,1.1l2,0.9l2-1.9l2,0.2l2,2.2l2,0.5l2,2.3l2-0.5l2.1-2.8l2,3.1l2-2.9l2-1.6l2,3.4l2-1.7l2,0.7l2-0.9l2,2l2,0.5l2-3.5l2-0.2l2,1.9l2-1.5l2,2.9l2.1-3.7l2,3.8l2-4.6l2,3.9l2-0.2l2,2.9l2-5.9l2,5.3l2-5.6l2,0.2l2,4.8l2-5.8l2-0.4l2,6.9l2,0.7l2-0.6l2.1-2.2l2-0.5l2,1.7l2-3.6l2,1.1l2-3l2,1.8l2-1.1L681.0,1205.1L681.0,1243.2L430.2,1243.2L430.2,1209.5Z" fill="#C15C17" stroke="#C15C17" stroke-width="0.6"/>
<path d="M432.2,1212.2l2-0.7l2-1.1l2,1.5l2-2l2-1.2l2-1.8l2,2.2l2.1,1.2l2-2.6l2,2.9l2-1.2l2-1.6l2-1l2,3.4l2-3.1l2,2.9l2,3.6l2-3.9l2,5.3l2-3.5l2-1.8l2-0.1l2,1.1l2.1,1.9l2-0.4l2,2.4l2-3.8l2-0.5l2-1.7l2,4.8l2-4.2l2,1.2l2,1.1l2-1l2,1.7l2-1.2l2,2l2-2.5l2.1,1.7l2,0.9l2-4.4l2,0.2l2,3.7l2-0.9l2,1.3l2-4.1l2,2.1l2,3.1l2-4.7l2-0.4l2,1.6l2,1l2,0.6l2.1-3.1l2,3.1l2-3.1l2,3.8l2-0.4l2-3.2l2,1.5l2-2.7l2,1.6l2,0l2,3.3l2-1.7l2-1.3l2,0.4l2,0.1l2,2.6l2.1-4.7l2,0.2l2,1.5l2,0l2-0.8l2,5.5l2-6.3l2,0.7l2,0.4l2-1.5l2,0.4l2,2l2,0.7l2,1.7l2-0.7l2.1-2.1l2,2.5l2-2l2-1.9l2,2.8l2-0.9l2,0.8l2-1.7l2,2.4l2,0.4l2-3.3l2-0.1l2,1.6l2-1.5l2,3.1l2.1-4l2,4.2l2-4.4l2,3.1l2,0l2,3.1l2-6l2,5l2-5.2l2,0.6l2,4.1l2-5.3l2-0.3l2,6.3l2,0.5l2-0.7l2.1-1.9l2-0.5l2,1.4l2-3.1l2,1.1l2-2.7l2,1.5l2-1.2L681.0,1207.9L681.0,1243.2L430.2,1243.2L430.2,1212.2Z" fill="#447EBC" stroke="#447EBC" stroke-width="0.6"/>
<path d="M432.2,1215l2-0.9l2-0.6l2,1.1l2-2.2l2-0.4l2-1.8l2,2.1l2.1,0.9l2-2.3l2,2.8l2-1.3l2-1.3l2-0.4l2,2.3l2-2.6l2,2.8l2,3l2-3.8l2,4.9l2-2.8l2-1.7l2-0.1l2,0.6l2.1,2.1l2-0.3l2,2l2-3.4l2-0.3l2-1.7l2,4.5l2-4.1l2,1l2,1l2-0.8l2,1.7l2-1.2l2,1.9l2-2.6l2.1,2.2l2,0.3l2-3.8l2,0.4l2,3l2-0.4l2,0.9l2-3.8l2,2.2l2,2.4l2-3.9l2-0.5l2,1.5l2,0.8l2,0.5l2.1-2.6l2,2.7l2-3.1l2,3.7l2,0l2-3.3l2,1.1l2-2.1l2,1l2,0l2,3.4l2-1.5l2-1.1l2,0.1l2,0.2l2,2.1l2.1-4l2-0.1l2,1.6l2,0.2l2-1.2l2,5.4l2-5.6l2,0.8l2-0.3l2-1l2,0.1l2,1.8l2,1.1l2,1.5l2-1l2.1-1.6l2,2.3l2-1.9l2-1.4l2,2.3l2-1.5l2,1.2l2-1.6l2,2.2l2,0.5l2-3.3l2-0.1l2,1.9l2-1.3l2,2.5l2.1-3.4l2,3.8l2-3.9l2,2.2l2,0.4l2,2.8l2-5.2l2,4.3l2-5.3l2,1l2,3.5l2-4.6l2-0.3l2,5.9l2,0.1l2-0.5l2.1-1.7l2-0.3l2,1.5l2-2.8l2,0.6l2-2l2,0.8l2-0.8L681.0,1211.1L681.0,1243.2L430.2,1243.2L430.2,1215.0Z" fill="#37872D" stroke="#37872D" stroke-width="0.6"/>
<path d="M432.2,1218.6l2-1.1l2-0.5l2,1.3l2-1.8l2-0.6l2-1.4l2,1.5l2.1,0.9l2-2.6l2,2.5l2-0.8l2-1.4l2-0.3l2,2.3l2-2.6l2,2.7l2,2.4l2-3.2l2,4.8l2-2.7l2-1.7l2,0.4l2,0.5l2.1,1.1l2,0.2l2,1.5l2-2.7l2-0.3l2-1.4l2,3.6l2-3.3l2,0.7l2,1l2-1l2,1.9l2-1.4l2,2.1l2-2.5l2.1,1.7l2,0.5l2-3.5l2,0.3l2,2.6l2-0.2l2,0.5l2-2.6l2,1.3l2,2.2l2-3l2-0.5l2,1.2l2,1l2,0l2.1-2.3l2,2.7l2-2.9l2,3.1l2-0.3l2-2.1l2,0.6l2-2.4l2,1.6l2-0.6l2,3.2l2-1.6l2-0.5l2-0.2l2,0.3l2,2.2l2.1-3.7l2,0l2,1.5l2,0.1l2-1.2l2,5.1l2-4.8l2,0.6l2-0.2l2-1.1l2,0.2l2,1l2,1.5l2,1.1l2-0.9l2.1-1.5l2,2l2-1.4l2-1.2l2,1.3l2-0.6l2,0.6l2-1.5l2,2.3l2,0.4l2-3.1l2-0.1l2,1.8l2-1.1l2,1.9l2.1-2.9l2,3.6l2-3.4l2,1.5l2,0.7l2,2.5l2-3.9l2,2.9l2-4.7l2,1.2l2,2.8l2-3.7l2-0.1l2,4.8l2,0.3l2-0.7l2.1-1.2l2,0.1l2,1.1l2-3l2,1l2-1.7l2,0.5l2-1.1L681.0,1214.6L681.0,1243.2L430.2,1243.2L430.2,1218.6Z" fill="#705DA0" stroke="#705DA0" stroke-width="0.6"/>
<path d="M432.2,1221.2l2-0.7l2-0.9l2,1.3l2-1l2-1.4l2-0.7l2,0.8l2.1,1.2l2-2.4l2,2.7l2-1.3l2-1l2-0.2l2,1.8l2-2.4l2,2.5l2,2.4l2-2.8l2,4l2-2.3l2-1.5l2,0.3l2,0.5l2.1,0.9l2,0l2,1.4l2-2.1l2-0.5l2-0.9l2,3l2-3.2l2,0.7l2,1.1l2-1l2,1.9l2-1.5l2,1.8l2-2.2l2.1,1.6l2,0.3l2-2.9l2,0.2l2,2.2l2-0.2l2,0.7l2-2.5l2,1.1l2,2.2l2-2.7l2-0.7l2,1.4l2,1l2-0.2l2.1-2l2,2.5l2-2.8l2,3.1l2-0.2l2-2.1l2,0.4l2-2l2,1.3l2-0.7l2,3.3l2-2.1l2,0.6l2-0.6l2,0.1l2,1.9l2.1-3l2-0.4l2,1.2l2,0.3l2-1l2,4.5l2-4.2l2,0.6l2-0.5l2-0.4l2-0.5l2,0.9l2,1.7l2,0.9l2-0.8l2.1-1.5l2,1.7l2-1.1l2-1.2l2,1.5l2-0.7l2,0.7l2-1.3l2,2.1l2,0.3l2-2.8l2-0.1l2,1.2l2-0.6l2,1.1l2.1-2.1l2,3.1l2-2.9l2,1.4l2,0.1l2,2.6l2-3.3l2,2.5l2-4.3l2,0.9l2,2.8l2-3.7l2-0.2l2,5l2-0.3l2-0.4l2.1-1.2l2,0.1l2,1.1l2-2.6l2,1.1l2-1.4l2,0.2l2-1L681.0,1217.8L681.0,1243.2L430.2,1243.2L430.2,1221.2Z" fill="#A352CC" stroke="#A352CC" stroke-width="0.6"/>
<path d="M432.2,1224.2l2-0.4l2-0.5l2,0.9l2-0.8l2-1l2-0.2l2-0.2l2.1,1.6l2-2.2l2,1.4l2-0.6l2-0.6l2,0l2,1.3l2-2l2,2.2l2,1.9l2-2.5l2,3.4l2-1.7l2-1.4l2,0.3l2,0.3l2.1,1l2-0.1l2,1.5l2-1.8l2-0.5l2-0.8l2,2.7l2-3.1l2,0.7l2,1.3l2-1l2,1.3l2-1.2l2,1.6l2-1.9l2.1,1.7l2-0.2l2-2.5l2,0.7l2,1.5l2-0.2l2,0.7l2-2.3l2,1.1l2,1.7l2-2.6l2-0.2l2,0.7l2,1.5l2-0.6l2.1-1l2,1.9l2-2.5l2,2.5l2,0l2-2.3l2,0.3l2-1.5l2,1.4l2-0.7l2,2.5l2-1.6l2,0.8l2-0.9l2,0.5l2,1.4l2.1-2.2l2-0.4l2,0.9l2,0.4l2-1.4l2,4.1l2-3.9l2,1.7l2-1.5l2-0.2l2-0.4l2,0.9l2,1.2l2,0.4l2-0.4l2.1-1.3l2,1.7l2-1l2-1.1l2,1.4l2-0.5l2,0.7l2-1.3l2,1.9l2-0.1l2-1.9l2-0.4l2,1.1l2-0.4l2,0.7l2.1-1.6l2,2.5l2-2.1l2,1l2,0l2,2.1l2-3l2,2.3l2-3.7l2,1l2,2.2l2-2.8l2-0.6l2,4.1l2,0l2-0.9l2.1-0.4l2,0.1l2,0.8l2-2l2,0.8l2-1.2l2,0.7l2-1.1L681.0,1221.8L681.0,1243.2L430.2,1243.2L430.2,1224.2Z" fill="#3274D9" stroke="#3274D9" stroke-width="0.6"/>
<path d="M432.2,1227.2l2-0.5l2-0.8l2,1l2-0.5l2-0.8l2,0l2-1l2.1,2l2-1.5l2,0.7l2-0.4l2-0.6l2,0.1l2,1.2l2-2l2,2.1l2,1.4l2-2l2,3.1l2-1.8l2-0.9l2-0.1l2,0.2l2.1,0.9l2,0.3l2,1.1l2-1.2l2-0.9l2-0.6l2,2.1l2-2.6l2,0.8l2,1.1l2-0.7l2,0.8l2-0.9l2,1.6l2-2l2.1,1.5l2,0.2l2-2.4l2,0.2l2,1.7l2-0.4l2,1.2l2-2.5l2,1.1l2,1.3l2-2.3l2-0.1l2,0.3l2,1.5l2-0.7l2.1-0.6l2,1.6l2-2.1l2,2.2l2-0.2l2-1.5l2,0l2-1.5l2,1.4l2-0.2l2,1.9l2-1.5l2,0.4l2-0.6l2,0.1l2,1.7l2.1-1.7l2-0.6l2,1l2,0.2l2-1l2,3.1l2-3.2l2,1.9l2-1.6l2-0.2l2,0.1l2,0.3l2,0.9l2-0.2l2,0.7l2.1-1.6l2,1.2l2-0.2l2-1l2,0.9l2-0.6l2,0.9l2-1.3l2,1.5l2,0.4l2-2.4l2,0.3l2,0.7l2,0.4l2,0l2.1-1.8l2,2.4l2-1.6l2,0.8l2,0l2,1.5l2-2.2l2,2.1l2-3.1l2,1l2,1.4l2-2l2-0.6l2,3.6l2-0.1l2-0.9l2.1-0.5l2,0l2,1.1l2-2l2,0.6l2-0.9l2,0.6l2-1.1L681.0,1224.8L681.0,1243.2L430.2,1243.2L430.2,1227.2Z" fill="#FA6400" stroke="#FA6400" stroke-width="0.6"/>
<path d="M432.2,1230.4l2,0.2l2-1l2,0.3l2-0.1l2-0.4l2-0.3l2-0.3l2.1,1l2-0.7l2,0.5l2-0.7l2-0.5l2,0.2l2,1l2-1.5l2,1.5l2,1l2-1.4l2,2.4l2-1.9l2-0.4l2-0.2l2,0.7l2.1,0.9l2,0.2l2,0.4l2-0.8l2-0.4l2-0.5l2,1.3l2-2l2,1l2,0.5l2-0.8l2,0.8l2-0.5l2,0.9l2-1.4l2.1,1.2l2,0.1l2-1.4l2-0.1l2,1.1l2-0.5l2,1.3l2-1.9l2,0.6l2,1.6l2-2.6l2,0.3l2,0.4l2,0.6l2,0.1l2.1-1l2,1.6l2-1.9l2,2.3l2-1.4l2-0.8l2,0.1l2-1l2,1.1l2,0.1l2,1.1l2-1.1l2,0.6l2-0.5l2,0.2l2,1.6l2.1-1.8l2-0.4l2,0.8l2,0.4l2-1l2,2.2l2-2.2l2,1.5l2-1.6l2-0.3l2,0.9l2-0.2l2,1l2-0.6l2,0.2l2.1-1.1l2,1.4l2-0.3l2-1.1l2,1l2-0.3l2,0.3l2-0.8l2,1.1l2-0.2l2-1.2l2-0.1l2,1l2,0.1l2-0.5l2.1-0.7l2,1.3l2-1l2,0.9l2-0.4l2,1.1l2-1.3l2,1.6l2-2.2l2,0.7l2,1.8l2-2.9l2-0.1l2,2.8l2,0.4l2-0.9l2.1-0.2l2-0.5l2,0.9l2-2l2,1.5l2-0.9l2,0.2l2-0.8L681.0,1228.7L681.0,1243.2L430.2,1243.2L430.2,1230.4Z" fill="#5794F2" stroke="#5794F2" stroke-width="0.6"/>
<path d="M432.2,1233.1l2,0.4l2-0.8l2,0.1l2-0.3l2-0.1l2,0l2-0.6l2.1,0.5l2-0.1l2,0.5l2-0.8l2-0.2l2,0.1l2,0.7l2-1l2,0.9l2,1l2-1.4l2,2.2l2-1.3l2-0.8l2-0.1l2,0.6l2.1,0.9l2-0.2l2,0.8l2-0.8l2-0.4l2-0.2l2,1l2-1.6l2,0.8l2,0.2l2-0.7l2,0.4l2,0.3l2,0.5l2-1.2l2.1,1.1l2-0.3l2-1l2,0.1l2,0.8l2-0.5l2,0.9l2-1.2l2,0.3l2,1.2l2-2.1l2,0l2,0.8l2,0.6l2-0.1l2.1-0.9l2,1.2l2-1.4l2,1.4l2-0.7l2-0.3l2-0.4l2-0.9l2,1.3l2,0.1l2,1l2-1.3l2,0.8l2-0.6l2,0.4l2,1.6l2.1-2l2-0.3l2,0.6l2,0.2l2-0.5l2,1.5l2-1.8l2,1.3l2-1.4l2,0.1l2,0.6l2-0.4l2,1.1l2-0.8l2,0.5l2.1-0.8l2,1l2-0.4l2-0.8l2,0.9l2-0.3l2-0.1l2,0l2,0.5l2-0.2l2-0.9l2,0.2l2,0.5l2,0.3l2-0.6l2.1,0.1l2,0.7l2-0.9l2,0.3l2,0.6l2,0l2-0.8l2,1.2l2-1.3l2,0.4l2,1.1l2-2.2l2-0.1l2,2.2l2,0.2l2-0.7l2.1,0.1l2-0.4l2,0.5l2-1.3l2,0.8l2-0.7l2,0.4l2-0.4L681.0,1232.1L681.0,1243.2L430.2,1243.2L430.2,1233.1Z" fill="#E0B400" stroke="#E0B400" stroke-width="0.6"/>
<path d="M432.2,1236.3l2,0.6l2-0.8l2,0.1l2-0.1l2,0l2-0.1l2-0.4l2.1,0.6l2-0.1l2,0.2l2-0.6l2,0.2l2-0.2l2,0.3l2-0.5l2,0.3l2,0.7l2-0.9l2,1.2l2-0.5l2-0.6l2,0.1l2,0.3l2.1,0.8l2-0.5l2,0.4l2-0.4l2-0.2l2-0.3l2,1.2l2-1.4l2,0.6l2,0.2l2-0.5l2,0.3l2,0.1l2,0.3l2-0.9l2.1,0.8l2,0l2-0.4l2-0.3l2,0.4l2,0l2-0.2l2-0.2l2,0.3l2,0.7l2-1.2l2,0l2,0.1l2,0.7l2-0.2l2.1-0.5l2,0.5l2-0.3l2,0.9l2-0.8l2-0.4l2,0.2l2-0.7l2,0.8l2-0.1l2,0.5l2-0.8l2,0.8l2-0.5l2,0.6l2,0.7l2.1-0.6l2-0.4l2-0.5l2,0.4l2-0.2l2,0.9l2-1.1l2,0.6l2-0.8l2,0.7l2-0.2l2-0.2l2,0.5l2-0.4l2,0.4l2.1,0.1l2,0.1l2-0.3l2-0.5l2,0.4l2-0.2l2,0.1l2,0.1l2,0.3l2-0.1l2-0.9l2,0.5l2,0.5l2-0.2l2-0.1l2.1-0.1l2,0.2l2,0.3l2-0.6l2,0.9l2-0.2l2-1.1l2,1.3l2-1l2,0.1l2,0.7l2-1.3l2,0l2,1.7l2-0.1l2-0.8l2.1,0.4l2-0.3l2,0.1l2-0.7l2,0.7l2-0.6l2,0.4l2-0.6L681.0,1235.5L681.0,1243.2L430.2,1243.2L430.2,1236.3Z" fill="#56A64B" stroke="#56A64B" stroke-width="0.6"/>
</g>
<rect x="373" y="1274.0" width="14" height="4" rx="2" fill="#56a64b"/>
<text x="395.40" y="1279.70" font-size="12.5" fill="#24292e" textLength="185.0" lengthAdjust="spacing">ruler-querier-b9b67fcf7-45pzl</text>
<rect x="373" y="1297.5" width="14" height="4" rx="2" fill="#e0b400"/>
<text x="395.40" y="1303.20" font-size="12.5" fill="#24292e" textLength="191.6" lengthAdjust="spacing">ruler-querier-b9b67fcf7-47m7k</text>
<rect x="373" y="1321.0" width="14" height="4" rx="2" fill="#5794f2"/>
<text x="395.40" y="1326.70" font-size="12.5" fill="#24292e" textLength="185.7" lengthAdjust="spacing">ruler-querier-b9b67fcf7-5zc8r</text>
<rect x="704.5" y="1086.5" width="335" height="257" fill="#ffffff" stroke="#e4e6e7" stroke-width="1" rx="2"/>
<text x="713.00" y="1107.70" font-size="14.5" fill="#24292e" textLength="189.7" lengthAdjust="spacing" stroke="#24292e" stroke-width="0.2">Inflight requests (per pod)</text>
<line x1="766.5" y1="1135.6" x2="766.5" y2="1295.4" stroke="#e6e7e8" stroke-width="1"/>
<text x="765.90" y="1309.10" font-size="12.3" fill="#24292e" textLength="30.0" lengthAdjust="spacing" text-anchor="middle">15:30</text>
<line x1="838.5" y1="1135.6" x2="838.5" y2="1295.4" stroke="#e6e7e8" stroke-width="1"/>
<text x="837.90" y="1309.10" font-size="12.3" fill="#24292e" textLength="30.0" lengthAdjust="spacing" text-anchor="middle">15:45</text>
<line x1="910.5" y1="1135.6" x2="910.5" y2="1295.4" stroke="#e6e7e8" stroke-width="1"/>
<text x="909.90" y="1309.10" font-size="12.3" fill="#24292e" textLength="30.0" lengthAdjust="spacing" text-anchor="middle">16:00</text>
<line x1="982.5" y1="1135.6" x2="982.5" y2="1295.4" stroke="#e6e7e8" stroke-width="1"/>
<text x="981.90" y="1309.10" font-size="12.3" fill="#24292e" textLength="30.0" lengthAdjust="spacing" text-anchor="middle">16:15</text>
<line x1="735.5" y1="1161.5" x2="1023" y2="1161.5" stroke="#e6e7e8" stroke-width="1"/>
<text x="729.50" y="1165.60" font-size="12.3" fill="#24292e" textLength="14.4" lengthAdjust="spacing" text-anchor="end">15</text>
<line x1="735.5" y1="1204.5" x2="1023" y2="1204.5" stroke="#e6e7e8" stroke-width="1"/>
<text x="729.50" y="1208.60" font-size="12.3" fill="#24292e" textLength="14.4" lengthAdjust="spacing" text-anchor="end">10</text>
<line x1="735.5" y1="1247.5" x2="1023" y2="1247.5" stroke="#e6e7e8" stroke-width="1"/>
<text x="729.50" y="1251.60" font-size="12.3" fill="#24292e" textLength="7.2" lengthAdjust="spacing" text-anchor="end">5</text>
<line x1="735.5" y1="1290.5" x2="1023" y2="1290.5" stroke="#e6e7e8" stroke-width="1"/>
<text x="729.50" y="1294.60" font-size="12.3" fill="#24292e" textLength="7.2" lengthAdjust="spacing" text-anchor="end">0</text>
<path d="M735.5,1230.2l1.7-77.4l1.7,94.6l1.7-86l1.7,25.8l1.7,60.2l1.7-94.6l1.7,103.2l1.7-103.2l1.7,94.6l1.7-77.4l1.7,60.2l1.7-77.4l1.7,94.6l1.7-43l1.7-17.2l1.7,60.2l1.7-68.8l1.7,34.4l1.7-25.8l1.7,60.2l1.7-68.8l1.7-17.2l1.7,0l1.7,86l1.7-77.4l1.7,94.6l1.7-103.2l1.7,8.6l1.7,68.8l1.7-60.2l1.7,43l1.7-60.2l1.7,94.6l1.7-94.6l1.7,103.2l1.7-86l1.7,68.8l1.7-94.6l1.7,68.8l1.7-60.2l1.7,77.4l1.7-77.4l1.8-8.6l1.7,111.8l1.7-25.8l1.7-77.4l1.7,0l1.7,77.4l1.7-51.6l1.7,51.6l1.7-77.4l1.7-8.6l1.7,86l1.7-8.6l1.7-68.8l1.7,94.6l1.7-77.4l1.7-25.8l1.7,111.8l1.7-86l1.7,25.8l1.7-34.4l1.7,8.6l1.7,34.4l1.7-34.4l1.7-17.2l1.7,103.2l1.7-111.8l1.7,86l1.7-51.6l1.7,60.2l1.7-68.8l1.7,77.4l1.7-103.2l1.7,34.4l1.7,34.4l1.7-51.6l1.7,68.8l1.7-86l1.7,86l1.7-86l1.7,51.6l1.7-43l1.7,77.4l1.7-86l1.7,94.6l1.7-68.8l1.7,43l1.7,8.6l1.7,34.4l1.7-103.2l1.7,68.8l1.7-68.8l1.7,43l1.7-51.6l1.7,77.4l1.7-60.2l1.7,34.4l1.7-25.8l1.7,68.8l1.7-94.6l1.7,25.8l1.7,43l1.7-51.6l1.7-8.6l1.7,86l1.7-94.6l1.7,68.8l1.7-68.8l1.7,86l1.7-77.4l1.7,103.2l1.7-111.8l1.7,86l1.7-86l1.7,68.8l1.7,25.8l1.7-60.2l1.7,60.2l1.7-94.6l1.7,34.4l1.7,68.8l1.7-103.2l1.7,103.2l1.7-94.6l1.7,0l1.8,43l1.7-51.6l1.7,68.8l1.7-60.2l1.7,77.4l1.7-77.4l1.7,94.6l1.7-43l1.7-60.2l1.7,77.4l1.7-77.4l1.7,60.2l1.7-60.2l1.7,94.6l1.7-86l1.7,43l1.7-34.4l1.7,0l1.7,77.4l1.7-94.6l1.7,77.4l1.7-43l1.7,25.8l1.7-51.6l1.7,43l1.7-51.6l1.7,111.8l1.7-111.8l1.7,77.4l1.7-77.4l1.7,86l1.7-60.2l1.7,34.4l1.7-43l1.7,60.2l1.7-43l1.7-17.2l1.7,34.4l1.7-17.2l1.7,60.2l1.7-68.8l1.7,86l1.7-77.4 L1023.0,1290.4 L735.5,1290.4 Z" fill="#e0b400" fill-opacity="0.01"/>
<path d="M735.5,1230.2l1.7-77.4l1.7,94.6l1.7-86l1.7,25.8l1.7,60.2l1.7-94.6l1.7,103.2l1.7-103.2l1.7,94.6l1.7-77.4l1.7,60.2l1.7-77.4l1.7,94.6l1.7-43l1.7-17.2l1.7,60.2l1.7-68.8l1.7,34.4l1.7-25.8l1.7,60.2l1.7-68.8l1.7-17.2l1.7,0l1.7,86l1.7-77.4l1.7,94.6l1.7-103.2l1.7,8.6l1.7,68.8l1.7-60.2l1.7,43l1.7-60.2l1.7,94.6l1.7-94.6l1.7,103.2l1.7-86l1.7,68.8l1.7-94.6l1.7,68.8l1.7-60.2l1.7,77.4l1.7-77.4l1.8-8.6l1.7,111.8l1.7-25.8l1.7-77.4l1.7,0l1.7,77.4l1.7-51.6l1.7,51.6l1.7-77.4l1.7-8.6l1.7,86l1.7-8.6l1.7-68.8l1.7,94.6l1.7-77.4l1.7-25.8l1.7,111.8l1.7-86l1.7,25.8l1.7-34.4l1.7,8.6l1.7,34.4l1.7-34.4l1.7-17.2l1.7,103.2l1.7-111.8l1.7,86l1.7-51.6l1.7,60.2l1.7-68.8l1.7,77.4l1.7-103.2l1.7,34.4l1.7,34.4l1.7-51.6l1.7,68.8l1.7-86l1.7,86l1.7-86l1.7,51.6l1.7-43l1.7,77.4l1.7-86l1.7,94.6l1.7-68.8l1.7,43l1.7,8.6l1.7,34.4l1.7-103.2l1.7,68.8l1.7-68.8l1.7,43l1.7-51.6l1.7,77.4l1.7-60.2l1.7,34.4l1.7-25.8l1.7,68.8l1.7-94.6l1.7,25.8l1.7,43l1.7-51.6l1.7-8.6l1.7,86l1.7-94.6l1.7,68.8l1.7-68.8l1.7,86l1.7-77.4l1.7,103.2l1.7-111.8l1.7,86l1.7-86l1.7,68.8l1.7,25.8l1.7-60.2l1.7,60.2l1.7-94.6l1.7,34.4l1.7,68.8l1.7-103.2l1.7,103.2l1.7-94.6l1.7,0l1.8,43l1.7-51.6l1.7,68.8l1.7-60.2l1.7,77.4l1.7-77.4l1.7,94.6l1.7-43l1.7-60.2l1.7,77.4l1.7-77.4l1.7,60.2l1.7-60.2l1.7,94.6l1.7-86l1.7,43l1.7-34.4l1.7,0l1.7,77.4l1.7-94.6l1.7,77.4l1.7-43l1.7,25.8l1.7-51.6l1.7,43l1.7-51.6l1.7,111.8l1.7-111.8l1.7,77.4l1.7-77.4l1.7,86l1.7-60.2l1.7,34.4l1.7-43l1.7,60.2l1.7-43l1.7-17.2l1.7,34.4l1.7-17.2l1.7,60.2l1.7-68.8l1.7,86l1.7-77.4" fill="none" stroke="#e0b400" stroke-width="1" stroke-linejoin="round"/>
<path d="M735.5,1282.1l1.7-0.7l1.7,2.9l1.7-1.5l1.7-0.9l1.7,2.4l1.7-0.2l1.7-0.1l1.7,1l1.7-1.6l1.7,0l1.7-0.9l1.7,1.1l1.7-1.9l1.7-0.7l1.7-0.3l1.7,1.8l1.7,0.3l1.7-1.9l1.7,2.1l1.7-1.6l1.7,4.1l1.7-1.8l1.7-1.4l1.7,2.4l1.7-0.3l1.7,1.1l1.7-4l1.7,2.7l1.7,0.1l1.7,1.2l1.7-4.1l1.7,2l1.7-1.7l1.7,2.7l1.7-2.4l1.7,2.7l1.7-1.6l1.7,1.7l1.7-0.4l1.7,0.8l1.7-2.3l1.7,1.1l1.8,1l1.7-0.5l1.7-2.8l1.7,3.2l1.7-1.3l1.7-2.8l1.7,1.5l1.7-0.6l1.7,1.8l1.7-1.9l1.7-0.1l1.7,4.2l1.7-3.3l1.7,1.7l1.7-1.2l1.7,0.3l1.7,0.1l1.7-0.3l1.7-2.3l1.7,0.6l1.7,0.5l1.7,1.4l1.7-2.5l1.7,3.6l1.7-1l1.7,0l1.7-1.8l1.7,3l1.7-1.7l1.7-2.1l1.7,4.5l1.7-1l1.7-1.4l1.7,1.2l1.7-0.8l1.7-1l1.7,1.7l1.7-0.1l1.7-1l1.7-1l1.7,1.8l1.7,1.7l1.7-3.1l1.7,1.2l1.7,0.2l1.7,1.3l1.7,0.2l1.7-4.5l1.7,1l1.7,1.7l1.7,0.2l1.7-2.5l1.7,1.9l1.7,0.4l1.7-2.7l1.7,1.3l1.7,0.9l1.7-1.7l1.7,0.3l1.7,1.5l1.7-7.1l1.7,5.1l1.7-0.9l1.7,4.1l1.7-2.3l1.7,1.5l1.7-1.6l1.7-0.1l1.7-4.9l1.7,5.1l1.7-1.3l1.7-0.2l1.7-1.4l1.7-0.3l1.7,5.8l1.7-3.7l1.7,0.3l1.7-1.6l1.7,2.7l1.7-2.4l1.7,0.5l1.7,0.9l1.7-3.7l1.7,3.2l1.8,1.3l1.7,1.2l1.7-1.4l1.7-1l1.7,3l1.7-5.3l1.7,0.7l1.7,0.7l1.7,1.8l1.7,0.3l1.7,1.9l1.7-3.5l1.7,1.6l1.7-1.2l1.7,2.5l1.7-5.7l1.7,3l1.7-0.3l1.7-2.5l1.7,4.6l1.7-0.8l1.7,3.1l1.7-4.9l1.7,4.1l1.7-7.2l1.7,6.6l1.7-1.3l1.7-3.1l1.7,1.9l1.7-3.2l1.7,4.3l1.7,1.9l1.7-2.5l1.7-1.5l1.7,2.4l1.7,1.7l1.7,0l1.7-3.3l1.7,3.4l1.7-4.9l1.7,6.1l1.7-5.6l1.7,0.9 L1023.0,1290.4 L735.5,1290.4 Z" fill="#56a64b" fill-opacity="0.01"/>
<path d="M735.5,1282.1l1.7-0.7l1.7,2.9l1.7-1.5l1.7-0.9l1.7,2.4l1.7-0.2l1.7-0.1l1.7,1l1.7-1.6l1.7,0l1.7-0.9l1.7,1.1l1.7-1.9l1.7-0.7l1.7-0.3l1.7,1.8l1.7,0.3l1.7-1.9l1.7,2.1l1.7-1.6l1.7,4.1l1.7-1.8l1.7-1.4l1.7,2.4l1.7-0.3l1.7,1.1l1.7-4l1.7,2.7l1.7,0.1l1.7,1.2l1.7-4.1l1.7,2l1.7-1.7l1.7,2.7l1.7-2.4l1.7,2.7l1.7-1.6l1.7,1.7l1.7-0.4l1.7,0.8l1.7-2.3l1.7,1.1l1.8,1l1.7-0.5l1.7-2.8l1.7,3.2l1.7-1.3l1.7-2.8l1.7,1.5l1.7-0.6l1.7,1.8l1.7-1.9l1.7-0.1l1.7,4.2l1.7-3.3l1.7,1.7l1.7-1.2l1.7,0.3l1.7,0.1l1.7-0.3l1.7-2.3l1.7,0.6l1.7,0.5l1.7,1.4l1.7-2.5l1.7,3.6l1.7-1l1.7,0l1.7-1.8l1.7,3l1.7-1.7l1.7-2.1l1.7,4.5l1.7-1l1.7-1.4l1.7,1.2l1.7-0.8l1.7-1l1.7,1.7l1.7-0.1l1.7-1l1.7-1l1.7,1.8l1.7,1.7l1.7-3.1l1.7,1.2l1.7,0.2l1.7,1.3l1.7,0.2l1.7-4.5l1.7,1l1.7,1.7l1.7,0.2l1.7-2.5l1.7,1.9l1.7,0.4l1.7-2.7l1.7,1.3l1.7,0.9l1.7-1.7l1.7,0.3l1.7,1.5l1.7-7.1l1.7,5.1l1.7-0.9l1.7,4.1l1.7-2.3l1.7,1.5l1.7-1.6l1.7-0.1l1.7-4.9l1.7,5.1l1.7-1.3l1.7-0.2l1.7-1.4l1.7-0.3l1.7,5.8l1.7-3.7l1.7,0.3l1.7-1.6l1.7,2.7l1.7-2.4l1.7,0.5l1.7,0.9l1.7-3.7l1.7,3.2l1.8,1.3l1.7,1.2l1.7-1.4l1.7-1l1.7,3l1.7-5.3l1.7,0.7l1.7,0.7l1.7,1.8l1.7,0.3l1.7,1.9l1.7-3.5l1.7,1.6l1.7-1.2l1.7,2.5l1.7-5.7l1.7,3l1.7-0.3l1.7-2.5l1.7,4.6l1.7-0.8l1.7,3.1l1.7-4.9l1.7,4.1l1.7-7.2l1.7,6.6l1.7-1.3l1.7-3.1l1.7,1.9l1.7-3.2l1.7,4.3l1.7,1.9l1.7-2.5l1.7-1.5l1.7,2.4l1.7,1.7l1.7,0l1.7-3.3l1.7,3.4l1.7-4.9l1.7,6.1l1.7-5.6l1.7,0.9" fill="none" stroke="#56a64b" stroke-width="1" stroke-linejoin="round"/>
<rect x="717.0" y="1323.4" width="14" height="4" rx="2" fill="#56a64b"/>
<text x="739.20" y="1329.10" font-size="12.5" fill="#24292e" textLength="21.0" lengthAdjust="spacing">avg</text>
<rect x="770.9" y="1323.4" width="14" height="4" rx="2" fill="#e0b400"/>
<text x="793.10" y="1329.10" font-size="12.5" fill="#24292e" textLength="43.3" lengthAdjust="spacing">highest</text>
<rect x="1048.5" y="1086.5" width="335" height="257" fill="#ffffff" stroke="#e4e6e7" stroke-width="1" rx="2"/>
<text x="1057.00" y="1107.70" font-size="14.5" fill="#24292e" textLength="249.0" lengthAdjust="spacing" stroke="#24292e" stroke-width="0.2">Ingress TCP connections (per pod)</text>
<circle cx="1330.6" cy="1103" r="5.8" fill="none" stroke="#5b5f63" stroke-width="1.3"/>
<rect x="1329.9499999999998" y="1102.2" width="1.3" height="4" fill="#5b5f63"/><circle cx="1330.6" cy="1100.2" r="0.8" fill="#5b5f63"/>
<line x1="1114.5" y1="1135.6" x2="1114.5" y2="1295.4" stroke="#e6e7e8" stroke-width="1"/>
<text x="1113.90" y="1309.10" font-size="12.3" fill="#24292e" textLength="30.0" lengthAdjust="spacing" text-anchor="middle">15:30</text>
<line x1="1185.5" y1="1135.6" x2="1185.5" y2="1295.4" stroke="#e6e7e8" stroke-width="1"/>
<text x="1184.90" y="1309.10" font-size="12.3" fill="#24292e" textLength="30.0" lengthAdjust="spacing" text-anchor="middle">15:45</text>
<line x1="1256.5" y1="1135.6" x2="1256.5" y2="1295.4" stroke="#e6e7e8" stroke-width="1"/>
<text x="1255.90" y="1309.10" font-size="12.3" fill="#24292e" textLength="30.0" lengthAdjust="spacing" text-anchor="middle">16:00</text>
<line x1="1327.5" y1="1135.6" x2="1327.5" y2="1295.4" stroke="#e6e7e8" stroke-width="1"/>
<text x="1326.90" y="1309.10" font-size="12.3" fill="#24292e" textLength="30.0" lengthAdjust="spacing" text-anchor="middle">16:15</text>
<line x1="1084.1" y1="1149.5" x2="1367" y2="1149.5" stroke="#e6e7e8" stroke-width="1"/>
<text x="1078.10" y="1153.50" font-size="12.3" fill="#24292e" textLength="14.4" lengthAdjust="spacing" text-anchor="end">10</text>
<line x1="1084.1" y1="1185.5" x2="1367" y2="1185.5" stroke="#e6e7e8" stroke-width="1"/>
<text x="1078.10" y="1188.78" font-size="12.3" fill="#24292e" textLength="18.0" lengthAdjust="spacing" text-anchor="end">7.5</text>
<line x1="1084.1" y1="1220.5" x2="1367" y2="1220.5" stroke="#e6e7e8" stroke-width="1"/>
<text x="1078.10" y="1224.05" font-size="12.3" fill="#24292e" textLength="7.2" lengthAdjust="spacing" text-anchor="end">5</text>
<line x1="1084.1" y1="1255.5" x2="1367" y2="1255.5" stroke="#e6e7e8" stroke-width="1"/>
<text x="1078.10" y="1259.33" font-size="12.3" fill="#24292e" textLength="18.0" lengthAdjust="spacing" text-anchor="end">2.5</text>
<line x1="1084.1" y1="1290.5" x2="1367" y2="1290.5" stroke="#e6e7e8" stroke-width="1"/>
<text x="1078.10" y="1294.60" font-size="12.3" fill="#24292e" textLength="7.2" lengthAdjust="spacing" text-anchor="end">0</text>
<path d="M1084.1,1149.3l2,0l2,0l2,0l2,0l2,0l2,0l2,0l2.1,0l2,0l2,0l2,0l2,0l2,0l2,0l2,0l2,0l2,0l2,0l2,0l2,0l2,0l2,0l2,0l2.1,0l2,0l2,0l2,0l2,0l2,0l2,0l2,0l2,0l2,0l2,0l2,0l2,0l2,0l2,0l2,0l2.1,0l2,0l2,0l2,0l2,0l2,0l2,0l2,0l2,0l2,0l2,0l2,0l2,0l2,0l2,0l2.1,0l2,0l2,0l2,0l2,0l2,0l2,0l2,0l2,0l2,0l2,0l2,0l2,0l2,0l2,0l2,0l2.1,0l2,0l2,0l2,0l2,0l2,0l2,0l2,0l2,0l2,0l2,0l2,0l2,0l2,0l2,0l2,0l2.1,0l2,0l2,0l2,0l2,0l2,0l2,0l2,0l2,0l2,0l2,0l2,0l2,0l2,0l2,0l2.1,0l2,0l2,0l2,0l2,0l2,0l2,0l2,0l2,0l2,0l2,0l2,0l2,0l2,0l2,0l2,0l2.1,4.2l2-4.2l2,1.4l2-1.4l2,0l2,0l2,0l2,0l2,5.6l2-4.9l2-0.7l2,4.2l2-4.2l2,0.7l2-0.7l2,0l2.1,0l2,0l2,0l2,0l2,0l2,0l2,0l2,0" fill="none" stroke="#56a64b" stroke-width="1" stroke-linejoin="round"/>
<path d="M1084.1,1149.3l282.9,0 L1367.0,1290.4 L1084.1,1290.4 Z" fill="#e0b400" fill-opacity="0.01"/>
<path d="M1084.1,1149.3l282.9,0" fill="none" stroke="#e0b400" stroke-width="1" stroke-linejoin="round"/>
<path d="M1084.1,1290.4l282.9,0" fill="none" stroke="#5794f2" stroke-width="1" stroke-linejoin="round"/>
<rect x="1061.0" y="1323.4" width="14" height="4" rx="2" fill="#56a64b"/>
<text x="1083.20" y="1329.10" font-size="12.5" fill="#24292e" textLength="21.0" lengthAdjust="spacing">avg</text>
<rect x="1114.9" y="1323.4" width="14" height="4" rx="2" fill="#e0b400"/>
<text x="1137.10" y="1329.10" font-size="12.5" fill="#24292e" textLength="43.3" lengthAdjust="spacing">highest</text>
<rect x="1191.1" y="1323.4" width="14" height="4" rx="2" fill="#5794f2"/>
<text x="1213.30" y="1329.10" font-size="12.5" fill="#24292e" textLength="23.9" lengthAdjust="spacing">limit</text>
</svg>
</body></html>
